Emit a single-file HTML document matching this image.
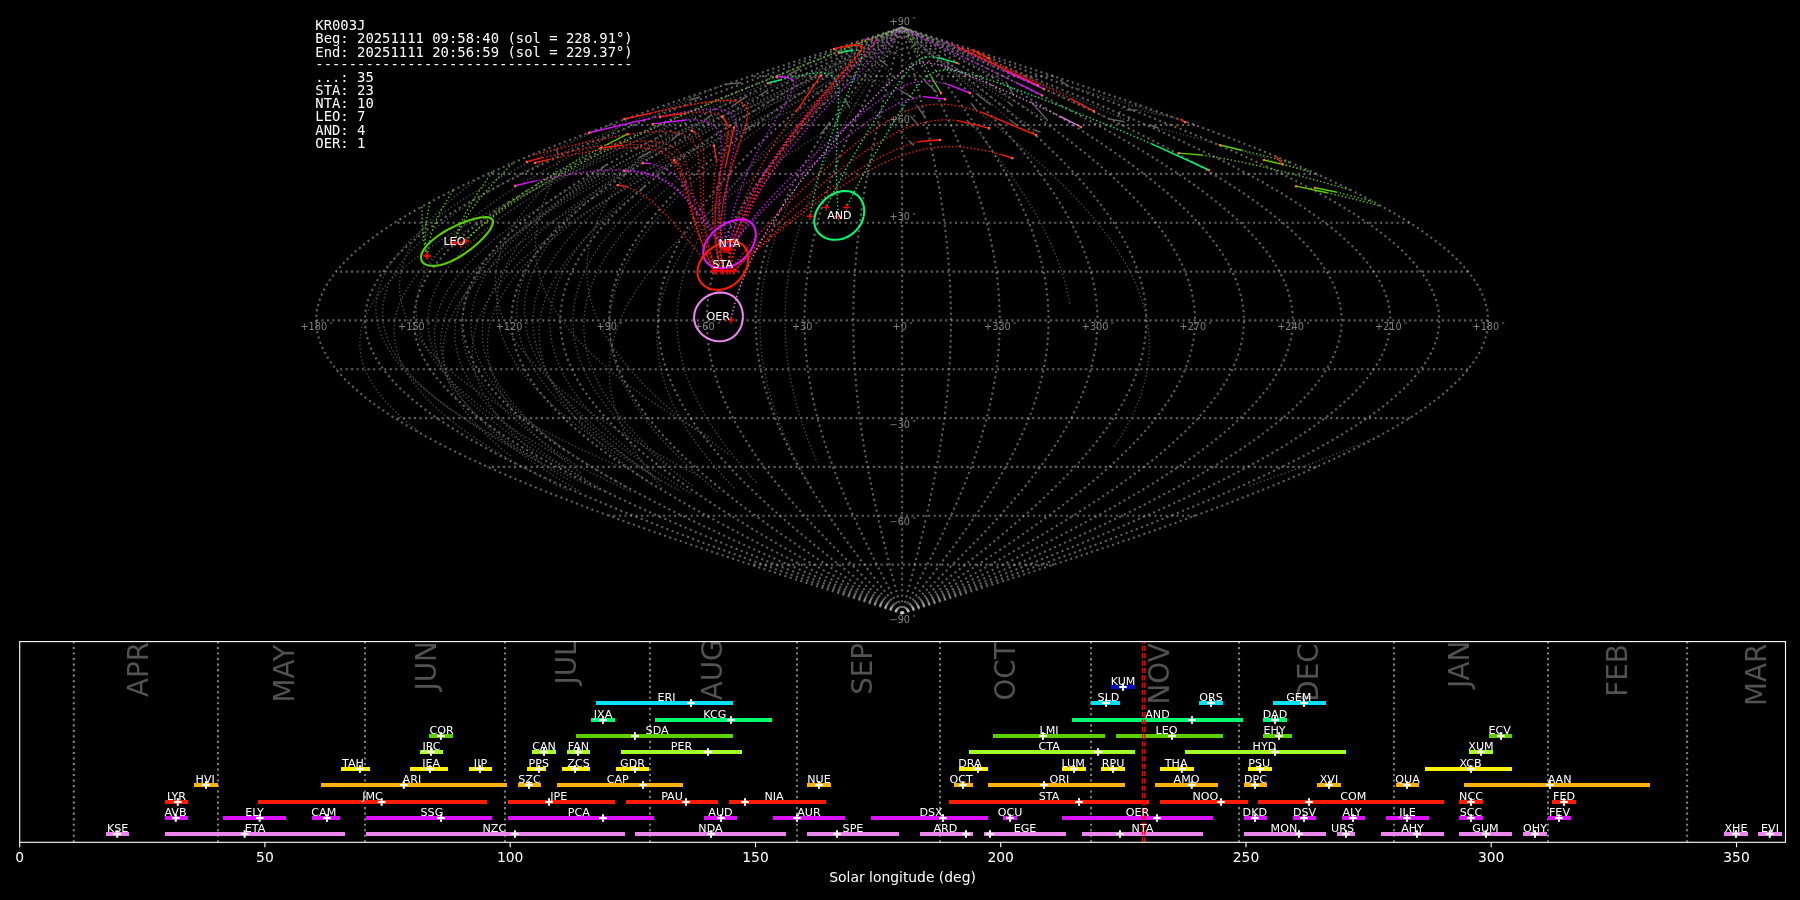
<!DOCTYPE html>
<html lang="en"><head><meta charset="utf-8"><title>KR003J shower association</title>
<style>html,body{margin:0;padding:0;background:#000;width:1800px;height:900px;overflow:hidden}svg{will-change:transform}</style>
</head><body>
<svg width="1800" height="900" viewBox="0 0 1800 900" style="display:block">
<g fill="none" stroke="#c0c0c0" stroke-opacity="0.5" stroke-width="2.083" stroke-dasharray="2.083 3.437">
<path d="M902.1 613.4 L902.1 603.7 L902.1 593.9 L902.1 584.1 L902.1 574.4 L902.1 564.6 L902.1 554.8 L902.1 545.1 L902.1 535.3 L902.1 525.5 L902.1 515.8 L902.1 506 L902.1 496.2 L902.1 486.5 L902.1 476.7 L902.1 466.9 L902.1 457.2 L902.1 447.4 L902.1 437.6 L902.1 427.8 L902.1 418.1 L902.1 408.3 L902.1 398.5 L902.1 388.8 L902.1 379 L902.1 369.2 L902.1 359.5 L902.1 349.7 L902.1 339.9 L902.1 330.2 L902.1 320.4 L902.1 310.6 L902.1 300.9 L902.1 291.1 L902.1 281.3 L902.1 271.6 L902.1 261.8 L902.1 252 L902.1 242.3 L902.1 232.5 L902.1 222.7 L902.1 213 L902.1 203.2 L902.1 193.4 L902.1 183.6 L902.1 173.9 L902.1 164.1 L902.1 154.3 L902.1 144.6 L902.1 134.8 L902.1 125 L902.1 115.3 L902.1 105.5 L902.1 95.7 L902.1 86 L902.1 76.2 L902.1 66.4 L902.1 56.7 L902.1 46.9 L902.1 37.1 L902.1 27.4"/>
<path d="M902.1 613.4 L899.5 603.7 L897 593.9 L894.5 584.1 L891.9 574.4 L889.5 564.6 L887 554.8 L884.6 545.1 L882.2 535.3 L879.9 525.5 L877.7 515.8 L875.5 506 L873.4 496.2 L871.4 486.5 L869.4 476.7 L867.6 466.9 L865.8 457.2 L864.1 447.4 L862.6 437.6 L861.1 427.8 L859.8 418.1 L858.6 408.3 L857.5 398.5 L856.5 388.8 L855.7 379 L854.9 369.2 L854.3 359.5 L853.9 349.7 L853.5 339.9 L853.3 330.2 L853.3 320.4 L853.3 310.6 L853.5 300.9 L853.9 291.1 L854.3 281.3 L854.9 271.6 L855.7 261.8 L856.5 252 L857.5 242.3 L858.6 232.5 L859.8 222.7 L861.1 213 L862.6 203.2 L864.1 193.4 L865.8 183.6 L867.6 173.9 L869.4 164.1 L871.4 154.3 L873.4 144.6 L875.5 134.8 L877.7 125 L879.9 115.3 L882.2 105.5 L884.6 95.7 L887 86 L889.5 76.2 L891.9 66.4 L894.5 56.7 L897 46.9 L899.5 37.1 L902.1 27.4"/>
<path d="M902.1 613.4 L897 603.7 L891.9 593.9 L886.8 584.1 L881.8 574.4 L876.8 564.6 L871.9 554.8 L867.1 545.1 L862.4 535.3 L857.8 525.5 L853.3 515.8 L848.9 506 L844.7 496.2 L840.6 486.5 L836.7 476.7 L833 466.9 L829.5 457.2 L826.2 447.4 L823.1 437.6 L820.2 427.8 L817.5 418.1 L815.1 408.3 L812.9 398.5 L810.9 388.8 L809.2 379 L807.7 369.2 L806.6 359.5 L805.6 349.7 L805 339.9 L804.6 330.2 L804.4 320.4 L804.6 310.6 L805 300.9 L805.6 291.1 L806.6 281.3 L807.7 271.6 L809.2 261.8 L810.9 252 L812.9 242.3 L815.1 232.5 L817.5 222.7 L820.2 213 L823.1 203.2 L826.2 193.4 L829.5 183.6 L833 173.9 L836.7 164.1 L840.6 154.3 L844.7 144.6 L848.9 134.8 L853.3 125 L857.8 115.3 L862.4 105.5 L867.1 95.7 L871.9 86 L876.8 76.2 L881.8 66.4 L886.8 56.7 L891.9 46.9 L897 37.1 L902.1 27.4"/>
<path d="M902.1 613.4 L894.4 603.7 L886.8 593.9 L879.2 584.1 L871.6 574.4 L864.2 564.6 L856.8 554.8 L849.6 545.1 L842.5 535.3 L835.6 525.5 L828.8 515.8 L822.3 506 L816 496.2 L809.9 486.5 L804.1 476.7 L798.5 466.9 L793.2 457.2 L788.2 447.4 L783.6 437.6 L779.2 427.8 L775.2 418.1 L771.5 408.3 L768.2 398.5 L765.3 388.8 L762.8 379 L760.6 369.2 L758.8 359.5 L757.4 349.7 L756.4 339.9 L755.8 330.2 L755.6 320.4 L755.8 310.6 L756.4 300.9 L757.4 291.1 L758.8 281.3 L760.6 271.6 L762.8 261.8 L765.3 252 L768.2 242.3 L771.5 232.5 L775.2 222.7 L779.2 213 L783.6 203.2 L788.2 193.4 L793.2 183.6 L798.5 173.9 L804.1 164.1 L809.9 154.3 L816 144.6 L822.3 134.8 L828.8 125 L835.6 115.3 L842.5 105.5 L849.6 95.7 L856.8 86 L864.2 76.2 L871.6 66.4 L879.2 56.7 L886.8 46.9 L894.4 37.1 L902.1 27.4"/>
<path d="M902.1 613.4 L891.9 603.7 L881.7 593.9 L871.5 584.1 L861.5 574.4 L851.5 564.6 L841.7 554.8 L832.1 545.1 L822.6 535.3 L813.4 525.5 L804.4 515.8 L795.7 506 L787.3 496.2 L779.2 486.5 L771.4 476.7 L764 466.9 L756.9 457.2 L750.3 447.4 L744.1 437.6 L738.3 427.8 L732.9 418.1 L728 408.3 L723.6 398.5 L719.7 388.8 L716.3 379 L713.4 369.2 L711 359.5 L709.1 349.7 L707.8 339.9 L707 330.2 L706.7 320.4 L707 310.6 L707.8 300.9 L709.1 291.1 L711 281.3 L713.4 271.6 L716.3 261.8 L719.7 252 L723.6 242.3 L728 232.5 L732.9 222.7 L738.3 213 L744.1 203.2 L750.3 193.4 L756.9 183.6 L764 173.9 L771.4 164.1 L779.2 154.3 L787.3 144.6 L795.7 134.8 L804.4 125 L813.4 115.3 L822.6 105.5 L832.1 95.7 L841.7 86 L851.5 76.2 L861.5 66.4 L871.5 56.7 L881.7 46.9 L891.9 37.1 L902.1 27.4"/>
<path d="M902.1 613.4 L889.3 603.7 L876.6 593.9 L863.9 584.1 L851.3 574.4 L838.9 564.6 L826.6 554.8 L814.6 545.1 L802.8 535.3 L791.2 525.5 L780 515.8 L769.1 506 L758.6 496.2 L748.4 486.5 L738.7 476.7 L729.4 466.9 L720.6 457.2 L712.3 447.4 L704.5 437.6 L697.3 427.8 L690.6 418.1 L684.5 408.3 L679 398.5 L674.1 388.8 L669.9 379 L666.2 369.2 L663.2 359.5 L660.9 349.7 L659.2 339.9 L658.2 330.2 L657.9 320.4 L658.2 310.6 L659.2 300.9 L660.9 291.1 L663.2 281.3 L666.2 271.6 L669.9 261.8 L674.1 252 L679 242.3 L684.5 232.5 L690.6 222.7 L697.3 213 L704.5 203.2 L712.3 193.4 L720.6 183.6 L729.4 173.9 L738.7 164.1 L748.4 154.3 L758.6 144.6 L769.1 134.8 L780 125 L791.2 115.3 L802.8 105.5 L814.6 95.7 L826.6 86 L838.9 76.2 L851.3 66.4 L863.9 56.7 L876.6 46.9 L889.3 37.1 L902.1 27.4"/>
<path d="M902.1 613.4 L886.8 603.7 L871.5 593.9 L856.3 584.1 L841.2 574.4 L826.3 564.6 L811.5 554.8 L797.1 545.1 L782.9 535.3 L769.1 525.5 L755.6 515.8 L742.5 506 L729.9 496.2 L717.7 486.5 L706 476.7 L694.9 466.9 L684.3 457.2 L674.4 447.4 L665 437.6 L656.3 427.8 L648.3 418.1 L641 408.3 L634.4 398.5 L628.5 388.8 L623.4 379 L619 369.2 L615.5 359.5 L612.7 349.7 L610.7 339.9 L609.5 330.2 L609.1 320.4 L609.5 310.6 L610.7 300.9 L612.7 291.1 L615.5 281.3 L619 271.6 L623.4 261.8 L628.5 252 L634.4 242.3 L641 232.5 L648.3 222.7 L656.3 213 L665 203.2 L674.4 193.4 L684.3 183.6 L694.9 173.9 L706 164.1 L717.7 154.3 L729.9 144.6 L742.5 134.8 L755.6 125 L769.1 115.3 L782.9 105.5 L797.1 95.7 L811.5 86 L826.3 76.2 L841.2 66.4 L856.3 56.7 L871.5 46.9 L886.8 37.1 L902.1 27.4"/>
<path d="M902.1 613.4 L884.2 603.7 L866.4 593.9 L848.6 584.1 L831 574.4 L813.6 564.6 L796.5 554.8 L779.6 545.1 L763 535.3 L746.9 525.5 L731.2 515.8 L715.9 506 L701.1 496.2 L686.9 486.5 L673.3 476.7 L660.4 466.9 L648 457.2 L636.4 447.4 L625.5 437.6 L615.4 427.8 L606 418.1 L597.5 408.3 L589.8 398.5 L582.9 388.8 L577 379 L571.9 369.2 L567.7 359.5 L564.4 349.7 L562.1 339.9 L560.7 330.2 L560.2 320.4 L560.7 310.6 L562.1 300.9 L564.4 291.1 L567.7 281.3 L571.9 271.6 L577 261.8 L582.9 252 L589.8 242.3 L597.5 232.5 L606 222.7 L615.4 213 L625.5 203.2 L636.4 193.4 L648 183.6 L660.4 173.9 L673.3 164.1 L686.9 154.3 L701.1 144.6 L715.9 134.8 L731.2 125 L746.9 115.3 L763 105.5 L779.6 95.7 L796.5 86 L813.6 76.2 L831 66.4 L848.6 56.7 L866.4 46.9 L884.2 37.1 L902.1 27.4"/>
<path d="M902.1 613.4 L881.7 603.7 L861.3 593.9 L841 584.1 L820.9 574.4 L801 564.6 L781.4 554.8 L762.1 545.1 L743.2 535.3 L724.7 525.5 L706.7 515.8 L689.3 506 L672.4 496.2 L656.2 486.5 L640.7 476.7 L625.8 466.9 L611.7 457.2 L598.5 447.4 L586 437.6 L574.4 427.8 L563.7 418.1 L554 408.3 L545.2 398.5 L537.3 388.8 L530.5 379 L524.7 369.2 L519.9 359.5 L516.2 349.7 L513.5 339.9 L511.9 330.2 L511.4 320.4 L511.9 310.6 L513.5 300.9 L516.2 291.1 L519.9 281.3 L524.7 271.6 L530.5 261.8 L537.3 252 L545.2 242.3 L554 232.5 L563.7 222.7 L574.4 213 L586 203.2 L598.5 193.4 L611.7 183.6 L625.8 173.9 L640.7 164.1 L656.2 154.3 L672.4 144.6 L689.3 134.8 L706.7 125 L724.7 115.3 L743.2 105.5 L762.1 95.7 L781.4 86 L801 76.2 L820.9 66.4 L841 56.7 L861.3 46.9 L881.7 37.1 L902.1 27.4"/>
<path d="M902.1 613.4 L879.1 603.7 L856.2 593.9 L833.3 584.1 L810.7 574.4 L788.3 564.6 L766.3 554.8 L744.6 545.1 L723.3 535.3 L702.5 525.5 L682.3 515.8 L662.7 506 L643.7 496.2 L625.5 486.5 L608 476.7 L591.3 466.9 L575.4 457.2 L560.5 447.4 L546.5 437.6 L533.5 427.8 L521.4 418.1 L510.4 408.3 L500.5 398.5 L491.7 388.8 L484.1 379 L477.5 369.2 L472.1 359.5 L468 349.7 L464.9 339.9 L463.1 330.2 L462.5 320.4 L463.1 310.6 L464.9 300.9 L468 291.1 L472.1 281.3 L477.5 271.6 L484.1 261.8 L491.7 252 L500.5 242.3 L510.4 232.5 L521.4 222.7 L533.5 213 L546.5 203.2 L560.5 193.4 L575.4 183.6 L591.3 173.9 L608 164.1 L625.5 154.3 L643.7 144.6 L662.7 134.8 L682.3 125 L702.5 115.3 L723.3 105.5 L744.6 95.7 L766.3 86 L788.3 76.2 L810.7 66.4 L833.3 56.7 L856.2 46.9 L879.1 37.1 L902.1 27.4"/>
<path d="M902.1 613.4 L876.5 603.7 L851 593.9 L825.7 584.1 L800.6 574.4 L775.7 564.6 L751.2 554.8 L727.1 545.1 L703.4 535.3 L680.4 525.5 L657.9 515.8 L636.1 506 L615 496.2 L594.7 486.5 L575.3 476.7 L556.7 466.9 L539.1 457.2 L522.5 447.4 L507 437.6 L492.5 427.8 L479.1 418.1 L466.9 408.3 L455.9 398.5 L446.1 388.8 L437.6 379 L430.3 369.2 L424.4 359.5 L419.7 349.7 L416.4 339.9 L414.4 330.2 L413.7 320.4 L414.4 310.6 L416.4 300.9 L419.7 291.1 L424.4 281.3 L430.3 271.6 L437.6 261.8 L446.1 252 L455.9 242.3 L466.9 232.5 L479.1 222.7 L492.5 213 L507 203.2 L522.5 193.4 L539.1 183.6 L556.7 173.9 L575.3 164.1 L594.7 154.3 L615 144.6 L636.1 134.8 L657.9 125 L680.4 115.3 L703.4 105.5 L727.1 95.7 L751.2 86 L775.7 76.2 L800.6 66.4 L825.7 56.7 L851 46.9 L876.5 37.1 L902.1 27.4"/>
<path d="M902.1 613.4 L874 603.7 L845.9 593.9 L818.1 584.1 L790.4 574.4 L763.1 564.6 L736.1 554.8 L709.6 545.1 L683.6 535.3 L658.2 525.5 L633.5 515.8 L609.5 506 L586.3 496.2 L564 486.5 L542.6 476.7 L522.2 466.9 L502.9 457.2 L484.6 447.4 L467.5 437.6 L451.5 427.8 L436.8 418.1 L423.4 408.3 L411.3 398.5 L400.5 388.8 L391.2 379 L383.2 369.2 L376.6 359.5 L371.5 349.7 L367.8 339.9 L365.6 330.2 L364.9 320.4 L365.6 310.6 L367.8 300.9 L371.5 291.1 L376.6 281.3 L383.2 271.6 L391.2 261.8 L400.5 252 L411.3 242.3 L423.4 232.5 L436.8 222.7 L451.5 213 L467.5 203.2 L484.6 193.4 L502.9 183.6 L522.2 173.9 L542.6 164.1 L564 154.3 L586.3 144.6 L609.5 134.8 L633.5 125 L658.2 115.3 L683.6 105.5 L709.6 95.7 L736.1 86 L763.1 76.2 L790.4 66.4 L818.1 56.7 L845.9 46.9 L874 37.1 L902.1 27.4"/>
<path d="M902.1 613.4 L871.4 603.7 L840.8 593.9 L810.4 584.1 L780.2 574.4 L750.4 564.6 L721 554.8 L692.1 545.1 L663.7 535.3 L636 525.5 L609.1 515.8 L582.9 506 L557.6 496.2 L533.3 486.5 L509.9 476.7 L487.7 466.9 L466.6 457.2 L446.6 447.4 L428 437.6 L410.6 427.8 L394.5 418.1 L379.9 408.3 L366.7 398.5 L354.9 388.8 L344.7 379 L336 369.2 L328.8 359.5 L323.2 349.7 L319.2 339.9 L316.8 330.2 L316 320.4 L316.8 310.6 L319.2 300.9 L323.2 291.1 L328.8 281.3 L336 271.6 L344.7 261.8 L354.9 252 L366.7 242.3 L379.9 232.5 L394.5 222.7 L410.6 213 L428 203.2 L446.6 193.4 L466.6 183.6 L487.7 173.9 L509.9 164.1 L533.3 154.3 L557.6 144.6 L582.9 134.8 L609.1 125 L636 115.3 L663.7 105.5 L692.1 95.7 L721 86 L750.4 76.2 L780.2 66.4 L810.4 56.7 L840.8 46.9 L871.4 37.1 L902.1 27.4"/>
<path d="M902.1 613.4 L932.8 603.7 L963.4 593.9 L993.8 584.1 L1024 574.4 L1053.8 564.6 L1083.2 554.8 L1112.1 545.1 L1140.5 535.3 L1168.2 525.5 L1195.1 515.8 L1221.3 506 L1246.6 496.2 L1270.9 486.5 L1294.3 476.7 L1316.5 466.9 L1337.6 457.2 L1357.6 447.4 L1376.2 437.6 L1393.6 427.8 L1409.7 418.1 L1424.3 408.3 L1437.5 398.5 L1449.3 388.8 L1459.5 379 L1468.2 369.2 L1475.4 359.5 L1481 349.7 L1485 339.9 L1487.4 330.2 L1488.2 320.4 L1487.4 310.6 L1485 300.9 L1481 291.1 L1475.4 281.3 L1468.2 271.6 L1459.5 261.8 L1449.3 252 L1437.5 242.3 L1424.3 232.5 L1409.7 222.7 L1393.6 213 L1376.2 203.2 L1357.6 193.4 L1337.6 183.6 L1316.5 173.9 L1294.3 164.1 L1270.9 154.3 L1246.6 144.6 L1221.3 134.8 L1195.1 125 L1168.2 115.3 L1140.5 105.5 L1112.1 95.7 L1083.2 86 L1053.8 76.2 L1024 66.4 L993.8 56.7 L963.4 46.9 L932.8 37.1 L902.1 27.4"/>
<path d="M902.1 613.4 L930.2 603.7 L958.3 593.9 L986.1 584.1 L1013.8 574.4 L1041.1 564.6 L1068.1 554.8 L1094.6 545.1 L1120.6 535.3 L1146 525.5 L1170.7 515.8 L1194.7 506 L1217.9 496.2 L1240.2 486.5 L1261.6 476.7 L1282 466.9 L1301.3 457.2 L1319.6 447.4 L1336.7 437.6 L1352.7 427.8 L1367.4 418.1 L1380.8 408.3 L1392.9 398.5 L1403.7 388.8 L1413 379 L1421 369.2 L1427.6 359.5 L1432.7 349.7 L1436.4 339.9 L1438.6 330.2 L1439.3 320.4 L1438.6 310.6 L1436.4 300.9 L1432.7 291.1 L1427.6 281.3 L1421 271.6 L1413 261.8 L1403.7 252 L1392.9 242.3 L1380.8 232.5 L1367.4 222.7 L1352.7 213 L1336.7 203.2 L1319.6 193.4 L1301.3 183.6 L1282 173.9 L1261.6 164.1 L1240.2 154.3 L1217.9 144.6 L1194.7 134.8 L1170.7 125 L1146 115.3 L1120.6 105.5 L1094.6 95.7 L1068.1 86 L1041.1 76.2 L1013.8 66.4 L986.1 56.7 L958.3 46.9 L930.2 37.1 L902.1 27.4"/>
<path d="M902.1 613.4 L927.7 603.7 L953.2 593.9 L978.5 584.1 L1003.6 574.4 L1028.5 564.6 L1053 554.8 L1077.1 545.1 L1100.8 535.3 L1123.8 525.5 L1146.3 515.8 L1168.1 506 L1189.2 496.2 L1209.5 486.5 L1228.9 476.7 L1247.5 466.9 L1265.1 457.2 L1281.7 447.4 L1297.2 437.6 L1311.7 427.8 L1325.1 418.1 L1337.3 408.3 L1348.3 398.5 L1358.1 388.8 L1366.6 379 L1373.9 369.2 L1379.8 359.5 L1384.5 349.7 L1387.8 339.9 L1389.8 330.2 L1390.5 320.4 L1389.8 310.6 L1387.8 300.9 L1384.5 291.1 L1379.8 281.3 L1373.9 271.6 L1366.6 261.8 L1358.1 252 L1348.3 242.3 L1337.3 232.5 L1325.1 222.7 L1311.7 213 L1297.2 203.2 L1281.7 193.4 L1265.1 183.6 L1247.5 173.9 L1228.9 164.1 L1209.5 154.3 L1189.2 144.6 L1168.1 134.8 L1146.3 125 L1123.8 115.3 L1100.8 105.5 L1077.1 95.7 L1053 86 L1028.5 76.2 L1003.6 66.4 L978.5 56.7 L953.2 46.9 L927.7 37.1 L902.1 27.4"/>
<path d="M902.1 613.4 L925.1 603.7 L948 593.9 L970.9 584.1 L993.5 574.4 L1015.9 564.6 L1037.9 554.8 L1059.6 545.1 L1080.9 535.3 L1101.7 525.5 L1121.9 515.8 L1141.5 506 L1160.5 496.2 L1178.7 486.5 L1196.2 476.7 L1212.9 466.9 L1228.8 457.2 L1243.7 447.4 L1257.7 437.6 L1270.7 427.8 L1282.8 418.1 L1293.8 408.3 L1303.7 398.5 L1312.5 388.8 L1320.1 379 L1326.7 369.2 L1332.1 359.5 L1336.2 349.7 L1339.3 339.9 L1341.1 330.2 L1341.7 320.4 L1341.1 310.6 L1339.3 300.9 L1336.2 291.1 L1332.1 281.3 L1326.7 271.6 L1320.1 261.8 L1312.5 252 L1303.7 242.3 L1293.8 232.5 L1282.8 222.7 L1270.7 213 L1257.7 203.2 L1243.7 193.4 L1228.8 183.6 L1212.9 173.9 L1196.2 164.1 L1178.7 154.3 L1160.5 144.6 L1141.5 134.8 L1121.9 125 L1101.7 115.3 L1080.9 105.5 L1059.6 95.7 L1037.9 86 L1015.9 76.2 L993.5 66.4 L970.9 56.7 L948 46.9 L925.1 37.1 L902.1 27.4"/>
<path d="M902.1 613.4 L922.5 603.7 L942.9 593.9 L963.2 584.1 L983.3 574.4 L1003.2 564.6 L1022.8 554.8 L1042.1 545.1 L1061 535.3 L1079.5 525.5 L1097.5 515.8 L1114.9 506 L1131.8 496.2 L1148 486.5 L1163.5 476.7 L1178.4 466.9 L1192.5 457.2 L1205.7 447.4 L1218.2 437.6 L1229.8 427.8 L1240.5 418.1 L1250.2 408.3 L1259 398.5 L1266.9 388.8 L1273.7 379 L1279.5 369.2 L1284.3 359.5 L1288 349.7 L1290.7 339.9 L1292.3 330.2 L1292.8 320.4 L1292.3 310.6 L1290.7 300.9 L1288 291.1 L1284.3 281.3 L1279.5 271.6 L1273.7 261.8 L1266.9 252 L1259 242.3 L1250.2 232.5 L1240.5 222.7 L1229.8 213 L1218.2 203.2 L1205.7 193.4 L1192.5 183.6 L1178.4 173.9 L1163.5 164.1 L1148 154.3 L1131.8 144.6 L1114.9 134.8 L1097.5 125 L1079.5 115.3 L1061 105.5 L1042.1 95.7 L1022.8 86 L1003.2 76.2 L983.3 66.4 L963.2 56.7 L942.9 46.9 L922.5 37.1 L902.1 27.4"/>
<path d="M902.1 613.4 L920 603.7 L937.8 593.9 L955.6 584.1 L973.2 574.4 L990.6 564.6 L1007.7 554.8 L1024.6 545.1 L1041.2 535.3 L1057.3 525.5 L1073 515.8 L1088.3 506 L1103.1 496.2 L1117.3 486.5 L1130.9 476.7 L1143.8 466.9 L1156.2 457.2 L1167.8 447.4 L1178.7 437.6 L1188.8 427.8 L1198.2 418.1 L1206.7 408.3 L1214.4 398.5 L1221.3 388.8 L1227.2 379 L1232.3 369.2 L1236.5 359.5 L1239.8 349.7 L1242.1 339.9 L1243.5 330.2 L1244 320.4 L1243.5 310.6 L1242.1 300.9 L1239.8 291.1 L1236.5 281.3 L1232.3 271.6 L1227.2 261.8 L1221.3 252 L1214.4 242.3 L1206.7 232.5 L1198.2 222.7 L1188.8 213 L1178.7 203.2 L1167.8 193.4 L1156.2 183.6 L1143.8 173.9 L1130.9 164.1 L1117.3 154.3 L1103.1 144.6 L1088.3 134.8 L1073 125 L1057.3 115.3 L1041.2 105.5 L1024.6 95.7 L1007.7 86 L990.6 76.2 L973.2 66.4 L955.6 56.7 L937.8 46.9 L920 37.1 L902.1 27.4"/>
<path d="M902.1 613.4 L917.4 603.7 L932.7 593.9 L947.9 584.1 L963 574.4 L977.9 564.6 L992.7 554.8 L1007.1 545.1 L1021.3 535.3 L1035.1 525.5 L1048.6 515.8 L1061.7 506 L1074.3 496.2 L1086.5 486.5 L1098.2 476.7 L1109.3 466.9 L1119.9 457.2 L1129.8 447.4 L1139.2 437.6 L1147.9 427.8 L1155.9 418.1 L1163.2 408.3 L1169.8 398.5 L1175.7 388.8 L1180.8 379 L1185.2 369.2 L1188.7 359.5 L1191.5 349.7 L1193.5 339.9 L1194.7 330.2 L1195.1 320.4 L1194.7 310.6 L1193.5 300.9 L1191.5 291.1 L1188.7 281.3 L1185.2 271.6 L1180.8 261.8 L1175.7 252 L1169.8 242.3 L1163.2 232.5 L1155.9 222.7 L1147.9 213 L1139.2 203.2 L1129.8 193.4 L1119.9 183.6 L1109.3 173.9 L1098.2 164.1 L1086.5 154.3 L1074.3 144.6 L1061.7 134.8 L1048.6 125 L1035.1 115.3 L1021.3 105.5 L1007.1 95.7 L992.7 86 L977.9 76.2 L963 66.4 L947.9 56.7 L932.7 46.9 L917.4 37.1 L902.1 27.4"/>
<path d="M902.1 613.4 L914.9 603.7 L927.6 593.9 L940.3 584.1 L952.9 574.4 L965.3 564.6 L977.6 554.8 L989.6 545.1 L1001.4 535.3 L1013 525.5 L1024.2 515.8 L1035.1 506 L1045.6 496.2 L1055.8 486.5 L1065.5 476.7 L1074.8 466.9 L1083.6 457.2 L1091.9 447.4 L1099.7 437.6 L1106.9 427.8 L1113.6 418.1 L1119.7 408.3 L1125.2 398.5 L1130.1 388.8 L1134.3 379 L1138 369.2 L1141 359.5 L1143.3 349.7 L1145 339.9 L1146 330.2 L1146.3 320.4 L1146 310.6 L1145 300.9 L1143.3 291.1 L1141 281.3 L1138 271.6 L1134.3 261.8 L1130.1 252 L1125.2 242.3 L1119.7 232.5 L1113.6 222.7 L1106.9 213 L1099.7 203.2 L1091.9 193.4 L1083.6 183.6 L1074.8 173.9 L1065.5 164.1 L1055.8 154.3 L1045.6 144.6 L1035.1 134.8 L1024.2 125 L1013 115.3 L1001.4 105.5 L989.6 95.7 L977.6 86 L965.3 76.2 L952.9 66.4 L940.3 56.7 L927.6 46.9 L914.9 37.1 L902.1 27.4"/>
<path d="M902.1 613.4 L912.3 603.7 L922.5 593.9 L932.7 584.1 L942.7 574.4 L952.7 564.6 L962.5 554.8 L972.1 545.1 L981.6 535.3 L990.8 525.5 L999.8 515.8 L1008.5 506 L1016.9 496.2 L1025 486.5 L1032.8 476.7 L1040.2 466.9 L1047.3 457.2 L1053.9 447.4 L1060.1 437.6 L1065.9 427.8 L1071.3 418.1 L1076.2 408.3 L1080.6 398.5 L1084.5 388.8 L1087.9 379 L1090.8 369.2 L1093.2 359.5 L1095.1 349.7 L1096.4 339.9 L1097.2 330.2 L1097.5 320.4 L1097.2 310.6 L1096.4 300.9 L1095.1 291.1 L1093.2 281.3 L1090.8 271.6 L1087.9 261.8 L1084.5 252 L1080.6 242.3 L1076.2 232.5 L1071.3 222.7 L1065.9 213 L1060.1 203.2 L1053.9 193.4 L1047.3 183.6 L1040.2 173.9 L1032.8 164.1 L1025 154.3 L1016.9 144.6 L1008.5 134.8 L999.8 125 L990.8 115.3 L981.6 105.5 L972.1 95.7 L962.5 86 L952.7 76.2 L942.7 66.4 L932.7 56.7 L922.5 46.9 L912.3 37.1 L902.1 27.4"/>
<path d="M902.1 613.4 L909.8 603.7 L917.4 593.9 L925 584.1 L932.6 574.4 L940 564.6 L947.4 554.8 L954.6 545.1 L961.7 535.3 L968.6 525.5 L975.4 515.8 L981.9 506 L988.2 496.2 L994.3 486.5 L1000.1 476.7 L1005.7 466.9 L1011 457.2 L1016 447.4 L1020.6 437.6 L1025 427.8 L1029 418.1 L1032.7 408.3 L1036 398.5 L1038.9 388.8 L1041.4 379 L1043.6 369.2 L1045.4 359.5 L1046.8 349.7 L1047.8 339.9 L1048.4 330.2 L1048.6 320.4 L1048.4 310.6 L1047.8 300.9 L1046.8 291.1 L1045.4 281.3 L1043.6 271.6 L1041.4 261.8 L1038.9 252 L1036 242.3 L1032.7 232.5 L1029 222.7 L1025 213 L1020.6 203.2 L1016 193.4 L1011 183.6 L1005.7 173.9 L1000.1 164.1 L994.3 154.3 L988.2 144.6 L981.9 134.8 L975.4 125 L968.6 115.3 L961.7 105.5 L954.6 95.7 L947.4 86 L940 76.2 L932.6 66.4 L925 56.7 L917.4 46.9 L909.8 37.1 L902.1 27.4"/>
<path d="M902.1 613.4 L907.2 603.7 L912.3 593.9 L917.4 584.1 L922.4 574.4 L927.4 564.6 L932.3 554.8 L937.1 545.1 L941.8 535.3 L946.4 525.5 L950.9 515.8 L955.3 506 L959.5 496.2 L963.6 486.5 L967.5 476.7 L971.2 466.9 L974.7 457.2 L978 447.4 L981.1 437.6 L984 427.8 L986.7 418.1 L989.1 408.3 L991.3 398.5 L993.3 388.8 L995 379 L996.5 369.2 L997.6 359.5 L998.6 349.7 L999.2 339.9 L999.6 330.2 L999.8 320.4 L999.6 310.6 L999.2 300.9 L998.6 291.1 L997.6 281.3 L996.5 271.6 L995 261.8 L993.3 252 L991.3 242.3 L989.1 232.5 L986.7 222.7 L984 213 L981.1 203.2 L978 193.4 L974.7 183.6 L971.2 173.9 L967.5 164.1 L963.6 154.3 L959.5 144.6 L955.3 134.8 L950.9 125 L946.4 115.3 L941.8 105.5 L937.1 95.7 L932.3 86 L927.4 76.2 L922.4 66.4 L917.4 56.7 L912.3 46.9 L907.2 37.1 L902.1 27.4"/>
<path d="M902.1 613.4 L904.7 603.7 L907.2 593.9 L909.7 584.1 L912.3 574.4 L914.7 564.6 L917.2 554.8 L919.6 545.1 L922 535.3 L924.3 525.5 L926.5 515.8 L928.7 506 L930.8 496.2 L932.8 486.5 L934.8 476.7 L936.6 466.9 L938.4 457.2 L940.1 447.4 L941.6 437.6 L943.1 427.8 L944.4 418.1 L945.6 408.3 L946.7 398.5 L947.7 388.8 L948.5 379 L949.3 369.2 L949.9 359.5 L950.3 349.7 L950.7 339.9 L950.9 330.2 L950.9 320.4 L950.9 310.6 L950.7 300.9 L950.3 291.1 L949.9 281.3 L949.3 271.6 L948.5 261.8 L947.7 252 L946.7 242.3 L945.6 232.5 L944.4 222.7 L943.1 213 L941.6 203.2 L940.1 193.4 L938.4 183.6 L936.6 173.9 L934.8 164.1 L932.8 154.3 L930.8 144.6 L928.7 134.8 L926.5 125 L924.3 115.3 L922 105.5 L919.6 95.7 L917.2 86 L914.7 76.2 L912.3 66.4 L909.7 56.7 L907.2 46.9 L904.7 37.1 L902.1 27.4"/>
<path d="M1053.8 564.6 L750.4 564.6"/>
<path d="M1195.1 515.8 L609.1 515.8"/>
<path d="M1316.5 466.9 L487.7 466.9"/>
<path d="M1409.7 418.1 L394.5 418.1"/>
<path d="M1468.2 369.2 L336 369.2"/>
<path d="M1488.2 320.4 L316 320.4"/>
<path d="M1468.2 271.6 L336 271.6"/>
<path d="M1409.7 222.7 L394.5 222.7"/>
<path d="M1316.5 173.9 L487.7 173.9"/>
<path d="M1195.1 125 L609.1 125"/>
<path d="M1053.8 76.2 L750.4 76.2"/>
</g>
<g font-family="'DejaVu Sans','Liberation Sans',sans-serif" font-size="9.72" fill="#808080">
<text x="889.5" y="622.9">−90</text><text x="912.4" y="620" font-size="6.8">°</text>
<text x="889.5" y="525.3">−60</text><text x="912.4" y="522.4" font-size="6.8">°</text>
<text x="889.5" y="427.6">−30</text><text x="912.4" y="424.7" font-size="6.8">°</text>
<text x="892.6" y="329.9">+0</text><text x="909.3" y="327" font-size="6.8">°</text>
<text x="889.5" y="220.4">+30</text><text x="912.4" y="217.5" font-size="6.8">°</text>
<text x="889.5" y="122.7">+60</text><text x="912.4" y="119.8" font-size="6.8">°</text>
<text x="889.5" y="25.1">+90</text><text x="912.4" y="22.2" font-size="6.8">°</text>
<text x="1472.5" y="329.9">+180</text><text x="1501.5" y="327" font-size="6.8">°</text>
<text x="1374.9" y="329.9">+210</text><text x="1403.8" y="327" font-size="6.8">°</text>
<text x="1277.2" y="329.9">+240</text><text x="1306.2" y="327" font-size="6.8">°</text>
<text x="1179.5" y="329.9">+270</text><text x="1208.5" y="327" font-size="6.8">°</text>
<text x="1081.8" y="329.9">+300</text><text x="1110.8" y="327" font-size="6.8">°</text>
<text x="984.1" y="329.9">+330</text><text x="1013.1" y="327" font-size="6.8">°</text>
<text x="791.9" y="329.9">+30</text><text x="814.7" y="327" font-size="6.8">°</text>
<text x="694.2" y="329.9">+60</text><text x="717" y="327" font-size="6.8">°</text>
<text x="596.5" y="329.9">+90</text><text x="619.3" y="327" font-size="6.8">°</text>
<text x="495.7" y="329.9">+120</text><text x="524.7" y="327" font-size="6.8">°</text>
<text x="398.1" y="329.9">+150</text><text x="427" y="327" font-size="6.8">°</text>
<text x="300.4" y="329.9">+180</text><text x="329.4" y="327" font-size="6.8">°</text>
</g>
<g fill="none" stroke="#666666" stroke-opacity="0.7" stroke-width="1.389" stroke-dasharray="1.389 2.292">
<path d="M638.9 157.8 L636.5 159.1 L634 160.3 L631.6 161.6 L629.2 162.8 L626.8 164.1 L624.5 165.4 L622.1 166.6 L619.7 167.9 L617.4 169.1 L615.1 170.4 L612.8 171.7 L610.4 172.9 L608.2 174.2 L605.9 175.4 L603.6 176.7 L601.4 178 L599.1 179.2 L596.9 180.5 L594.7 181.8 L592.5 183 L590.3 184.3 L588.1 185.6 L586 186.8 L583.8 188.1 L581.7 189.4 L579.6 190.7 L577.5 191.9 L575.4 193.2 L573.3 194.5 L571.2 195.7 L569.2 197 L567.2 198.3 L565.2 199.5 L563.2 200.8 L561.2 202.1 L559.2 203.4 L557.3 204.6 L555.3 205.9 L553.4 207.2 L551.5 208.5 L549.6 209.7 L547.7 211 L545.9 212.3 L544 213.5 L542.2 214.8 L540.4 216.1 L538.6 217.4 L536.9 218.6 L535.1 219.9 L533.4 221.2 L531.6 222.5 L529.9 223.8 L528.2 225 L526.6 226.3 L524.9 227.6 L523.3 228.9 L521.7 230.1 L520.1 231.4 L518.5 232.7 L516.9 234 L515.4 235.2 L513.8 236.5 L512.3 237.8 L510.8 239.1 L509.4 240.4 L507.9 241.6 L506.5 242.9 L505.1 244.2 L503.7 245.5 L502.3 246.7 L500.9 248 L499.6 249.3 L498.2 250.6 L496.9 251.9 L495.6 253.1 L494.4 254.4 L493.1 255.7 L491.9 257 L490.7 258.3 L489.5 259.5 L488.3 260.8 L487.2 262.1 L486 263.4 L484.9 264.7 L483.8 265.9 L482.7 267.2 L481.7 268.5 L480.6 269.8 L479.6 271.1 L478.6 272.3 L477.7 273.6 L476.7 274.9 L475.8 276.2 L474.8 277.5 L474 278.7 L473.1 280 L472.2 281.3 L471.4 282.6 L470.6 283.9 L469.8 285.1 L469 286.4 L468.2 287.7 L467.5 289 L466.8 290.3 L466.1 291.6 L465.4 292.8 L464.8 294.1 L464.1 295.4 L463.5 296.7 L462.9 298 L462.4 299.2 L461.8 300.5 L461.3 301.8 L460.8 303.1 L460.3 304.4 L459.8 305.6 L459.4 306.9 L459 308.2 L458.6 309.5 L458.2 310.8 L457.8 312.1 L457.5 313.3 L457.2 314.6 L456.9 315.9 L456.6 317.2 L456.3 318.5 L456.1 319.7 L455.9 321 L455.7 322.3 L455.5 323.6 L455.4 324.9 L455.3 326.2 L455.1 327.4 L455.1 328.7 L455 330 L454.9 331.3 L454.9 332.6 L454.9 333.8 L454.9 335.1 L455 336.4 L455 337.7 L455.1 339 L455.2 340.3 L455.4 341.5 L455.5 342.8 L455.7 344.1 L455.8 345.4 L456.1 346.7 L456.3 347.9 L456.5 349.2 L456.8 350.5 L457.1 351.8 L457.4 353.1 L457.7 354.3 L458.1 355.6 L458.5 356.9 L458.9 358.2 L459.3 359.5 L459.7 360.8 L460.2 362 L460.7 363.3 L461.2 364.6 L461.7 365.9 L462.2 367.2 L462.8 368.4 L463.4 369.7 L464 371 L464.6 372.3 L465.3 373.6 L465.9 374.8 L466.6 376.1 L467.3 377.4 L468 378.7 L468.8 380 L469.6 381.2 L470.4 382.5 L471.2 383.8 L472 385.1 L472.8 386.4 L473.7 387.6 L474.6 388.9 L475.5 390.2 L476.4 391.5 L477.4 392.8 L478.4 394 L479.3 395.3 L480.3 396.6 L481.4 397.9 L482.4 399.1 L483.5 400.4 L484.6 401.7 L485.7 403 L486.8 404.3 L488 405.5 L489.1 406.8 L490.3 408.1 L491.5 409.4 L492.7 410.6 L494 411.9 L495.2 413.2 L496.5 414.5 L497.8 415.7 L499.1 417 L500.5 418.3 L501.8 419.6 L503.2 420.8 L504.6 422.1 L506 423.4 L507.4 424.7 L508.8 425.9 L510.3 427.2 L511.8 428.5 L513.3 429.8 L514.8 431 L516.3 432.3 L517.9 433.6 L519.5 434.9 L521 436.1 L522.6 437.4 L524.3 438.7 L525.9 440 L527.6 441.2 L529.2 442.5 L530.9 443.8 L532.6 445 L534.4 446.3 L536.1 447.6 L537.8 448.8 L539.6 450.1 L541.4 451.4 L543.2 452.7 L545 453.9 L546.9 455.2 L548.7 456.5 L550.6 457.7 L552.5 459 L554.4 460.3 L556.3 461.5 L558.2 462.8 L560.2 464.1 L562.1 465.3 L564.1 466.6 L566.1 467.9 L568.1 469.1 L570.1 470.4 L572.1 471.6 L574.2 472.9 L576.2 474.2 L578.3 475.4 L580.4 476.7 L582.5 477.9 L584.6 479.2 L586.7 480.5 L588.9 481.7 L591 483 L593.2 484.2 L595.4 485.5 L597.6 486.7 L599.8 488 L602 489.2 L604.2 490.5 L606.4 491.7 L608.7 493 L611 494.2"/>
<path d="M640 191.1 L638.3 192.4 L636.6 193.7 L634.9 194.9 L633.2 196.2 L631.5 197.5 L629.9 198.8 L628.2 200.1 L626.6 201.3 L625 202.6 L623.4 203.9 L621.8 205.2 L620.2 206.5 L618.7 207.7 L617.1 209 L615.6 210.3 L614 211.6 L612.5 212.9 L611 214.2 L609.5 215.4 L608.1 216.7 L606.6 218 L605.2 219.3 L603.7 220.6 L602.3 221.8 L600.9 223.1 L599.5 224.4 L598.2 225.7 L596.8 227 L595.5 228.3 L594.1 229.5 L592.8 230.8 L591.5 232.1 L590.2 233.4 L589 234.7 L587.7 236 L586.5 237.3 L585.2 238.5 L584 239.8 L582.8 241.1 L581.6 242.4 L580.5 243.7 L579.3 245 L578.2 246.2 L577.1 247.5 L576 248.8 L574.9 250.1 L573.8 251.4 L572.7 252.7 L571.7 254 L570.7 255.2 L569.6 256.5 L568.7 257.8 L567.7 259.1 L566.7 260.4 L565.8 261.7 L564.8 263 L563.9 264.2 L563 265.5 L562.1 266.8 L561.2 268.1 L560.4 269.4 L559.6 270.7 L558.7 272 L557.9 273.2 L557.1 274.5 L556.4 275.8 L555.6 277.1 L554.9 278.4 L554.2 279.7 L553.5 281 L552.8 282.3 L552.1 283.5 L551.4 284.8 L550.8 286.1 L550.2 287.4 L549.6 288.7 L549 290 L548.4 291.3 L547.9 292.5 L547.3 293.8 L546.8 295.1 L546.3 296.4 L545.8 297.7 L545.3 299 L544.9 300.3 L544.4 301.6 L544 302.8 L543.6 304.1 L543.2 305.4 L542.9 306.7 L542.5 308 L542.2 309.3 L541.9 310.6 L541.6 311.9 L541.3 313.1 L541 314.4 L540.8 315.7 L540.5 317 L540.3 318.3 L540.1 319.6 L539.9 320.9 L539.8 322.1 L539.6 323.4 L539.5 324.7 L539.4 326 L539.3 327.3 L539.2 328.6 L539.2 329.9 L539.1 331.2 L539.1 332.4 L539.1 333.7 L539.1 335 L539.1 336.3 L539.2 337.6 L539.2 338.9 L539.3 340.2 L539.4 341.5 L539.5 342.7 L539.7 344 L539.8 345.3 L540 346.6 L540.2 347.9 L540.4 349.2 L540.6 350.5 L540.8 351.8 L541.1 353 L541.3 354.3 L541.6 355.6 L541.9 356.9 L542.2 358.2 L542.6 359.5 L542.9 360.8 L543.3 362 L543.7 363.3 L544.1 364.6 L544.5 365.9 L545 367.2 L545.4 368.5 L545.9 369.8 L546.4 371 L546.9 372.3 L547.4 373.6 L547.9 374.9 L548.5 376.2 L549.1 377.5 L549.7 378.8 L550.3 380.1 L550.9 381.3 L551.5 382.6 L552.2 383.9 L552.9 385.2 L553.6 386.5 L554.3 387.8 L555 389.1 L555.7 390.3 L556.5 391.6 L557.3 392.9 L558.1 394.2 L558.9 395.5 L559.7 396.8 L560.5 398 L561.4 399.3 L562.2 400.6 L563.1 401.9 L564 403.2 L564.9 404.5 L565.9 405.8 L566.8 407 L567.8 408.3 L568.8 409.6 L569.8 410.9 L570.8 412.2 L571.8 413.5 L572.9 414.7 L573.9 416 L575 417.3 L576.1 418.6 L577.2 419.9 L578.3 421.2 L579.4 422.4 L580.6 423.7 L581.8 425 L582.9 426.3 L584.1 427.6 L585.4 428.9 L586.6 430.1 L587.8 431.4 L589.1 432.7 L590.3 434 L591.6 435.3 L592.9 436.5 L594.2 437.8 L595.6 439.1 L596.9 440.4 L598.3 441.7 L599.6 442.9 L601 444.2 L602.4 445.5 L603.8 446.8 L605.2 448.1 L606.7 449.3 L608.1 450.6 L609.6 451.9 L611.1 453.2 L612.6 454.5 L614.1 455.7 L615.6 457 L617.1 458.3 L618.7 459.6 L620.2 460.8 L621.8 462.1 L623.4 463.4 L625 464.7 L626.6 465.9 L628.2 467.2 L629.8 468.5 L631.5 469.8 L633.1 471 L634.8 472.3 L636.5 473.6 L638.2 474.9 L639.9 476.1 L641.6 477.4 L643.3 478.7 L645.1 479.9 L646.8 481.2 L648.6 482.5 L650.3 483.8"/>
<path d="M557.8 153.3 L558 153.8 L558.1 154.2 L558.3 154.7 L558.4 155.2 L558.5 155.7 L558.5 156.2 L558.6 156.7 L558.6 157.2 L558.7 157.7 L558.7 158.3 L558.7 158.8 L558.6 159.4 L558.6 159.9 L558.5 160.5 L558.5 161.1 L558.4 161.7 L558.3 162.3 L558.2 162.9 L558 163.5 L557.9 164.1 L557.8 164.8 L557.6 165.4 L557.4 166 L557.2 166.7 L557.1 167.3 L556.8 168 L556.6 168.7 L556.4 169.4 L556.2 170.1 L555.9 170.7 L555.7 171.4 L555.4 172.2 L555.2 172.9 L554.9 173.6 L554.6 174.3 L554.4 175 L554.1 175.8 L553.8 176.5 L553.5 177.3 L553.2 178 L552.9 178.8 L552.6 179.6 L552.3 180.3 L551.9 181.1 L551.6 181.9 L551.3 182.7 L551 183.5 L550.6 184.3 L550.3 185.1 L550 185.9 L549.6 186.7 L549.3 187.5 L549 188.4 L548.6 189.2 L548.3 190 L548 190.9 L547.6 191.7 L547.3 192.5 L547 193.4 L546.6 194.3 L546.3 195.1 L546 196 L545.6 196.8 L545.3 197.7 L545 198.6 L544.7 199.5 L544.3 200.3 L544 201.2 L543.7 202.1 L543.4 203 L543.1 203.9 L542.8 204.8 L542.5 205.7 L542.2 206.6 L541.9 207.5 L541.6 208.4 L541.3 209.4 L541.1 210.3 L540.8 211.2 L540.5 212.1 L540.3 213 L540 214 L539.7 214.9 L539.5 215.8 L539.3 216.8 L539 217.7 L538.8 218.7 L538.6 219.6 L538.4 220.6 L538.1 221.5 L537.9 222.5 L537.7 223.4 L537.6 224.4 L537.4 225.4 L537.2 226.3 L537 227.3 L536.9 228.2 L536.7 229.2 L536.6 230.2 L536.4 231.2 L536.3 232.1 L536.2 233.1 L536.1 234.1 L536 235.1 L535.9 236.1 L535.8 237.1 L535.7 238 L535.6 239 L535.6 240 L535.5 241 L535.5 242 L535.4 243 L535.4 244 L535.4 245 L535.4 246 L535.4 247 L535.4 248 L535.4 249 L535.4 250 L535.5 251 L535.5 252 L535.6 253.1 L535.7 254.1 L535.7 255.1 L535.8 256.1 L535.9 257.1 L536 258.1 L536.2 259.2 L536.3 260.2 L536.4 261.2 L536.6 262.2 L536.7 263.2 L536.9 264.3 L537.1 265.3 L537.3 266.3 L537.5 267.4 L537.7 268.4 L537.9 269.4 L538.1 270.4 L538.4 271.5 L538.6 272.5 L538.9 273.5 L539.2 274.6 L539.5 275.6 L539.8 276.6 L540.1 277.7 L540.4 278.7 L540.7 279.8 L541.1 280.8 L541.4 281.8 L541.8 282.9 L542.1 283.9 L542.5 285 L542.9 286 L543.3 287 L543.7 288.1 L544.2 289.1 L544.6 290.2 L545.1 291.2 L545.5 292.3 L546 293.3 L546.5 294.4 L547 295.4 L547.5 296.5 L548 297.5 L548.5 298.6 L549.1 299.6 L549.6 300.7 L550.2 301.7 L550.8 302.8 L551.3 303.8 L551.9 304.9 L552.5 305.9 L553.2 307 L553.8 308 L554.4 309.1 L555.1 310.1 L555.7 311.2 L556.4 312.2 L557.1 313.3 L557.8 314.3 L558.5 315.4 L559.2 316.4 L559.9 317.5 L560.7 318.5 L561.4 319.6 L562.2 320.6 L562.9 321.7 L563.7 322.7 L564.5 323.8 L565.3 324.8 L566.1 325.9 L566.9 326.9 L567.8 328 L568.6 329 L569.5 330.1 L570.3 331.2 L571.2 332.2 L572.1 333.3 L573 334.3 L573.9 335.4 L574.8 336.4 L575.8 337.5 L576.7 338.5 L577.7 339.6 L578.6 340.6 L579.6 341.7 L580.6 342.7 L581.5 343.8 L582.5 344.8 L583.6 345.8 L584.6 346.9 L585.6 347.9 L586.6 349 L587.7 350 L588.8 351.1 L589.8 352.1 L590.9 353.2 L592 354.2 L593.1 355.3 L594.2 356.3 L595.3 357.3 L596.4 358.4 L597.6 359.4 L598.7 360.5 L599.9 361.5 L601 362.5 L602.2 363.6 L603.4 364.6 L604.6 365.6 L605.8 366.7 L607 367.7 L608.2 368.7 L609.4 369.8 L610.6 370.8 L611.9 371.8 L613.1 372.9 L614.4 373.9 L615.7 374.9 L616.9 376 L618.2 377 L619.5 378 L620.8 379 L622.1 380.1 L623.4 381.1 L624.7 382.1 L626.1 383.1 L627.4 384.1 L628.8 385.1 L630.1 386.2 L631.5 387.2 L632.8 388.2 L634.2 389.2 L635.6 390.2 L637 391.2 L638.4 392.2 L639.8 393.2 L641.2 394.2 L642.6 395.2 L644 396.2 L645.5 397.2 L646.9 398.2 L648.3 399.2 L649.8 400.2 L651.2 401.2 L652.7 402.2 L654.2 403.2 L655.6 404.2 L657.1 405.2 L658.6 406.1 L660.1 407.1 L661.6 408.1 L663.1 409.1 L664.6 410.1 L666.1 411 L667.6 412 L669.1 413 L670.6 413.9 L672.2 414.9 L673.7 415.9 L675.2 416.8 L676.8 417.8 L678.3 418.7 L679.9 419.7 L681.4 420.7 L683 421.6 L684.5 422.5 L686.1 423.5 L687.7 424.4 L689.3 425.4 L690.8 426.3 L692.4 427.2 L694 428.2 L695.6 429.1 L697.2 430 L698.8 430.9 L700.4 431.8 L701.9 432.8 L703.5 433.7 L705.2 434.6 L706.8 435.5 L708.4 436.4 L710 437.3 L711.6 438.2"/>
<path d="M725.8 84.4 L722.6 85.6 L719.5 86.8 L716.3 88 L713.2 89.3 L710 90.5 L706.8 91.7 L703.7 93 L700.5 94.2 L697.4 95.4 L694.2 96.7 L691.1 97.9 L687.9 99.1 L684.8 100.4 L681.7 101.6 L678.5 102.9 L675.4 104.1 L672.3 105.4 L669.2 106.6 L666.1 107.9 L663 109.1 L659.9 110.4 L656.8 111.6 L653.7 112.9 L650.6 114.2 L647.6 115.4 L644.5 116.7 L641.5 117.9 L638.4 119.2 L635.4 120.5 L632.4 121.7 L629.4 123 L626.4 124.3 L623.4 125.5 L620.5 126.8 L617.5 128.1 L614.6 129.3 L611.6 130.6 L608.7 131.9 L605.8 133.2 L602.9 134.4 L600 135.7 L597.1 137 L594.2 138.3 L591.4 139.5 L588.6 140.8 L585.7 142.1 L582.9 143.4 L580.1 144.6 L577.4 145.9 L574.6 147.2 L571.8 148.5 L569.1 149.7 L566.4 151 L563.7 152.3 L561 153.6 L558.3 154.9 L555.6 156.1 L553 157.4 L550.4 158.7 L547.7 160 L545.1 161.3 L542.6 162.5 L540 163.8 L537.4 165.1 L534.9 166.4 L532.4 167.7 L529.9 168.9 L527.4 170.2 L524.9 171.5 L522.5 172.8 L520.1 174.1 L517.7 175.4 L515.3 176.6 L512.9 177.9 L510.5 179.2 L508.2 180.5 L505.9 181.8 L503.6 183.1 L501.3 184.4 L499 185.6 L496.8 186.9 L494.5 188.2 L492.3 189.5 L490.1 190.8 L488 192.1 L485.8 193.4 L483.7 194.6 L481.6 195.9 L479.5 197.2 L477.4 198.5 L475.3 199.8 L473.3 201.1 L471.3 202.4 L469.3 203.7 L467.3 204.9 L465.4 206.2 L463.4 207.5 L461.5 208.8 L459.6 210.1 L457.8 211.4 L455.9 212.7 L454.1 214 L452.3 215.2 L450.5 216.5 L448.7 217.8 L447 219.1 L445.3 220.4 L443.6 221.7 L441.9 223 L440.3 224.3 L438.6 225.6 L437 226.8 L435.4 228.1 L433.9 229.4 L432.3 230.7 L430.8 232 L429.3 233.3 L427.8 234.6 L426.4 235.9 L424.9 237.2 L423.5 238.4 L422.1 239.7 L420.8 241 L419.4 242.3 L418.1 243.6 L416.8 244.9 L415.6 246.2 L414.3 247.5 L413.1 248.8 L411.9 250.1 L410.7 251.3 L409.6 252.6 L408.4 253.9 L407.3 255.2 L406.2 256.5 L405.2 257.8 L404.1 259.1 L403.1 260.4 L402.1 261.7 L401.2 263 L400.2 264.3 L399.3 265.5 L398.4 266.8 L397.6 268.1 L396.7 269.4 L395.9 270.7 L395.1 272 L394.3 273.3 L393.6 274.6 L392.8 275.9 L392.1 277.2 L391.5 278.5 L390.8 279.7 L390.2 281 L389.6 282.3 L389 283.6 L388.5 284.9 L387.9 286.2 L387.4 287.5 L387 288.8 L386.5 290.1 L386.1 291.4 L385.7 292.7 L385.3 293.9 L384.9 295.2 L384.6 296.5 L384.3 297.8 L384 299.1 L383.8 300.4 L383.5 301.7 L383.3 303 L383.2 304.3 L383 305.6 L382.9 306.9 L382.8 308.2 L382.7 309.4 L382.6 310.7 L382.6 312 L382.6 313.3 L382.6 314.6 L382.7 315.9 L382.7 317.2 L382.8 318.5 L382.9 319.8 L383.1 321.1 L383.2 322.4 L383.4 323.6 L383.7 324.9 L383.9 326.2 L384.2 327.5 L384.5 328.8 L384.8 330.1 L385.1 331.4 L385.5 332.7 L385.9 334 L386.3 335.3 L386.7 336.6 L387.2 337.9 L387.7 339.1 L388.2 340.4 L388.7 341.7 L389.3 343 L389.9 344.3 L390.5 345.6 L391.1 346.9 L391.8 348.2 L392.5 349.5 L393.2 350.8 L393.9 352.1 L394.7 353.4 L395.5 354.6 L396.3 355.9 L397.1 357.2 L398 358.5 L398.9 359.8 L399.8 361.1 L400.7 362.4 L401.6 363.7 L402.6 365 L403.6 366.3 L404.6 367.6 L405.7 368.8 L406.8 370.1 L407.9 371.4 L409 372.7 L410.1 374 L411.3 375.3 L412.5 376.6 L413.7 377.9 L414.9 379.2 L416.2 380.5 L417.5 381.8 L418.8 383 L420.1 384.3 L421.5 385.6 L422.8 386.9 L424.2 388.2 L425.7 389.5 L427.1 390.8 L428.6 392.1 L430.1 393.4 L431.6 394.7 L433.1 395.9 L434.7 397.2 L436.2 398.5 L437.8 399.8 L439.5 401.1 L441.1 402.4 L442.8 403.7 L444.5 405 L446.2 406.3 L447.9 407.6 L449.7 408.8 L451.4 410.1 L453.2 411.4 L455.1 412.7 L456.9 414 L458.8 415.3 L460.6 416.6 L462.5 417.9 L464.5 419.2 L466.4 420.4 L468.4 421.7 L470.4 423 L472.4 424.3 L474.4 425.6 L476.4 426.9 L478.5 428.2 L480.6 429.5 L482.7 430.8 L484.8 432 L487 433.3 L489.1 434.6 L491.3 435.9 L493.5 437.2 L495.7 438.5 L498 439.8 L500.3 441.1 L502.5 442.3 L504.8 443.6 L507.2 444.9 L509.5 446.2 L511.8 447.5 L514.2 448.8 L516.6 450.1 L519 451.3 L521.5 452.6 L523.9 453.9 L526.4 455.2 L528.8 456.5 L531.3 457.8 L533.9 459.1 L536.4 460.3 L538.9 461.6 L541.5 462.9 L544.1 464.2 L546.7 465.5 L549.3 466.8 L551.9 468 L554.6 469.3 L557.3 470.6 L559.9 471.9 L562.6 473.2 L565.3 474.5 L568.1 475.7 L570.8 477 L573.6 478.3 L576.3 479.6 L579.1 480.9 L581.9 482.1 L584.8 483.4 L587.6 484.7 L590.4 486 L593.3 487.3 L596.2 488.5 L599 489.8"/>
<path d="M732.2 106.1 L729.5 107.4 L726.7 108.7 L724 110 L721.3 111.3 L718.6 112.6 L715.9 113.9 L713.2 115.2 L710.5 116.5 L707.8 117.7 L705.1 119 L702.5 120.3 L699.8 121.6 L697.2 122.9 L694.6 124.2 L691.9 125.5 L689.3 126.8 L686.7 128.1 L684.1 129.4 L681.6 130.7 L679 132 L676.4 133.3 L673.9 134.6 L671.4 135.9 L668.8 137.2 L666.3 138.5 L663.8 139.8 L661.3 141.1 L658.8 142.4 L656.4 143.7 L653.9 145 L651.5 146.3 L649 147.5 L646.6 148.8 L644.2 150.1 L641.8 151.4 L639.4 152.7 L637.1 154 L634.7 155.3 L632.4 156.6 L630 157.9 L627.7 159.2 L625.4 160.5 L623.1 161.8 L620.8 163.1 L618.6 164.4 L616.3 165.7 L614.1 167 L611.9 168.3 L609.7 169.6 L607.5 170.9 L605.3 172.2 L603.1 173.5 L601 174.8 L598.8 176.1 L596.7 177.4 L594.6 178.7 L592.5 180 L590.4 181.3 L588.3 182.6 L586.3 183.9 L584.3 185.2 L582.2 186.5 L580.2 187.8 L578.2 189.1 L576.3 190.4 L574.3 191.7 L572.4 193 L570.5 194.2 L568.5 195.5 L566.7 196.8 L564.8 198.1 L562.9 199.4 L561.1 200.7 L559.2 202 L557.4 203.3 L555.6 204.6 L553.9 205.9 L552.1 207.2 L550.4 208.5 L548.6 209.8 L546.9 211.1 L545.2 212.4 L543.6 213.7 L541.9 215 L540.3 216.3 L538.6 217.6 L537 218.9 L535.4 220.2 L533.9 221.5 L532.3 222.8 L530.8 224.1 L529.3 225.4 L527.8 226.7 L526.3 228 L524.8 229.3 L523.4 230.6 L522 231.9 L520.6 233.2 L519.2 234.5 L517.8 235.8 L516.5 237.1 L515.1 238.4 L513.8 239.7 L512.5 241 L511.2 242.3 L510 243.6 L508.7 244.9 L507.5 246.2 L506.3 247.5 L505.1 248.8 L504 250.1 L502.8 251.4 L501.7 252.7 L500.6 254 L499.5 255.3 L498.5 256.6 L497.4 257.9 L496.4 259.1 L495.4 260.4 L494.4 261.7 L493.4 263 L492.5 264.3 L491.6 265.6 L490.7 266.9 L489.8 268.2 L488.9 269.5 L488.1 270.8 L487.2 272.1 L486.4 273.4 L485.6 274.7 L484.9 276 L484.1 277.3 L483.4 278.6 L482.7 279.9 L482 281.2 L481.3 282.5 L480.7 283.8 L480.1 285.1 L479.5 286.4 L478.9 287.7 L478.3 289 L477.8 290.3 L477.3 291.6 L476.8 292.9 L476.3 294.2 L475.8 295.5 L475.4 296.8 L475 298.1 L474.6 299.4 L474.2 300.7 L473.8 302 L473.5 303.3 L473.2 304.6 L472.9 305.9 L472.6 307.2 L472.3 308.5 L472.1 309.8 L471.9 311.1 L471.7 312.4 L471.5 313.7 L471.4 315 L471.3 316.3 L471.2 317.6 L471.1 318.9 L471 320.2 L471 321.5 L470.9 322.8 L470.9 324.1 L471 325.4 L471 326.7 L471.1 328 L471.1 329.3 L471.2 330.6 L471.4 331.9 L471.5 333.2 L471.7 334.5 L471.9 335.8 L472.1 337 L472.3 338.3 L472.5 339.6 L472.8 340.9 L473.1 342.2 L473.4 343.5 L473.7 344.8 L474.1 346.1 L474.5 347.4 L474.9 348.7 L475.3 350 L475.7 351.3 L476.2 352.6 L476.6 353.9 L477.1 355.2 L477.6 356.5 L478.2 357.8 L478.7 359.1 L479.3 360.4 L479.9 361.7 L480.5 363 L481.2 364.3 L481.8 365.6 L482.5 366.9 L483.2 368.2 L483.9 369.5 L484.7 370.8 L485.4 372.1 L486.2 373.4 L487 374.7 L487.8 376 L488.7 377.3 L489.6 378.6 L490.4 379.9 L491.3 381.2 L492.3 382.5 L493.2 383.8 L494.2 385.1 L495.1 386.4 L496.1 387.7 L497.2 389 L498.2 390.3 L499.3 391.6 L500.3 392.9 L501.4 394.2 L502.6 395.5 L503.7 396.8 L504.9 398.1 L506 399.4 L507.2 400.7 L508.4 402 L509.7 403.3 L510.9 404.6 L512.2 405.9 L513.5 407.2 L514.8 408.5 L516.1 409.7 L517.5 411 L518.8 412.3 L520.2 413.6 L521.6 414.9 L523 416.2 L524.5 417.5 L525.9 418.8 L527.4 420.1 L528.9 421.4 L530.4 422.7 L531.9 424 L533.5 425.3 L535.1 426.6 L536.6 427.9 L538.2 429.2 L539.9 430.5 L541.5 431.8 L543.2 433.1 L544.8 434.4 L546.5 435.7 L548.2 437 L549.9 438.3 L551.7 439.6 L553.4 440.9 L555.2 442.2 L557 443.5 L558.8 444.8 L560.6 446.1 L562.5 447.4 L564.3 448.7 L566.2 450 L568.1 451.3 L570 452.6 L571.9 453.9 L573.8 455.2 L575.8 456.5 L577.8 457.8 L579.7 459.1 L581.7 460.4 L583.8 461.7 L585.8 463 L587.8 464.3 L589.9 465.6 L592 466.9 L594.1 468.1 L596.2 469.4 L598.3 470.7 L600.4 472 L602.6 473.3 L604.7 474.6 L606.9 475.9 L609.1 477.2 L611.3 478.5 L613.5 479.8 L615.8 481.1 L618 482.4 L620.3 483.7 L622.5 485 L624.8 486.3 L627.1 487.6"/>
<path d="M788.9 74.4 L785.7 75.7 L782.5 77 L779.4 78.3 L776.2 79.6 L773 80.9 L769.9 82.2 L766.7 83.4 L763.6 84.7 L760.4 86 L757.3 87.3 L754.2 88.6 L751 89.9 L747.9 91.2 L744.8 92.5 L741.7 93.8 L738.6 95.1 L735.5 96.4 L732.4 97.7 L729.4 99 L726.3 100.3 L723.3 101.6 L720.2 102.9 L717.2 104.2 L714.1 105.5 L711.1 106.8 L708.1 108.1 L705.1 109.4 L702.1 110.6 L699.1 111.9 L696.2 113.2 L693.2 114.5 L690.2 115.8 L687.3 117.1 L684.4 118.4 L681.4 119.7 L678.5 121 L675.6 122.3 L672.7 123.6 L669.9 124.9 L667 126.2 L664.1 127.5 L661.3 128.8 L658.5 130.1 L655.6 131.4 L652.8 132.7 L650 134 L647.2 135.3 L644.5 136.6 L641.7 137.9 L638.9 139.2 L636.2 140.5 L633.5 141.8 L630.8 143.1 L628.1 144.4 L625.4 145.7 L622.7 147 L620.1 148.3 L617.4 149.6 L614.8 150.9 L612.2 152.2 L609.6 153.5 L607 154.8 L604.4 156.1 L601.8 157.4 L599.3 158.7 L596.8 160 L594.2 161.3 L591.7 162.6 L589.3 163.9 L586.8 165.1 L584.3 166.4 L581.9 167.7 L579.5 169 L577.1 170.3 L574.7 171.6 L572.3 172.9 L569.9 174.2 L567.6 175.5 L565.2 176.8 L562.9 178.1 L560.6 179.4 L558.3 180.7 L556.1 182 L553.8 183.3 L551.6 184.6 L549.4 185.9 L547.2 187.2 L545 188.5 L542.9 189.8 L540.7 191.1 L538.6 192.4 L536.5 193.7 L534.4 195 L532.3 196.3 L530.2 197.6 L528.2 198.9 L526.2 200.2 L524.2 201.5 L522.2 202.8 L520.2 204.1 L518.3 205.4 L516.4 206.7 L514.5 208 L512.6 209.3 L510.7 210.6 L508.8 211.9 L507 213.2 L505.2 214.5 L503.4 215.8 L501.6 217.1 L499.9 218.4 L498.1 219.7 L496.4 221 L494.7 222.3 L493 223.6 L491.4 224.9 L489.7 226.2 L488.1 227.5 L486.5 228.8 L484.9 230.1 L483.4 231.4 L481.8 232.7 L480.3 234 L478.8 235.3 L477.3 236.6 L475.9 237.9 L474.5 239.2 L473 240.5 L471.6 241.8 L470.3 243.1 L468.9 244.4 L467.6 245.7 L466.3 247 L465 248.3 L463.7 249.6 L462.5 250.9 L461.2 252.2 L460 253.5 L458.9 254.7 L457.7 256 L456.6 257.3 L455.4 258.6 L454.3 259.9 L453.3 261.2 L452.2 262.5 L451.2 263.8 L450.2 265.1 L449.2 266.4 L448.2 267.7 L447.3 269 L446.4 270.3 L445.5 271.6 L444.6 272.9 L443.7 274.2 L442.9 275.5 L442.1 276.8 L441.3 278.1 L440.5 279.4 L439.8 280.7 L439.1 282 L438.4 283.3 L437.7 284.6 L437 285.9 L436.4 287.2 L435.8 288.5 L435.2 289.8 L434.6 291.1 L434.1 292.4 L433.6 293.7 L433.1 295 L432.6 296.3 L432.2 297.6 L431.7 298.9 L431.3 300.2 L431 301.5 L430.6 302.8 L430.3 304.1 L430 305.4 L429.7 306.7 L429.4 308 L429.2 309.3 L428.9 310.6 L428.7 311.9 L428.6 313.2 L428.4 314.5 L428.3 315.8 L428.2 317.1 L428.1 318.4 L428 319.7 L428 321 L428 322.3 L428 323.6 L428 324.9 L428.1 326.2 L428.1 327.5 L428.2 328.8 L428.4 330.1 L428.5 331.4 L428.7 332.7 L428.9 334 L429.1 335.3 L429.3 336.6 L429.6 337.9 L429.9 339.2 L430.2 340.5 L430.5 341.8 L430.9 343.1 L431.2 344.4 L431.6 345.7 L432.1 347 L432.5 348.3 L433 349.6 L433.5 350.9 L434 352.2 L434.5 353.5 L435.1 354.8 L435.6 356.1 L436.2 357.4 L436.9 358.7 L437.5 360 L438.2 361.3 L438.9 362.6 L439.6 363.8 L440.3 365.1 L441.1 366.4 L441.9 367.7 L442.7 369 L443.5 370.3 L444.4 371.6 L445.2 372.9 L446.1 374.2 L447 375.5 L448 376.8 L448.9 378.1 L449.9 379.4 L450.9 380.7 L451.9 382 L453 383.3 L454.1 384.6 L455.1 385.9 L456.3 387.2 L457.4 388.5 L458.5 389.8 L459.7 391.1 L460.9 392.4 L462.1 393.7 L463.4 395 L464.6 396.3 L465.9 397.6 L467.2 398.9 L468.6 400.2 L469.9 401.5 L471.3 402.8 L472.7 404.1 L474.1 405.4 L475.5 406.7 L477 408 L478.4 409.3 L479.9 410.6 L481.4 411.9 L483 413.2 L484.5 414.5 L486.1 415.8 L487.7 417.1 L489.3 418.4 L490.9 419.7 L492.6 421 L494.3 422.3 L495.9 423.6 L497.7 424.9 L499.4 426.2 L501.1 427.5 L502.9 428.8 L504.7 430.1 L506.5 431.4 L508.3 432.7 L510.2 434 L512.1 435.3 L513.9 436.6 L515.8 437.9 L517.8 439.2 L519.7 440.5 L521.7 441.8 L523.7 443.1 L525.7 444.4 L527.7 445.7 L529.7 447 L531.8 448.3 L533.8 449.6 L535.9 450.9 L538 452.2 L540.1 453.5 L542.3 454.8 L544.4 456.1 L546.6 457.4 L548.8 458.7 L551 460 L553.2 461.2 L555.5 462.5 L557.7 463.8 L560 465.1 L562.3 466.4 L564.6 467.7 L566.9 469 L569.3 470.3 L571.6 471.6 L574 472.9 L576.4 474.2 L578.8 475.5 L581.2 476.8 L583.7 478.1 L586.1 479.4"/>
<path d="M925 81.1 L923.9 80 L922.8 78.8 L921.8 77.7 L920.7 76.5 L919.6 75.4 L918.6 74.3 L917.5 73.2 L916.5 72.1 L915.4 71.1 L914.3 70 L913.3 68.9 L912.2 67.9 L911.2 66.9 L910.2 65.9 L909.1 64.9 L908.1 63.9 L907.1 63 L906 62 L905 61.1 L904 60.3 L903 59.4 L902 58.6 L900.9 57.8 L899.9 57.1 L898.9 56.3 L897.9 55.7 L896.8 55.1 L895.8 54.5 L894.7 54 L893.7 53.5 L892.6 53.1 L891.5 52.7 L890.3 52.4 L889.2 52.2 L888 52 L886.7 51.9 L885.4 51.9 L884.1 51.9 L882.7 52.1 L881.3 52.2 L879.8 52.5 L878.3 52.8 L876.7 53.1 L875 53.6 L873.3 54.1 L871.5 54.6 L869.7 55.2 L867.8 55.8 L865.9 56.5 L863.9 57.2 L861.9 58 L859.8 58.7 L857.7 59.6 L855.6 60.4 L853.4 61.3 L851.1 62.2 L848.9 63.1 L846.6 64.1 L844.2 65.1 L841.9 66.1 L839.5 67.1 L837.1 68.1 L834.7 69.1 L832.3 70.2 L829.8 71.3 L827.3 72.3 L824.8 73.4 L822.3 74.5 L819.8 75.7 L817.3 76.8 L814.7 77.9 L812.2 79 L809.6 80.2 L807.1 81.3 L804.5 82.5 L801.9 83.6 L799.3 84.8 L796.7 86 L794.1 87.2 L791.5 88.4 L788.9 89.5 L786.3 90.7 L783.7 91.9 L781.1 93.1 L778.5 94.3 L775.9 95.5 L773.2 96.8 L770.6 98 L768 99.2 L765.4 100.4 L762.8 101.6 L760.2 102.8 L757.6 104.1 L755 105.3 L752.4 106.5 L749.8 107.8 L747.2 109 L744.6 110.2 L742 111.5 L739.4 112.7 L736.8 114 L734.2 115.2 L731.7 116.4 L729.1 117.7 L726.5 118.9 L724 120.2 L721.4 121.4 L718.9 122.7 L716.3 123.9 L713.8 125.2 L711.3 126.4 L708.8 127.7 L706.3 129 L703.8 130.2 L701.3 131.5 L698.8 132.7 L696.3 134 L693.8 135.3 L691.4 136.5 L688.9 137.8 L686.4 139 L684 140.3 L681.6 141.6 L679.2 142.8 L676.7 144.1 L674.3 145.4 L671.9 146.6 L669.6 147.9 L667.2 149.2 L664.8 150.4 L662.5 151.7 L660.1 153 L657.8 154.3 L655.5 155.5 L653.2 156.8 L650.9 158.1 L648.6 159.3 L646.3 160.6 L644 161.9 L641.8 163.2 L639.5 164.4 L637.3 165.7 L635.1 167 L632.9 168.3 L630.7 169.5 L628.5 170.8 L626.3 172.1 L624.1 173.4 L622 174.6 L619.9 175.9 L617.7 177.2 L615.6 178.5 L613.5 179.7 L611.4 181 L609.4 182.3 L607.3 183.6 L605.3 184.9 L603.2 186.1 L601.2 187.4 L599.2 188.7 L597.2 190 L595.3 191.3 L593.3 192.5 L591.4 193.8 L589.4 195.1 L587.5 196.4 L585.6 197.7 L583.7 198.9 L581.8 200.2 L580 201.5 L578.1 202.8 L576.3 204.1 L574.5 205.4 L572.7 206.6 L570.9 207.9 L569.1 209.2 L567.4 210.5 L565.7 211.8 L563.9 213.1 L562.2 214.3 L560.5 215.6 L558.9 216.9 L557.2 218.2 L555.6 219.5 L554 220.8 L552.3 222 L550.8 223.3 L549.2 224.6 L547.6 225.9 L546.1 227.2 L544.6 228.5 L543.1 229.7 L541.6 231 L540.1 232.3 L538.6 233.6 L537.2 234.9 L535.8 236.2 L534.4 237.5 L533 238.7 L531.6 240 L530.3 241.3 L528.9 242.6 L527.6 243.9 L526.3 245.2 L525 246.5 L523.8 247.7 L522.5 249 L521.3 250.3 L520.1 251.6 L518.9 252.9 L517.7 254.2 L516.6 255.5 L515.4 256.8 L514.3 258 L513.2 259.3 L512.1 260.6 L511.1 261.9 L510 263.2 L509 264.5 L508 265.8 L507 267 L506 268.3 L505.1 269.6 L504.1 270.9 L503.2 272.2 L502.3 273.5 L501.5 274.8 L500.6 276.1 L499.8 277.3 L498.9 278.6 L498.1 279.9 L497.4 281.2 L496.6 282.5 L495.9 283.8 L495.1 285.1 L494.4 286.4 L493.8 287.6 L493.1 288.9 L492.4 290.2 L491.8 291.5 L491.2 292.8 L490.6 294.1 L490.1 295.4 L489.5 296.7 L489 297.9 L488.5 299.2 L488 300.5 L487.5 301.8 L487.1 303.1 L486.7 304.4 L486.3 305.7 L485.9 307 L485.5 308.3 L485.1 309.5 L484.8 310.8 L484.5 312.1 L484.2 313.4 L484 314.7 L483.7 316 L483.5 317.3 L483.3 318.6 L483.1 319.8 L482.9 321.1 L482.8 322.4 L482.6 323.7 L482.5 325 L482.4 326.3 L482.4 327.6 L482.3 328.9 L482.3 330.2 L482.3 331.4 L482.3 332.7 L482.3 334 L482.4 335.3 L482.4 336.6 L482.5 337.9 L482.6 339.2 L482.8 340.5 L482.9 341.7 L483.1 343 L483.3 344.3 L483.5 345.6 L483.7 346.9 L484 348.2 L484.2 349.5 L484.5 350.8 L484.8 352 L485.2 353.3 L485.5 354.6 L485.9 355.9 L486.3 357.2 L486.7 358.5 L487.1 359.8 L487.6 361.1 L488 362.3 L488.5 363.6 L489 364.9 L489.6 366.2 L490.1 367.5 L490.7 368.8 L491.3 370.1 L491.9 371.4 L492.5 372.6 L493.1 373.9 L493.8 375.2 L494.5 376.5 L495.2 377.8 L495.9 379.1 L496.7 380.4 L497.4 381.7 L498.2 382.9 L499 384.2 L499.8 385.5 L500.7 386.8 L501.5 388.1 L502.4 389.4 L503.3 390.7 L504.2 391.9 L505.1 393.2 L506.1 394.5 L507.1 395.8 L508 397.1 L509.1 398.4 L510.1 399.7 L511.1 401 L512.2 402.2 L513.3 403.5 L514.4 404.8 L515.5 406.1 L516.6 407.4 L517.8 408.7 L519 409.9 L520.1 411.2 L521.4 412.5 L522.6 413.8 L523.8 415.1 L525.1 416.4 L526.4 417.7 L527.7 418.9 L529 420.2 L530.3 421.5 L531.7 422.8 L533 424.1 L534.4 425.4 L535.8 426.6 L537.2 427.9 L538.7 429.2 L540.1 430.5 L541.6 431.8 L543.1 433.1 L544.6 434.3 L546.1 435.6 L547.6 436.9 L549.2 438.2 L550.8 439.5 L552.4 440.8 L554 442 L555.6 443.3 L557.2 444.6 L558.9 445.9 L560.5 447.2 L562.2 448.4 L563.9 449.7 L565.6 451"/>
<path d="M976.7 93.9 L975.3 92.6 L973.9 91.3 L972.4 90 L971 88.7 L969.6 87.4 L968.1 86.1 L966.7 84.8 L965.2 83.5 L963.8 82.2 L962.3 80.9 L960.9 79.6 L959.4 78.3 L958 77 L956.5 75.7 L955.1 74.4 L953.6 73.1 L952.1 71.8 L950.6 70.5 L949.2 69.2 L947.7 67.9 L946.2 66.6 L944.7 65.3 L943.3 64 L941.8 62.7 L940.3 61.4 L938.8 60.1 L937.3 58.8 L935.8 57.5 L934.3 56.2 L932.8 54.9 L931.3 53.6 L929.8 52.3 L928.3 51 L926.8 49.7 L925.3 48.4 L923.8 47.2 L922.3 45.9 L920.8 44.6 L919.3 43.3 L917.8 42 L916.3 40.7 L914.8 39.4 L913.3 38.1 L911.8 36.8 L910.3 35.5 L908.8 34.2 L907.4 33 L905.9 31.7 L904.5 30.5 L903.1 29.4 L901.8 28.6 L900.3 29 L898.2 30 L895.8 31.2 L893.3 32.4 L890.8 33.7 L888.2 35 L885.7 36.3 L883.2 37.6 L880.6 38.9 L878.1 40.2 L875.5 41.4 L872.9 42.7 L870.4 44 L867.8 45.3 L865.3 46.6 L862.7 47.9 L860.2 49.2 L857.6 50.5 L855.1 51.8 L852.5 53.1 L850 54.4 L847.5 55.7 L844.9 57 L842.4 58.3 L839.8 59.6 L837.3 60.9 L834.8 62.2 L832.3 63.5 L829.7 64.8 L827.2 66.1 L824.7 67.4 L822.2 68.7 L819.7 70 L817.2 71.3 L814.7 72.6 L812.2 73.9 L809.7 75.2 L807.2 76.5 L804.7 77.8 L802.3 79.1 L799.8 80.4 L797.3 81.7 L794.9 83 L792.4 84.3 L790 85.6 L787.5 86.9 L785.1 88.2 L782.6 89.5 L780.2 90.8 L777.8 92.1 L775.4 93.4 L772.9 94.7 L770.5 96 L768.1 97.3 L765.8 98.6 L763.4 99.9 L761 101.2 L758.6 102.5 L756.3 103.8 L753.9 105.1 L751.5 106.4 L749.2 107.7 L746.9 109 L744.5 110.3 L742.2 111.6 L739.9 112.9 L737.6 114.2 L735.3 115.5 L733 116.8 L730.7 118.1 L728.5 119.4 L726.2 120.7 L723.9 122 L721.7 123.3 L719.5 124.6 L717.2 125.9 L715 127.2 L712.8 128.5 L710.6 129.8 L708.4 131.1 L706.2 132.4 L704 133.7 L701.9 134.9 L699.7 136.2 L697.6 137.5 L695.4 138.8 L693.3 140.1 L691.2 141.4 L689.1 142.7 L687 144 L684.9 145.3 L682.8 146.6 L680.8 147.9 L678.7 149.2 L676.7 150.5 L674.7 151.8 L672.6 153.1 L670.6 154.4 L668.6 155.7 L666.7 157 L664.7 158.3 L662.7 159.6 L660.8 160.9 L658.8 162.2 L656.9 163.5 L655 164.8 L653.1 166.1 L651.2 167.4 L649.3 168.7 L647.4 170 L645.6 171.3 L643.7 172.6 L641.9 173.9 L640.1 175.2 L638.3 176.5 L636.5 177.8 L634.7 179.1 L633 180.4 L631.2 181.7 L629.5 183 L627.7 184.3 L626 185.6 L624.3 186.9 L622.6 188.2 L621 189.5 L619.3 190.8 L617.7 192.1 L616 193.4 L614.4 194.7 L612.8 196 L611.2 197.3 L609.6 198.6 L608.1 199.9 L606.5 201.2 L605 202.5 L603.5 203.8 L602 205.1 L600.5 206.4 L599 207.7 L597.6 209 L596.1 210.3 L594.7 211.6 L593.3 212.9 L591.9 214.2 L590.5 215.5 L589.1 216.8 L587.8 218.1 L586.4 219.4 L585.1 220.7 L583.8 222 L582.5 223.3 L581.2 224.6 L580 225.9 L578.7 227.2 L577.5 228.5 L576.3 229.8 L575.1 231.1 L573.9 232.4 L572.7 233.7 L571.6 235 L570.4 236.3 L569.3 237.6 L568.2 238.9 L567.1 240.2 L566 241.5 L565 242.8 L563.9 244.1 L562.9 245.4 L561.9 246.7 L560.9 248 L560 249.3 L559 250.6 L558.1 251.9 L557.1 253.2 L556.2 254.5 L555.3 255.8 L554.5 257.1 L553.6 258.4 L552.8 259.7 L552 261 L551.1 262.3 L550.4 263.6 L549.6 264.9 L548.8 266.2 L548.1 267.5 L547.4 268.8 L546.7 270.1 L546 271.4 L545.3 272.7 L544.7 274 L544 275.3 L543.4 276.6 L542.8 277.9 L542.2 279.2 L541.7 280.5 L541.1 281.8 L540.6 283.1 L540.1 284.4 L539.6 285.7 L539.1 287 L538.7 288.3 L538.2 289.6 L537.8 290.9 L537.4 292.2 L537 293.5 L536.6 294.8 L536.3 296.1 L536 297.4 L535.6 298.7 L535.3 300 L535.1 301.3 L534.8 302.6 L534.6 303.9 L534.3 305.2 L534.1 306.5 L533.9 307.8 L533.8 309.1 L533.6 310.4 L533.5 311.7 L533.3 313 L533.2 314.3 L533.2 315.6 L533.1 316.9 L533 318.2 L533 319.4 L533 320.7 L533 322 L533 323.3 L533.1 324.6 L533.1 325.9 L533.2 327.2 L533.3 328.5 L533.4 329.8 L533.5 331.1 L533.7 332.4 L533.9 333.7 L534 335 L534.2 336.3 L534.5 337.6 L534.7 338.9 L535 340.2 L535.2 341.5 L535.5 342.8 L535.8 344.1 L536.2 345.4 L536.5 346.7 L536.9 348 L537.2 349.3 L537.6 350.6 L538.1 351.9 L538.5 353.2 L538.9 354.5 L539.4 355.8 L539.9 357.1 L540.4 358.4 L540.9 359.7 L541.5 361 L542 362.3 L542.6 363.6 L543.2 364.9 L543.8 366.2 L544.4 367.5 L545 368.8 L545.7 370.1 L546.4 371.4 L547.1 372.7 L547.8 374 L548.5 375.3 L549.3 376.6 L550 377.9 L550.8 379.2 L551.6 380.5 L552.4 381.8 L553.3 383.1 L554.1 384.4 L555 385.7 L555.8 387 L556.7 388.3 L557.7 389.6 L558.6 390.9 L559.5 392.2 L560.5 393.5 L561.5 394.8 L562.5 396.1 L563.5 397.4 L564.5 398.7 L565.6 400 L566.6 401.3 L567.7 402.6 L568.8 403.9 L569.9 405.2 L571.1 406.5 L572.2 407.8 L573.4 409.1 L574.6 410.4 L575.7 411.7 L577 413 L578.2 414.3 L579.4 415.6 L580.7 416.9 L581.9 418.2 L583.2 419.5 L584.5 420.8 L585.9 422.1 L587.2 423.4 L588.5 424.7 L589.9 426 L591.3 427.3 L592.7 428.6 L594.1 429.9 L595.5 431.2 L596.9 432.5 L598.4 433.8 L599.9 435.1 L601.3 436.4 L602.8 437.7 L604.4 439 L605.9 440.3 L607.4 441.6 L609 442.9 L610.5 444.2 L612.1 445.5 L613.7 446.8 L615.3 448.1 L617 449.4 L618.6 450.7 L620.3 452 L621.9 453.3 L623.6 454.6 L625.3 455.9 L627 457.2 L628.7 458.5 L630.5 459.8 L632.2 461.1 L634 462.4 L635.7 463.7 L637.5 465 L639.3 466.3 L641.1 467.6 L643 468.9 L644.8 470.2 L646.6 471.5 L648.5 472.8 L650.4 474.1 L652.3 475.4 L654.2 476.7 L656.1 478 L658 479.3 L659.9 480.6 L661.9 481.9"/>
<path d="M1006.1 82.2 L1003.7 80.9 L1001.3 79.6 L998.9 78.3 L996.4 77 L994 75.7 L991.6 74.4 L989.1 73.1 L986.7 71.8 L984.2 70.5 L981.8 69.2 L979.3 67.9 L976.9 66.6 L974.4 65.3 L972 64 L969.5 62.7 L967 61.4 L964.5 60.1 L962.1 58.8 L959.6 57.5 L957.1 56.2 L954.6 54.9 L952.1 53.6 L949.6 52.3 L947.1 51 L944.7 49.7 L942.2 48.4 L939.7 47.1 L937.2 45.8 L934.7 44.5 L932.2 43.2 L929.6 41.9 L927.1 40.6 L924.6 39.3 L922.1 38 L919.6 36.7 L917.1 35.4 L914.6 34.1 L912.1 32.9 L909.6 31.6 L907.1 30.3 L904.7 29 L902.6 28 L901.3 28.6 L899.8 29.8 L898.3 31 L896.7 32.3 L895.2 33.6 L893.6 34.9 L892 36.2 L890.5 37.5 L888.9 38.8 L887.4 40.1 L885.8 41.4 L884.2 42.7 L882.7 44 L881.1 45.3 L879.5 46.6 L878 47.9 L876.4 49.2 L874.9 50.5 L873.3 51.8 L871.8 53.1 L870.2 54.4 L868.7 55.7 L867.1 57 L865.6 58.3 L864 59.6 L862.5 60.9 L860.9 62.2 L859.4 63.5 L857.9 64.8 L856.3 66.1 L854.8 67.4 L853.3 68.7 L851.7 70 L850.2 71.3 L848.7 72.6 L847.2 73.9 L845.6 75.2 L844.1 76.5 L842.6 77.8 L841.1 79.1 L839.6 80.4 L838.1 81.7 L836.6 83 L835.1 84.3 L833.6 85.6 L832.1 86.9 L830.6 88.2 L829.1 89.5 L827.6 90.8 L826.2 92.1 L824.7 93.4 L823.2 94.7 L821.8 96 L820.3 97.3 L818.8 98.6 L817.4 99.9 L815.9 101.2 L814.5 102.5 L813 103.8 L811.6 105.1 L810.2 106.4 L808.7 107.7 L807.3 109 L805.9 110.3 L804.5 111.6 L803.1 112.9 L801.7 114.2 L800.3 115.5 L798.9 116.8 L797.5 118.1 L796.1 119.4 L794.7 120.7 L793.3 121.9 L792 123.2 L790.6 124.5 L789.2 125.8 L787.9 127.1 L786.5 128.4 L785.2 129.7 L783.9 131 L782.5 132.3 L781.2 133.6 L779.9 134.9 L778.6 136.2 L777.3 137.5 L776 138.8 L774.7 140.1 L773.4 141.4 L772.1 142.7 L770.8 144 L769.5 145.3 L768.3 146.6 L767 147.9 L765.8 149.2 L764.5 150.5 L763.3 151.8 L762.1 153.1 L760.8 154.4 L759.6 155.7 L758.4 157 L757.2 158.3 L756 159.6 L754.8 160.9 L753.6 162.2 L752.5 163.5 L751.3 164.8 L750.1 166.1 L749 167.4 L747.8 168.7 L746.7 170 L745.6 171.3 L744.4 172.6 L743.3 173.9 L742.2 175.2 L741.1 176.5 L740 177.8 L738.9 179.1 L737.9 180.4 L736.8 181.7 L735.7 183 L734.7 184.3 L733.6 185.6 L732.6 186.9 L731.6 188.2 L730.6 189.5 L729.6 190.8 L728.6 192.1 L727.6 193.4 L726.6 194.7 L725.6 196 L724.6 197.3 L723.7 198.6 L722.7 199.9 L721.8 201.2 L720.8 202.5 L719.9 203.8 L719 205.1 L718.1 206.4 L717.2 207.7 L716.3 209 L715.4 210.3 L714.5 211.6 L713.7 212.9 L712.8 214.2 L712 215.5 L711.2 216.8 L710.3 218.1 L709.5 219.4 L708.7 220.7 L707.9 222 L707.1 223.3 L706.3 224.6 L705.6 225.9 L704.8 227.2 L704.1 228.5 L703.3 229.8 L702.6 231.1 L701.9 232.4 L701.2 233.7 L700.5 235 L699.8 236.3 L699.1 237.6 L698.4 238.9 L697.7 240.2 L697.1 241.5 L696.5 242.8 L695.8 244.1 L695.2 245.4 L694.6 246.7 L694 248 L693.4 249.3 L692.8 250.6 L692.2 251.9 L691.7 253.2 L691.1 254.5 L690.6 255.8 L690 257.1 L689.5 258.4 L689 259.7 L688.5 261 L688 262.3 L687.5 263.6 L687.1 264.9 L686.6 266.2 L686.2 267.5 L685.7 268.8 L685.3 270.1 L684.9 271.4 L684.5 272.7 L684.1 274 L683.7 275.3 L683.3 276.6 L683 277.9 L682.6 279.2 L682.3 280.5 L681.9 281.8 L681.6 283.1 L681.3 284.4 L681 285.7 L680.7 287 L680.4 288.3 L680.2 289.6 L679.9 290.9 L679.7 292.2 L679.4 293.5 L679.2 294.8 L679 296.1 L678.8 297.4 L678.6 298.7 L678.4 300 L678.2 301.3 L678.1 302.6 L677.9 303.9 L677.8 305.2 L677.7 306.5 L677.6 307.8 L677.5 309.1 L677.4 310.4 L677.3 311.7 L677.2 313 L677.1 314.3 L677.1 315.5 L677.1 316.8 L677 318.1 L677 319.4 L677 320.7 L677 322 L677 323.3 L677 324.6 L677.1 325.9 L677.1 327.2 L677.2 328.5 L677.3 329.8 L677.3 331.1 L677.4 332.4 L677.5 333.7 L677.6 335 L677.8 336.3 L677.9 337.6 L678 338.9 L678.2 340.2 L678.4 341.5 L678.6 342.8 L678.7 344.1 L678.9 345.4 L679.2 346.7 L679.4 348 L679.6 349.3 L679.8 350.6 L680.1 351.9 L680.4 353.2 L680.6 354.5 L680.9 355.8 L681.2 357.1 L681.5 358.4 L681.9 359.7 L682.2 361 L682.5 362.3 L682.9 363.6 L683.2 364.9 L683.6 366.2 L684 367.5 L684.4 368.8 L684.8 370.1 L685.2 371.4 L685.6 372.7 L686.1 374 L686.5 375.3 L687 376.6 L687.4 377.9 L687.9 379.2 L688.4 380.5 L688.9 381.8 L689.4 383.1 L689.9 384.4 L690.4 385.7 L691 387 L691.5 388.3 L692.1 389.6 L692.7 390.9 L693.2 392.2 L693.8 393.5 L694.4 394.8 L695 396.1 L695.7 397.4 L696.3 398.7 L696.9 400 L697.6 401.3 L698.2 402.6 L698.9 403.9 L699.6 405.2 L700.3 406.5 L701 407.8 L701.7 409.1 L702.4 410.4 L703.1 411.7 L703.9 413 L704.6 414.3 L705.4 415.6 L706.1 416.9 L706.9 418.2 L707.7 419.5 L708.5 420.8 L709.3 422.1 L710.1 423.4 L710.9 424.7 L711.8 426 L712.6 427.3 L713.5 428.6 L714.3 429.9 L715.2 431.2 L716.1 432.5 L717 433.8 L717.9 435.1 L718.8 436.4 L719.7 437.7 L720.6 439 L721.5 440.3 L722.5 441.6 L723.4 442.9 L724.4 444.2 L725.3 445.5 L726.3 446.8 L727.3 448.1 L728.3 449.4 L729.3 450.7 L730.3 452 L731.3 453.3 L732.3 454.6 L733.4 455.9 L734.4 457.2 L735.5 458.5 L736.5 459.8 L737.6 461.1 L738.7 462.4 L739.8 463.7 L740.8 465 L741.9 466.3 L743 467.6 L744.2 468.9 L745.3 470.2 L746.4 471.5 L747.5 472.8 L748.7 474.1 L749.8 475.4 L751 476.7 L752.2 478 L753.3 479.3 L754.5 480.6 L755.7 481.9 L756.9 483.2 L758.1 484.5"/>
<path d="M1047.8 120.6 L1045.7 119.3 L1043.6 118.1 L1041.5 116.8 L1039.3 115.5 L1037.2 114.3 L1035.1 113 L1032.9 111.8 L1030.8 110.5 L1028.6 109.3 L1026.5 108 L1024.3 106.7 L1022.2 105.5 L1020 104.2 L1017.9 103 L1015.7 101.7 L1013.5 100.5 L1011.3 99.3 L1009.2 98 L1007 96.8 L1004.8 95.5 L1002.6 94.3 L1000.5 93.1 L998.3 91.8 L996.1 90.6 L993.9 89.4 L991.7 88.2 L989.6 86.9 L987.4 85.7 L985.2 84.5 L983 83.3 L980.8 82.1 L978.7 80.9 L976.5 79.7 L974.3 78.5 L972.2 77.3 L970 76.2 L967.9 75 L965.7 73.8 L963.6 72.7 L961.5 71.5 L959.4 70.4 L957.2 69.2 L955.2 68.1 L953.1 67 L951 65.9 L948.9 64.8 L946.9 63.7 L944.8 62.6 L942.8 61.6 L940.8 60.6 L938.9 59.6 L936.9 58.6 L935 57.6 L933.1 56.7 L931.2 55.8 L929.4 54.9 L927.6 54 L925.8 53.2 L924.1 52.4 L922.4 51.7 L920.7 51 L919.1 50.4 L917.6 49.9 L916 49.4 L914.5 48.9 L913.1 48.6 L911.7 48.3 L910.3 48.1 L909 47.9 L907.7 47.9 L906.4 47.9 L905.1 48 L903.8 48.2 L902.6 48.5 L901.3 48.8 L900.1 49.2 L898.8 49.7 L897.5 50.3 L896.2 50.9 L894.9 51.5 L893.6 52.2 L892.3 53 L890.9 53.8 L889.6 54.6 L888.2 55.5 L886.8 56.4 L885.4 57.3 L884 58.3 L882.6 59.3 L881.1 60.3 L879.7 61.3 L878.2 62.3 L876.7 63.4 L875.2 64.5 L873.7 65.6 L872.2 66.7 L870.7 67.8 L869.2 68.9 L867.7 70 L866.1 71.2 L864.6 72.3 L863 73.5 L861.5 74.6 L859.9 75.8 L858.4 77 L856.8 78.2 L855.3 79.4 L853.7 80.6 L852.1 81.8 L850.6 83 L849 84.2 L847.4 85.4 L845.8 86.6 L844.3 87.8 L842.7 89 L841.1 90.3 L839.5 91.5 L838 92.7 L836.4 93.9 L834.8 95.2 L833.3 96.4 L831.7 97.7 L830.1 98.9 L828.5 100.1 L827 101.4 L825.4 102.6 L823.8 103.9 L822.3 105.1 L820.7 106.4 L819.2 107.6 L817.6 108.9 L816.1 110.1 L814.5 111.4 L813 112.7 L811.4 113.9 L809.9 115.2 L808.3 116.4 L806.8 117.7 L805.3 119 L803.8 120.2 L802.2 121.5 L800.7 122.8 L799.2 124 L797.7 125.3 L796.2 126.6 L794.7 127.8 L793.2 129.1 L791.7 130.4 L790.2 131.6 L788.7 132.9 L787.2 134.2 L785.7 135.5 L784.3 136.7 L782.8 138 L781.4 139.3 L779.9 140.6 L778.4 141.8 L777 143.1 L775.6 144.4 L774.1 145.7 L772.7 146.9 L771.3 148.2 L769.9 149.5 L768.4 150.8 L767 152 L765.6 153.3 L764.2 154.6 L762.9 155.9 L761.5 157.2 L760.1 158.4 L758.7 159.7 L757.4 161 L756 162.3 L754.7 163.6 L753.3 164.9 L752 166.1 L750.7 167.4 L749.3 168.7 L748 170 L746.7 171.3 L745.4 172.5 L744.1 173.8 L742.8 175.1 L741.6 176.4 L740.3 177.7 L739 179 L737.8 180.3 L736.5 181.5 L735.3 182.8 L734.1 184.1 L732.8 185.4 L731.6 186.7 L730.4 188 L729.2 189.2 L728 190.5 L726.8 191.8 L725.7 193.1 L724.5 194.4 L723.3 195.7 L722.2 197 L721 198.3 L719.9 199.5 L718.8 200.8 L717.7 202.1 L716.5 203.4 L715.4 204.7 L714.4 206 L713.3 207.3 L712.2 208.6 L711.1 209.8 L710.1 211.1 L709 212.4 L708 213.7 L707 215 L706 216.3 L704.9 217.6 L703.9 218.9 L703 220.1 L702 221.4 L701 222.7 L700 224 L699.1 225.3 L698.1 226.6 L697.2 227.9 L696.3 229.2 L695.4 230.5 L694.5 231.7 L693.6 233 L692.7 234.3 L691.8 235.6 L691 236.9 L690.1 238.2 L689.3 239.5 L688.4 240.8 L687.6 242.1 L686.8 243.4 L686 244.6 L685.2 245.9 L684.4 247.2 L683.6 248.5 L682.9 249.8 L682.1 251.1 L681.4 252.4 L680.7 253.7 L679.9 255 L679.2 256.3 L678.5 257.5 L677.8 258.8 L677.2 260.1 L676.5 261.4 L675.8 262.7 L675.2 264 L674.6 265.3 L673.9 266.6 L673.3 267.9 L672.7 269.2 L672.1 270.5 L671.6 271.7 L671 273 L670.4 274.3 L669.9 275.6 L669.4 276.9 L668.8 278.2 L668.3 279.5 L667.8 280.8 L667.3 282.1 L666.9 283.4 L666.4 284.7 L665.9 286 L665.5 287.2 L665.1 288.5 L664.6 289.8 L664.2 291.1 L663.8 292.4 L663.4 293.7 L663.1 295 L662.7 296.3 L662.3 297.6 L662 298.9 L661.7 300.2 L661.3 301.4 L661 302.7 L660.7 304 L660.5 305.3 L660.2 306.6 L659.9 307.9 L659.7 309.2 L659.4 310.5 L659.2 311.8 L659 313.1 L658.8 314.4 L658.6 315.7 L658.4 316.9 L658.3 318.2 L658.1 319.5 L658 320.8 L657.8 322.1 L657.7 323.4 L657.6 324.7 L657.5 326 L657.4 327.3 L657.3 328.6 L657.3 329.9 L657.2 331.2 L657.2 332.4 L657.2 333.7 L657.1 335 L657.1 336.3 L657.1 337.6 L657.2 338.9 L657.2 340.2 L657.2 341.5 L657.3 342.8 L657.4 344.1 L657.4 345.4 L657.5 346.6 L657.6 347.9 L657.7 349.2 L657.9 350.5 L658 351.8 L658.2 353.1 L658.3 354.4 L658.5 355.7 L658.7 357 L658.9 358.3 L659.1 359.6 L659.3 360.9 L659.5 362.1 L659.8 363.4 L660 364.7 L660.3 366 L660.6 367.3 L660.8 368.6 L661.1 369.9 L661.5 371.2 L661.8 372.5 L662.1 373.8 L662.5 375.1 L662.8 376.3 L663.2 377.6 L663.6 378.9 L664 380.2 L664.4 381.5 L664.8 382.8 L665.2 384.1 L665.6 385.4 L666.1 386.7 L666.5 388 L667 389.2 L667.5 390.5 L668 391.8 L668.5 393.1 L669 394.4 L669.5 395.7 L670.1 397 L670.6 398.3 L671.2 399.6 L671.7 400.9 L672.3 402.1 L672.9 403.4 L673.5 404.7 L674.1 406 L674.8 407.3 L675.4 408.6 L676 409.9 L676.7 411.2 L677.4 412.5 L678 413.8 L678.7 415 L679.4 416.3 L680.1 417.6 L680.9 418.9 L681.6 420.2 L682.3 421.5 L683.1 422.8 L683.9 424.1 L684.6 425.4 L685.4 426.6 L686.2 427.9 L687 429.2 L687.8 430.5 L688.7 431.8 L689.5 433.1 L690.3 434.4 L691.2 435.7 L692.1 436.9 L692.9 438.2 L693.8 439.5 L694.7 440.8 L695.6 442.1 L696.5 443.4 L697.4 444.7 L698.4 446 L699.3 447.2 L700.3 448.5 L701.2 449.8 L702.2 451.1 L703.2 452.4 L704.2 453.7 L705.2 455 L706.2 456.2 L707.2 457.5 L708.2 458.8 L709.3 460.1 L710.3 461.4 L711.4 462.7 L712.4 463.9 L713.5 465.2 L714.6 466.5 L715.7 467.8 L716.8 469.1 L717.9 470.4 L719 471.6 L720.1 472.9 L721.2 474.2 L722.4 475.5 L723.5 476.8 L724.7 478.1 L725.8 479.3 L727 480.6 L728.2 481.9 L729.4 483.2 L730.6 484.5 L731.8 485.7 L733 487 L734.2 488.3"/>
<path d="M916.7 105.6 L915.9 104.5 L915.1 103.3 L914.3 102.2 L913.5 101 L912.7 99.9 L911.8 98.8 L911 97.7 L910.2 96.6 L909.4 95.5 L908.6 94.4 L907.8 93.3 L907 92.2 L906.2 91.1 L905.4 90.1 L904.6 89 L903.8 88 L903 86.9 L902.2 85.9 L901.4 84.9 L900.6 83.9 L899.8 82.9 L899 81.9 L898.2 80.9 L897.3 80 L896.5 79.1 L895.7 78.1 L894.9 77.2 L894.1 76.3 L893.3 75.5 L892.5 74.6 L891.6 73.8 L890.8 73 L890 72.2 L889.1 71.4 L888.3 70.7 L887.4 70 L886.6 69.3 L885.7 68.6 L884.8 68 L883.9 67.4 L883 66.8 L882.1 66.3 L881.1 65.8 L880.2 65.4 L879.2 65 L878.2 64.6 L877.1 64.2 L876.1 64 L875 63.7 L873.8 63.5 L872.7 63.4 L871.5 63.2 L870.2 63.2 L868.9 63.2 L867.6 63.2 L866.2 63.3 L864.8 63.4 L863.4 63.6 L861.8 63.8 L860.3 64 L858.7 64.3 L857 64.7 L855.3 65.1 L853.6 65.5 L851.8 65.9 L849.9 66.4 L848 67 L846.1 67.5 L844.1 68.1 L842.1 68.8 L840 69.4 L837.9 70.1 L835.7 70.9 L833.5 71.6 L831.3 72.4 L829 73.2 L826.8 74 L824.4 74.8 L822.1 75.7 L819.7 76.6 L817.3 77.4 L814.8 78.4 L812.4 79.3 L809.9 80.2 L807.4 81.2 L804.8 82.2 L802.3 83.1 L799.7 84.1 L797.1 85.1 L794.5 86.2 L791.9 87.2 L789.3 88.2 L786.6 89.3 L784 90.3 L781.3 91.4 L778.6 92.5 L775.9 93.6 L773.2 94.7 L770.5 95.7 L767.8 96.9 L765.1 98 L762.4 99.1 L759.6 100.2 L756.9 101.3 L754.1 102.5 L751.4 103.6 L748.6 104.7 L745.9 105.9 L743.1 107 L740.4 108.2 L737.6 109.4 L734.8 110.5 L732.1 111.7 L729.3 112.9 L726.6 114 L723.8 115.2 L721 116.4 L718.3 117.6 L715.5 118.8 L712.8 119.9 L710 121.1 L707.3 122.3 L704.5 123.5 L701.8 124.7 L699 125.9 L696.3 127.1 L693.6 128.3 L690.9 129.5 L688.2 130.8 L685.4 132 L682.7 133.2 L680 134.4 L677.3 135.6 L674.6 136.8 L672 138.1 L669.3 139.3 L666.6 140.5 L664 141.7 L661.3 143 L658.7 144.2 L656 145.4 L653.4 146.6 L650.8 147.9 L648.2 149.1 L645.6 150.3 L643 151.6 L640.4 152.8 L637.8 154 L635.3 155.3 L632.7 156.5 L630.2 157.8 L627.7 159 L625.1 160.2 L622.6 161.5 L620.1 162.7 L617.6 164 L615.2 165.2 L612.7 166.5 L610.2 167.7 L607.8 169 L605.4 170.2 L602.9 171.5 L600.5 172.7 L598.1 174 L595.8 175.2 L593.4 176.5 L591 177.7 L588.7 179 L586.4 180.2 L584.1 181.5 L581.8 182.7 L579.5 184 L577.2 185.3 L574.9 186.5 L572.7 187.8 L570.5 189 L568.2 190.3 L566 191.5 L563.8 192.8 L561.7 194.1 L559.5 195.3 L557.4 196.6 L555.2 197.8 L553.1 199.1 L551 200.4 L548.9 201.6 L546.9 202.9 L544.8 204.2 L542.8 205.4 L540.8 206.7 L538.8 207.9 L536.8 209.2 L534.8 210.5 L532.9 211.7 L530.9 213 L529 214.3 L527.1 215.5 L525.2 216.8 L523.3 218.1 L521.5 219.3 L519.6 220.6 L517.8 221.9 L516 223.1 L514.2 224.4 L512.5 225.7 L510.7 226.9 L509 228.2 L507.3 229.5 L505.6 230.7 L503.9 232 L502.3 233.3 L500.6 234.6 L499 235.8 L497.4 237.1 L495.8 238.4 L494.2 239.6 L492.7 240.9 L491.2 242.2 L489.7 243.4 L488.2 244.7 L486.7 246 L485.2 247.3 L483.8 248.5 L482.4 249.8 L481 251.1 L479.6 252.3 L478.3 253.6 L476.9 254.9 L475.6 256.2 L474.3 257.4 L473 258.7 L471.8 260 L470.5 261.2 L469.3 262.5 L468.1 263.8 L467 265.1 L465.8 266.3 L464.7 267.6 L463.5 268.9 L462.4 270.2 L461.4 271.4 L460.3 272.7 L459.3 274 L458.3 275.3 L457.3 276.5 L456.3 277.8 L455.4 279.1 L454.4 280.4 L453.5 281.6 L452.6 282.9 L451.8 284.2 L450.9 285.5 L450.1 286.7 L449.3 288 L448.5 289.3 L447.7 290.6 L447 291.8 L446.3 293.1 L445.6 294.4 L444.9 295.7 L444.2 296.9 L443.6 298.2 L443 299.5 L442.4 300.8 L441.8 302 L441.3 303.3 L440.7 304.6 L440.2 305.9 L439.8 307.1 L439.3 308.4 L438.9 309.7 L438.4 311 L438 312.2 L437.7 313.5 L437.3 314.8 L437 316.1 L436.7 317.3 L436.4 318.6 L436.1 319.9 L435.9 321.2 L435.6 322.4 L435.4 323.7 L435.3 325 L435.1 326.3 L435 327.5 L434.8 328.8 L434.7 330.1 L434.7 331.4 L434.6 332.6 L434.6 333.9 L434.6 335.2 L434.6 336.5 L434.6 337.7 L434.7 339 L434.8 340.3 L434.9 341.6 L435 342.8 L435.2 344.1 L435.3 345.4 L435.5 346.7 L435.7 347.9 L436 349.2 L436.2 350.5 L436.5 351.8 L436.8 353 L437.1 354.3 L437.5 355.6 L437.8 356.9 L438.2 358.1 L438.6 359.4 L439.1 360.7 L439.5 362 L440 363.2 L440.5 364.5 L441 365.8 L441.5 367.1 L442.1 368.3 L442.7 369.6 L443.3 370.9 L443.9 372.2 L444.5 373.4 L445.2 374.7 L445.9 376 L446.6 377.2 L447.3 378.5 L448.1 379.8 L448.8 381.1 L449.6 382.3 L450.4 383.6 L451.3 384.9 L452.1 386.2 L453 387.4 L453.9 388.7 L454.8 390 L455.8 391.2 L456.7 392.5 L457.7 393.8 L458.7 395.1 L459.7 396.3 L460.7 397.6 L461.8 398.9 L462.9 400.1 L464 401.4 L465.1 402.7 L466.2 403.9 L467.4 405.2 L468.6 406.5 L469.8 407.8 L471 409 L472.2 410.3 L473.5 411.6 L474.8 412.8 L476.1 414.1 L477.4 415.4 L478.7 416.6 L480.1 417.9 L481.5 419.2 L482.9 420.4 L484.3 421.7 L485.7 423 L487.2 424.2 L488.6 425.5 L490.1 426.8 L491.6 428 L493.2 429.3 L494.7 430.6 L496.3 431.8 L497.8 433.1 L499.4 434.4 L501.1 435.6 L502.7 436.9 L504.3 438.1 L506 439.4 L507.7 440.7 L509.4 441.9 L511.1 443.2 L512.9 444.5 L514.6 445.7 L516.4 447 L518.2 448.2 L520 449.5 L521.8 450.8 L523.6 452 L525.5 453.3 L527.4 454.5 L529.3 455.8 L531.2 457 L533.1 458.3 L535 459.6 L537 460.8 L538.9 462.1 L540.9 463.3 L542.9 464.6 L544.9 465.8 L547 467.1 L549 468.3 L551.1 469.6 L553.1 470.8 L555.2 472.1 L557.3 473.3 L559.4 474.6 L561.6 475.8 L563.7 477.1 L565.9 478.3 L568 479.5 L570.2 480.8"/>
<path d="M900 90 L898.9 89.3 L897.9 88.6 L896.8 88 L895.7 87.3 L894.6 86.7 L893.6 86.1 L892.5 85.6 L891.4 85 L890.3 84.5 L889.2 84 L888.1 83.5 L887 83.1 L885.9 82.6 L884.8 82.2 L883.6 81.9 L882.5 81.5 L881.4 81.2 L880.2 80.9 L879 80.7 L877.9 80.4 L876.7 80.3 L875.4 80.1 L874.2 80 L873 79.8 L871.7 79.8 L870.5 79.7 L869.2 79.7 L867.8 79.7 L866.5 79.8 L865.2 79.9 L863.8 80 L862.4 80.1 L861 80.3 L859.5 80.5 L858.1 80.8 L856.6 81 L855.1 81.3 L853.5 81.7 L852 82 L850.4 82.4 L848.8 82.8 L847.1 83.2 L845.5 83.7 L843.8 84.2 L842.1 84.7 L840.4 85.2 L838.6 85.8 L836.8 86.3 L835 86.9 L833.2 87.6 L831.4 88.2 L829.5 88.9 L827.6 89.6 L825.7 90.3 L823.8 91 L821.8 91.7 L819.9 92.5 L817.9 93.2 L815.9 94 L813.8 94.8 L811.8 95.6 L809.8 96.5 L807.7 97.3 L805.6 98.2 L803.5 99 L801.4 99.9 L799.3 100.8 L797.1 101.7 L795 102.6 L792.8 103.6 L790.7 104.5 L788.5 105.4 L786.3 106.4 L784.1 107.4 L781.9 108.3 L779.6 109.3 L777.4 110.3 L775.2 111.3 L772.9 112.3 L770.7 113.3 L768.4 114.3 L766.2 115.4 L763.9 116.4 L761.6 117.4 L759.4 118.5 L757.1 119.5 L754.8 120.6 L752.5 121.7 L750.2 122.7 L747.9 123.8 L745.7 124.9 L743.4 126 L741.1 127.1 L738.8 128.1 L736.5 129.2 L734.2 130.3 L731.9 131.5 L729.6 132.6 L727.3 133.7 L725 134.8 L722.7 135.9 L720.4 137 L718.1 138.2 L715.8 139.3 L713.5 140.4 L711.2 141.6 L708.9 142.7 L706.7 143.8 L704.4 145 L702.1 146.1 L699.8 147.3 L697.6 148.4 L695.3 149.6 L693 150.8 L690.8 151.9 L688.5 153.1 L686.3 154.2 L684.1 155.4 L681.8 156.6 L679.6 157.8 L677.4 158.9 L675.2 160.1 L673 161.3 L670.8 162.5 L668.6 163.6 L666.4 164.8 L664.2 166 L662 167.2 L659.9 168.4 L657.7 169.6 L655.6 170.8 L653.4 172 L651.3 173.2 L649.2 174.3 L647 175.5 L644.9 176.7 L642.8 177.9 L640.7 179.1 L638.7 180.3 L636.6 181.5 L634.5 182.8 L632.5 184 L630.4 185.2 L628.4 186.4 L626.4 187.6 L624.4 188.8 L622.4 190 L620.4 191.2 L618.4 192.4 L616.4 193.6 L614.5 194.9 L612.5 196.1 L610.6 197.3 L608.6 198.5 L606.7 199.7 L604.8 200.9 L602.9 202.2 L601.1 203.4 L599.2 204.6 L597.3 205.8 L595.5 207 L593.7 208.3 L591.8 209.5 L590 210.7 L588.2 211.9 L586.5 213.2 L584.7 214.4 L583 215.6 L581.2 216.9 L579.5 218.1 L577.8 219.3 L576.1 220.5 L574.4 221.8 L572.7 223 L571.1 224.2 L569.4 225.5 L567.8 226.7 L566.2 227.9 L564.6 229.2 L563 230.4 L561.4 231.6 L559.8 232.9 L558.3 234.1 L556.8 235.3 L555.2 236.6 L553.7 237.8 L552.3 239 L550.8 240.3 L549.3 241.5 L547.9 242.8 L546.5 244 L545.1 245.2 L543.7 246.5 L542.3 247.7 L540.9 249 L539.6 250.2 L538.2 251.4 L536.9 252.7 L535.6 253.9 L534.3 255.2 L533.1 256.4 L531.8 257.6 L530.6 258.9 L529.4 260.1 L528.2 261.4 L527 262.6 L525.8 263.9 L524.7 265.1 L523.5 266.3 L522.4 267.6 L521.3 268.8 L520.2 270.1 L519.1 271.3 L518.1 272.6 L517.1 273.8 L516 275.1 L515 276.3 L514 277.6 L513.1 278.8 L512.1 280 L511.2 281.3 L510.3 282.5 L509.4 283.8 L508.5 285 L507.6 286.3 L506.8 287.5 L506 288.8 L505.2 290 L504.4 291.3 L503.6 292.5 L502.8 293.8 L502.1 295 L501.4 296.3 L500.7 297.5 L500 298.7 L499.3 300 L498.7 301.2 L498 302.5 L497.4 303.7 L496.8 305 L496.3 306.2 L495.7 307.5 L495.2 308.7 L494.6 310 L494.1 311.2 L493.7 312.5 L493.2 313.7 L492.7 315 L492.3 316.2 L491.9 317.5 L491.5 318.7 L491.1 320 L490.8 321.2 L490.4 322.5 L490.1 323.7 L489.8 325 L489.5 326.2 L489.3 327.5 L489 328.7 L488.8 330 L488.6 331.2 L488.4 332.5 L488.2 333.7 L488.1 334.9 L487.9 336.2 L487.8 337.4 L487.7 338.7 L487.6 339.9 L487.6 341.2 L487.5 342.4 L487.5 343.7 L487.5 344.9 L487.5 346.2 L487.5 347.4 L487.6 348.7 L487.7 349.9 L487.7 351.2 L487.9 352.4 L488 353.7 L488.1 354.9 L488.3 356.2 L488.5 357.4 L488.7 358.6 L488.9 359.9 L489.1 361.1 L489.4 362.4 L489.6 363.6 L489.9 364.9 L490.2 366.1 L490.6 367.4 L490.9 368.6 L491.3 369.9 L491.6 371.1 L492 372.3 L492.5 373.6 L492.9 374.8 L493.3 376.1 L493.8 377.3 L494.3 378.6 L494.8 379.8 L495.3 381.1 L495.9 382.3 L496.4 383.5 L497 384.8 L497.6 386 L498.2 387.3 L498.9 388.5 L499.5 389.7 L500.2 391 L500.8 392.2 L501.5 393.5 L502.3 394.7 L503 395.9 L503.8 397.2 L504.5 398.4 L505.3 399.7 L506.1 400.9 L506.9 402.1 L507.8 403.4 L508.6 404.6 L509.5 405.8 L510.4 407.1 L511.3 408.3 L512.2 409.5 L513.2 410.8 L514.1 412 L515.1 413.2 L516.1 414.5 L517.1 415.7 L518.1 416.9 L519.1 418.2 L520.2 419.4 L521.3 420.6 L522.3 421.9 L523.4 423.1 L524.6 424.3 L525.7 425.6 L526.8 426.8 L528 428 L529.2 429.2 L530.4 430.5 L531.6 431.7 L532.8 432.9 L534.1 434.1 L535.3 435.4 L536.6 436.6 L537.9 437.8 L539.2 439 L540.5 440.2 L541.8 441.5 L543.1 442.7 L544.5 443.9 L545.9 445.1 L547.2 446.3 L548.6 447.5 L550 448.7 L551.5 450 L552.9 451.2 L554.3 452.4 L555.8 453.6 L557.3 454.8 L558.8 456 L560.3 457.2 L561.8 458.4 L563.3 459.6 L564.8 460.8 L566.4 462 L567.9 463.2 L569.5 464.4 L571.1 465.6 L572.7 466.8 L574.3 468 L575.9 469.2 L577.5 470.4 L579.2 471.6 L580.8 472.8"/>
<path d="M947.8 62.2 L946 60.9 L944.3 59.6 L942.5 58.3 L940.8 57 L939 55.7 L937.2 54.4 L935.4 53.1 L933.7 51.8 L931.9 50.5 L930.1 49.2 L928.4 47.9 L926.6 46.7 L924.8 45.4 L923 44.1 L921.3 42.8 L919.5 41.5 L917.7 40.2 L916 38.9 L914.2 37.7 L912.5 36.4 L910.7 35.1 L909 33.9 L907.3 32.7 L905.7 31.5 L904.1 30.4 L902.7 29.6 L901.4 29.4 L899.9 30 L898 30.9 L896 32 L893.8 33.2 L891.7 34.5 L889.4 35.7 L887.2 37 L885 38.3 L882.7 39.5 L880.4 40.8 L878.2 42.1 L875.9 43.4 L873.6 44.7 L871.4 46 L869.1 47.3 L866.8 48.6 L864.6 49.8 L862.3 51.1 L860 52.4 L857.8 53.7 L855.5 55 L853.2 56.3 L851 57.6 L848.7 58.9 L846.5 60.2 L844.2 61.5 L842 62.8 L839.7 64.1 L837.5 65.4 L835.2 66.7 L833 68 L830.8 69.3 L828.5 70.6 L826.3 71.9 L824.1 73.2 L821.8 74.5 L819.6 75.8 L817.4 77.1 L815.2 78.4 L813 79.7 L810.8 81 L808.6 82.3 L806.4 83.6 L804.2 84.9 L802 86.2 L799.8 87.5 L797.7 88.8 L795.5 90.1 L793.3 91.4 L791.2 92.7 L789 94 L786.9 95.3 L784.7 96.6 L782.6 97.9 L780.5 99.2 L778.3 100.5 L776.2 101.8 L774.1 103 L772 104.3 L769.9 105.6 L767.8 106.9 L765.7 108.2 L763.6 109.5 L761.5 110.8 L759.5 112.1 L757.4 113.4 L755.4 114.7 L753.3 116 L751.3 117.3 L749.2 118.6 L747.2 119.9 L745.2 121.2 L743.2 122.5 L741.2 123.8 L739.2 125.1 L737.2 126.4 L735.2 127.7 L733.2 129 L731.3 130.3 L729.3 131.6 L727.4 132.9 L725.4 134.2 L723.5 135.5 L721.6 136.8 L719.7 138.1 L717.8 139.4 L715.9 140.7 L714 142 L712.1 143.3 L710.3 144.6 L708.4 145.9 L706.6 147.2 L704.7 148.5 L702.9 149.8 L701.1 151.1 L699.3 152.4 L697.5 153.7 L695.7 155 L693.9 156.3 L692.1 157.6 L690.4 158.9 L688.6 160.2 L686.9 161.5 L685.1 162.8 L683.4 164.1 L681.7 165.4 L680 166.7 L678.3 168 L676.7 169.3 L675 170.6 L673.3 171.9 L671.7 173.2 L670.1 174.5 L668.4 175.8 L666.8 177.1 L665.2 178.4 L663.7 179.7 L662.1 181 L660.5 182.3 L659 183.6 L657.4 184.9 L655.9 186.2 L654.4 187.5 L652.9 188.8 L651.4 190.1 L649.9 191.4 L648.4 192.7 L647 194 L645.6 195.3 L644.1 196.6 L642.7 197.9 L641.3 199.2 L639.9 200.5 L638.5 201.8 L637.2 203.1 L635.8 204.4 L634.5 205.7 L633.1 207 L631.8 208.3 L630.5 209.6 L629.2 210.9 L628 212.2 L626.7 213.5 L625.5 214.8 L624.2 216.1 L623 217.4 L621.8 218.7 L620.6 220 L619.4 221.3 L618.2 222.6 L617.1 223.9 L616 225.2 L614.8 226.5 L613.7 227.8 L612.6 229.1 L611.5 230.4 L610.5 231.7 L609.4 233 L608.4 234.3 L607.3 235.6 L606.3 236.9 L605.3 238.2 L604.4 239.5 L603.4 240.8 L602.4 242.1 L601.5 243.4 L600.6 244.7 L599.7 246 L598.8 247.3 L597.9 248.6 L597 249.9 L596.2 251.2 L595.3 252.5 L594.5 253.8 L593.7 255.1 L592.9 256.4 L592.1 257.6 L591.4 258.9 L590.6 260.2 L589.9 261.5 L589.2 262.8 L588.5 264.1 L587.8 265.4 L587.1 266.7 L586.4 268 L585.8 269.3 L585.2 270.6 L584.6 271.9 L584 273.2 L583.4 274.5 L582.8 275.8 L582.3 277.1 L581.7 278.4 L581.2 279.7 L580.7 281 L580.2 282.3 L579.8 283.6 L579.3 284.9 L578.9 286.2 L578.5 287.5 L578 288.8 L577.7 290.1 L577.3 291.4 L576.9 292.7 L576.6 294 L576.2 295.3 L575.9 296.6 L575.6 297.9 L575.3 299.2 L575.1 300.5 L574.8 301.8 L574.6 303.1 L574.4 304.4 L574.2 305.7 L574 307 L573.8 308.3 L573.7 309.6 L573.5 310.9 L573.4 312.2 L573.3 313.5 L573.2 314.8 L573.1 316.1 L573.1 317.4 L573 318.7 L573 320 L573 321.3 L573 322.6 L573 323.9 L573.1 325.2 L573.1 326.5 L573.2 327.8 L573.3 329.1 L573.4 330.4 L573.5 331.7 L573.6 333 L573.8 334.3 L573.9 335.6 L574.1 336.9 L574.3 338.2 L574.5 339.5 L574.7 340.8 L575 342.1 L575.2 343.4 L575.5 344.7 L575.8 346 L576.1 347.3 L576.4 348.6 L576.8 349.9 L577.1 351.2 L577.5 352.5 L577.9 353.8 L578.3 355.1 L578.7 356.4 L579.1 357.7 L579.6 359 L580.1 360.3 L580.5 361.6 L581 362.9 L581.5 364.2 L582.1 365.5 L582.6 366.8 L583.2 368.1 L583.7 369.4 L584.3 370.7 L584.9 372 L585.6 373.3 L586.2 374.6 L586.8 375.9 L587.5 377.2 L588.2 378.5 L588.9 379.8 L589.6 381.1 L590.3 382.4 L591.1 383.7 L591.8 385 L592.6 386.3 L593.4 387.6 L594.2 388.9 L595 390.2 L595.8 391.5 L596.7 392.8 L597.5 394.1 L598.4 395.4 L599.3 396.7 L600.2 398 L601.1 399.3 L602.1 400.6 L603 401.9 L604 403.2 L605 404.5 L606 405.8 L607 407.1 L608 408.4 L609 409.7 L610.1 411 L611.1 412.3 L612.2 413.6 L613.3 414.9 L614.4 416.2 L615.5 417.5 L616.7 418.8 L617.8 420.1 L619 421.4 L620.1 422.7 L621.3 424 L622.5 425.3 L623.8 426.6 L625 427.9 L626.2 429.2 L627.5 430.5 L628.8 431.7 L630 433 L631.3 434.3 L632.6 435.6 L634 436.9 L635.3 438.2 L636.6 439.5 L638 440.8 L639.4 442.1 L640.8 443.4 L642.2 444.7 L643.6 446 L645 447.3 L646.4 448.6 L647.9 449.9 L649.4 451.2 L650.8 452.5 L652.3 453.8 L653.8 455.1 L655.3 456.4 L656.8 457.7 L658.4 459 L659.9 460.3 L661.5 461.6 L663.1 462.9 L664.6 464.2 L666.2 465.5 L667.8 466.8 L669.4 468.1 L671.1 469.4 L672.7 470.7 L674.4 472 L676 473.3 L677.7 474.6 L679.4 475.9 L681.1 477.2 L682.8 478.5 L684.5 479.8 L686.2 481.1 L687.9 482.4 L689.7 483.7 L691.4 485 L693.2 486.3"/>
<path d="M1008.3 102.2 L1006.4 100.9 L1004.5 99.6 L1002.6 98.3 L1000.7 97 L998.8 95.8 L996.8 94.5 L994.9 93.2 L993 91.9 L991.1 90.6 L989.1 89.3 L987.2 88.1 L985.3 86.8 L983.3 85.5 L981.4 84.2 L979.4 82.9 L977.5 81.6 L975.5 80.4 L973.6 79.1 L971.6 77.8 L969.6 76.5 L967.7 75.3 L965.7 74 L963.8 72.7 L961.8 71.4 L959.8 70.2 L957.9 68.9 L955.9 67.6 L953.9 66.4 L952 65.1 L950 63.9 L948.1 62.6 L946.1 61.4 L944.1 60.1 L942.2 58.9 L940.2 57.6 L938.3 56.4 L936.4 55.2 L934.4 53.9 L932.5 52.7 L930.6 51.5 L928.7 50.3 L926.8 49.2 L924.9 48 L923.1 46.8 L921.2 45.7 L919.4 44.6 L917.7 43.5 L915.9 42.5 L914.2 41.5 L912.5 40.5 L910.9 39.6 L909.3 38.8 L907.8 38.1 L906.4 37.5 L905 37.1 L903.7 36.8 L902.4 36.7 L901.1 36.7 L899.8 37 L898.4 37.4 L897 37.9 L895.5 38.6 L894 39.4 L892.4 40.2 L890.7 41.1 L889.1 42.1 L887.3 43.2 L885.6 44.2 L883.8 45.3 L882 46.4 L880.1 47.6 L878.3 48.7 L876.4 49.9 L874.5 51.1 L872.6 52.3 L870.7 53.5 L868.8 54.7 L866.9 56 L864.9 57.2 L863 58.4 L861.1 59.7 L859.1 60.9 L857.2 62.2 L855.2 63.4 L853.3 64.7 L851.3 65.9 L849.4 67.2 L847.4 68.5 L845.5 69.7 L843.5 71 L841.6 72.3 L839.6 73.5 L837.7 74.8 L835.7 76.1 L833.8 77.4 L831.8 78.6 L829.9 79.9 L827.9 81.2 L826 82.5 L824.1 83.8 L822.1 85 L820.2 86.3 L818.3 87.6 L816.4 88.9 L814.4 90.2 L812.5 91.5 L810.6 92.7 L808.7 94 L806.8 95.3 L804.9 96.6 L803 97.9 L801.1 99.2 L799.2 100.5 L797.3 101.7 L795.4 103 L793.5 104.3 L791.7 105.6 L789.8 106.9 L787.9 108.2 L786.1 109.5 L784.2 110.8 L782.4 112.1 L780.5 113.4 L778.7 114.6 L776.9 115.9 L775 117.2 L773.2 118.5 L771.4 119.8 L769.6 121.1 L767.8 122.4 L766 123.7 L764.2 125 L762.4 126.3 L760.6 127.6 L758.9 128.9 L757.1 130.2 L755.4 131.5 L753.6 132.7 L751.9 134 L750.1 135.3 L748.4 136.6 L746.7 137.9 L745 139.2 L743.3 140.5 L741.6 141.8 L739.9 143.1 L738.2 144.4 L736.5 145.7 L734.8 147 L733.2 148.3 L731.5 149.6 L729.9 150.9 L728.3 152.2 L726.6 153.5 L725 154.8 L723.4 156 L721.8 157.3 L720.2 158.6 L718.6 159.9 L717 161.2 L715.5 162.5 L713.9 163.8 L712.4 165.1 L710.8 166.4 L709.3 167.7 L707.8 169 L706.3 170.3 L704.8 171.6 L703.3 172.9 L701.8 174.2 L700.3 175.5 L698.9 176.8 L697.4 178.1 L696 179.4 L694.5 180.7 L693.1 182 L691.7 183.3 L690.3 184.6 L688.9 185.9 L687.5 187.2 L686.1 188.5 L684.8 189.7 L683.4 191 L682.1 192.3 L680.7 193.6 L679.4 194.9 L678.1 196.2 L676.8 197.5 L675.5 198.8 L674.2 200.1 L673 201.4 L671.7 202.7 L670.5 204 L669.2 205.3 L668 206.6 L666.8 207.9 L665.6 209.2 L664.4 210.5 L663.2 211.8 L662.1 213.1 L660.9 214.4 L659.8 215.7 L658.7 217 L657.5 218.3 L656.4 219.6 L655.3 220.9 L654.2 222.2 L653.2 223.5 L652.1 224.8 L651.1 226.1 L650 227.4 L649 228.7 L648 230 L647 231.2 L646 232.5 L645 233.8 L644.1 235.1 L643.1 236.4 L642.2 237.7 L641.3 239 L640.4 240.3 L639.5 241.6 L638.6 242.9 L637.7 244.2 L636.9 245.5 L636 246.8 L635.2 248.1 L634.4 249.4 L633.5 250.7 L632.7 252 L632 253.3 L631.2 254.6 L630.4 255.9 L629.7 257.2 L629 258.5 L628.3 259.8 L627.6 261.1 L626.9 262.4 L626.2 263.7 L625.5 265 L624.9 266.3 L624.2 267.6 L623.6 268.9 L623 270.2 L622.4 271.5 L621.8 272.8 L621.3 274.1 L620.7 275.4 L620.2 276.7 L619.6 278 L619.1 279.3 L618.6 280.6 L618.1 281.9 L617.7 283.2 L617.2 284.4 L616.7 285.7 L616.3 287 L615.9 288.3 L615.5 289.6 L615.1 290.9 L614.7 292.2 L614.4 293.5 L614 294.8 L613.7 296.1 L613.4 297.4 L613.1 298.7 L612.8 300 L612.5 301.3 L612.2 302.6 L612 303.9 L611.7 305.2 L611.5 306.5 L611.3 307.8 L611.1 309.1 L610.9 310.4 L610.8 311.7 L610.6 313 L610.5 314.3 L610.3 315.6 L610.2 316.9 L610.1 318.2 L610 319.5 L610 320.8 L609.9 322.1 L609.9 323.4 L609.9 324.7 L609.9 326 L609.9 327.3 L609.9 328.6 L609.9 329.9 L609.9 331.2 L610 332.5 L610.1 333.8 L610.2 335.1 L610.3 336.4 L610.4 337.7 L610.5 339 L610.7 340.2 L610.8 341.5 L611 342.8 L611.2 344.1 L611.4 345.4 L611.6 346.7 L611.8 348 L612.1 349.3 L612.3 350.6 L612.6 351.9 L612.9 353.2 L613.2 354.5 L613.5 355.8 L613.8 357.1 L614.2 358.4 L614.5 359.7 L614.9 361 L615.3 362.3 L615.7 363.6 L616.1 364.9 L616.5 366.2 L616.9 367.5 L617.4 368.8 L617.8 370.1 L618.3 371.4 L618.8 372.7 L619.3 374 L619.8 375.3 L620.4 376.6 L620.9 377.9 L621.5 379.2 L622.1 380.5 L622.7 381.8 L623.3 383.1 L623.9 384.4 L624.5 385.7 L625.1 387 L625.8 388.3 L626.5 389.6 L627.1 390.9 L627.8 392.2 L628.6 393.5 L629.3 394.7 L630 396 L630.8 397.3 L631.5 398.6 L632.3 399.9 L633.1 401.2 L633.9 402.5 L634.7 403.8 L635.5 405.1 L636.4 406.4 L637.2 407.7 L638.1 409 L639 410.3 L639.8 411.6 L640.8 412.9 L641.7 414.2 L642.6 415.5 L643.5 416.8 L644.5 418.1 L645.5 419.4 L646.4 420.7 L647.4 422 L648.4 423.3 L649.4 424.6 L650.5 425.9 L651.5 427.2 L652.6 428.5 L653.6 429.8 L654.7 431.1 L655.8 432.4 L656.9 433.7 L658 435 L659.1 436.3 L660.3 437.6 L661.4 438.9 L662.6 440.1 L663.7 441.4 L664.9 442.7 L666.1 444 L667.3 445.3 L668.5 446.6 L669.7 447.9 L671 449.2 L672.2 450.5 L673.5 451.8 L674.8 453.1 L676 454.4 L677.3 455.7 L678.6 457 L680 458.3 L681.3 459.6 L682.6 460.9 L684 462.2 L685.3 463.5 L686.7 464.8 L688.1 466.1 L689.5 467.4 L690.9 468.7 L692.3 470 L693.7 471.3 L695.1 472.6 L696.5 473.9 L698 475.2 L699.4 476.4 L700.9 477.7 L702.4 479 L703.9 480.3 L705.4 481.6 L706.9 482.9 L708.4 484.2 L709.9 485.5 L711.5 486.8 L713 488.1 L714.5 489.4 L716.1 490.7 L717.7 492 L719.3 493.3"/>
<path d="M1108.9 118.9 L1106.2 117.6 L1103.4 116.3 L1100.7 115 L1097.9 113.7 L1095.1 112.4 L1092.3 111.1 L1089.5 109.8 L1086.7 108.5 L1083.9 107.2 L1081.1 105.9 L1078.2 104.6 L1075.4 103.3 L1072.5 102 L1069.7 100.7 L1066.8 99.4 L1064 98.1 L1061.1 96.8 L1058.2 95.5 L1055.3 94.2 L1052.4 92.9 L1049.5 91.6 L1046.6 90.3 L1043.6 89 L1040.7 87.7 L1037.8 86.4 L1034.8 85.1 L1031.9 83.8 L1028.9 82.5 L1025.9 81.2 L1023 80 L1020 78.7 L1017 77.4 L1014 76.1 L1011 74.8 L1008.1 73.5 L1005.1 72.2 L1002 70.9 L999 69.6 L996 68.3 L993 67 L990 65.7 L987 64.4 L983.9 63.1 L980.9 61.8 L977.9 60.5 L974.8 59.2 L971.8 57.9 L968.7 56.6 L965.7 55.3 L962.7 54 L959.6 52.7 L956.6 51.5 L953.5 50.2 L950.5 48.9 L947.4 47.6 L944.4 46.3 L941.3 45 L938.3 43.7 L935.2 42.5 L932.2 41.2 L929.2 39.9 L926.2 38.6 L923.2 37.4 L920.2 36.1 L917.3 34.9 L914.4 33.7 L911.6 32.6 L909 31.5 L906.7 30.7 L904.9 30.2 L903.6 30.2 L902.7 30.8 L901.8 31.7 L900.9 32.8 L899.9 33.9 L899 35.1 L898 36.3 L897.1 37.6 L896.1 38.8 L895.2 40.1 L894.2 41.4 L893.2 42.7 L892.2 43.9 L891.3 45.2 L890.3 46.5 L889.3 47.8 L888.3 49.1 L887.3 50.4 L886.4 51.7 L885.4 52.9 L884.4 54.2 L883.4 55.5 L882.5 56.8 L881.5 58.1 L880.5 59.4 L879.5 60.7 L878.6 62 L877.6 63.3 L876.6 64.6 L875.6 65.9 L874.7 67.2 L873.7 68.5 L872.7 69.8 L871.8 71.1 L870.8 72.4 L869.8 73.7 L868.9 75 L867.9 76.3 L867 77.6 L866 78.9 L865.1 80.2 L864.1 81.5 L863.1 82.7 L862.2 84 L861.3 85.3 L860.3 86.6 L859.4 87.9 L858.4 89.2 L857.5 90.5 L856.5 91.8 L855.6 93.1 L854.7 94.4 L853.7 95.7 L852.8 97 L851.9 98.3 L851 99.6 L850 100.9 L849.1 102.2 L848.2 103.5 L847.3 104.8 L846.4 106.1 L845.5 107.4 L844.6 108.7 L843.7 110 L842.8 111.3 L841.9 112.6 L841 113.9 L840.1 115.2 L839.2 116.5 L838.3 117.8 L837.4 119.1 L836.5 120.4 L835.7 121.7 L834.8 123 L833.9 124.3 L833.1 125.6 L832.2 126.9 L831.3 128.2 L830.5 129.5 L829.6 130.8 L828.8 132.1 L827.9 133.4 L827.1 134.7 L826.2 136 L825.4 137.3 L824.6 138.6 L823.8 139.9 L822.9 141.2 L822.1 142.5 L821.3 143.8 L820.5 145.1 L819.7 146.4 L818.9 147.7 L818.1 149 L817.3 150.3 L816.5 151.6 L815.7 152.9 L814.9 154.2 L814.1 155.5 L813.4 156.8 L812.6 158.1 L811.8 159.4 L811.1 160.7 L810.3 162 L809.5 163.3 L808.8 164.6 L808 165.9 L807.3 167.2 L806.6 168.5 L805.8 169.8 L805.1 171.1 L804.4 172.4 L803.7 173.7 L803 175 L802.3 176.3 L801.6 177.6 L800.9 178.9 L800.2 180.2 L799.5 181.5 L798.8 182.8 L798.1 184.1 L797.5 185.3 L796.8 186.6 L796.1 187.9 L795.5 189.2 L794.8 190.5 L794.2 191.8 L793.5 193.1 L792.9 194.4 L792.3 195.7 L791.6 197 L791 198.3 L790.4 199.6 L789.8 200.9 L789.2 202.2 L788.6 203.5 L788 204.8 L787.4 206.1 L786.8 207.4 L786.2 208.7 L785.7 210 L785.1 211.3 L784.6 212.6 L784 213.9 L783.5 215.2 L782.9 216.5 L782.4 217.8 L781.8 219.1 L781.3 220.4 L780.8 221.7 L780.3 223 L779.8 224.3 L779.3 225.6 L778.8 226.9 L778.3 228.2 L777.8 229.5 L777.3 230.8 L776.9 232.1 L776.4 233.4 L775.9 234.7 L775.5 236 L775 237.3 L774.6 238.6 L774.2 239.9 L773.7 241.2 L773.3 242.5 L772.9 243.8 L772.5 245.1 L772.1 246.4 L771.7 247.7 L771.3 249 L770.9 250.3 L770.5 251.6 L770.2 252.9 L769.8 254.2 L769.4 255.5 L769.1 256.8 L768.7 258.1 L768.4 259.4 L768.1 260.7 L767.8 262 L767.4 263.3 L767.1 264.6 L766.8 265.9 L766.5 267.2 L766.2 268.5 L765.9 269.8 L765.7 271.1 L765.4 272.4 L765.1 273.7 L764.8 275 L764.6 276.3 L764.3 277.6 L764.1 278.9 L763.9 280.2 L763.6 281.5 L763.4 282.8 L763.2 284.1 L763 285.4 L762.8 286.7 L762.6 288 L762.4 289.3 L762.2 290.6 L762.1 291.9 L761.9 293.2 L761.7 294.5 L761.6 295.8 L761.5 297.1 L761.3 298.4 L761.2 299.7 L761.1 301 L760.9 302.3 L760.8 303.6 L760.7 304.9 L760.6 306.2 L760.5 307.5 L760.4 308.8 L760.4 310.1 L760.3 311.4 L760.2 312.7 L760.2 314 L760.1 315.3 L760.1 316.6 L760.1 317.9 L760 319.2 L760 320.5 L760 321.8 L760 323.1 L760 324.4 L760 325.7 L760 327 L760 328.3 L760 329.6 L760.1 330.9 L760.1 332.2 L760.2 333.5 L760.2 334.8 L760.3 336.1 L760.3 337.4 L760.4 338.7 L760.5 340 L760.6 341.3 L760.7 342.5 L760.8 343.8 L760.9 345.1 L761 346.4 L761.1 347.7 L761.3 349 L761.4 350.3 L761.5 351.6 L761.7 352.9 L761.8 354.2 L762 355.5 L762.2 356.8 L762.3 358.1 L762.5 359.4 L762.7 360.7 L762.9 362 L763.1 363.3 L763.3 364.6 L763.5 365.9 L763.8 367.2 L764 368.5 L764.2 369.8 L764.5 371.1 L764.7 372.4 L765 373.7 L765.3 375 L765.5 376.3 L765.8 377.6 L766.1 378.9 L766.4 380.2 L766.7 381.5 L767 382.8 L767.3 384.1 L767.6 385.4 L767.9 386.7 L768.3 388 L768.6 389.3 L768.9 390.6 L769.3 391.9 L769.6 393.2 L770 394.5 L770.4 395.8 L770.8 397.1 L771.1 398.4 L771.5 399.7 L771.9 401 L772.3 402.3 L772.7 403.6 L773.1 404.9 L773.6 406.2 L774 407.5 L774.4 408.8 L774.8 410.1 L775.3 411.4 L775.7 412.7 L776.2 414 L776.7 415.3 L777.1 416.6 L777.6 417.9 L778.1 419.2 L778.6 420.5 L779.1 421.8 L779.6 423.1 L780.1 424.4 L780.6 425.7 L781.1 427 L781.6 428.3 L782.1 429.6 L782.7 430.9 L783.2 432.2 L783.8 433.5 L784.3 434.8 L784.9 436.1 L785.4 437.4 L786 438.7 L786.6 440 L787.2 441.3 L787.7 442.6 L788.3 443.9 L788.9 445.2 L789.5 446.5 L790.1 447.8 L790.7 449.1 L791.4 450.4 L792 451.7 L792.6 453 L793.2 454.3 L793.9 455.6 L794.5 456.9 L795.2 458.2 L795.8 459.5 L796.5 460.8 L797.2 462.1 L797.8 463.4 L798.5 464.7 L799.2 466 L799.9 467.3 L800.6 468.6 L801.3 469.9 L802 471.2 L802.7 472.5 L803.4 473.8 L804.1 475.1 L804.8 476.4 L805.5 477.7 L806.3 479 L807 480.3 L807.7 481.6 L808.5 482.9 L809.2 484.2 L810 485.5 L810.7 486.8 L811.5 488.1 L812.2 489.4"/>
<path d="M1136.7 110 L1139 110.4 L1141.4 110.9 L1143.9 111.3 L1146.4 111.8 L1148.9 112.3 L1151.4 112.8 L1154 113.3 L1156.7 113.8 L1159.4 114.4 L1162.1 114.9 L1164.8 115.5 L1167.6 116.1 L1170.4 116.7 L1173.3 117.3 M629 118 L628.3 118.6 L627.6 119.3 L626.9 119.9 L626.2 120.6 L625.4 121.3 L624.6 122 L623.7 122.8 L622.9 123.5 L622 124.2 L621.1 125 L620.2 125.7 L619.2 126.5 L618.3 127.3 L617.3 128.1 L616.3 128.9 L615.2 129.7 L614.2 130.5 L613.1 131.3 L612 132.2 L611 133 L609.8 133.9 L608.7 134.7 L607.6 135.6 L606.5 136.5 L605.3 137.4 L604.1 138.2 L603 139.1 L601.8 140 L600.6 141 L599.4 141.9 L598.2 142.8 L597 143.7 L595.7 144.7 L594.5 145.6 L593.3 146.6 L592.1 147.5 L590.8 148.5 L589.6 149.4 L588.3 150.4 L587.1 151.4 L585.8 152.4 L584.6 153.3 L583.3 154.3 L582.1 155.3 L580.8 156.3 L579.6 157.3 L578.3 158.3 L577 159.3 L575.8 160.4 L574.5 161.4 L573.3 162.4 L572 163.4 L570.8 164.5 L569.6 165.5 L568.3 166.5 L567.1 167.6 L565.9 168.6 L564.6 169.7 L563.4 170.7 L562.2 171.8 L561 172.8 L559.8 173.9 L558.6 175 L557.4 176 L556.2 177.1 L555 178.2 L553.8 179.3 L552.7 180.3 L551.5 181.4 L550.3 182.5 L549.2 183.6 L548.1 184.7 L546.9 185.8 L545.8 186.9 L544.7 188 L543.6 189.1 L542.5 190.2 L541.4 191.3 L540.3 192.4 L539.2 193.5 L538.2 194.6 L537.1 195.7 L536.1 196.8 L535.1 197.9 L534 199 L533 200.2 L532 201.3 L531.1 202.4 L530.1 203.5 L529.1 204.6 L528.2 205.8 L527.2 206.9 L526.3 208 L525.4 209.2 L524.5 210.3 L523.6 211.4 L522.7 212.6 L521.8 213.7 L521 214.8 L520.1 216 L519.3 217.1 L518.5 218.3 L517.6 219.4 L516.8 220.5 L516.1 221.7 L515.3 222.8 L514.5 224 L513.8 225.1 L513.1 226.3 L512.4 227.4 L511.7 228.6 L511 229.7 L510.3 230.9 L509.6 232.1 L509 233.2 L508.4 234.4 L507.7 235.5 L507.1 236.7 L506.5 237.8 L506 239 L505.4 240.2 L504.9 241.3 L504.3 242.5 L503.8 243.7 L503.3 244.8 L502.8 246 L502.4 247.2 L501.9 248.3 L501.5 249.5 L501 250.7 L500.6 251.8 L500.2 253 L499.9 254.2 L499.5 255.3 L499.1 256.5 L498.8 257.7 L498.5 258.9 L498.2 260 L497.9 261.2 L497.6 262.4 L497.4 263.6 L497.1 264.7 L496.9 265.9 L496.7 267.1 L496.5 268.3 L496.3 269.4 L496.2 270.6 L496 271.8 L495.9 273 L495.8 274.2 L495.7 275.3 L495.6 276.5 L495.5 277.7 L495.5 278.9 L495.4 280.1 L495.4 281.2 L495.4 282.4 L495.4 283.6 L495.5 284.8 L495.5 286 L495.6 287.2 L495.7 288.3 L495.8 289.5 L495.9 290.7 L496 291.9 L496.1 293.1 L496.3 294.3 L496.5 295.4 L496.7 296.6 L496.9 297.8 L497.1 299 L497.4 300.2 L497.6 301.4 L497.9 302.6 L498.2 303.7 L498.5 304.9 L498.8 306.1 L499.2 307.3 L499.5 308.5 L499.9 309.7 L500.3 310.9 L500.7 312 L501.1 313.2 L501.5 314.4 L502 315.6 L502.5 316.8 L503 318 L503.5 319.2 L504 320.4 L504.5 321.5 L505.1 322.7 L505.6 323.9 L506.2 325.1 L506.8 326.3 L507.4 327.5 L508.1 328.7 L508.7 329.9 L509.4 331 L510.1 332.2 L510.8 333.4 L511.5 334.6 L512.2 335.8 L512.9 337 L513.7 338.2 L514.5 339.3 L515.3 340.5 L516.1 341.7 L516.9 342.9 L517.7 344.1 L518.6 345.3 L519.4 346.5 L520.3 347.6 L521.2 348.8 L522.1 350 L523.1 351.2 L524 352.4 L525 353.6 L525.9 354.7 L526.9 355.9 L527.9 357.1 L528.9 358.3 L530 359.5 L531 360.7 L532.1 361.8 L533.2 363 L534.3 364.2 L535.4 365.4 L536.5 366.6 L537.6 367.7 L538.8 368.9 L539.9 370.1 L541.1 371.3 L542.3 372.5 L543.5 373.6 L544.7 374.8 L546 376 L547.2 377.2 L548.5 378.3 L549.8 379.5 L551.1 380.7 L552.4 381.9 L553.7 383 L555 384.2 L556.3 385.4 L557.7 386.5 L559.1 387.7 L560.5 388.9 L561.9 390.1 L563.3 391.2 L564.7 392.4 L566.1 393.6 L567.6 394.7 L569 395.9 L570.5 397.1 L572 398.2 L573.5 399.4 L575 400.6 L576.5 401.7 L578 402.9 L579.6 404 L581.1 405.2 L582.7 406.4 L584.3 407.5 L585.9 408.7 L587.5 409.8 L589.1 411 L590.7 412.1 L592.4 413.3 L594 414.4 L595.7 415.6 L597.3 416.7 L599 417.9 L600.7 419 L602.4 420.2 L604.1 421.3 L605.8 422.5 L607.5 423.6 L609.3 424.7 L611 425.9 L612.8 427 L614.6 428.2 L616.3 429.3 L618.1 430.4 L619.9 431.6 L621.7 432.7 L623.5 433.8 L625.4 435 L627.2 436.1 L629 437.2 L630.9 438.3 L632.7 439.4 L634.6 440.6 L636.4 441.7 L638.3 442.8 L640.2 443.9 L642.1 445 L644 446.1 L645.9 447.2 L647.8 448.4 L649.7 449.5 L651.7 450.6 L653.6 451.7 L655.5 452.8 L657.5 453.9 L659.4 455 L661.4 456 L663.3 457.1 L665.3 458.2 L667.3 459.3 L669.3 460.4 L671.2 461.5 L673.2 462.5 L675.2 463.6 L677.2 464.7 L679.2 465.8 L681.2 466.8 L683.2 467.9 L685.2 468.9 L687.2 470 L689.3 471 L691.3 472.1 L693.3 473.1 L695.3 474.2 L697.3 475.2 L699.4 476.3"/>
<path d="M1127.8 121.1 L1124.9 119.8 L1122.1 118.5 L1119.2 117.2 L1116.3 115.9 L1113.3 114.6 L1110.4 113.3 L1107.5 112 L1104.6 110.7 L1101.6 109.4 L1098.6 108.1 L1095.7 106.8 L1092.7 105.5 L1089.7 104.2 L1086.7 102.9 L1083.7 101.6 L1080.7 100.3 L1077.7 99 L1074.6 97.7 L1071.6 96.4 L1068.5 95.1 L1065.5 93.8 L1062.4 92.5 L1059.3 91.2 L1056.3 89.9 L1053.2 88.6 L1050.1 87.3 L1047 86 L1043.9 84.7 L1040.7 83.4 L1037.6 82.1 L1034.5 80.8 L1031.3 79.5 L1028.2 78.2 L1025.1 76.9 L1021.9 75.6 L1018.7 74.3 L1015.6 73 L1012.4 71.7 L1009.2 70.4 L1006 69.1 L1002.9 67.8 L999.7 66.5 L996.5 65.2 L993.3 63.9 L990.1 62.6 L986.8 61.3 L983.6 60 L980.4 58.7 L977.2 57.4 L974 56.1 L970.7 54.8 L967.5 53.5 L964.3 52.2 L961 50.9 L957.8 49.6 L954.5 48.3 L951.3 47 L948 45.7 L944.8 44.4 L941.5 43.1 L938.3 41.8 L935 40.5 L931.8 39.2 L928.5 37.9 L925.2 36.6 L922 35.3 L918.7 34 L915.5 32.7 L912.2 31.4 L908.9 30.2 L905.7 28.9 L902.6 27.6 L901.6 28.5 L900.8 29.8 L900 31.1 L899.1 32.4 L898.3 33.7 L897.5 35 L896.7 36.3 L895.9 37.6 L895.1 38.9 L894.2 40.2 L893.4 41.5 L892.6 42.8 L891.8 44.1 L891 45.4 L890.2 46.7 L889.4 48 L888.6 49.3 L887.8 50.6 L886.9 51.9 L886.1 53.2 L885.3 54.5 L884.5 55.8 L883.7 57.1 L882.9 58.4 L882.1 59.7 L881.3 61 L880.5 62.3 L879.7 63.6 L878.9 64.9 L878.1 66.2 L877.3 67.5 L876.5 68.8 L875.7 70.1 L874.9 71.4 L874.1 72.7 L873.3 73.9 L872.5 75.2 L871.8 76.5 L871 77.8 L870.2 79.1 L869.4 80.4 L868.6 81.7 L867.8 83 L867.1 84.3 L866.3 85.6 L865.5 86.9 L864.7 88.2 L864 89.5 L863.2 90.8 L862.4 92.1 L861.7 93.4 L860.9 94.7 L860.1 96 L859.4 97.3 L858.6 98.6 L857.9 99.9 L857.1 101.2 L856.3 102.5 L855.6 103.8 L854.9 105.1 L854.1 106.4 L853.4 107.7 L852.6 109 L851.9 110.3 L851.1 111.6 L850.4 112.9 L849.7 114.2 L849 115.5 L848.2 116.8 L847.5 118.1 L846.8 119.4 L846.1 120.7 L845.4 122 L844.6 123.3 L843.9 124.6 L843.2 125.9 L842.5 127.2 L841.8 128.5 L841.1 129.8 L840.4 131.1 L839.7 132.4 L839.1 133.7 L838.4 135 L837.7 136.3 L837 137.6 L836.3 138.9 L835.7 140.2 L835 141.5 L834.3 142.8 L833.7 144.1 L833 145.4 L832.3 146.7 L831.7 148 L831 149.3 L830.4 150.6 L829.7 151.9 L829.1 153.2 L828.5 154.5 L827.8 155.8 L827.2 157.1 L826.6 158.4 L826 159.7 L825.3 161 L824.7 162.3 L824.1 163.6 L823.5 164.9 L822.9 166.2 L822.3 167.5 L821.7 168.8 L821.1 170.1 L820.5 171.4 L820 172.7 L819.4 174 L818.8 175.3 L818.2 176.6 L817.7 177.9 L817.1 179.2 L816.5 180.5 L816 181.8 L815.4 183.1 L814.9 184.4 L814.3 185.7 L813.8 187 L813.3 188.3 L812.7 189.6 L812.2 190.9 L811.7 192.2 L811.2 193.5 L810.7 194.8 L810.2 196.1 L809.7 197.4 L809.2 198.7 L808.7 200 L808.2 201.3 L807.7 202.6 L807.2 203.9 L806.7 205.2 L806.3 206.5 L805.8 207.8 L805.3 209.1 L804.9 210.4 L804.4 211.7 L804 213 L803.5 214.3 L803.1 215.6 L802.7 216.9 L802.2 218.2 L801.8 219.5 L801.4 220.8 L801 222.1 L800.6 223.4 L800.2 224.7 L799.8 226 L799.4 227.3 L799 228.6 L798.6 229.9 L798.2 231.2 L797.9 232.5 L797.5 233.8 L797.1 235.1 L796.8 236.4 L796.4 237.7 L796.1 239 L795.7 240.3 L795.4 241.6 L795 242.9 L794.7 244.2 L794.4 245.5 L794.1 246.8 L793.8 248.1 L793.5 249.4 L793.2 250.7 L792.9 252 L792.6 253.3 L792.3 254.6 L792 255.9 L791.7 257.2 L791.5 258.5 L791.2 259.8 L790.9 261.1 L790.7 262.4 L790.4 263.7 L790.2 265 L790 266.3 L789.7 267.6 L789.5 268.9 L789.3 270.1 L789.1 271.4 L788.8 272.7 L788.6 274 L788.4 275.3 L788.2 276.6 L788.1 277.9 L787.9 279.2 L787.7 280.5 L787.5 281.8 L787.4 283.1 L787.2 284.4 L787 285.7 L786.9 287 L786.8 288.3 L786.6 289.6 L786.5 290.9 L786.4 292.2 L786.2 293.5 L786.1 294.8 L786 296.1 L785.9 297.4 L785.8 298.7 L785.7 300 L785.6 301.3 L785.5 302.6 L785.5 303.9 L785.4 305.2 L785.3 306.5 L785.3 307.8 L785.2 309.1 L785.2 310.4 L785.1 311.7 L785.1 313 L785.1 314.3 L785 315.6 L785 316.9 L785 318.2 L785 319.5 L785 320.8 L785 322.1 L785 323.4 L785 324.7 L785 326 L785.1 327.3 L785.1 328.6 L785.1 329.9 L785.2 331.2 L785.2 332.5 L785.3 333.8 L785.3 335.1 L785.4 336.4 L785.5 337.7 L785.6 339 L785.6 340.3 L785.7 341.6 L785.8 342.9 L785.9 344.2 L786 345.5 L786.1 346.8 L786.3 348.1 L786.4 349.4 L786.5 350.7 L786.6 352 L786.8 353.3 L786.9 354.6 L787.1 355.9 L787.2 357.2 L787.4 358.5 L787.6 359.8 L787.7 361.1 L787.9 362.4 L788.1 363.7 L788.3 365 L788.5 366.3 L788.7 367.6 L788.9 368.9 L789.1 370.2 L789.3 371.5 L789.5 372.8 L789.8 374.1 L790 375.4 L790.2 376.7 L790.5 378 L790.7 379.3 L791 380.6 L791.2 381.9 L791.5 383.2 L791.8 384.5 L792.1 385.8 L792.3 387.1 L792.6 388.4 L792.9 389.7 L793.2 391 L793.5 392.3 L793.8 393.6 L794.1 394.9 L794.5 396.2 L794.8 397.5 L795.1 398.8 L795.4 400.1 L795.8 401.4 L796.1 402.7 L796.5 404 L796.8 405.3 L797.2 406.6 L797.6 407.9 L797.9 409.2 L798.3 410.5 L798.7 411.8 L799.1 413.1 L799.5 414.4 L799.9 415.7 L800.3 417 L800.7 418.3 L801.1 419.6 L801.5 420.9 L801.9 422.2 L802.3 423.5 L802.8 424.8 L803.2 426.1 L803.6 427.4 L804.1 428.7 L804.5 430 L805 431.3 L805.4 432.6 L805.9 433.9 L806.4 435.2 L806.8 436.5 L807.3 437.8 L807.8 439.1 L808.3 440.4 L808.8 441.7 L809.3 443 L809.8 444.3 L810.3 445.6 L810.8 446.9 L811.3 448.2 L811.8 449.5 L812.3 450.8 L812.9 452.1 L813.4 453.4 L813.9 454.7 L814.5 456 L815 457.3 L815.5 458.6 L816.1 459.9 L816.7 461.2 L817.2 462.5"/>
<path d="M1120 112.2 L1120.1 111.7 L1120.2 111.3 L1120.3 110.8 L1120.5 110.4 L1120.7 110 L1120.9 109.6 L1121.2 109.2 L1121.6 108.8 L1122 108.5 L1122.4 108.2 L1122.9 107.9 L1123.4 107.6 L1124 107.3 L1124.6 107.1 L1125.3 106.8 L1126 106.6 L1126.8 106.4 L1127.6 106.2 L1128.5 106.1 L1129.4 106 L1130.4 105.9 L1131.4 105.8 L1132.5 105.7 L1133.7 105.6 L1134.9 105.6 L1136.2 105.6 L1137.5 105.6 L1138.9 105.6 L1140.3 105.7 M663.6 105.8 L664.7 105.8 L665.7 106 L666.6 106.1 L667.4 106.2 L668.3 106.4 L669 106.6 L669.7 106.8 L670.4 107 L671 107.3 L671.5 107.5 L672 107.8 L672.5 108.1 L672.9 108.5 L673.2 108.8 L673.5 109.2 L673.8 109.5 L674 109.9 L674.2 110.3 L674.3 110.8 L674.4 111.2 L674.5 111.7 L674.5 112.2 L674.5 112.7 L674.4 113.2 L674.3 113.7 L674.2 114.2 L674 114.8 L673.8 115.3 L673.5 115.9 L673.3 116.5 L673 117.1 L672.7 117.8 L672.3 118.4 L671.9 119.1 L671.5 119.7 L671.1 120.4 L670.6 121.1 L670.2 121.8 L669.7 122.5 L669.1 123.2 L668.6 123.9 L668 124.7 L667.4 125.4 L666.8 126.2 L666.2 127 L665.6 127.8 L664.9 128.6 L664.3 129.4 L663.6 130.2 L662.9 131 L662.2 131.8 L661.5 132.7 L660.7 133.5 L660 134.4 L659.2 135.2 L658.5 136.1 L657.7 137 L656.9 137.9 L656.1 138.8 L655.3 139.7 L654.5 140.6 L653.7 141.5 L652.9 142.4 L652 143.3 L651.2 144.3 L650.4 145.2 L649.5 146.1 L648.7 147.1 L647.8 148 L647 149 L646.1 150 L645.3 150.9 L644.4 151.9 L643.5 152.9 L642.7 153.9 L641.8 154.9 L641 155.9 L640.1 156.9 L639.2 157.9 L638.4 158.9 L637.5 159.9 L636.6 160.9 L635.8 161.9 L634.9 163 L634.1 164 L633.2 165 L632.4 166.1 L631.5 167.1 L630.7 168.1 L629.8 169.2 L629 170.2 L628.1 171.3 L627.3 172.3 L626.5 173.4 L625.7 174.5 L624.8 175.5 L624 176.6 L623.2 177.7 L622.4 178.7 L621.6 179.8 L620.8 180.9 L620 182 L619.3 183.1 L618.5 184.2 L617.7 185.2 L617 186.3 L616.2 187.4 L615.5 188.5 L614.7 189.6 L614 190.7 L613.3 191.8 L612.5 192.9 L611.8 194 L611.1 195.2 L610.4 196.3 L609.7 197.4 L609.1 198.5 L608.4 199.6 L607.7 200.7 L607.1 201.8 L606.4 203 L605.8 204.1 L605.2 205.2 L604.5 206.3 L603.9 207.5 L603.3 208.6 L602.7 209.7 L602.2 210.9 L601.6 212 L601 213.1 L600.5 214.3 L599.9 215.4 L599.4 216.5 L598.9 217.7 L598.4 218.8 L597.8 220 L597.4 221.1 L596.9 222.3 L596.4 223.4 L595.9 224.6 L595.5 225.7 L595 226.9 L594.6 228 L594.2 229.2 L593.8 230.3 L593.4 231.5 L593 232.6 L592.6 233.8 L592.3 234.9 L591.9 236.1 L591.6 237.3 L591.2 238.4 L590.9 239.6 L590.6 240.7 L590.3 241.9 L590 243.1 L589.8 244.2 L589.5 245.4 L589.3 246.6 L589 247.7 L588.8 248.9 L588.6 250.1 L588.4 251.2 L588.2 252.4 L588 253.6 L587.8 254.7 L587.7 255.9 L587.5 257.1 L587.4 258.2 L587.3 259.4 L587.2 260.6 L587.1 261.8 L587 262.9 L586.9 264.1 L586.9 265.3 L586.8 266.5 L586.8 267.6 L586.8 268.8 L586.8 270 L586.8 271.2 L586.8 272.4 L586.8 273.5 L586.9 274.7 L586.9 275.9 L587 277.1 L587.1 278.3 L587.2 279.4 L587.3 280.6 L587.4 281.8 L587.5 283 L587.6 284.2 L587.8 285.3 L588 286.5 L588.1 287.7 L588.3 288.9 L588.5 290.1 L588.8 291.3 L589 292.4 L589.2 293.6 L589.5 294.8 L589.7 296 L590 297.2 L590.3 298.4 L590.6 299.6 L590.9 300.7 L591.3 301.9 L591.6 303.1 L592 304.3 L592.3 305.5 L592.7 306.7 L593.1 307.9 L593.5 309 L593.9 310.2 L594.3 311.4 L594.8 312.6 L595.2 313.8 L595.7 315 L596.2 316.2 L596.7 317.3 L597.2 318.5 L597.7 319.7 L598.2 320.9 L598.8 322.1 L599.3 323.3 L599.9 324.5 L600.5 325.7 L601.1 326.8 L601.7 328 L602.3 329.2 L602.9 330.4 L603.5 331.6 L604.2 332.8 L604.8 334 L605.5 335.1 L606.2 336.3 L606.9 337.5 L607.6 338.7 L608.3 339.9 L609.1 341.1 L609.8 342.3 L610.6 343.4 L611.3 344.6 L612.1 345.8 L612.9 347 L613.7 348.2 L614.5 349.4 L615.4 350.5 L616.2 351.7 L617 352.9 L617.9 354.1 L618.8 355.3 L619.7 356.5 L620.6 357.6 L621.5 358.8 L622.4 360 L623.3 361.2 L624.2 362.4 L625.2 363.5 L626.2 364.7 L627.1 365.9 L628.1 367.1 L629.1 368.3 L630.1 369.4 L631.1 370.6 L632.2 371.8 L633.2 373 L634.2 374.2 L635.3 375.3 L636.4 376.5 L637.4 377.7 L638.5 378.9 L639.6 380 L640.7 381.2 L641.9 382.4 L643 383.5 L644.1 384.7 L645.3 385.9 L646.4 387.1 L647.6 388.2 L648.8 389.4 L650 390.6 L651.2 391.7 L652.4 392.9 L653.6 394.1 L654.8 395.2 L656 396.4 L657.3 397.6 L658.5 398.7 L659.8 399.9 L661.1 401.1 L662.4 402.2 L663.6 403.4 L664.9 404.5 L666.2 405.7 L667.6 406.9 L668.9 408 L670.2 409.2 L671.6 410.3 L672.9 411.5 L674.3 412.6 L675.6 413.8 L677 414.9 L678.4 416.1 L679.8 417.2 L681.2 418.4 L682.6 419.5 L684 420.7 L685.4 421.8 L686.8 422.9 L688.2 424.1 L689.7 425.2 L691.1 426.4 L692.6 427.5 L694 428.6 L695.5 429.8 L697 430.9 L698.4 432 L699.9 433.2 L701.4 434.3 L702.9 435.4 L704.4 436.5 L705.9 437.7 L707.4 438.8 L709 439.9 L710.5 441 L712 442.1 L713.6 443.3 L715.1 444.4 L716.7 445.5 L718.2 446.6 L719.8 447.7 L721.3 448.8 L722.9 449.9 L724.5 451 L726 452.1 L727.6 453.2 L729.2 454.3"/>
<path d="M911 116.7 L910.1 115.7 L909.3 114.6 L908.4 113.6 L907.5 112.6 L906.7 111.6 L905.8 110.6 L904.9 109.6 L904 108.6 L903.2 107.6 L902.3 106.6 L901.4 105.7 L900.6 104.7 L899.7 103.8 L898.8 102.8 L898 101.9 L897.1 101 L896.2 100.1 L895.4 99.2 L894.5 98.3 L893.6 97.4 L892.7 96.6 L891.9 95.7 L891 94.9 L890.1 94.1 L889.2 93.3 L888.3 92.5 L887.5 91.7 L886.6 91 L885.7 90.3 L884.8 89.5 L883.9 88.8 L883 88.2 L882 87.5 L881.1 86.9 L880.2 86.3 L879.3 85.7 L878.3 85.1 L877.4 84.5 L876.4 84 L875.4 83.5 L874.4 83 L873.4 82.6 L872.4 82.2 L871.4 81.8 L870.4 81.4 L869.3 81 L868.3 80.7 L867.2 80.5 L866.1 80.2 L864.9 80 L863.8 79.8 L862.6 79.6 L861.4 79.5 L860.2 79.4 L859 79.3 L857.7 79.3 L856.4 79.3 L855.1 79.3 L853.7 79.3 L852.3 79.4 L850.9 79.6 L849.5 79.7 L848 79.9 L846.5 80.1 L845 80.3 L843.5 80.6 L841.9 80.9 L840.2 81.2 L838.6 81.6 L836.9 82 L835.2 82.4 L833.4 82.8 L831.7 83.3 L829.9 83.8 L828 84.3 L826.2 84.9 L824.3 85.4 L822.3 86 L820.4 86.6 L818.4 87.2 L816.4 87.9 L814.4 88.6 L812.3 89.2 L810.2 90 L808.1 90.7 L806 91.4 L803.8 92.2 L801.6 93 L799.4 93.8 L797.2 94.6 L795 95.4 L792.7 96.2 L790.5 97.1 L788.2 97.9 L785.9 98.8 L783.5 99.7 L781.2 100.6 L778.8 101.5 L776.5 102.4 L774.1 103.4 L771.7 104.3 L769.3 105.2 L766.9 106.2 L764.4 107.2 L762 108.2 L759.5 109.1 L757.1 110.1 L754.6 111.1 L752.1 112.1 L749.6 113.2 L747.2 114.2 L744.7 115.2 L742.2 116.3 L739.6 117.3 L737.1 118.3 L734.6 119.4 L732.1 120.5 L729.6 121.5 L727 122.6 L724.5 123.7 L722 124.8 L719.4 125.9 L716.9 126.9 L714.3 128 L711.8 129.1 L709.3 130.2 L706.7 131.4 L704.2 132.5 L701.6 133.6 L699.1 134.7 L696.6 135.8 L694 137 L691.5 138.1 L689 139.2 L686.4 140.4 L683.9 141.5 L681.4 142.6 L678.9 143.8 L676.4 144.9 L673.9 146.1 L671.4 147.2 L668.8 148.4 L666.4 149.5 L663.9 150.7 L661.4 151.9 L658.9 153 L656.4 154.2 L654 155.4 L651.5 156.5 L649 157.7 L646.6 158.9 L644.1 160.1 L641.7 161.3 L639.3 162.4 L636.9 163.6 L634.5 164.8 L632.1 166 L629.7 167.2 L627.3 168.4 L624.9 169.6 L622.5 170.8 L620.2 171.9 L617.8 173.1 L615.5 174.3 L613.2 175.5 L610.8 176.7 L608.5 177.9 L606.2 179.1 L603.9 180.3 L601.7 181.6 L599.4 182.8 L597.1 184 L594.9 185.2 L592.7 186.4 L590.4 187.6 L588.2 188.8 L586 190 L583.8 191.2 L581.7 192.4 L579.5 193.7 L577.3 194.9 L575.2 196.1 L573.1 197.3 L571 198.5 L568.9 199.7 L566.8 201 L564.7 202.2 L562.7 203.4 L560.6 204.6 L558.6 205.9 L556.6 207.1 L554.6 208.3 L552.6 209.5 L550.6 210.8 L548.6 212 L546.7 213.2 L544.7 214.4 L542.8 215.7 L540.9 216.9 L539 218.1 L537.2 219.4 L535.3 220.6 L533.5 221.8 L531.6 223.1 L529.8 224.3 L528 225.5 L526.3 226.8 L524.5 228 L522.7 229.2 L521 230.5 L519.3 231.7 L517.6 232.9 L515.9 234.2 L514.3 235.4 L512.6 236.6 L511 237.9 L509.4 239.1 L507.8 240.4 L506.2 241.6 L504.6 242.8 L503.1 244.1 L501.5 245.3 L500 246.6 L498.5 247.8 L497 249 L495.6 250.3 L494.1 251.5 L492.7 252.8 L491.3 254 L489.9 255.2 L488.6 256.5 L487.2 257.7 L485.9 259 L484.6 260.2 L483.3 261.5 L482 262.7 L480.7 263.9 L479.5 265.2 L478.2 266.4 L477 267.7 L475.9 268.9 L474.7 270.2 L473.5 271.4 L472.4 272.7 L471.3 273.9 L470.2 275.2 L469.1 276.4 L468.1 277.6 L467.1 278.9 L466 280.1 L465 281.4 L464.1 282.6 L463.1 283.9 L462.2 285.1 L461.3 286.4 L460.4 287.6 L459.5 288.9 L458.6 290.1 L457.8 291.4 L457 292.6 L456.2 293.9 L455.4 295.1 L454.6 296.4 L453.9 297.6 L453.2 298.9 L452.5 300.1 L451.8 301.4 L451.2 302.6 L450.5 303.9 L449.9 305.1 L449.3 306.4 L448.7 307.6 L448.2 308.9 L447.6 310.1 L447.1 311.4 L446.6 312.6 L446.2 313.9 L445.7 315.1 L445.3 316.3 L444.9 317.6 L444.5 318.8 L444.1 320.1 L443.7 321.3 L443.4 322.6 L443.1 323.8 L442.8 325.1 L442.5 326.3 L442.3 327.6 L442.1 328.8 L441.9 330.1 L441.7 331.3 L441.5 332.6 L441.4 333.8 L441.2 335.1 L441.1 336.3 L441 337.6 L441 338.8 L440.9 340.1 L440.9 341.3 L440.9 342.6 L440.9 343.8 L441 345.1 L441 346.3 L441.1 347.6 L441.2 348.8 L441.3 350.1 L441.5 351.3 L441.6 352.6 L441.8 353.8 L442 355.1 L442.3 356.3 L442.5 357.6 L442.8 358.8 L443.1 360.1 L443.4 361.3 L443.7 362.5 L444 363.8 L444.4 365 L444.8 366.3 L445.2 367.5 L445.6 368.8 L446.1 370 L446.6 371.3 L447 372.5 L447.6 373.8 L448.1 375 L448.6 376.2 L449.2 377.5 L449.8 378.7 L450.4 380 L451 381.2 L451.7 382.5 L452.4 383.7 L453 385 L453.8 386.2 L454.5 387.4 L455.2 388.7 L456 389.9 L456.8 391.2 L457.6 392.4 L458.4 393.6 L459.3 394.9 L460.1 396.1 L461 397.4 L461.9 398.6 L462.8 399.8 L463.8 401.1 L464.7 402.3 L465.7 403.6 L466.7 404.8 L467.7 406 L468.8 407.3 L469.8 408.5 L470.9 409.7 L472 411 L473.1 412.2 L474.2 413.4 L475.4 414.7 L476.5 415.9 L477.7 417.1 L478.9 418.4 L480.1 419.6 L481.4 420.8 L482.6 422.1 L483.9 423.3 L485.2 424.5 L486.5 425.8 L487.8 427 L489.1 428.2 L490.5 429.4 L491.8 430.7 L493.2 431.9 L494.6 433.1 L496.1 434.3 L497.5 435.6 L499 436.8 L500.4 438 L501.9 439.2 L503.4 440.5 L504.9 441.7 L506.5 442.9 L508 444.1 L509.6 445.3 L511.2 446.6 L512.8 447.8 L514.4 449 L516 450.2 L517.6 451.4 L519.3 452.6 L521 453.8 L522.6 455 L524.3 456.2 L526 457.5 L527.8 458.7 L529.5 459.9 L531.3 461.1 L533 462.3 L534.8 463.5 L536.6 464.7 L538.4 465.9 L540.2 467.1 L542 468.3 L543.9 469.5 L545.7 470.7 L547.6 471.9 L549.5 473 L551.3 474.2 L553.2 475.4 L555.1 476.6 L557.1 477.8 L559 479 L560.9 480.2 L562.9 481.3 L564.8 482.5 L566.8 483.7 L568.8 484.9 L570.8 486 L572.8 487.2 L574.8 488.4 L576.8 489.5 L578.8 490.7 L580.8 491.8"/>
<path d="M1033.9 130 L1032.3 128.7 L1030.7 127.4 L1029 126.1 L1027.4 124.8 L1025.7 123.5 L1024.1 122.2 L1022.4 121 L1020.8 119.7 L1019.1 118.4 L1017.4 117.1 L1015.7 115.8 L1014.1 114.5 L1012.4 113.2 L1010.7 111.9 L1009 110.6 L1007.3 109.3 L1005.6 108 L1003.9 106.8 L1002.1 105.5 L1000.4 104.2 L998.7 102.9 L997 101.6 L995.2 100.3 L993.5 99 L991.7 97.7 L990 96.5 L988.2 95.2 L986.5 93.9 L984.7 92.6 L983 91.3 L981.2 90 L979.5 88.8 L977.7 87.5 L975.9 86.2 L974.1 84.9 L972.4 83.6 L970.6 82.4 L968.8 81.1 L967 79.8 L965.2 78.5 L963.5 77.2 L961.7 76 L959.9 74.7 L958.1 73.4 L956.3 72.2 L954.5 70.9 L952.7 69.6 L950.9 68.4 L949.2 67.1 L947.4 65.9 L945.6 64.6 L943.8 63.3 L942 62.1 L940.2 60.9 L938.5 59.6 L936.7 58.4 L934.9 57.1 L933.1 55.9 L931.4 54.7 L929.6 53.5 L927.9 52.3 L926.2 51.1 L924.4 49.9 L922.7 48.8 L921 47.6 L919.4 46.5 L917.7 45.4 L916.1 44.3 L914.5 43.3 L912.9 42.2 L911.3 41.3 L909.8 40.4 L908.4 39.6 L907 38.8 L905.6 38.2 L904.3 37.7 L903 37.3 L901.7 37.1 L900.4 37.1 L899 37.2 L897.7 37.5 L896.2 38 L894.7 38.6 L893.1 39.3 L891.5 40.1 L889.7 41 L888 41.9 L886.1 42.9 L884.3 43.9 L882.3 45 L880.4 46.1 L878.4 47.2 L876.4 48.4 L874.4 49.5 L872.4 50.7 L870.3 51.9 L868.3 53.1 L866.2 54.3 L864.1 55.5 L862.1 56.7 L860 57.9 L857.9 59.2 L855.8 60.4 L853.6 61.7 L851.5 62.9 L849.4 64.2 L847.3 65.4 L845.2 66.7 L843.1 67.9 L840.9 69.2 L838.8 70.5 L836.7 71.7 L834.6 73 L832.5 74.3 L830.4 75.5 L828.2 76.8 L826.1 78.1 L824 79.4 L821.9 80.6 L819.8 81.9 L817.7 83.2 L815.6 84.5 L813.5 85.7 L811.4 87 L809.3 88.3 L807.2 89.6 L805.1 90.9 L803 92.2 L800.9 93.4 L798.9 94.7 L796.8 96 L794.7 97.3 L792.6 98.6 L790.6 99.9 L788.5 101.2 L786.5 102.4 L784.4 103.7 L782.4 105 L780.4 106.3 L778.3 107.6 L776.3 108.9 L774.3 110.2 L772.3 111.5 L770.3 112.8 L768.3 114 L766.3 115.3 L764.3 116.6 L762.3 117.9 L760.3 119.2 L758.4 120.5 L756.4 121.8 L754.4 123.1 L752.5 124.4 L750.5 125.7 L748.6 127 L746.7 128.3 L744.8 129.5 L742.8 130.8 L740.9 132.1 L739 133.4 L737.2 134.7 L735.3 136 L733.4 137.3 L731.5 138.6 L729.7 139.9 L727.8 141.2 L726 142.5 L724.1 143.8 L722.3 145.1 L720.5 146.4 L718.7 147.7 L716.9 149 L715.1 150.2 L713.3 151.5 L711.5 152.8 L709.8 154.1 L708 155.4 L706.3 156.7 L704.5 158 L702.8 159.3 L701.1 160.6 L699.4 161.9 L697.7 163.2 L696 164.5 L694.3 165.8 L692.6 167.1 L691 168.4 L689.3 169.7 L687.7 171 L686.1 172.3 L684.5 173.6 L682.8 174.9 L681.2 176.2 L679.7 177.5 L678.1 178.7 L676.5 180 L675 181.3 L673.4 182.6 L671.9 183.9 L670.4 185.2 L668.9 186.5 L667.4 187.8 L665.9 189.1 L664.4 190.4 L662.9 191.7 L661.5 193 L660 194.3 L658.6 195.6 L657.2 196.9 L655.8 198.2 L654.4 199.5 L653 200.8 L651.6 202.1 L650.3 203.4 L648.9 204.7 L647.6 206 L646.3 207.3 L645 208.6 L643.7 209.9 L642.4 211.2 L641.1 212.5 L639.8 213.8 L638.6 215 L637.4 216.3 L636.1 217.6 L634.9 218.9 L633.7 220.2 L632.6 221.5 L631.4 222.8 L630.2 224.1 L629.1 225.4 L628 226.7 L626.8 228 L625.7 229.3 L624.6 230.6 L623.6 231.9 L622.5 233.2 L621.5 234.5 L620.4 235.8 L619.4 237.1 L618.4 238.4 L617.4 239.7 L616.4 241 L615.4 242.3 L614.5 243.6 L613.5 244.9 L612.6 246.2 L611.7 247.5 L610.8 248.8 L609.9 250.1 L609.1 251.4 L608.2 252.7 L607.4 254 L606.5 255.3 L605.7 256.6 L604.9 257.9 L604.1 259.2 L603.4 260.4 L602.6 261.7 L601.9 263 L601.1 264.3 L600.4 265.6 L599.7 266.9 L599 268.2 L598.4 269.5 L597.7 270.8 L597.1 272.1 L596.5 273.4 L595.8 274.7 L595.3 276 L594.7 277.3 L594.1 278.6 L593.6 279.9 L593 281.2 L592.5 282.5 L592 283.8 L591.5 285.1 L591 286.4 L590.6 287.7 L590.1 289 L589.7 290.3 L589.3 291.6 L588.9 292.9 L588.5 294.2 L588.1 295.5 L587.8 296.8 L587.4 298.1 L587.1 299.4 L586.8 300.7 L586.5 302 L586.2 303.3 L586 304.6 L585.7 305.9 L585.5 307.2 L585.3 308.5 L585.1 309.8 L584.9 311.1 L584.7 312.4 L584.6 313.6 L584.4 314.9 L584.3 316.2 L584.2 317.5 L584.1 318.8 L584 320.1 L584 321.4 L583.9 322.7 L583.9 324 L583.9 325.3 L583.9 326.6 L583.9 327.9 L583.9 329.2 L583.9 330.5 L584 331.8 L584.1 333.1 L584.2 334.4 L584.3 335.7 L584.4 337 L584.5 338.3 L584.7 339.6 L584.9 340.9 L585 342.2 L585.2 343.5 L585.4 344.8 L585.7 346.1 L585.9 347.4 L586.2 348.7 L586.5 350 L586.7 351.3 L587 352.6 L587.4 353.9 L587.7 355.2 L588.1 356.5 L588.4 357.8 L588.8 359.1 L589.2 360.4 L589.6 361.7 L590 363 L590.5 364.3 L590.9 365.5 L591.4 366.8 L591.9 368.1 L592.4 369.4 L592.9 370.7 L593.4 372 L594 373.3 L594.6 374.6 L595.1 375.9 L595.7 377.2 L596.3 378.5 L597 379.8 L597.6 381.1 L598.2 382.4 L598.9 383.7 L599.6 385 L600.3 386.3 L601 387.6 L601.7 388.9 L602.4 390.2 L603.2 391.5 L604 392.8 L604.7 394.1 L605.5 395.4 L606.4 396.7 L607.2 398 L608 399.3 L608.9 400.6 L609.7 401.9 L610.6 403.2 L611.5 404.5 L612.4 405.8 L613.3 407.1 L614.3 408.4 L615.2 409.7 L616.2 411 L617.2 412.3 L618.2 413.5 L619.2 414.8 L620.2 416.1 L621.2 417.4 L622.3 418.7 L623.3 420 L624.4 421.3 L625.5 422.6 L626.6 423.9 L627.7 425.2 L628.8 426.5 L630 427.8 L631.1 429.1 L632.3 430.4 L633.5 431.7 L634.7 433 L635.9 434.3 L637.1 435.6 L638.3 436.9 L639.6 438.2 L640.8 439.5 L642.1 440.8 L643.4 442.1 L644.7 443.4 L646 444.7 L647.3 446 L648.6 447.3 L650 448.6 L651.3 449.9 L652.7 451.2 L654.1 452.5 L655.5 453.7 L656.9 455 L658.3 456.3 L659.7 457.6 L661.2 458.9 L662.6 460.2 L664.1 461.5 L665.5 462.8 L667 464.1 L668.5 465.4 L670 466.7 L671.5 468"/>
<path d="M909.4 141.1 L908.5 140.2 L907.5 139.2 L906.6 138.3 L905.7 137.3 L904.7 136.4 L903.8 135.5 L902.8 134.6 L901.9 133.7 L901 132.8 L900 131.9 L899.1 131 L898.2 130.1 L897.2 129.3 L896.3 128.4 L895.4 127.6 L894.4 126.7 L893.5 125.9 L892.5 125.1 L891.6 124.3 L890.7 123.5 L889.7 122.7 L888.8 121.9 L887.8 121.1 L886.9 120.4 L885.9 119.6 L885 118.9 L884.1 118.2 L883.1 117.4 L882.1 116.7 L881.2 116.1 L880.2 115.4 L879.3 114.7 L878.3 114.1 L877.3 113.4 L876.4 112.8 L875.4 112.2 L874.4 111.6 L873.4 111 L872.5 110.5 L871.5 109.9 L870.5 109.4 L869.5 108.9 L868.5 108.4 L867.4 107.9 L866.4 107.4 L865.4 107 L864.4 106.5 L863.3 106.1 L862.3 105.7 L861.2 105.3 L860.1 105 L859.1 104.6 L858 104.3 L856.9 104 L855.8 103.7 L854.6 103.5 L853.5 103.2 L852.4 103 L851.2 102.8 L850 102.6 L848.8 102.5 L847.6 102.3 L846.4 102.2 L845.2 102.1 L844 102 L842.7 102 L841.4 102 L840.1 102 L838.8 102 L837.5 102 L836.2 102.1 L834.8 102.1 L833.4 102.2 L832 102.3 L830.6 102.5 L829.2 102.6 L827.7 102.8 L826.2 103 L824.8 103.2 L823.2 103.5 L821.7 103.7 L820.2 104 L818.6 104.3 L817 104.7 L815.4 105 L813.8 105.4 L812.1 105.7 L810.4 106.1 L808.8 106.5 L807 107 L805.3 107.4 L803.6 107.9 L801.8 108.4 L800 108.9 L798.2 109.4 L796.4 109.9 L794.6 110.5 L792.7 111.1 L790.8 111.6 L789 112.2 L787 112.8 L785.1 113.5 L783.2 114.1 L781.2 114.8 L779.3 115.4 L777.3 116.1 L775.3 116.8 L773.3 117.5 L771.2 118.2 L769.2 118.9 L767.1 119.7 L765.1 120.4 L763 121.2 L760.9 122 L758.8 122.7 L756.7 123.5 L754.5 124.3 L752.4 125.1 L750.2 126 L748.1 126.8 L745.9 127.6 L743.7 128.5 L741.5 129.3 L739.4 130.2 L737.1 131.1 L734.9 132 L732.7 132.8 L730.5 133.7 L728.3 134.6 L726 135.6 L723.8 136.5 L721.5 137.4 L719.3 138.3 L717 139.3 L714.8 140.2 L712.5 141.2 L710.2 142.1 L707.9 143.1 L705.7 144 L703.4 145 L701.1 146 L698.8 147 L696.5 148 L694.2 149 L692 150 L689.7 151 L687.4 152 L685.1 153 L682.8 154 L680.5 155 L678.2 156.1 L675.9 157.1 L673.6 158.1 L671.3 159.2 L669.1 160.2 L666.8 161.2 L664.5 162.3 L662.2 163.3 L659.9 164.4 L657.7 165.5 L655.4 166.5 L653.1 167.6 L650.9 168.7 L648.6 169.7 L646.4 170.8 L644.1 171.9 L641.9 173 L639.6 174.1 L637.4 175.1 L635.2 176.2 L632.9 177.3 L630.7 178.4 L628.5 179.5 L626.3 180.6 L624.1 181.7 L621.9 182.8 L619.7 183.9 L617.5 185 L615.3 186.1 L613.2 187.3 L611 188.4 L608.9 189.5 L606.7 190.6 L604.6 191.7 L602.5 192.8 L600.3 194 L598.2 195.1 L596.1 196.2 L594 197.4 L592 198.5 L589.9 199.6 L587.8 200.8 L585.8 201.9 L583.7 203 L581.7 204.2 L579.7 205.3 L577.6 206.5 L575.6 207.6 L573.6 208.7 L571.7 209.9 L569.7 211 L567.7 212.2 L565.8 213.3 L563.8 214.5 L561.9 215.6 L560 216.8 L558.1 218 L556.2 219.1 L554.3 220.3 L552.5 221.4 L550.6 222.6 L548.8 223.7 L546.9 224.9 L545.1 226.1 L543.3 227.2 L541.5 228.4 L539.7 229.6 L538 230.7 L536.2 231.9 L534.5 233.1 L532.8 234.2 L531 235.4 L529.3 236.6 L527.7 237.8 L526 238.9 L524.3 240.1 L522.7 241.3 L521.1 242.5 L519.5 243.6 L517.9 244.8 L516.3 246 L514.7 247.2 L513.2 248.3 L511.6 249.5 L510.1 250.7 L508.6 251.9 L507.1 253.1 L505.6 254.2 L504.2 255.4 L502.7 256.6 L501.3 257.8 L499.9 259 L498.5 260.2 L497.1 261.3 L495.7 262.5 L494.4 263.7 L493 264.9 L491.7 266.1 L490.4 267.3 L489.1 268.5 L487.9 269.7 L486.6 270.8 L485.4 272 L484.1 273.2 L482.9 274.4 L481.8 275.6 L480.6 276.8 L479.4 278 L478.3 279.2 L477.2 280.4 L476.1 281.6 L475 282.8 L473.9 283.9 L472.9 285.1 L471.9 286.3 L470.8 287.5 L469.8 288.7 L468.9 289.9 L467.9 291.1 L467 292.3 L466 293.5 L465.1 294.7 L464.2 295.9 L463.4 297.1 L462.5 298.3 L461.7 299.5 L460.9 300.7 L460.1 301.9 L459.3 303.1 L458.5 304.3 L457.8 305.4 L457 306.6 L456.3 307.8 L455.6 309 L455 310.2 L454.3 311.4 L453.7 312.6 L453.1 313.8 L452.5 315 L451.9 316.2 L451.3 317.4 L450.8 318.6 L450.3 319.8 L449.7 321 L449.3 322.2 L448.8 323.4 L448.3 324.6 L447.9 325.8 L447.5 327 L447.1 328.2 L446.7 329.4 L446.4 330.6 L446 331.8 L445.7 333 L445.4 334.2 L445.1 335.4 L444.9 336.6 L444.6 337.8 L444.4 339 L444.2 340.1 L444 341.3 L443.8 342.5 L443.7 343.7 L443.6 344.9 L443.4 346.1 L443.4 347.3 L443.3 348.5 L443.2 349.7 L443.2 350.9 L443.2 352.1 L443.2 353.3 L443.2 354.5 L443.2 355.7 L443.3 356.9 L443.4 358.1 L443.4 359.3 L443.6 360.4 L443.7 361.6 L443.8 362.8 L444 364 L444.2 365.2 L444.4 366.4 L444.6 367.6 L444.9 368.8 L445.1 370 L445.4 371.2 L445.7 372.3 L446 373.5 L446.3 374.7 L446.7 375.9 L447.1 377.1 L447.4 378.3 L447.8 379.5 L448.3 380.6 L448.7 381.8 L449.2 383 L449.6 384.2 L450.1 385.4 L450.6 386.6 L451.2 387.7 L451.7 388.9 L452.3 390.1 L452.9 391.3 L453.5 392.5 L454.1 393.6 L454.7 394.8 L455.4 396 L456 397.2 L456.7 398.4 L457.4 399.5 L458.1 400.7 L458.9 401.9 L459.6 403.1 L460.4 404.2 L461.2 405.4 L462 406.6 L462.8 407.7 L463.6 408.9 L464.5 410.1 L465.3 411.2 L466.2 412.4 L467.1 413.6 L468 414.7 L469 415.9 L469.9 417.1 L470.9 418.2 L471.8 419.4 L472.8 420.5 L473.8 421.7 L474.9 422.9 L475.9 424 L476.9 425.2 L478 426.3 L479.1 427.5 L480.2 428.6 L481.3 429.8 L482.4 430.9 L483.5 432.1 L484.7 433.2 L485.8 434.4 L487 435.5 L488.2 436.6 L489.4 437.8 L490.6 438.9 L491.9 440.1 L493.1 441.2 L494.3 442.3 L495.6 443.5 L496.9 444.6 L498.2 445.7 L499.5 446.8 L500.8 448 L502.1 449.1 L503.4 450.2 L504.8 451.3 L506.1 452.4 L507.5 453.6 L508.9 454.7 L510.3 455.8 L511.7 456.9"/>
<path d="M744.4 130 L742.2 131 L740 131.9 L737.8 132.9 L735.6 133.9 L733.3 134.9 L731.1 135.9 L728.9 136.9 L726.7 137.9 L724.4 138.9 L722.2 139.9 L720 141 L717.7 142 L715.5 143 L713.3 144.1 L711 145.1 L708.8 146.2 L706.6 147.2 L704.3 148.3 L702.1 149.3 L699.9 150.4 L697.6 151.5 L695.4 152.5 L693.2 153.6 L690.9 154.7 L688.7 155.8 L686.5 156.8 L684.3 157.9 L682.1 159 L679.8 160.1 L677.6 161.2 L675.4 162.3 L673.2 163.4 L671 164.5 L668.8 165.6 L666.6 166.7 L664.5 167.9 L662.3 169 L660.1 170.1 L657.9 171.2 L655.8 172.3 L653.6 173.5 L651.5 174.6 L649.3 175.7 L647.2 176.9 L645 178 L642.9 179.1 L640.8 180.3 L638.7 181.4 L636.6 182.6 L634.5 183.7 L632.4 184.9 L630.3 186 L628.3 187.2 L626.2 188.3 L624.1 189.5 L622.1 190.6 L620.1 191.8 L618 192.9 L616 194.1 L614 195.2 L612 196.4 L610 197.6 L608 198.7 L606 199.9 L604.1 201.1 L602.1 202.2 L600.2 203.4 L598.3 204.6 L596.3 205.8 L594.4 206.9 L592.5 208.1 L590.6 209.3 L588.8 210.5 L586.9 211.6 L585.1 212.8 L583.2 214 L581.4 215.2 L579.6 216.4 L577.8 217.5 L576 218.7 L574.2 219.9 L572.4 221.1 L570.6 222.3 L568.9 223.5 L567.2 224.7 L565.4 225.9 L563.7 227.1 L562 228.2 L560.4 229.4 L558.7 230.6 L557 231.8 L555.4 233 L553.8 234.2 L552.2 235.4 L550.6 236.6 L549 237.8 L547.4 239 L545.8 240.2 L544.3 241.4 L542.8 242.6 L541.3 243.8 L539.8 245 L538.3 246.2 L536.8 247.4 L535.3 248.6 L533.9 249.8 L532.5 251 L531.1 252.2 L529.7 253.4 L528.3 254.6 L526.9 255.8 L525.6 257 L524.2 258.2 L522.9 259.4 L521.6 260.7 L520.3 261.9 L519 263.1 L517.8 264.3 L516.5 265.5 L515.3 266.7 L514.1 267.9 L512.9 269.1 L511.7 270.3 L510.6 271.5 L509.4 272.7 L508.3 274 L507.2 275.2 L506.1 276.4 L505 277.6 L504 278.8 L502.9 280 L501.9 281.2 L500.9 282.4 L499.9 283.7 L498.9 284.9 L497.9 286.1 L497 287.3 L496.1 288.5 L495.2 289.7 L494.3 290.9 L493.4 292.2 L492.5 293.4 L491.7 294.6 L490.9 295.8 L490.1 297 L489.3 298.2 L488.5 299.5 L487.7 300.7 L487 301.9 L486.3 303.1 L485.6 304.3 L484.9 305.5 L484.2 306.7 L483.6 308 L483 309.2 L482.4 310.4 L481.8 311.6 L481.2 312.8 L480.6 314 L480.1 315.3 L479.6 316.5 L479.1 317.7 L478.6 318.9 L478.1 320.1 L477.7 321.3 L477.2 322.6 L476.8 323.8 L476.4 325 L476 326.2 L475.7 327.4 L475.3 328.6 L475 329.9 L474.7 331.1 L474.4 332.3 L474.1 333.5 L473.9 334.7 L473.7 335.9 L473.4 337.2 L473.2 338.4 L473.1 339.6 L472.9 340.8 L472.8 342 L472.6 343.2 L472.5 344.5 L472.4 345.7 L472.4 346.9 L472.3 348.1 L472.3 349.3 L472.3 350.5 L472.3 351.7 L472.3 353 L472.3 354.2 L472.4 355.4 L472.5 356.6 L472.6 357.8 L472.7 359 L472.8 360.2 L473 361.5 L473.1 362.7 L473.3 363.9 L473.5 365.1 L473.7 366.3 L474 367.5 L474.2 368.7 L474.5 369.9 L474.8 371.1 L475.1 372.4 L475.4 373.6 L475.8 374.8 L476.1 376 L476.5 377.2 L476.9 378.4 L477.3 379.6 L477.8 380.8 L478.2 382 L478.7 383.2 L479.2 384.4 L479.7 385.6 L480.2 386.8 L480.7 388.1 L481.3 389.3 L481.8 390.5 L482.4 391.7 L483 392.9 L483.7 394.1 L484.3 395.3 L485 396.5 L485.6 397.7 L486.3 398.9 L487 400.1 L487.7 401.3 L488.5 402.5 L489.2 403.7 L490 404.9 L490.8 406.1 L491.6 407.3 L492.4 408.5 L493.3 409.6 L494.1 410.8 L495 412 L495.9 413.2 L496.8 414.4 L497.7 415.6 L498.6 416.8 L499.5 418 L500.5 419.2 L501.5 420.4 L502.5 421.5 L503.5 422.7 L504.5 423.9 L505.5 425.1 L506.6 426.3 L507.6 427.5 L508.7 428.6 L509.8 429.8 L510.9 431 L512 432.2 L513.2 433.3 L514.3 434.5 L515.5 435.7 L516.7 436.9 L517.9 438 L519.1 439.2 L520.3 440.4 L521.5 441.5 L522.7 442.7 L524 443.9 L525.3 445 L526.5 446.2 L527.8 447.4 L529.1 448.5 L530.4 449.7 L531.8 450.8 L533.1 452 L534.5 453.1 L535.8 454.3"/>
<path d="M821 134 L819.5 134.9 L817.9 135.8 L816.4 136.8 L814.8 137.7 L813.3 138.6 L811.7 139.6 L810.1 140.5 L808.6 141.5 L807 142.5 L805.5 143.4 L803.9 144.4 L802.3 145.4 L800.8 146.4 L799.2 147.4 L797.6 148.4 L796.1 149.4 L794.5 150.4 L792.9 151.4 L791.3 152.4 L789.8 153.4 L788.2 154.4 L786.6 155.5 L785.1 156.5 L783.5 157.5 L781.9 158.6 L780.4 159.6 L778.8 160.7 L777.2 161.7 L775.7 162.8 L774.1 163.8 L772.5 164.9 L771 166 L769.4 167 L767.9 168.1 L766.3 169.2 L764.8 170.3 L763.2 171.3 L761.7 172.4 L760.1 173.5 L758.6 174.6 L757.1 175.7 L755.5 176.8 L754 177.9 L752.5 179 L750.9 180.1 L749.4 181.2 L747.9 182.3 L746.4 183.4 L744.9 184.5 L743.4 185.6 L741.9 186.7 L740.4 187.9 L738.9 189 L737.4 190.1 L735.9 191.2 L734.4 192.3 L732.9 193.5 L731.5 194.6 L730 195.7 L728.5 196.9 L727.1 198 L725.6 199.1 L724.2 200.3 L722.8 201.4 L721.3 202.5 L719.9 203.7 L718.5 204.8 L717.1 206 L715.6 207.1 L714.2 208.3 L712.8 209.4 L711.4 210.6 L710.1 211.7 L708.7 212.9 L707.3 214 L705.9 215.2 L704.6 216.3 L703.2 217.5 L701.9 218.7 L700.6 219.8 L699.2 221 L697.9 222.1 L696.6 223.3 L695.3 224.5 L694 225.6 L692.7 226.8 L691.4 228 L690.1 229.1 L688.8 230.3 L687.6 231.5 L686.3 232.6 L685.1 233.8 L683.8 235 L682.6 236.2 L681.4 237.3 L680.2 238.5 L679 239.7 L677.8 240.9 L676.6 242 L675.4 243.2 L674.2 244.4 L673 245.6 L671.9 246.7 L670.7 247.9 L669.6 249.1 L668.5 250.3 L667.4 251.5 L666.3 252.7 L665.2 253.8 L664.1 255 L663 256.2 L661.9 257.4 L660.8 258.6 L659.8 259.8 L658.7 261 L657.7 262.1 L656.7 263.3 L655.7 264.5 L654.7 265.7 L653.7 266.9 L652.7 268.1 L651.7 269.3 L650.7 270.5 L649.8 271.7 L648.8 272.8 L647.9 274 L647 275.2 L646.1 276.4 L645.2 277.6 L644.3 278.8 L643.4 280 L642.5 281.2 L641.7 282.4 L640.8 283.6 L640 284.8 L639.1 286 L638.3 287.2 L637.5 288.4 L636.7 289.6 L635.9 290.8 L635.1 291.9 L634.4 293.1 L633.6 294.3 L632.9 295.5 L632.2 296.7 L631.4 297.9 L630.7 299.1 L630 300.3 L629.3 301.5 L628.7 302.7 L628 303.9 L627.3 305.1 L626.7 306.3 L626.1 307.5 L625.4 308.7 L624.8 309.9 L624.2 311.1 L623.7 312.3 L623.1 313.5 L622.5 314.7 L622 315.9 L621.4 317.1 L620.9 318.3 L620.4 319.5 L619.9 320.7 L619.4 321.9 L618.9 323.1 L618.4 324.3 L618 325.5 L617.5 326.7 L617.1 327.9 L616.7 329.1 L616.3 330.3 L615.9 331.5 L615.5 332.7 L615.1 333.9 L614.7 335.1 L614.4 336.3 L614 337.5 L613.7 338.7 L613.4 339.9 L613.1 341.1 L612.8 342.3 L612.5 343.5 L612.3 344.7 L612 345.9 L611.7 347 L611.5 348.2 L611.3 349.4 L611.1 350.6 L610.9 351.8 L610.7 353 L610.5 354.2 L610.4 355.4 L610.2 356.6 L610.1 357.8 L610 359 L609.8 360.2 L609.7 361.4 L609.6 362.6 L609.6 363.8 L609.5 365 L609.4 366.2 L609.4 367.3 L609.4 368.5 L609.4 369.7 L609.3 370.9 L609.3 372.1 L609.4 373.3 L609.4 374.5 L609.4 375.7 L609.5 376.9 L609.5 378.1 L609.6 379.2 L609.7 380.4 L609.8 381.6 L609.9 382.8 L610 384 L610.2 385.2 L610.3 386.4 L610.5 387.5 L610.6 388.7 L610.8 389.9 L611 391.1 L611.2 392.3 L611.4 393.5 L611.6 394.6 L611.9 395.8 L612.1 397 L612.4 398.2 L612.6 399.3 L612.9 400.5 L613.2 401.7 L613.5 402.9 L613.8 404.1 L614.1 405.2 L614.5 406.4 L614.8 407.6 L615.1 408.7 L615.5 409.9 L615.9 411.1 L616.3 412.2 L616.7 413.4 L617.1 414.6 L617.5 415.7 L617.9 416.9 L618.4 418.1 L618.8 419.2 L619.3 420.4 L619.7 421.6 L620.2 422.7 L620.7 423.9 L621.2 425 L621.7 426.2 L622.2 427.3 L622.7 428.5 L623.3 429.6 L623.8 430.8 L624.4 431.9 L624.9 433.1 L625.5 434.2 L626.1 435.4 L626.7 436.5 L627.3 437.7 L627.9 438.8 L628.5 440 L629.1 441.1 L629.7 442.2 L630.4 443.4 L631 444.5 L631.7 445.6 L632.4 446.8 L633 447.9 L633.7 449 L634.4 450.1 L635.1 451.3 L635.8 452.4 L636.5 453.5 L637.2 454.6 L637.9 455.7 L638.7 456.8 L639.4 457.9 L640.2 459.1 L640.9 460.2 L641.7 461.3 L642.4 462.4 L643.2 463.5 L644 464.6 L644.7 465.7 L645.5 466.7 L646.3 467.8 L647.1 468.9 L647.9 470 L648.7 471.1 L649.5 472.2 L650.3 473.2 L651.1 474.3 L652 475.4 L652.8 476.4 L653.6 477.5 L654.4 478.5 L655.3 479.6 L656.1 480.6 L656.9 481.7 L657.8 482.7 L658.6 483.8 L659.4 484.8 L660.3 485.8 L661.1 486.9 L662 487.9"/>
<path d="M760 95 L757.2 96.3 L754.3 97.5 L751.5 98.8 L748.7 100.1 L745.9 101.3 L743.1 102.6 L740.3 103.9 L737.5 105.2 L734.7 106.4 L731.9 107.7 L729.1 109 L726.4 110.3 L723.6 111.5 L720.8 112.8 L718.1 114.1 L715.4 115.4 L712.6 116.7 L709.9 117.9 L707.2 119.2 L704.5 120.5 L701.8 121.8 L699.1 123.1 L696.4 124.3 L693.7 125.6 L691.1 126.9 L688.4 128.2 L685.8 129.5 L683.1 130.8 L680.5 132 L677.9 133.3 L675.3 134.6 L672.7 135.9 L670.1 137.2 L667.5 138.5 L665 139.8 L662.4 141.1 L659.9 142.3 L657.3 143.6 L654.8 144.9 L652.3 146.2 L649.8 147.5 L647.3 148.8 L644.8 150.1 L642.4 151.4 L639.9 152.6 L637.5 153.9 L635.1 155.2 L632.6 156.5 L630.2 157.8 L627.9 159.1 L625.5 160.4 L623.1 161.7 L620.8 163 L618.4 164.2 L616.1 165.5 L613.8 166.8 L611.5 168.1 L609.2 169.4 L606.9 170.7 L604.7 172 L602.5 173.3 L600.2 174.6 L598 175.9 L595.8 177.2 L593.6 178.4 L591.5 179.7 L589.3 181 L587.2 182.3 L585 183.6 L582.9 184.9 L580.8 186.2 L578.8 187.5 L576.7 188.8 L574.7 190.1 L572.6 191.4 L570.6 192.7 L568.6 194 L566.6 195.2 L564.7 196.5 L562.7 197.8 L560.8 199.1 L558.8 200.4 L556.9 201.7 L555.1 203 L553.2 204.3 L551.3 205.6 L549.5 206.9 L547.7 208.2 L545.9 209.5 L544.1 210.8 L542.3 212.1 L540.6 213.3 L538.8 214.6 L537.1 215.9 L535.4 217.2 L533.7 218.5 L532.1 219.8 L530.4 221.1 L528.8 222.4 L527.2 223.7 L525.6 225 L524 226.3 L522.5 227.6 L520.9 228.9 L519.4 230.2 L517.9 231.5 L516.4 232.8 L514.9 234 L513.5 235.3 L512.1 236.6 L510.7 237.9 L509.3 239.2 L507.9 240.5 L506.5 241.8 L505.2 243.1 L503.9 244.4 L502.6 245.7 L501.3 247 L500.1 248.3 L498.8 249.6 L497.6 250.9 L496.4 252.2 L495.2 253.5 L494.1 254.8 L492.9 256.1 L491.8 257.4 L490.7 258.6 L489.6 259.9 L488.6 261.2 L487.5 262.5 L486.5 263.8 L485.5 265.1 L484.5 266.4 L483.6 267.7 L482.6 269 L481.7 270.3 L480.8 271.6 L479.9 272.9 L479.1 274.2 L478.2 275.5 L477.4 276.8 L476.6 278.1 L475.8 279.4 L475.1 280.7 L474.4 282 L473.6 283.2 L472.9 284.5 L472.3 285.8 L471.6 287.1 L471 288.4 L470.4 289.7 L469.8 291 L469.2 292.3 L468.7 293.6 L468.1 294.9 L467.6 296.2 L467.1 297.5 L466.7 298.8 L466.2 300.1 L465.8 301.4 L465.4 302.7 L465 304 L464.7 305.3 L464.3 306.6 L464 307.9 L463.7 309.2 L463.4 310.4 L463.2 311.7 L462.9 313 L462.7 314.3 L462.5 315.6 L462.4 316.9 L462.2 318.2 L462.1 319.5 L462 320.8 L461.9 322.1 L461.8 323.4 L461.8 324.7 L461.8 326 L461.8 327.3 L461.8 328.6 L461.8 329.9 L461.9 331.2 L462 332.5 L462.1 333.8 L462.2 335.1 L462.3 336.4 L462.5 337.6 L462.7 338.9 L462.9 340.2 L463.1 341.5 L463.4 342.8 L463.7 344.1 L464 345.4 L464.3 346.7 L464.6 348 L465 349.3 L465.4 350.6 L465.8 351.9 L466.2 353.2 L466.6 354.5 L467.1 355.8 L467.6 357.1 L468.1 358.4 L468.6 359.7 L469.2 361 L469.7 362.3 L470.3 363.5 L470.9 364.8 L471.6 366.1 L472.2 367.4 L472.9 368.7 L473.6 370 L474.3 371.3 L475 372.6 L475.8 373.9 L476.6 375.2 L477.3 376.5 L478.2 377.8 L479 379.1 L479.9 380.4 L480.7 381.7 L481.6 383 L482.6 384.3 L483.5 385.6 L484.4 386.9 L485.4 388.2 L486.4 389.4 L487.4 390.7 L488.5 392 L489.5 393.3 L490.6 394.6 L491.7 395.9 L492.8 397.2 L494 398.5 L495.1 399.8 L496.3 401.1 L497.5 402.4 L498.7 403.7 L500 405 L501.2 406.3 L502.5 407.6 L503.8 408.9 L505.1 410.2 L506.4 411.5 L507.8 412.7 L509.1 414 L510.5 415.3 L511.9 416.6 L513.4 417.9 L514.8 419.2 L516.3 420.5 L517.7 421.8 L519.2 423.1 L520.8 424.4 L522.3 425.7 L523.8 427 L525.4 428.3 L527 429.6 L528.6 430.9 L530.2 432.2 L531.9 433.4 L533.6 434.7 L535.2 436 L536.9 437.3 L538.6 438.6 L540.4 439.9 L542.1 441.2 L543.9 442.5 L545.7 443.8 L547.5 445.1 L549.3 446.4 L551.1 447.7 L553 449 L554.8 450.3 L556.7 451.5 L558.6 452.8 L560.5 454.1 L562.5 455.4 L564.4 456.7 L566.4 458 L568.4 459.3 L570.4 460.6 L572.4 461.9"/>
<path d="M705 120 L702.7 121.3 L700.5 122.6 L698.2 123.8 L696 125.1 L693.8 126.4 L691.5 127.7 L689.3 129 L687.1 130.3 L684.9 131.5 L682.7 132.8 L680.6 134.1 L678.4 135.4 L676.2 136.7 L674.1 138 L672 139.2 L669.8 140.5 L667.7 141.8 L665.6 143.1 L663.5 144.4 L661.5 145.7 L659.4 147 L657.3 148.2 L655.3 149.5 L653.2 150.8 L651.2 152.1 L649.2 153.4 L647.2 154.7 L645.2 156 L643.2 157.3 L641.3 158.6 L639.3 159.8 L637.4 161.1 L635.4 162.4 L633.5 163.7 L631.6 165 L629.7 166.3 L627.9 167.6 L626 168.9 L624.1 170.2 L622.3 171.4 L620.5 172.7 L618.7 174 L616.9 175.3 L615.1 176.6 L613.3 177.9 L611.5 179.2 L609.8 180.5 L608.1 181.8 L606.3 183.1 L604.6 184.4 L603 185.6 L601.3 186.9 L599.6 188.2 L598 189.5 L596.3 190.8 L594.7 192.1 L593.1 193.4 L591.5 194.7 L590 196 L588.4 197.3 L586.9 198.6 L585.3 199.9 L583.8 201.1 L582.3 202.4 L580.8 203.7 L579.4 205 L577.9 206.3 L576.5 207.6 L575.1 208.9 L573.7 210.2 L572.3 211.5 L570.9 212.8 L569.5 214.1 L568.2 215.4 L566.9 216.7 L565.6 218 L564.3 219.2 L563 220.5 L561.7 221.8 L560.5 223.1 L559.2 224.4 L558 225.7 L556.8 227 L555.7 228.3 L554.5 229.6 L553.4 230.9 L552.2 232.2 L551.1 233.5 L550 234.8 L548.9 236.1 L547.9 237.4 L546.8 238.7 L545.8 239.9 L544.8 241.2 L543.8 242.5 L542.8 243.8 L541.9 245.1 L540.9 246.4 L540 247.7 L539.1 249 L538.2 250.3 L537.3 251.6 L536.5 252.9 L535.6 254.2 L534.8 255.5 L534 256.8 L533.2 258.1 L532.5 259.4 L531.7 260.7 L531 262 L530.3 263.2 L529.6 264.5 L528.9 265.8 L528.2 267.1 L527.6 268.4 L527 269.7 L526.4 271 L525.8 272.3 L525.2 273.6 L524.7 274.9 L524.1 276.2 L523.6 277.5 L523.1 278.8 L522.6 280.1 L522.2 281.4 L521.7 282.7 L521.3 284 L520.9 285.3 L520.5 286.5 L520.2 287.8 L519.8 289.1 L519.5 290.4 L519.2 291.7 L518.9 293 L518.6 294.3 L518.3 295.6 L518.1 296.9 L517.9 298.2 L517.7 299.5 L517.5 300.8 L517.3 302.1 L517.2 303.4 L517.1 304.7 L517 306 L516.9 307.3 L516.8 308.6 L516.7 309.9 L516.7 311.2 L516.7 312.4 L516.7 313.7 L516.7 315 L516.8 316.3 L516.8 317.6 L516.9 318.9 L517 320.2 L517.1 321.5 L517.2 322.8 L517.4 324.1 L517.6 325.4 L517.7 326.7 L517.9 328 L518.2 329.3 L518.4 330.6 L518.7 331.9 L519 333.2 L519.3 334.5 L519.6 335.8 L519.9 337 L520.3 338.3 L520.6 339.6 L521 340.9 L521.4 342.2 L521.9 343.5 L522.3 344.8 L522.8 346.1 L523.3 347.4 L523.8 348.7 L524.3 350 L524.8 351.3 L525.4 352.6 L525.9 353.9 L526.5 355.2 L527.1 356.5 L527.8 357.8 L528.4 359.1 L529.1 360.4 L529.8 361.6 L530.5 362.9 L531.2 364.2 L531.9 365.5 L532.7 366.8 L533.4 368.1 L534.2 369.4 L535 370.7 L535.9 372 L536.7 373.3 L537.6 374.6 L538.4 375.9 L539.3 377.2 L540.2 378.5 L541.2 379.8 L542.1 381.1 L543.1 382.4 L544.1 383.7 L545.1 385 L546.1 386.2 L547.1 387.5 L548.2 388.8 L549.2 390.1 L550.3 391.4 L551.4 392.7 L552.5 394 L553.7 395.3 L554.8 396.6 L556 397.9 L557.2 399.2 L558.4 400.5 L559.6 401.8 L560.8 403.1 L562.1 404.4 L563.3 405.7 L564.6 407 L565.9 408.2 L567.2 409.5 L568.6 410.8 L569.9 412.1 L571.3 413.4 L572.7 414.7 L574 416 L575.5 417.3 L576.9 418.6 L578.3 419.9 L579.8 421.2 L581.3 422.5 L582.7 423.8 L584.2 425.1 L585.8 426.4 L587.3 427.6 L588.8 428.9 L590.4 430.2 L592 431.5 L593.6 432.8 L595.2 434.1 L596.8 435.4 L598.5 436.7 L600.1 438 L601.8 439.3 L603.5 440.6 L605.1 441.9 L606.9 443.2 L608.6 444.5 L610.3 445.7 L612.1 447 L613.8 448.3 L615.6 449.6 L617.4 450.9 L619.2 452.2 L621 453.5 L622.9 454.8 L624.7 456.1 L626.6 457.4 L628.4 458.7 L630.3 460 L632.2 461.2 L634.1 462.5 L636.1 463.8 L638 465.1 L639.9 466.4 L641.9 467.7 L643.9 469 L645.9 470.3 L647.9 471.6 L649.9 472.9 L651.9 474.1"/>
<path d="M672 140 L670 141.3 L667.9 142.6 L665.9 143.8 L663.9 145.1 L661.9 146.4 L659.9 147.7 L657.9 149 L655.9 150.2 L654 151.5 L652 152.8 L650.1 154.1 L648.2 155.4 L646.3 156.6 L644.4 157.9 L642.5 159.2 L640.6 160.5 L638.7 161.8 L636.9 163.1 L635 164.3 L633.2 165.6 L631.4 166.9 L629.6 168.2 L627.8 169.5 L626 170.8 L624.2 172 L622.5 173.3 L620.7 174.6 L619 175.9 L617.3 177.2 L615.6 178.5 L613.9 179.8 L612.2 181 L610.6 182.3 L608.9 183.6 L607.3 184.9 L605.7 186.2 L604.1 187.5 L602.5 188.8 L600.9 190.1 L599.3 191.3 L597.8 192.6 L596.2 193.9 L594.7 195.2 L593.2 196.5 L591.7 197.8 L590.2 199.1 L588.8 200.4 L587.3 201.6 L585.9 202.9 L584.5 204.2 L583.1 205.5 L581.7 206.8 L580.3 208.1 L579 209.4 L577.6 210.7 L576.3 212 L575 213.3 L573.7 214.5 L572.4 215.8 L571.1 217.1 L569.9 218.4 L568.7 219.7 L567.4 221 L566.2 222.3 L565.1 223.6 L563.9 224.9 L562.7 226.1 L561.6 227.4 L560.5 228.7 L559.4 230 L558.3 231.3 L557.2 232.6 L556.2 233.9 L555.1 235.2 L554.1 236.5 L553.1 237.8 L552.1 239.1 L551.1 240.3 L550.2 241.6 L549.2 242.9 L548.3 244.2 L547.4 245.5 L546.5 246.8 L545.7 248.1 L544.8 249.4 L544 250.7 L543.1 252 L542.3 253.3 L541.6 254.6 L540.8 255.8 L540 257.1 L539.3 258.4 L538.6 259.7 L537.9 261 L537.2 262.3 L536.5 263.6 L535.9 264.9 L535.3 266.2 L534.7 267.5 L534.1 268.8 L533.5 270.1 L532.9 271.3 L532.4 272.6 L531.9 273.9 L531.4 275.2 L530.9 276.5 L530.4 277.8 L530 279.1 L529.5 280.4 L529.1 281.7 L528.7 283 L528.3 284.3 L528 285.6 L527.6 286.8 L527.3 288.1 L527 289.4 L526.7 290.7 L526.4 292 L526.2 293.3 L525.9 294.6 L525.7 295.9 L525.5 297.2 L525.3 298.5 L525.2 299.8 L525 301.1 L524.9 302.4 L524.8 303.6 L524.7 304.9 L524.6 306.2 L524.6 307.5 L524.5 308.8 L524.5 310.1 L524.5 311.4 L524.5 312.7 L524.6 314 L524.6 315.3 L524.7 316.6 L524.8 317.9 L524.9 319.2 L525 320.4 L525.1 321.7 L525.3 323 L525.5 324.3 L525.7 325.6 L525.9 326.9 L526.1 328.2 L526.4 329.5 L526.7 330.8 L526.9 332.1 L527.3 333.4 L527.6 334.7 L527.9 336 L528.3 337.2 L528.7 338.5 L529.1 339.8 L529.5 341.1 L529.9 342.4 L530.4 343.7 L530.8 345 L531.3 346.3 L531.8 347.6 L532.3 348.9 L532.9 350.2 L533.4 351.5 L534 352.8 L534.6 354 L535.2 355.3 L535.8 356.6 L536.5 357.9 L537.1 359.2 L537.8 360.5 L538.5 361.8 L539.2 363.1 L540 364.4 L540.7 365.7 L541.5 367 L542.3 368.3 L543.1 369.6 L543.9 370.8 L544.7 372.1 L545.6 373.4 L546.4 374.7 L547.3 376 L548.2 377.3 L549.1 378.6 L550.1 379.9 L551 381.2 L552 382.5 L553 383.8 L554 385.1 L555 386.3 L556.1 387.6 L557.1 388.9 L558.2 390.2 L559.3 391.5 L560.4 392.8 L561.5 394.1 L562.6 395.4 L563.8 396.7 L564.9 398 L566.1 399.3 L567.3 400.5 L568.6 401.8 L569.8 403.1 L571 404.4 L572.3 405.7 L573.6 407 L574.9 408.3 L576.2 409.6 L577.5 410.9 L578.9 412.2 L580.2 413.5 L581.6 414.7 L583 416 L584.4 417.3 L585.8 418.6 L587.2 419.9 L588.7 421.2 L590.1 422.5 L591.6 423.8 L593.1 425.1 L594.6 426.4 L596.1 427.6 L597.7 428.9 L599.2 430.2 L600.8 431.5 L602.4 432.8 L604 434.1 L605.6 435.4 L607.2 436.7 L608.8 438 L610.5 439.2 L612.2 440.5 L613.8 441.8 L615.5 443.1 L617.2 444.4 L618.9 445.7 L620.7 447 L622.4 448.3 L624.2 449.5 L626 450.8 L627.7 452.1 L629.5 453.4 L631.3 454.7 L633.2 456 L635 457.3 L636.9 458.6 L638.7 459.8 L640.6 461.1 L642.5 462.4 L644.4 463.7 L646.3 465 L648.2 466.3 L650.1 467.6 L652.1 468.8 L654 470.1 L656 471.4 L658 472.7 L660 474 L662 475.3 L664 476.6 L666 477.8 L668 479.1 L670.1 480.4 L672.1 481.7 L674.2 483 L676.3 484.3 L678.4 485.5 L680.5 486.8 L682.6 488.1 L684.7 489.4 L686.8 490.7 L688.9 491.9 L691.1 493.2"/>
<path d="M880 60 L879.2 59.4 L878.4 58.9 L877.5 58.5 L876.6 58 L875.7 57.7 L874.7 57.3 L873.7 57.1 L872.6 56.9 L871.5 56.7 L870.3 56.6 L869.1 56.6 L867.7 56.6 L866.4 56.7 L864.9 56.8 L863.4 57 L861.8 57.2 L860.1 57.5 L858.4 57.8 L856.6 58.2 L854.7 58.7 L852.8 59.2 L850.8 59.7 L848.7 60.3 L846.5 60.9 L844.3 61.6 L842.1 62.2 L839.7 63 L837.4 63.7 L834.9 64.5 L832.5 65.3 L829.9 66.2 L827.4 67 L824.8 67.9 L822.1 68.8 L819.5 69.7 L816.7 70.7 L814 71.7 L811.2 72.6 L808.4 73.6 L805.6 74.6 L802.7 75.7 L799.9 76.7 L797 77.8 L794.1 78.8 L791.1 79.9 L788.2 81 L785.2 82.1 L782.2 83.2 L779.2 84.3 L776.2 85.4 L773.2 86.5 L770.2 87.6 L767.2 88.8 L764.1 89.9 L761.1 91 L758 92.2 L755 93.4 L751.9 94.5 L748.8 95.7 L745.8 96.9 L742.7 98 L739.6 99.2 L736.5 100.4 L733.4 101.6 L730.4 102.8 L727.3 104 L724.2 105.2 L721.1 106.4 L718 107.6 L715 108.8 L711.9 110 L708.8 111.2 L705.7 112.4 L702.7 113.6 L699.6 114.9 L696.5 116.1 L693.5 117.3 L690.4 118.5 L687.4 119.7 L684.4 121 L681.3 122.2 L678.3 123.4 L675.3 124.7 L672.3 125.9 L669.3 127.1 L666.3 128.4 L663.3 129.6 L660.3 130.9 L657.3 132.1 L654.3 133.3 L651.4 134.6 L648.4 135.8 L645.5 137.1 L642.6 138.3 L639.6 139.6 L636.7 140.8 L633.8 142.1 L630.9 143.3 L628 144.6 L625.2 145.8 L622.3 147.1 L619.5 148.3 L616.6 149.6 L613.8 150.9 L611 152.1 L608.2 153.4 L605.4 154.6 L602.6 155.9 L599.8 157.1 L597.1 158.4 L594.3 159.7 L591.6 160.9 L588.9 162.2 L586.2 163.5 L583.5 164.7 L580.8 166 L578.1 167.2 L575.5 168.5 L572.9 169.8 L570.2 171 L567.6 172.3 L565 173.6 L562.5 174.8 L559.9 176.1 L557.4 177.4 L554.8 178.7 L552.3 179.9 L549.8 181.2 L547.3 182.5 L544.9 183.7 L542.4 185 L540 186.3 L537.6 187.5 L535.1 188.8 L532.8 190.1 L530.4 191.4 L528 192.6 L525.7 193.9 L523.4 195.2 L521.1 196.5 L518.8 197.7 L516.5 199 L514.3 200.3 L512 201.5 L509.8 202.8 L507.6 204.1 L505.4 205.4 L503.3 206.6 L501.1 207.9 L499 209.2 L496.9 210.5 L494.8 211.8 L492.8 213 L490.7 214.3 L488.7 215.6 L486.7 216.9 L484.7 218.1 L482.7 219.4 L480.7 220.7 L478.8 222 L476.9 223.3 L475 224.5 L473.1 225.8 L471.3 227.1 L469.4 228.4 L467.6 229.6 L465.8 230.9 L464 232.2 L462.3 233.5 L460.6 234.8 L458.8 236 L457.2 237.3 L455.5 238.6 L453.8 239.9 L452.2 241.2 L450.6 242.4 L449 243.7 L447.4 245 L445.9 246.3 L444.4 247.6 L442.9 248.8 L441.4 250.1 L439.9 251.4 L438.5 252.7 L437.1 254 L435.7 255.2 L434.3 256.5 L433 257.8 L431.6 259.1 L430.3 260.4 L429.1 261.7 L427.8 262.9 L426.6 264.2 L425.3 265.5 L424.2 266.8 L423 268.1 L421.8 269.3 L420.7 270.6 L419.6 271.9 L418.5 273.2 L417.5 274.5 L416.4 275.8 L415.4 277 L414.4 278.3 L413.5 279.6 L412.5 280.9 L411.6 282.2 L410.7 283.5 L409.8 284.7 L409 286 L408.2 287.3 L407.4 288.6 L406.6 289.9 L405.8 291.2 L405.1 292.4 L404.4 293.7 L403.7 295 L403 296.3 L402.4 297.6 L401.8 298.9 L401.2 300.1 L400.6 301.4 L400.1 302.7 L399.5 304 L399.1 305.3 L398.6 306.6 L398.1 307.8 L397.7 309.1 L397.3 310.4 L396.9 311.7 L396.6 313 L396.2 314.3 L395.9 315.5 L395.7 316.8 L395.4 318.1 L395.2 319.4 L395 320.7 L394.8 322 L394.6 323.2 L394.5 324.5 L394.4 325.8 L394.3 327.1 L394.2 328.4 L394.2 329.7 L394.1 330.9 L394.2 332.2 L394.2 333.5 L394.2 334.8 L394.3 336.1 L394.4 337.4 L394.5 338.6 L394.7 339.9 L394.9 341.2 L395.1 342.5 L395.3 343.8 L395.5 345.1 L395.8 346.3 L396.1 347.6 L396.4 348.9 L396.8 350.2 L397.1 351.5 L397.5 352.8 L397.9 354 L398.4 355.3 L398.8 356.6 L399.3 357.9 L399.8 359.2 L400.4 360.4 L400.9 361.7 L401.5 363 L402.1 364.3 L402.7 365.6 L403.4 366.9 L404.1 368.1 L404.8 369.4 L405.5 370.7 L406.2 372 L407 373.3 L407.8 374.6 L408.6 375.8 L409.4 377.1 L410.3 378.4 L411.2 379.7 L412.1 381 L413 382.2 L414 383.5 L415 384.8 L416 386.1 L417 387.4 L418 388.7 L419.1 389.9 L420.2 391.2 L421.3 392.5 L422.4 393.8 L423.6 395.1 L424.8 396.3 L426 397.6 L427.2 398.9 L428.4 400.2 L429.7 401.5 L431 402.7 L432.3 404 L433.7 405.3 L435 406.6 L436.4 407.9 L437.8 409.1 L439.2 410.4 L440.7 411.7 L442.1 413 L443.6 414.3 L445.1 415.5 L446.7 416.8 L448.2 418.1 L449.8 419.4 L451.4 420.6 L453 421.9 L454.6 423.2 L456.3 424.5 L457.9 425.8 L459.6 427 L461.4 428.3 L463.1 429.6 L464.9 430.9 L466.6 432.1 L468.4 433.4 L470.2 434.7 L472.1 436 L473.9 437.2 L475.8 438.5 L477.7 439.8 L479.6 441.1 L481.6 442.3 L483.5 443.6 L485.5 444.9 L487.5 446.2 L489.5 447.4 L491.5 448.7 L493.6 450 L495.6 451.2 L497.7 452.5 L499.8 453.8 L501.9 455.1 L504.1 456.3 L506.2 457.6 L508.4 458.9 L510.6 460.1 L512.8 461.4 L515 462.7 L517.3 463.9 L519.6 465.2 L521.8 466.5 L524.1 467.8 L526.4 469 L528.8 470.3 L531.1 471.6 L533.5 472.8 L535.8 474.1 L538.2 475.3 L540.6 476.6 L543.1 477.9 L545.5 479.1 L547.9 480.4 L550.4 481.7 L552.9 482.9 L555.4 484.2 L557.9 485.4 L560.4 486.7 L563 488 L565.5 489.2 L568.1 490.5"/>
<path d="M1068 86 L1071.7 87.1 L1075.3 88.1 L1079 89.2 L1082.8 90.3 L1086.5 91.4 L1090.2 92.5 L1094 93.6 L1097.7 94.7 L1101.5 95.9 L1105.3 97 L1109.1 98.1 L1112.9 99.3 L1116.7 100.4 L1120.5 101.6 L1124.3 102.7 L1128.1 103.9 L1131.9 105.1 L1135.8 106.2 L1139.6 107.4 L1143.4 108.6 L1147.2 109.7 L1151.1 110.9 L1154.9 112.1 L1158.7 113.3 L1162.5 114.5 L1166.3 115.7 L1170.2 116.9 L1174 118.1 L1177.8 119.3 L1181.6 120.5 L1185.4 121.7 L1189.1 122.9 M611.9 124.1 L609 125.3 L606.2 126.5 L603.4 127.8 L600.6 129 L597.8 130.2 L595 131.4 L592.2 132.6 L589.4 133.9 L586.7 135.1 L583.9 136.3 L581.2 137.6 L578.4 138.8 L575.7 140 L573 141.3 L570.3 142.5 L567.6 143.7 L564.9 145 L562.3 146.2 L559.6 147.4 L557 148.7 L554.3 149.9 L551.7 151.2 L549.1 152.4 L546.5 153.7 L543.9 154.9 L541.4 156.2 L538.8 157.4 L536.3 158.6 L533.8 159.9 L531.3 161.1 L528.8 162.4 L526.3 163.7 L523.9 164.9 L521.4 166.2 L519 167.4 L516.6 168.7 L514.2 169.9 L511.8 171.2 L509.4 172.4 L507.1 173.7 L504.8 174.9 L502.4 176.2 L500.1 177.5 L497.9 178.7 L495.6 180 L493.4 181.2 L491.1 182.5 L488.9 183.8 L486.7 185 L484.6 186.3 L482.4 187.5 L480.3 188.8 L478.1 190.1 L476 191.3 L474 192.6 L471.9 193.9 L469.9 195.1 L467.8 196.4 L465.8 197.7 L463.8 198.9 L461.9 200.2 L459.9 201.5 L458 202.7 L456.1 204 L454.2 205.3 L452.4 206.5 L450.5 207.8 L448.7 209.1 L446.9 210.3 L445.1 211.6 L443.3 212.9 L441.6 214.1 L439.9 215.4 L438.2 216.7 L436.5 218 L434.8 219.2 L433.2 220.5 L431.6 221.8 L430 223 L428.4 224.3 L426.9 225.6 L425.3 226.9 L423.8 228.1 L422.3 229.4 L420.9 230.7 L419.4 231.9 L418 233.2 L416.6 234.5 L415.3 235.8 L413.9 237 L412.6 238.3 L411.3 239.6 L410 240.9 L408.7 242.1 L407.5 243.4 L406.3 244.7 L405.1 246 L403.9 247.2 L402.8 248.5 L401.6 249.8 L400.6 251.1 L399.5 252.3 L398.4 253.6 L397.4 254.9 L396.4 256.2 L395.4 257.4 L394.4 258.7 L393.5 260 L392.6 261.3 L391.7 262.5 L390.9 263.8 L390 265.1 L389.2 266.4 L388.4 267.6 L387.6 268.9 L386.9 270.2 L386.2 271.5 L385.5 272.8 L384.8 274 L384.2 275.3 L383.5 276.6 L382.9 277.9 L382.4 279.1 L381.8 280.4 L381.3 281.7 L380.8 283 L380.3 284.3 L379.9 285.5 L379.4 286.8 L379 288.1 L378.6 289.4 L378.3 290.6 L378 291.9 L377.7 293.2 L377.4 294.5 L377.1 295.8 L376.9 297 L376.7 298.3 L376.5 299.6 L376.3 300.9 L376.2 302.1 L376.1 303.4 L376 304.7 L376 306 L375.9 307.3 L375.9 308.5 L375.9 309.8 L376 311.1 L376 312.4 L376.1 313.6 L376.2 314.9 L376.4 316.2 L376.5 317.5 L376.7 318.8 L376.9 320 L377.2 321.3 L377.4 322.6 L377.7 323.9 L378 325.2 L378.4 326.4 L378.7 327.7 L379.1 329 L379.5 330.3 L380 331.5 L380.4 332.8 L380.9 334.1 L381.4 335.4 L381.9 336.7 L382.5 337.9 L383.1 339.2 L383.7 340.5 L384.3 341.8 L385 343.1 L385.6 344.3 L386.3 345.6 L387.1 346.9 L387.8 348.2 L388.6 349.4 L389.4 350.7 L390.2 352 L391.1 353.3 L391.9 354.6 L392.8 355.8 L393.8 357.1 L394.7 358.4 L395.7 359.7 L396.7 360.9 L397.7 362.2 L398.7 363.5 L399.8 364.8 L400.8 366 L402 367.3 L403.1 368.6 L404.2 369.9 L405.4 371.2 L406.6 372.4 L407.8 373.7 L409.1 375 L410.4 376.3 L411.7 377.5 L413 378.8 L414.3 380.1 L415.7 381.4 L417.1 382.6 L418.5 383.9 L419.9 385.2 L421.3 386.5 L422.8 387.7 L424.3 389 L425.8 390.3 L427.4 391.6 L428.9 392.8 L430.5 394.1 L432.1 395.4 L433.8 396.7 L435.4 397.9 L437.1 399.2 L438.8 400.5 L440.5 401.8 L442.2 403 L444 404.3 L445.8 405.6 L447.6 406.9 L449.4 408.1 L451.2 409.4 L453.1 410.7 L455 412 L456.9 413.2 L458.8 414.5 L460.7 415.8 L462.7 417 L464.7 418.3 L466.7 419.6 L468.7 420.9 L470.7 422.1 L472.8 423.4 L474.9 424.7 L477 425.9 L479.1 427.2 L481.3 428.5 L483.4 429.7 L485.6 431 L487.8 432.3 L490 433.6 L492.3 434.8 L494.5 436.1 L496.8 437.4 L499.1 438.6 L501.4 439.9 L503.7 441.2 L506 442.4 L508.4 443.7 L510.8 445 L513.2 446.2 L515.6 447.5 L518 448.7 L520.5 450 L522.9 451.3 L525.4 452.5 L527.9 453.8 L530.4 455.1 L533 456.3 L535.5 457.6 L538.1 458.8"/>
<path d="M1158 128 L1160.7 128.7 L1163.3 129.4 L1166 130 L1168.7 130.7 L1171.5 131.5 L1174.2 132.2 L1177 132.9 L1179.8 133.7 L1182.6 134.4 L1185.4 135.2 L1188.2 135.9 L1191.1 136.7 L1194 137.5 L1196.9 138.3 L1199.8 139.1 L1202.7 139.9 L1205.6 140.7 L1208.5 141.6 L1211.5 142.4 L1214.5 143.2 L1217.4 144.1 L1220.4 145 L1223.4 145.8 L1226.4 146.7 L1229.4 147.6 L1232.4 148.5 L1235.4 149.3 L1238.5 150.2 L1241.5 151.1 L1244.6 152.1 L1247.6 153 L1250.7 153.9 L1253.7 154.8 L1256.8 155.7 L1259.8 156.7 L1262.9 157.6 L1266 158.6 L1269.1 159.5 L1272.1 160.5 L1275.2 161.4 L1278.3 162.4 L1281.4 163.4 L1284.4 164.4 L1287.5 165.3 L1290.6 166.3 L1293.6 167.3 L1296.7 168.3 L1299.8 169.3 L1302.9 170.3 L1305.9 171.3 L1309 172.3 L1312 173.3 L1315.1 174.3 L1318.1 175.4 L1321.2 176.4 L1324.2 177.4 M478.4 178.4 L477 179.5 L475.6 180.5 L474.2 181.5 L472.7 182.6 L471.3 183.6 L469.9 184.7 L468.6 185.7 L467.2 186.8 L465.8 187.8 L464.4 188.9 L463.1 189.9 L461.7 191 L460.4 192.1 L459.1 193.1 L457.7 194.2 L456.4 195.3 L455.1 196.3 L453.9 197.4 L452.6 198.5 L451.3 199.6 L450.1 200.7 L448.8 201.8 L447.6 202.8 L446.4 203.9 L445.2 205 L444 206.1 L442.8 207.2 L441.6 208.3 L440.5 209.4 L439.3 210.5 L438.2 211.6 L437.1 212.7 L436 213.8 L434.9 214.9 L433.8 216 L432.8 217.1 L431.7 218.3 L430.7 219.4 L429.7 220.5 L428.7 221.6 L427.7 222.7 L426.7 223.8 L425.7 225 L424.8 226.1 L423.9 227.2 L423 228.3 L422.1 229.4 L421.2 230.6 L420.3 231.7 L419.5 232.8 L418.7 234 L417.8 235.1 L417 236.2 L416.3 237.4 L415.5 238.5 L414.8 239.6 L414 240.8 L413.3 241.9 L412.6 243 L411.9 244.2 L411.3 245.3 L410.6 246.4 L410 247.6 L409.4 248.7 L408.8 249.9 L408.2 251 L407.7 252.2 L407.1 253.3 L406.6 254.5 L406.1 255.6 L405.6 256.8 L405.1 257.9 L404.7 259 L404.3 260.2 L403.9 261.3 L403.5 262.5 L403.1 263.7 L402.7 264.8 L402.4 266 L402.1 267.1 L401.8 268.3 L401.5 269.4 L401.2 270.6 L401 271.7 L400.8 272.9 L400.5 274 L400.4 275.2 L400.2 276.4 L400 277.5 L399.9 278.7 L399.8 279.8 L399.7 281 L399.6 282.1 L399.6 283.3 L399.5 284.5 L399.5 285.6 L399.5 286.8 L399.6 288 L399.6 289.1 L399.7 290.3 L399.7 291.4 L399.8 292.6 L400 293.8 L400.1 294.9 L400.3 296.1 L400.4 297.3 L400.6 298.4 L400.8 299.6 L401.1 300.7 L401.3 301.9 L401.6 303.1 L401.9 304.2 L402.2 305.4 L402.6 306.6 L402.9 307.7 L403.3 308.9 L403.7 310.1 L404.1 311.2 L404.5 312.4 L405 313.6 L405.4 314.7 L405.9 315.9 L406.4 317.1 L407 318.2 L407.5 319.4 L408.1 320.6 L408.7 321.7 L409.3 322.9 L409.9 324.1 L410.5 325.2 L411.2 326.4 L411.9 327.6 L412.6 328.7 L413.3 329.9 L414 331.1 L414.8 332.2 L415.6 333.4 L416.4 334.5 L417.2 335.7 L418 336.9 L418.9 338 L419.7 339.2 L420.6 340.4 L421.5 341.5 L422.5 342.7 L423.4 343.9 L424.4 345 L425.4 346.2 L426.4 347.4 L427.4 348.5 L428.4 349.7 L429.5 350.8 L430.6 352 L431.7 353.2 L432.8 354.3 L433.9 355.5 L435 356.6 L436.2 357.8 L437.4 359 L438.6 360.1 L439.8 361.3 L441 362.4 L442.3 363.6 L443.6 364.8 L444.9 365.9 L446.2 367.1 L447.5 368.2 L448.8 369.4 L450.2 370.5 L451.6 371.7 L452.9 372.9 L454.4 374 L455.8 375.2 L457.2 376.3 L458.7 377.5 L460.2 378.6 L461.6 379.8 L463.2 380.9 L464.7 382.1 L466.2 383.2 L467.8 384.4 L469.3 385.5 L470.9 386.7 L472.5 387.8 L474.1 388.9 L475.8 390.1 L477.4 391.2 L479.1 392.4 L480.8 393.5 L482.5 394.7 L484.2 395.8 L485.9 396.9 L487.6 398.1 L489.4 399.2 L491.2 400.4 L492.9 401.5 L494.7 402.6 L496.5 403.8 L498.4 404.9 L500.2 406 L502 407.2 L503.9 408.3 L505.8 409.4 L507.7 410.5 L509.6 411.7 L511.5 412.8 L513.4 413.9 L515.4 415 L517.3 416.2 L519.3 417.3 L521.3 418.4 L523.3 419.5 L525.3 420.6 L527.3 421.7 L529.3 422.8 L531.3 424 L533.4 425.1 L535.5 426.2 L537.5 427.3 L539.6 428.4 L541.7 429.5 L543.8 430.6 L545.9 431.7 L548 432.8 L550.2 433.9 L552.3 435 L554.5 436.1 L556.6 437.2 L558.8 438.3 L561 439.3 L563.2 440.4 L565.4 441.5 L567.6 442.6 L569.8 443.7 L572 444.7 L574.2 445.8 L576.5 446.9 L578.7 448 L581 449 L583.2 450.1 L585.5 451.2 L587.8 452.2 L590 453.3 L592.3 454.3 L594.6 455.4 L596.9 456.4 L599.2 457.5 L601.5 458.5 L603.8 459.6 L606.2 460.6 L608.5 461.6 L610.8 462.7 L613.1 463.7 L615.5 464.7 L617.8 465.7 L620.2 466.7 L622.5 467.8"/>
<path d="M845 100 L844.3 99.4 L843.5 98.8 L842.8 98.3 L842 97.8 L841.3 97.3 L840.5 96.8 L839.7 96.3 L838.8 95.8 L838 95.4 L837.1 95 L836.3 94.6 L835.4 94.2 L834.4 93.9 L833.5 93.6 L832.5 93.3 L831.5 93 L830.5 92.8 L829.5 92.5 L828.4 92.3 L827.3 92.2 L826.2 92 L825.1 91.9 L823.9 91.8 L822.7 91.7 L821.4 91.6 L820.2 91.6 L818.9 91.6 L817.6 91.6 L816.2 91.7 L814.8 91.7 L813.4 91.8 L811.9 92 L810.4 92.1 L808.9 92.3 L807.4 92.5 L805.8 92.7 L804.2 92.9 L802.5 93.2 L800.8 93.5 L799.1 93.8 L797.3 94.2 L795.5 94.5 L793.7 94.9 L791.8 95.3 L790 95.7 L788 96.2 L786.1 96.6 L784.1 97.1 L782.1 97.6 L780 98.2 L778 98.7 L775.8 99.3 L773.7 99.8 L771.6 100.4 L769.4 101.1 L767.1 101.7 L764.9 102.3 L762.6 103 L760.3 103.7 L758 104.4 L755.7 105.1 L753.3 105.8 L750.9 106.5 L748.5 107.3 L746.1 108.1 L743.6 108.8 L741.2 109.6 L738.7 110.4 L736.2 111.2 L733.6 112.1 L731.1 112.9 L728.5 113.7 L725.9 114.6 L723.4 115.5 L720.8 116.3 L718.1 117.2 L715.5 118.1 L712.9 119 L710.2 119.9 L707.5 120.9 L704.9 121.8 L702.2 122.7 L699.5 123.7 L696.8 124.6 L694 125.6 L691.3 126.5 L688.6 127.5 L685.9 128.5 L683.1 129.5 L680.4 130.5 L677.6 131.5 L674.8 132.5 L672.1 133.5 L669.3 134.5 L666.5 135.5 L663.8 136.5 L661 137.6 L658.2 138.6 L655.4 139.7 L652.6 140.7 L649.9 141.8 L647.1 142.8 L644.3 143.9 L641.5 144.9 L638.7 146 L635.9 147.1 L633.2 148.1 L630.4 149.2 L627.6 150.3 L624.8 151.4 L622.1 152.5 L619.3 153.6 L616.5 154.7 L613.8 155.8 L611 156.9 L608.2 158 L605.5 159.1 L602.8 160.2 L600 161.3 L597.3 162.4 L594.6 163.5 L591.8 164.7 L589.1 165.8 L586.4 166.9 L583.7 168 L581 169.2 L578.4 170.3 L575.7 171.4 L573 172.6 L570.4 173.7 L567.7 174.9 L565.1 176 L562.4 177.2 L559.8 178.3 L557.2 179.5 L554.6 180.6 L552 181.8 L549.4 182.9 L546.9 184.1 L544.3 185.2 L541.7 186.4 L539.2 187.6 L536.7 188.7 L534.2 189.9 L531.7 191.1 L529.2 192.2 L526.7 193.4 L524.2 194.6 L521.8 195.7 L519.3 196.9 L516.9 198.1 L514.5 199.3 L512.1 200.4 L509.7 201.6 L507.3 202.8 L505 204 L502.6 205.2 L500.3 206.3 L498 207.5 L495.7 208.7 L493.4 209.9 L491.1 211.1 L488.9 212.3 L486.6 213.5 L484.4 214.7 L482.2 215.8 L480 217 L477.8 218.2 L475.7 219.4 L473.5 220.6 L471.4 221.8 L469.3 223 L467.2 224.2 L465.1 225.4 L463 226.6 L461 227.8 L459 229 L457 230.2 L455 231.4 L453 232.6 L451 233.8 L449.1 235 L447.2 236.2 L445.3 237.4 L443.4 238.6 L441.5 239.8 L439.7 241 L437.9 242.2 L436.1 243.5 L434.3 244.7 L432.5 245.9 L430.7 247.1 L429 248.3 L427.3 249.5 L425.6 250.7 L423.9 251.9 L422.3 253.1 L420.6 254.3 L419 255.6 L417.4 256.8 L415.9 258 L414.3 259.2 L412.8 260.4 L411.3 261.6 L409.8 262.8 L408.3 264.1 L406.8 265.3 L405.4 266.5 L404 267.7 L402.6 268.9 L401.3 270.1 L399.9 271.4 L398.6 272.6 L397.3 273.8 L396 275 L394.7 276.2 L393.5 277.4 L392.3 278.7 L391.1 279.9 L389.9 281.1 L388.7 282.3 L387.6 283.5 L386.5 284.8 L385.4 286 L384.3 287.2 L383.3 288.4 L382.3 289.6 L381.3 290.9 L380.3 292.1 L379.4 293.3 L378.4 294.5 L377.5 295.8 L376.6 297 L375.8 298.2 L374.9 299.4 L374.1 300.6 L373.3 301.9 L372.5 303.1 L371.8 304.3 L371 305.5 L370.3 306.8 L369.6 308 L369 309.2 L368.3 310.4 L367.7 311.6 L367.1 312.9 L366.6 314.1 L366 315.3 L365.5 316.5 L365 317.8 L364.5 319 L364.1 320.2 L363.6 321.4 L363.2 322.6 L362.8 323.9 L362.5 325.1 L362.1 326.3 L361.8 327.5 L361.5 328.8 L361.3 330 L361 331.2 L360.8 332.4 L360.6 333.7 L360.4 334.9 L360.3 336.1 L360.2 337.3 L360 338.5 L360 339.8 L359.9 341 L359.9 342.2 L359.9 343.4 L359.9 344.7 L359.9 345.9 L360 347.1 L360 348.3 L360.1 349.5 L360.3 350.8 L360.4 352 L360.6 353.2 L360.8 354.4 L361 355.6 L361.2 356.9 L361.5 358.1 L361.8 359.3 L362.1 360.5 L362.4 361.7 L362.8 363 L363.2 364.2 L363.6 365.4 L364 366.6 L364.4 367.8 L364.9 369.1 L365.4 370.3 L365.9 371.5 L366.5 372.7 L367 373.9 L367.6 375.1 L368.2 376.4 L368.8 377.6 L369.5 378.8 L370.2 380 L370.9 381.2 L371.6 382.4 L372.3 383.6 L373.1 384.9 L373.9 386.1 L374.7 387.3 L375.5 388.5 L376.3 389.7 L377.2 390.9 L378.1 392.1 L379 393.3 L379.9 394.5 L380.9 395.7 L381.9 397 L382.9 398.2 L383.9 399.4 L384.9 400.6 L386 401.8 L387.1 403 L388.2 404.2 L389.3 405.4 L390.4 406.6 L391.6 407.8 L392.8 409 L394 410.2 L395.2 411.4 L396.5 412.6 L397.7 413.8 L399 415 L400.3 416.2 L401.6 417.4 L403 418.6 L404.3 419.8 L405.7 421 L407.1 422.2 L408.5 423.4 L410 424.6 L411.4 425.8 L412.9 427 L414.4 428.1 L415.9 429.3 L417.4 430.5 L419 431.7 L420.6 432.9 L422.1 434.1 L423.7 435.3 M1378 436.4 L1375.3 437.6 L1372.5 438.8 L1369.8 440 L1367 441.2 L1364.3 442.3 L1361.5 443.5 L1358.7 444.7 L1355.8 445.9 L1353 447 L1350.1 448.2 L1347.3 449.4 L1344.4 450.5 L1341.5 451.7 L1338.6 452.9 L1335.7 454 L1332.7 455.2 L1329.8 456.4 L1326.8 457.5 L1323.8 458.7 L1320.8 459.8 L1317.8 461 L1314.8 462.1 L1311.8 463.3 L1308.7 464.4 L1305.7 465.6 L1302.6 466.7 L1299.6 467.8 L1296.5 469 L1293.4 470.1 L1290.3 471.3 L1287.2 472.4 L1284.1 473.5 L1280.9 474.6 L1277.8 475.8 L1274.6 476.9 L1271.5 478 L1268.3 479.1 L1265.2 480.2 L1262 481.4 L1258.8 482.5 L1255.6 483.6 L1252.4 484.7 L1249.2 485.8"/>
<path d="M600 170 L598.2 171.3 L596.4 172.5 L594.6 173.8 L592.8 175.1 L591 176.3 L589.3 177.6 L587.5 178.9 L585.8 180.1 L584.1 181.4 L582.4 182.7 L580.7 183.9 L579.1 185.2 L577.4 186.5 L575.8 187.7 L574.1 189 L572.5 190.3 L570.9 191.5 L569.4 192.8 L567.8 194.1 L566.2 195.3 L564.7 196.6 L563.2 197.9 L561.7 199.2 L560.2 200.4 L558.7 201.7 L557.2 203 L555.8 204.2 L554.4 205.5 L553 206.8 L551.6 208.1 L550.2 209.3 L548.8 210.6 L547.5 211.9 L546.1 213.2 L544.8 214.4 L543.5 215.7 L542.3 217 L541 218.3 L539.7 219.5 L538.5 220.8 L537.3 222.1 L536.1 223.4 L534.9 224.6 L533.7 225.9 L532.6 227.2 L531.5 228.5 L530.4 229.8 L529.3 231 L528.2 232.3 L527.1 233.6 L526.1 234.9 L525.1 236.1 L524 237.4 L523.1 238.7 L522.1 240 L521.1 241.2 L520.2 242.5 L519.3 243.8 L518.4 245.1 L517.5 246.4 L516.6 247.6 L515.8 248.9 L514.9 250.2 L514.1 251.5 L513.3 252.8 L512.6 254 L511.8 255.3 L511.1 256.6 L510.3 257.9 L509.6 259.2 L508.9 260.4 L508.3 261.7 L507.6 263 L507 264.3 L506.4 265.6 L505.8 266.8 L505.2 268.1 L504.7 269.4 L504.1 270.7 L503.6 272 L503.1 273.2 L502.6 274.5 L502.2 275.8 L501.7 277.1 L501.3 278.4 L500.9 279.6 L500.5 280.9 L500.2 282.2 L499.8 283.5 L499.5 284.8 L499.2 286.1 L498.9 287.3 L498.6 288.6 L498.4 289.9 L498.1 291.2 L497.9 292.5 L497.7 293.7 L497.6 295 L497.4 296.3 L497.3 297.6 L497.1 298.9 L497 300.2 L497 301.4 L496.9 302.7 L496.9 304 L496.8 305.3 L496.8 306.6 L496.8 307.8 L496.9 309.1 L496.9 310.4 L497 311.7 L497.1 313 L497.2 314.3 L497.3 315.5 L497.5 316.8 L497.7 318.1 L497.8 319.4 L498 320.7 L498.3 321.9 L498.5 323.2 L498.8 324.5 L499.1 325.8 L499.4 327.1 L499.7 328.4 L500 329.6 L500.4 330.9 L500.8 332.2 L501.2 333.5 L501.6 334.8 L502 336 L502.5 337.3 L502.9 338.6 L503.4 339.9 L503.9 341.2 L504.5 342.5 L505 343.7 L505.6 345 L506.2 346.3 L506.8 347.6 L507.4 348.9 L508 350.1 L508.7 351.4 L509.4 352.7 L510.1 354 L510.8 355.3 L511.5 356.5 L512.3 357.8 L513 359.1 L513.8 360.4 L514.6 361.7 L515.4 363 L516.3 364.2 L517.1 365.5 L518 366.8 L518.9 368.1 L519.8 369.4 L520.8 370.6 L521.7 371.9 L522.7 373.2 L523.7 374.5 L524.7 375.8 L525.7 377 L526.7 378.3 L527.8 379.6 L528.9 380.9 L530 382.2 L531.1 383.4 L532.2 384.7 L533.4 386 L534.5 387.3 L535.7 388.6 L536.9 389.8 L538.1 391.1 L539.3 392.4 L540.6 393.7 L541.9 395 L543.1 396.2 L544.4 397.5 L545.7 398.8 L547.1 400.1 L548.4 401.3 L549.8 402.6 L551.2 403.9 L552.6 405.2 L554 406.5 L555.4 407.7 L556.9 409 L558.3 410.3 L559.8 411.6 L561.3 412.8 L562.8 414.1 L564.3 415.4 L565.9 416.7 L567.4 418 L569 419.2 L570.6 420.5 L572.2 421.8 L573.8 423.1 L575.4 424.3 L577.1 425.6 L578.7 426.9 L580.4 428.2 L582.1 429.4 L583.8 430.7 L585.5 432 L587.3 433.3 L589 434.5 L590.8 435.8 L592.6 437.1 L594.4 438.3 L596.2 439.6 L598 440.9 L599.8 442.2 L601.7 443.4 L603.5 444.7 L605.4 446 L607.3 447.2 L609.2 448.5 L611.1 449.8 L613.1 451.1 L615 452.3 L616.9 453.6 L618.9 454.9 L620.9 456.1 L622.9 457.4 L624.9 458.7 L626.9 459.9 L628.9 461.2 L631 462.5 L633 463.7 L635.1 465 L637.2 466.3 L639.3 467.5 L641.4 468.8 L643.5 470.1 L645.6 471.3 L647.7 472.6 L649.9 473.8 L652 475.1 L654.2 476.4 L656.4 477.6 L658.5 478.9 L660.7 480.1 L662.9 481.4 L665.2 482.7 L667.4 483.9 L669.6 485.2 L671.9 486.4 L674.1 487.7 L676.4 488.9 L678.6 490.2 L680.9 491.4"/>
<path d="M690 100 L687.2 101.2 L684.5 102.4 L681.7 103.6 L679 104.8 L676.2 106 L673.5 107.2 L670.7 108.4 L668 109.6 L665.3 110.8 L662.5 112 L659.8 113.2 L657.1 114.4 L654.3 115.7 L651.6 116.9 L648.9 118.1 L646.2 119.3 L643.5 120.6 L640.8 121.8 L638.1 123 L635.4 124.3 L632.8 125.5 L630.1 126.7 L627.4 128 L624.8 129.2 L622.2 130.4 L619.5 131.7 L616.9 132.9 L614.3 134.2 L611.7 135.4 L609.1 136.7 L606.5 137.9 L604 139.2 L601.4 140.4 L598.9 141.7 L596.3 142.9 L593.8 144.2 L591.3 145.4 L588.8 146.7 L586.3 147.9 L583.8 149.2 L581.4 150.4 L578.9 151.7 L576.5 152.9 L574.1 154.2 L571.7 155.5 L569.3 156.7 L566.9 158 L564.5 159.2 L562.2 160.5 L559.8 161.8 L557.5 163 L555.2 164.3 L552.9 165.6 L550.6 166.8 L548.3 168.1 L546.1 169.4 L543.9 170.6 L541.6 171.9 L539.4 173.2 L537.3 174.4 L535.1 175.7 L532.9 177 L530.8 178.2 L528.7 179.5 L526.6 180.8 L524.5 182 L522.4 183.3 L520.3 184.6 L518.3 185.8 L516.3 187.1 L514.3 188.4 L512.3 189.7 L510.3 190.9 L508.4 192.2 L506.4 193.5 L504.5 194.8 L502.6 196 L500.7 197.3 L498.9 198.6 L497 199.8 L495.2 201.1 L493.4 202.4 L491.6 203.7 L489.9 204.9 L488.1 206.2 L486.4 207.5 L484.7 208.8 L483 210 L481.3 211.3 L479.7 212.6 L478 213.9 L476.4 215.2 L474.8 216.4 L473.2 217.7 L471.7 219 L470.1 220.3 L468.6 221.5 L467.1 222.8 L465.7 224.1 L464.2 225.4 L462.8 226.7 L461.4 227.9 L460 229.2 L458.6 230.5 L457.2 231.8 L455.9 233.1 L454.6 234.3 L453.3 235.6 L452 236.9 L450.8 238.2 L449.6 239.4 L448.4 240.7 L447.2 242 L446 243.3 L444.9 244.6 L443.8 245.9 L442.7 247.1 L441.6 248.4 L440.5 249.7 L439.5 251 L438.5 252.3 L437.5 253.5 L436.5 254.8 L435.6 256.1 L434.7 257.4 L433.8 258.7 L432.9 259.9 L432 261.2 L431.2 262.5 L430.4 263.8 L429.6 265.1 L428.8 266.4 L428.1 267.6 L427.3 268.9 L426.6 270.2 L425.9 271.5 L425.3 272.8 L424.7 274 L424 275.3 L423.5 276.6 L422.9 277.9 L422.3 279.2 L421.8 280.5 L421.3 281.7 L420.8 283 L420.4 284.3 L420 285.6 L419.6 286.9 L419.2 288.2 L418.8 289.4 L418.5 290.7 L418.1 292 L417.9 293.3 L417.6 294.6 L417.3 295.9 L417.1 297.1 L416.9 298.4 L416.7 299.7 L416.6 301 L416.4 302.3 L416.3 303.6 L416.2 304.8 L416.2 306.1 L416.1 307.4 L416.1 308.7 L416.1 310 L416.1 311.3 L416.2 312.5 L416.3 313.8 L416.4 315.1 L416.5 316.4 L416.6 317.7 L416.8 319 L417 320.2 L417.2 321.5 L417.4 322.8 L417.7 324.1 L418 325.4 L418.3 326.7 L418.6 327.9 L418.9 329.2 L419.3 330.5 L419.7 331.8 L420.1 333.1 L420.6 334.4 L421 335.6 L421.5 336.9 L422 338.2 L422.5 339.5 L423.1 340.8 L423.7 342.1 L424.3 343.3 L424.9 344.6 L425.5 345.9 L426.2 347.2 L426.9 348.5 L427.6 349.8 L428.3 351 L429.1 352.3 L429.9 353.6 L430.7 354.9 L431.5 356.2 L432.3 357.5 L433.2 358.7 L434.1 360 L435 361.3 L435.9 362.6 L436.9 363.9 L437.9 365.1 L438.9 366.4 L439.9 367.7 L440.9 369 L442 370.3 L443.1 371.6 L444.2 372.8 L445.3 374.1 L446.5 375.4 L447.7 376.7 L448.9 378 L450.1 379.3 L451.3 380.5 L452.6 381.8 L453.9 383.1 L455.2 384.4 L456.5 385.7 L457.8 386.9 L459.2 388.2 L460.6 389.5 L462 390.8 L463.4 392.1 L464.8 393.3 L466.3 394.6 L467.8 395.9 L469.3 397.2 L470.8 398.5 L472.4 399.7 L473.9 401 L475.5 402.3 L477.1 403.6 L478.8 404.9 L480.4 406.1 L482.1 407.4 L483.8 408.7 L485.5 410 L487.2 411.3 L489 412.5 L490.7 413.8 L492.5 415.1 L494.3 416.4 L496.1 417.7 L498 418.9 L499.8 420.2 L501.7 421.5 L503.6 422.8 L505.5 424 L507.4 425.3 L509.4 426.6 L511.4 427.9 L513.4 429.2 L515.4 430.4 L517.4 431.7 L519.4 433 L521.5 434.3 L523.6 435.5 L525.7 436.8 L527.8 438.1 L529.9 439.4 L532 440.6 L534.2 441.9 L536.4 443.2 L538.6 444.5 L540.8 445.7 L543 447 L545.3 448.3 L547.5 449.5 L549.8 450.8 L552.1 452.1 L554.4 453.4 L556.7 454.6 L559.1 455.9 L561.4 457.2 L563.8 458.4 L566.2 459.7 L568.6 461 L571 462.3 L573.4 463.5 L575.9 464.8 L578.3 466.1 L580.8 467.3 L583.3 468.6 L585.8 469.9 L588.3 471.1 L590.8 472.4 L593.4 473.7 L595.9 474.9 L598.5 476.2 L601.1 477.5 L603.6 478.7 L606.3 480 L608.9 481.2 L611.5 482.5 L614.1 483.8 L616.8 485 L619.5 486.3 L622.1 487.5 L624.8 488.8 L627.5 490.1 L630.2 491.3 L633 492.6"/>
<path d="M1010 120 L1008.6 118.7 L1007.1 117.4 L1005.6 116.1 L1004.2 114.8 L1002.7 113.5 L1001.2 112.2 L999.8 110.9 L998.3 109.6 L996.8 108.3 L995.3 107 L993.8 105.7 L992.3 104.4 L990.8 103.1 L989.3 101.8 L987.8 100.5 L986.3 99.2 L984.7 97.9 L983.2 96.6 L981.7 95.3 L980.2 94.1 L978.6 92.8 L977.1 91.5 L975.5 90.2 L974 88.9 L972.5 87.6 L970.9 86.3 L969.3 85 L967.8 83.7 L966.2 82.4 L964.7 81.1 L963.1 79.8 L961.5 78.5 L959.9 77.2 L958.4 75.9 L956.8 74.6 L955.2 73.3 L953.6 72 L952 70.7 L950.5 69.4 L948.9 68.1 L947.3 66.9 L945.7 65.6 L944.1 64.3 L942.5 63 L940.9 61.7 L939.3 60.4 L937.7 59.1 L936.1 57.8 L934.5 56.5 L932.9 55.2 L931.3 54 L929.7 52.7 L928.1 51.4 L926.5 50.1 L924.9 48.8 L923.3 47.6 L921.7 46.3 L920.1 45 L918.6 43.8 L917 42.5 L915.4 41.3 L913.8 40 L912.3 38.8 L910.8 37.6 L909.3 36.4 L907.8 35.3 L906.3 34.2 L904.9 33.2 L903.6 32.4 L902.4 31.7 L901.1 31.4 L899.8 31.5 L898.2 32 L896.5 32.8 L894.5 33.7 L892.4 34.8 L890.3 35.9 L888 37 L885.7 38.2 L883.4 39.5 L881.1 40.7 L878.7 41.9 L876.4 43.2 L874 44.4 L871.6 45.7 L869.2 47 L866.8 48.2 L864.4 49.5 L862 50.8 L859.6 52.1 L857.2 53.4 L854.8 54.6 L852.4 55.9 L850 57.2 L847.6 58.5 L845.2 59.8 L842.8 61.1 L840.4 62.4 L838 63.7 L835.6 65 L833.2 66.2 L830.8 67.5 L828.4 68.8 L826.1 70.1 L823.7 71.4 L821.3 72.7 L818.9 74 L816.5 75.3 L814.2 76.6 L811.8 77.9 L809.5 79.2 L807.1 80.5 L804.7 81.8 L802.4 83.1 L800.1 84.4 L797.7 85.7 L795.4 87 L793 88.3 L790.7 89.6 L788.4 90.8 L786.1 92.1 L783.8 93.4 L781.5 94.7 L779.2 96 L776.9 97.3 L774.6 98.6 L772.3 99.9 L770.1 101.2 L767.8 102.5 L765.5 103.8 L763.3 105.1 L761 106.4 L758.8 107.7 L756.6 109 L754.3 110.3 L752.1 111.6 L749.9 112.9 L747.7 114.2 L745.5 115.5 L743.3 116.8 L741.1 118.1 L738.9 119.4 L736.8 120.7 L734.6 122 L732.5 123.3 L730.3 124.6 L728.2 125.9 L726.1 127.2 L723.9 128.5 L721.8 129.8 L719.7 131.1 L717.6 132.4 L715.6 133.7 L713.5 135 L711.4 136.3 L709.4 137.6 L707.3 138.9 L705.3 140.2 L703.3 141.5 L701.2 142.8 L699.2 144.1 L697.2 145.4 L695.2 146.7 L693.3 148 L691.3 149.3 L689.3 150.5 L687.4 151.8 L685.5 153.1 L683.5 154.4 L681.6 155.7 L679.7 157 L677.8 158.3 L675.9 159.6 L674.1 160.9 L672.2 162.2 L670.3 163.5 L668.5 164.8 L666.7 166.1 L664.9 167.4 L663 168.7 L661.3 170 L659.5 171.3 L657.7 172.6 L655.9 173.9 L654.2 175.2 L652.5 176.5 L650.7 177.8 L649 179.1 L647.3 180.4 L645.6 181.7 L644 183 L642.3 184.3 L640.7 185.6 L639 186.9 L637.4 188.2 L635.8 189.5 L634.2 190.8 L632.6 192.1 L631 193.4 L629.5 194.7 L627.9 196 L626.4 197.3 L624.9 198.6 L623.4 199.9 L621.9 201.2 L620.4 202.5 L618.9 203.8 L617.5 205.1 L616.1 206.4 L614.6 207.7 L613.2 209 L611.8 210.3 L610.4 211.6 L609.1 212.9 L607.7 214.2 L606.4 215.5 L605.1 216.8 L603.8 218.1 L602.5 219.4 L601.2 220.7 L599.9 222 L598.7 223.3 L597.4 224.6 L596.2 225.9 L595 227.2 L593.8 228.5 L592.6 229.8 L591.5 231.1 L590.3 232.4 L589.2 233.7 L588.1 235 L587 236.3 L585.9 237.6 L584.8 238.9 L583.8 240.2 L582.7 241.5 L581.7 242.8 L580.7 244.1 L579.7 245.4 L578.7 246.7 L577.8 248 L576.8 249.3 L575.9 250.6 L575 251.9 L574.1 253.2 L573.2 254.5 L572.3 255.8 L571.5 257.1 L570.6 258.4 L569.8 259.7 L569 261 L568.2 262.3 L567.4 263.5 L566.7 264.8 L565.9 266.1 L565.2 267.4 L564.5 268.7 L563.8 270 L563.2 271.3 L562.5 272.6 L561.9 273.9 L561.2 275.2 L560.6 276.5 L560 277.8 L559.5 279.1 L558.9 280.4 L558.4 281.7 L557.8 283 L557.3 284.3 L556.8 285.6 L556.4 286.9 L555.9 288.2 L555.5 289.5 L555.1 290.8 L554.6 292.1 L554.3 293.4 L553.9 294.7 L553.5 296 L553.2 297.3 L552.9 298.6 L552.6 299.9 L552.3 301.2 L552 302.5 L551.8 303.8 L551.5 305.1 L551.3 306.4 L551.1 307.7 L550.9 309 L550.7 310.3 L550.6 311.6 L550.4 312.9 L550.3 314.2 L550.2 315.5 L550.1 316.8 L550.1 318.1 L550 319.4 L550 320.7 L550 322 L550 323.3 L550 324.6 L550 325.9 L550.1 327.2 L550.2 328.5 L550.2 329.8 L550.3 331.1 L550.5 332.4 L550.6 333.7 L550.8 335 L550.9 336.3 L551.1 337.6 L551.3 338.9 L551.5 340.2 L551.8 341.5 L552 342.8 L552.3 344.1 L552.6 345.4 L552.9 346.7 L553.2 348 L553.6 349.3 L553.9 350.6 L554.3 351.9 L554.7 353.2 L555.1 354.5 L555.5 355.8 L556 357.1 L556.4 358.4 L556.9 359.7 L557.4 361 L557.9 362.3 L558.5 363.6 L559 364.9 L559.6 366.2 L560.1 367.5 L560.7 368.8 L561.3 370.1 L562 371.4 L562.6 372.7 L563.3 374 L563.9 375.3 L564.6 376.6 L565.3 377.9 L566.1 379.2 L566.8 380.5 L567.6 381.8 L568.3 383.1 L569.1 384.4 L569.9 385.7 L570.8 387 L571.6 388.3 L572.4 389.6 L573.3 390.9 L574.2 392.2 L575.1 393.5 L576 394.8 L577 396 L577.9 397.3 L578.9 398.6 L579.8 399.9 L580.8 401.2 L581.9 402.5 L582.9 403.8 L583.9 405.1 L585 406.4 L586.1 407.7 L587.1 409 L588.2 410.3 L589.4 411.6 L590.5 412.9 L591.7 414.2 L592.8 415.5 L594 416.8 L595.2 418.1 L596.4 419.4 L597.6 420.7 L598.9 422 L600.1 423.3 L601.4 424.6 L602.7 425.9 L604 427.2 L605.3 428.5 L606.6 429.8 L607.9 431.1 L609.3 432.4 L610.7 433.7 L612 435 L613.4 436.3 L614.9 437.6 L616.3 438.9 L617.7 440.2 L619.2 441.5 L620.6 442.8 L622.1 444.1 L623.6 445.4 L625.1 446.7 L626.6 448 L628.2 449.3 L629.7 450.6 L631.3 451.9 L632.9 453.2 L634.4 454.5 L636 455.8 L637.7 457.1 L639.3 458.4 L640.9 459.7 L642.6 461 L644.2 462.3"/>
<path d="M973.3 126.7 L974.4 128 L975.4 129.3 L976.5 130.5 L977.5 131.8 L978.6 133.1 L979.6 134.4 L980.7 135.7 L981.7 136.9 L982.8 138.2 L983.8 139.5 L984.8 140.8 L985.8 142.1 L986.9 143.3 L987.9 144.6 L988.9 145.9 L989.9 147.2 L990.9 148.5 L991.9 149.8 L992.9 151 L993.9 152.3 L994.9 153.6 L995.9 154.9 L996.9 156.2 L997.9 157.5 L998.8 158.8 L999.8 160 L1000.8 161.3 L1001.7 162.6 L1002.7 163.9 L1003.6 165.2 L1004.6 166.5 L1005.5 167.8 L1006.4 169.1 L1007.4 170.3 L1008.3 171.6 L1009.2 172.9 L1010.1 174.2 L1011.1 175.5 L1012 176.8 L1012.9 178.1 L1013.8 179.4 L1014.6 180.6 L1015.5 181.9 L1016.4 183.2 L1017.3 184.5 L1018.2 185.8 L1019 187.1 L1019.9 188.4 L1020.7 189.7 L1021.6 191 L1022.4 192.2 L1023.3 193.5 L1024.1 194.8 L1024.9 196.1 L1025.7 197.4 L1026.5 198.7 L1027.3 200 L1028.1 201.3 L1028.9 202.6 L1029.7 203.9 L1030.5 205.2 L1031.3 206.4 L1032.1 207.7 L1032.8 209 L1033.6 210.3 L1034.3 211.6 L1035.1 212.9 L1035.8 214.2 L1036.5 215.5 L1037.3 216.8 L1038 218.1 L1038.7 219.4 L1039.4 220.6 L1040.1 221.9 L1040.8 223.2 L1041.5 224.5 L1042.2 225.8 L1042.8 227.1 L1043.5 228.4 L1044.2 229.7 L1044.8 231 L1045.5 232.3 L1046.1 233.6 L1046.7 234.9 L1047.4 236.2 L1048 237.4 L1048.6 238.7 L1049.2 240 L1049.8 241.3 L1050.4 242.6 L1051 243.9 L1051.6 245.2 L1052.1 246.5 L1052.7 247.8 L1053.2 249.1 L1053.8 250.4 L1054.3 251.7 L1054.9 253 L1055.4 254.3 L1055.9 255.5 L1056.4 256.8 L1056.9 258.1 L1057.4 259.4 L1057.9 260.7 L1058.4 262 L1058.9 263.3 L1059.3 264.6 L1059.8 265.9 L1060.2 267.2 L1060.7 268.5 L1061.1 269.8 L1061.5 271.1 L1062 272.4 L1062.4 273.6 L1062.8 274.9 L1063.2 276.2 L1063.6 277.5 L1064 278.8 L1064.3 280.1 L1064.7 281.4 L1065.1 282.7 L1065.4 284 L1065.7 285.3 L1066.1 286.6 L1066.4 287.9 L1066.7 289.2 L1067 290.5 L1067.3 291.8 L1067.6 293.1 L1067.9 294.3 L1068.2 295.6 L1068.5 296.9 L1068.7 298.2 L1069 299.5 L1069.2 300.8 L1069.5 302.1 L1069.7 303.4 L1069.9 304.7"/>
<path d="M976.7 110.6 L978.2 111.8 L979.7 113 L981.3 114.2 L982.8 115.4 L984.3 116.6 L985.8 117.8 L987.4 119 L988.9 120.2 L990.4 121.4 L991.9 122.6 L993.4 123.8 L994.9 125 L996.4 126.2 L997.9 127.4 L999.4 128.7 L1000.9 129.9 L1002.4 131.1 L1003.9 132.3 L1005.4 133.6 L1006.9 134.8 L1008.4 136 L1009.9 137.2 L1011.3 138.5 L1012.8 139.7 L1014.3 140.9 L1015.8 142.2 L1017.2 143.4 L1018.7 144.7 L1020.1 145.9 L1021.6 147.1 L1023 148.4 L1024.5 149.6 L1025.9 150.9 L1027.3 152.1 L1028.8 153.4 L1030.2 154.6 L1031.6 155.9 L1033 157.1 L1034.4 158.3 L1035.8 159.6 L1037.2 160.8 L1038.6 162.1 L1040 163.4 L1041.4 164.6 L1042.7 165.9 L1044.1 167.1 L1045.5 168.4 L1046.8 169.6 L1048.2 170.9 L1049.5 172.1 L1050.9 173.4 L1052.2 174.7 L1053.5 175.9 L1054.8 177.2 L1056.1 178.4 L1057.5 179.7 L1058.8 180.9 L1060 182.2 L1061.3 183.5 L1062.6 184.7 L1063.9 186 L1065.1 187.3 L1066.4 188.5 L1067.7 189.8 L1068.9 191.1 L1070.1 192.3 L1071.4 193.6 L1072.6 194.8 L1073.8 196.1 L1075 197.4 L1076.2 198.6 L1077.4 199.9 L1078.6 201.2 L1079.7 202.4 L1080.9 203.7 L1082.1 205 L1083.2 206.2 L1084.4 207.5 L1085.5 208.8 L1086.6 210.1 L1087.7 211.3 L1088.8 212.6 L1089.9 213.9 L1091 215.1 L1092.1 216.4 L1093.2 217.7 L1094.2 218.9 L1095.3 220.2 L1096.4 221.5 L1097.4 222.8 L1098.4 224 L1099.4 225.3 L1100.5 226.6 L1101.5 227.9 L1102.4 229.1 L1103.4 230.4 L1104.4 231.7 L1105.4 232.9 L1106.3 234.2 L1107.3 235.5 L1108.2 236.8 L1109.1 238 L1110.1 239.3 L1111 240.6 L1111.9 241.9 L1112.8 243.1 L1113.6 244.4 L1114.5 245.7 L1115.4 247 L1116.2 248.2 L1117.1 249.5 L1117.9 250.8 L1118.7 252.1 L1119.5 253.3 L1120.3 254.6 L1121.1 255.9 L1121.9 257.2 L1122.7 258.4 L1123.4 259.7 L1124.2 261 L1124.9 262.3 L1125.6 263.5 L1126.3 264.8 L1127.1 266.1 L1127.7 267.4 L1128.4 268.7 L1129.1 269.9 L1129.8 271.2 L1130.4 272.5 L1131.1 273.8 L1131.7 275 L1132.3 276.3 L1132.9 277.6 L1133.5 278.9 L1134.1 280.2 L1134.7 281.4 L1135.3 282.7 L1135.8 284 L1136.4 285.3 L1136.9 286.5 L1137.4 287.8 L1137.9 289.1 L1138.4 290.4 L1138.9 291.7 L1139.4 292.9 L1139.9 294.2 L1140.3 295.5 L1140.8 296.8 L1141.2 298 L1141.7 299.3 L1142.1 300.6 L1142.5 301.9 L1142.9 303.2 L1143.2 304.4 L1143.6 305.7 L1144 307 L1144.3 308.3 L1144.6 309.6 L1145 310.8 L1145.3 312.1 L1145.6 313.4 L1145.9 314.7 L1146.1 315.9 L1146.4 317.2 L1146.6 318.5 L1146.9 319.8 L1147.1 321.1 L1147.3 322.3 L1147.5 323.6 L1147.7 324.9 L1147.9 326.2 L1148.1 327.5 L1148.3 328.7 L1148.4 330 L1148.5 331.3 L1148.7 332.6 L1148.8 333.9 L1148.9 335.1 L1149 336.4 L1149.1 337.7 L1149.1 339 L1149.2 340.2 L1149.2 341.5 L1149.3 342.8 L1149.3 344.1 L1149.3 345.4 L1149.3 346.6 L1149.3 347.9 L1149.3 349.2 L1149.2 350.5 L1149.2 351.7 L1149.1 353 L1149 354.3 L1149 355.6 L1148.9 356.9 L1148.8 358.1 L1148.6 359.4 L1148.5 360.7 L1148.4 362 L1148.2 363.2 L1148.1 364.5 L1147.9 365.8 L1147.7 367.1 L1147.5 368.4 L1147.3 369.6 L1147.1 370.9 L1146.8 372.2 L1146.6 373.5 L1146.3 374.7 L1146.1 376 L1145.8 377.3 L1145.5 378.6 L1145.2 379.9 L1144.9 381.1 L1144.6 382.4 L1144.2 383.7 L1143.9 385 L1143.5 386.2 L1143.2 387.5 L1142.8 388.8 L1142.4 390.1 L1142 391.3 L1141.6 392.6 L1141.2 393.9 L1140.7 395.2 L1140.3 396.4 L1139.8 397.7 L1139.3 399 L1138.9 400.3 L1138.4 401.5 L1137.9 402.8 L1137.4 404.1 L1136.8 405.4 L1136.3 406.6 L1135.8 407.9 L1135.2 409.2 L1134.6 410.5 L1134.1 411.7 L1133.5 413 L1132.9 414.3 L1132.3 415.5 L1131.7 416.8 L1131 418.1 L1130.4 419.4 L1129.7 420.6 L1129.1 421.9 L1128.4 423.2 L1127.7 424.4 L1127 425.7 L1126.3 427 L1125.6 428.3 L1124.9 429.5 L1124.2 430.8 L1123.4 432.1 L1122.7 433.3 L1121.9 434.6 L1121.1 435.9 L1120.3 437.1 L1119.5 438.4 L1118.7 439.7 L1117.9 440.9 L1117.1 442.2 L1116.3 443.5 L1115.4 444.7 L1114.6 446 L1113.7 447.3"/>
</g>
<g fill="none" stroke="#666666" stroke-width="1.389">
<path d="M638.9 157.8 L651.1 151.1"/>
<path d="M640 191.1 L645.6 185"/>
<path d="M557.8 153.3 L556.7 148.9"/>
<path d="M724.4 84.4 L741.1 82.8"/>
<path d="M732.2 106.1 L747.2 96.1"/>
<path d="M788.9 74.4 L800 68.9"/>
<path d="M925 81.1 L936.7 92.2"/>
<path d="M976.7 93.9 L991.1 105"/>
<path d="M1006.1 82.2 L1013.9 95.6"/>
<path d="M1047.8 120.6 L1031.1 101.7"/>
<path d="M916.7 105.6 L925.6 117.8"/>
<path d="M900 90 L914.4 98.9"/>
<path d="M947.8 62.2 L947.8 70"/>
<path d="M1008.3 102.2 L1012.8 106.1"/>
<path d="M1108.9 118.9 L1124.4 121.7"/>
<path d="M1136.7 110 L1126.7 110"/>
<path d="M1127.8 121.1 L1130 117.2"/>
<path d="M1120 112.2 L1118.3 116.7"/>
<path d="M911 116.7 L917.8 124.4"/>
<path d="M1033.9 130 L1040.6 132.2"/>
<path d="M909.4 141.1 L913.9 145.6"/>
<path d="M744.4 130 L753.3 125"/>
<path d="M821 134 L830 122"/>
<path d="M760 95 L768 90"/>
<path d="M705 120 L712 114"/>
<path d="M672 140 L680 133"/>
<path d="M880 60 L888 66"/>
<path d="M1068 86 L1060 80"/>
<path d="M1158 128 L1150 125"/>
<path d="M845 100 L850 108"/>
<path d="M600 170 L607 164"/>
<path d="M690 100 L700 97"/>
<path d="M1010 120 L1018 126"/>
<path d="M973.3 126.7 L966.7 120"/>
<path d="M976.7 110.6 L971 103"/>
</g>
<g fill="none" stroke="#ff1c00" stroke-width="1.389" stroke-dasharray="1.389 2.292">
<path d="M651.1 113.1 L654 112.4 L656.8 111.8 L659.7 111.2 L662.5 110.6 L665.2 110 L667.9 109.4 L670.6 108.8 L673.2 108.3 L675.8 107.8 L678.4 107.2 L680.9 106.7 L683.3 106.3 L685.8 105.8 L688.1 105.3 L690.5 104.9 L692.7 104.5 L695 104.1 L697.2 103.7 L699.3 103.4 L701.4 103.1 L703.4 102.7 L705.4 102.4 L707.4 102.2 L709.3 101.9 L711.1 101.7 L712.9 101.5 L714.7 101.3 L716.4 101.1 L718 101 L719.6 100.8 L721.2 100.7 L722.7 100.6 L724.1 100.6 L725.5 100.5 L726.8 100.5 L728.1 100.5 L729.4 100.5 L730.6 100.6 L731.7 100.6 L732.8 100.7 L733.9 100.8 L734.9 101 L735.8 101.1 L736.7 101.3 L737.6 101.5 L738.4 101.7 L739.2 102 L740 102.2 L740.7 102.5 L741.3 102.8 L741.9 103.1 L742.5 103.5 L743.1 103.8 L743.6 104.2 L744 104.6 L744.5 105 L744.9 105.4 L745.2 105.9 L745.6 106.3 L745.9 106.8 L746.1 107.3 L746.4 107.9 L746.6 108.4 L746.8 108.9 L746.9 109.5 L747.1 110.1 L747.2 110.7 L747.3 111.3 L747.3 111.9 L747.4 112.6 L747.4 113.2 L747.4 113.9 L747.4 114.6 L747.3 115.3 L747.3 116 L747.2 116.7 L747.1 117.4 L747 118.2 L746.9 118.9 L746.8 119.7 L746.6 120.5 L746.4 121.2 L746.3 122 L746.1 122.9 L745.9 123.7 L745.7 124.5 L745.4 125.3 L745.2 126.2 L745 127 L744.7 127.9 L744.4 128.8 L744.2 129.6 L743.9 130.5 L743.6 131.4 L743.3 132.3 L743 133.2 L742.7 134.1 L742.4 135.1 L742.1 136 L741.8 136.9 L741.5 137.9 L741.1 138.8 L740.8 139.8 L740.5 140.7 L740.2 141.7 L739.8 142.7 L739.5 143.7 L739.1 144.6 L738.8 145.6 L738.5 146.6 L738.1 147.6 L737.8 148.6 L737.4 149.6 L737.1 150.7 L736.7 151.7 L736.4 152.7 L736 153.7 L735.7 154.8 L735.3 155.8 L735 156.8 L734.6 157.9 L734.3 158.9 L734 160 L733.6 161 L733.3 162.1 L732.9 163.1 L732.6 164.2 L732.3 165.3 L731.9 166.3 L731.6 167.4 L731.3 168.5 L731 169.6 L730.7 170.6 L730.3 171.7 L730 172.8 L729.7 173.9 L729.4 175 L729.1 176.1 L728.8 177.2 L728.5 178.3 L728.2 179.4 L727.9 180.5 L727.7 181.6 L727.4 182.7 L727.1 183.8 L726.8 185 L726.6 186.1 L726.3 187.2 L726 188.3 L725.8 189.4 L725.6 190.6 L725.3 191.7 L725.1 192.8 L724.8 193.9 L724.6 195.1 L724.4 196.2 L724.2 197.3 L724 198.5 L723.8 199.6 L723.6 200.8 L723.4 201.9 L723.2 203 L723 204.2 L722.8 205.3 L722.7 206.5 L722.5 207.6 L722.3 208.8 L722.2 209.9 L722 211.1 L721.9 212.2 L721.8 213.4 L721.6 214.5 L721.5 215.7 L721.4 216.9 L721.3 218 L721.2 219.2 L721.1 220.3 L721 221.5 L720.9 222.7 L720.8 223.8 L720.8 225 L720.7 226.2 L720.6 227.3 L720.6 228.5 L720.5 229.7 L720.5 230.8 L720.5 232 L720.5 233.2 L720.4 234.4 L720.4 235.5 L720.4 236.7 L720.4 237.9 L720.4 239.1 L720.4 240.2 L720.5 241.4 L720.5 242.6 L720.5 243.8 L720.6 244.9 L720.6 246.1 L720.7 247.3 L720.8 248.5 L720.8 249.7 L720.9 250.9 L721 252 L721.1 253.2 L721.2 254.4 L721.3 255.6 L721.4 256.8 L721.5 258 L721.7 259.2 L721.8 260.3 L721.9 261.5 L722.1 262.7 L722.3 263.9 L722.4 265.1 L722.6 266.3 L722.8 267.5 L723 268.7 L723.1 269.9 L723.4 271"/>
<path d="M684.4 113.3 L686.2 113.1 L687.9 112.9 L689.5 112.7 L691.2 112.6 L692.8 112.5 L694.3 112.4 L695.8 112.3 L697.3 112.2 L698.7 112.1 L700.1 112.1 L701.4 112.1 L702.7 112.1 L704 112.1 L705.2 112.1 L706.4 112.2 L707.5 112.3 L708.6 112.3 L709.7 112.5 L710.7 112.6 L711.7 112.7 L712.7 112.9 L713.6 113.1 L714.4 113.3 L715.3 113.5 L716.1 113.7 L716.9 114 L717.6 114.2 L718.3 114.5 L719 114.8 L719.6 115.2 L720.2 115.5 L720.8 115.8 L721.3 116.2 L721.9 116.6 L722.3 117 L722.8 117.4 L723.2 117.8 L723.7 118.3 L724 118.8 L724.4 119.2 L724.7 119.7 L725 120.2 L725.3 120.7 L725.6 121.3 L725.8 121.8 L726 122.4 L726.2 123 L726.4 123.5 L726.6 124.1 L726.7 124.8 L726.8 125.4 L726.9 126 L727 126.7 L727.1 127.3 L727.2 128 L727.2 128.7 L727.2 129.4 L727.3 130.1 L727.3 130.8 L727.2 131.5 L727.2 132.2 L727.2 133 L727.1 133.7 L727.1 134.5 L727 135.3 L726.9 136 L726.9 136.8 L726.8 137.6 L726.7 138.4 L726.5 139.2 L726.4 140.1 L726.3 140.9 L726.2 141.7 L726 142.6 L725.9 143.4 L725.7 144.3 L725.6 145.1 L725.4 146 L725.2 146.9 L725.1 147.8 L724.9 148.7 L724.7 149.6 L724.5 150.5 L724.4 151.4 L724.2 152.3 L724 153.2 L723.8 154.1 L723.6 155.1 L723.4 156 L723.2 156.9 L723 157.9 L722.8 158.8 L722.6 159.8 L722.4 160.8 L722.2 161.7 L722 162.7 L721.8 163.7 L721.6 164.7 L721.4 165.6 L721.2 166.6 L721 167.6 L720.8 168.6 L720.6 169.6 L720.4 170.6 L720.2 171.6 L720 172.6 L719.8 173.7 L719.6 174.7 L719.4 175.7 L719.2 176.7 L719.1 177.8 L718.9 178.8 L718.7 179.8 L718.5 180.9 L718.4 181.9 L718.2 182.9 L718 184 L717.9 185 L717.7 186.1 L717.6 187.1 L717.4 188.2 L717.3 189.3 L717.1 190.3 L717 191.4 L716.8 192.5 L716.7 193.5 L716.6 194.6 L716.5 195.7 L716.3 196.8 L716.2 197.8 L716.1 198.9 L716 200 L715.9 201.1 L715.8 202.2 L715.7 203.3 L715.6 204.3 L715.6 205.4 L715.5 206.5 L715.4 207.6 L715.4 208.7 L715.3 209.8 L715.2 210.9 L715.2 212 L715.2 213.1 L715.1 214.3 L715.1 215.4 L715.1 216.5 L715 217.6 L715 218.7 L715 219.8 L715 220.9 L715 222 L715 223.2 L715 224.3 L715.1 225.4 L715.1 226.5 L715.1 227.6 L715.2 228.8 L715.2 229.9 L715.3 231 L715.3 232.2 L715.4 233.3 L715.4 234.4 L715.5 235.5 L715.6 236.7 L715.7 237.8 L715.8 238.9 L715.9 240.1 L716 241.2 L716.1 242.4 L716.2 243.5 L716.4 244.6 L716.5 245.8 L716.6 246.9 L716.8 248.1 L716.9 249.2 L717.1 250.3 L717.3 251.5 L717.4 252.6 L717.6 253.8 L717.8 254.9 L718 256.1 L718.2 257.2 L718.4 258.4 L718.6 259.5 L718.9 260.7 L719.1 261.8 L719.3 263 L719.6 264.1 L719.8 265.3 L720.1 266.4 L720.3 267.6 L720.6 268.7 L720.9 269.9 L721.2 271.1"/>
<path d="M622.2 145.3 L623.7 145.2 L625.3 145.1 L626.8 145 L628.2 144.9 L629.7 144.8 L631.1 144.7 L632.5 144.7 L633.9 144.7 L635.2 144.6 L636.6 144.6 L637.9 144.6 L639.1 144.6 L640.4 144.7 L641.6 144.7 L642.8 144.8 L644 144.8 L645.1 144.9 L646.3 145 L647.4 145.1 L648.5 145.2 L649.5 145.3 L650.6 145.5 L651.6 145.6 L652.6 145.8 L653.6 146 L654.5 146.1 L655.4 146.3 L656.4 146.5 L657.2 146.8 L658.1 147 L659 147.3 L659.8 147.5 L660.6 147.8 L661.4 148.1 L662.2 148.4 L662.9 148.7 L663.7 149 L664.4 149.3 L665.1 149.6 L665.7 150 L666.4 150.3 L667.1 150.7 L667.7 151.1 L668.3 151.5 L668.9 151.9 L669.5 152.3 L670.1 152.7 L670.6 153.2 L671.1 153.6 L671.7 154 L672.2 154.5 L672.7 155 L673.2 155.5 L673.6 156 L674.1 156.5 L674.6 157 L675 157.5 L675.4 158 L675.8 158.6 L676.2 159.1 L676.6 159.7 L677 160.2 L677.4 160.8 L677.7 161.4 L678.1 162 L678.4 162.6 L678.8 163.2 L679.1 163.8 L679.4 164.4 L679.7 165 L680 165.7 L680.3 166.3 L680.6 167 L680.9 167.6 L681.2 168.3 L681.5 169 L681.7 169.6 L682 170.3 L682.2 171 L682.5 171.7 L682.7 172.4 L683 173.1 L683.2 173.9 L683.5 174.6 L683.7 175.3 L683.9 176.1 L684.1 176.8 L684.3 177.5 L684.6 178.3 L684.8 179.1 L685 179.8 L685.2 180.6 L685.4 181.4 L685.6 182.2 L685.8 183 L686 183.8 L686.2 184.6 L686.4 185.4 L686.6 186.2 L686.8 187 L687 187.8 L687.2 188.6 L687.4 189.5 L687.6 190.3 L687.8 191.1 L688 192 L688.2 192.8 L688.3 193.7 L688.5 194.5 L688.7 195.4 L688.9 196.2 L689.1 197.1 L689.3 198 L689.5 198.8 L689.7 199.7 L689.9 200.6 L690.1 201.5 L690.4 202.4 L690.6 203.3 L690.8 204.2 L691 205.1 L691.2 206 L691.4 206.9 L691.6 207.8 L691.9 208.7 L692.1 209.6 L692.3 210.5 L692.5 211.5 L692.8 212.4 L693 213.3 L693.3 214.2 L693.5 215.2 L693.7 216.1 L694 217.1 L694.2 218 L694.5 218.9 L694.8 219.9 L695 220.8 L695.3 221.8 L695.6 222.7 L695.8 223.7 L696.1 224.7 L696.4 225.6 L696.7 226.6 L697 227.6 L697.3 228.5 L697.6 229.5 L697.9 230.5 L698.2 231.4 L698.5 232.4 L698.8 233.4 L699.1 234.4 L699.5 235.4 L699.8 236.3 L700.1 237.3 L700.5 238.3 L700.8 239.3 L701.2 240.3 L701.5 241.3 L701.9 242.3 L702.2 243.3 L702.6 244.3 L703 245.3 L703.4 246.3 L703.8 247.3 L704.1 248.3 L704.5 249.3 L704.9 250.3 L705.3 251.3 L705.8 252.3 L706.2 253.4 L706.6 254.4 L707 255.4 L707.4 256.4 L707.9 257.4 L708.3 258.4 L708.8 259.5 L709.2 260.5 L709.7 261.5 L710.1 262.5 L710.6 263.5 L711.1 264.6 L711.6 265.6 L712.1 266.6 L712.5 267.7 L713 268.7 L713.5 269.7 L714.1 270.8"/>
<path d="M542.8 157.6 L545.3 157 L547.8 156.4 L550.2 155.9 L552.7 155.3 L555.1 154.8 L557.5 154.2 L559.9 153.7 L562.3 153.2 L564.7 152.7 L567 152.2 L569.3 151.7 L571.6 151.2 L573.9 150.7 L576.1 150.3 L578.4 149.8 L580.6 149.4 L582.8 149 L584.9 148.5 L587.1 148.1 L589.2 147.7 L591.3 147.3 L593.4 147 L595.4 146.6 L597.5 146.2 L599.5 145.9 L601.4 145.6 L603.4 145.3 L605.3 144.9 L607.2 144.7 L609.1 144.4 L611 144.1 L612.8 143.8 L614.6 143.6 L616.4 143.4 L618.2 143.1 L619.9 142.9 L621.6 142.7 L623.3 142.5 L624.9 142.4 L626.6 142.2 L628.2 142.1 L629.7 141.9 L631.3 141.8 L632.8 141.7 L634.3 141.6 L635.8 141.5 L637.2 141.4 L638.6 141.4 L640 141.3 L641.4 141.3 L642.7 141.3 L644 141.3 L645.3 141.3 L646.6 141.3 L647.8 141.3 L649 141.4 L650.2 141.4 L651.4 141.5 L652.5 141.6 L653.6 141.7 L654.7 141.8 L655.8 141.9 L656.8 142 L657.9 142.2 L658.9 142.3 L659.8 142.5 L660.8 142.7 L661.7 142.9 L662.6 143.1 L663.5 143.3 L664.4 143.5 L665.2 143.8 L666 144 L666.8 144.3 L667.6 144.6 L668.4 144.9 L669.1 145.2 L669.8 145.5 L670.5 145.8 L671.2 146.2 L671.9 146.5 L672.5 146.9 L673.1 147.3 L673.8 147.6 L674.4 148 L674.9 148.4 L675.5 148.9 L676 149.3 L676.6 149.7 L677.1 150.2 L677.6 150.6 L678.1 151.1 L678.6 151.6 L679 152.1 L679.5 152.6 L679.9 153.1 L680.3 153.6 L680.7 154.1 L681.1 154.7 L681.5 155.2 L681.9 155.8 L682.3 156.3 L682.6 156.9 L683 157.5 L683.3 158.1 L683.6 158.7 L683.9 159.3 L684.2 159.9 L684.5 160.5 L684.8 161.1 L685.1 161.8 L685.4 162.4 L685.6 163.1 L685.9 163.7 L686.2 164.4 L686.4 165.1 L686.6 165.8 L686.9 166.4 L687.1 167.1 L687.3 167.9 L687.5 168.6 L687.7 169.3 L688 170 L688.2 170.7 L688.4 171.5 L688.5 172.2 L688.7 173 L688.9 173.7 L689.1 174.5 L689.3 175.3 L689.5 176 L689.6 176.8 L689.8 177.6 L690 178.4 L690.1 179.2 L690.3 180 L690.5 180.8 L690.6 181.6 L690.8 182.4 L691 183.2 L691.1 184.1 L691.3 184.9 L691.4 185.7 L691.6 186.6 L691.8 187.4 L691.9 188.3 L692.1 189.1 L692.2 190 L692.4 190.8 L692.6 191.7 L692.7 192.6 L692.9 193.4 L693 194.3 L693.2 195.2 L693.4 196.1 L693.5 197 L693.7 197.9 L693.9 198.8 L694 199.7 L694.2 200.6 L694.4 201.5 L694.6 202.4 L694.7 203.3 L694.9 204.2 L695.1 205.2 L695.3 206.1 L695.5 207 L695.7 207.9 L695.9 208.9 L696.1 209.8 L696.3 210.7 L696.5 211.7 L696.7 212.6 L696.9 213.6 L697.1 214.5 L697.3 215.5 L697.5 216.4 L697.8 217.4 L698 218.4 L698.2 219.3 L698.5 220.3 L698.7 221.3 L699 222.2 L699.2 223.2 L699.5 224.2 L699.7 225.2 L700 226.1 L700.2 227.1 L700.5 228.1 L700.8 229.1 L701.1 230.1 L701.3 231.1 L701.6 232.1 L701.9 233.1 L702.2 234.1 L702.5 235 L702.8 236 L703.1 237 L703.5 238.1 L703.8 239.1 L704.1 240.1 L704.4 241.1 L704.8 242.1 L705.1 243.1 L705.4 244.1 L705.8 245.1 L706.2 246.1 L706.5 247.2 L706.9 248.2 L707.3 249.2 L707.6 250.2 L708 251.2 L708.4 252.3 L708.8 253.3 L709.2 254.3 L709.6 255.3 L710 256.4 L710.4 257.4 L710.8 258.4 L711.3 259.5 L711.7 260.5 L712.1 261.5 L712.6 262.6 L713 263.6 L713.5 264.6 L713.9 265.7 L714.4 266.7 L714.9 267.8 L715.3 268.8 L715.8 269.9 L716.3 270.9"/>
<path d="M549.4 159.4 L551.7 158.9 L554 158.4 L556.2 157.9 L558.5 157.5 L560.7 157 L562.9 156.6 L565.1 156.1 L567.2 155.7 L569.4 155.3 L571.5 154.9 L573.6 154.5 L575.7 154.1 L577.7 153.7 L579.8 153.4 L581.8 153 L583.8 152.7 L585.8 152.3 L587.7 152 L589.6 151.7 L591.5 151.4 L593.4 151.1 L595.3 150.8 L597.1 150.5 L599 150.3 L600.7 150 L602.5 149.8 L604.3 149.6 L606 149.4 L607.7 149.2 L609.4 149 L611 148.8 L612.7 148.6 L614.3 148.5 L615.8 148.3 L617.4 148.2 L618.9 148.1 L620.4 148 L621.9 147.9 L623.4 147.8 L624.8 147.7 L626.2 147.7 L627.6 147.6 L629 147.6 L630.4 147.6 L631.7 147.6 L633 147.6 L634.2 147.6 L635.5 147.6 L636.7 147.6 L637.9 147.7 L639.1 147.7 L640.3 147.8 L641.4 147.9 L642.5 148 L643.6 148.1 L644.7 148.2 L645.8 148.4 L646.8 148.5 L647.8 148.7 L648.8 148.8 L649.8 149 L650.7 149.2 L651.6 149.4 L652.5 149.6 L653.4 149.8 L654.3 150.1 L655.2 150.3 L656 150.6 L656.8 150.9 L657.6 151.1 L658.4 151.4 L659.1 151.7 L659.9 152 L660.6 152.4 L661.3 152.7 L662 153.1 L662.7 153.4 L663.3 153.8 L664 154.2 L664.6 154.6 L665.2 155 L665.8 155.4 L666.4 155.8 L667 156.2 L667.5 156.6 L668.1 157.1 L668.6 157.6 L669.1 158 L669.6 158.5 L670.1 159 L670.6 159.5 L671.1 160 L671.5 160.5 L672 161 L672.4 161.5 L672.9 162.1 L673.3 162.6 L673.7 163.2 L674.1 163.7 L674.5 164.3 L674.9 164.9 L675.2 165.5 L675.6 166.1 L676 166.7 L676.3 167.3 L676.7 167.9 L677 168.5 L677.3 169.2 L677.6 169.8 L678 170.5 L678.3 171.1 L678.6 171.8 L678.9 172.5 L679.2 173.1 L679.5 173.8 L679.7 174.5 L680 175.2 L680.3 175.9 L680.6 176.6 L680.8 177.3 L681.1 178 L681.3 178.8 L681.6 179.5 L681.9 180.2 L682.1 181 L682.4 181.7 L682.6 182.5 L682.8 183.2 L683.1 184 L683.3 184.8 L683.6 185.6 L683.8 186.3 L684 187.1 L684.3 187.9 L684.5 188.7 L684.7 189.5 L685 190.3 L685.2 191.1 L685.4 191.9 L685.7 192.8 L685.9 193.6 L686.1 194.4 L686.3 195.2 L686.6 196.1 L686.8 196.9 L687 197.8 L687.3 198.6 L687.5 199.5 L687.7 200.3 L688 201.2 L688.2 202.1 L688.5 202.9 L688.7 203.8 L688.9 204.7 L689.2 205.5 L689.4 206.4 L689.7 207.3 L689.9 208.2 L690.2 209.1 L690.4 210 L690.7 210.9 L691 211.8 L691.2 212.7 L691.5 213.6 L691.8 214.5 L692 215.4 L692.3 216.3 L692.6 217.3 L692.9 218.2 L693.1 219.1 L693.4 220 L693.7 221 L694 221.9 L694.3 222.8 L694.6 223.8 L694.9 224.7 L695.2 225.7 L695.5 226.6 L695.9 227.6 L696.2 228.5 L696.5 229.5 L696.8 230.4 L697.2 231.4 L697.5 232.3 L697.8 233.3 L698.2 234.3 L698.5 235.2 L698.9 236.2 L699.3 237.2 L699.6 238.1 L700 239.1 L700.4 240.1 L700.7 241.1 L701.1 242 L701.5 243 L701.9 244 L702.3 245 L702.7 246 L703.1 247 L703.5 247.9 L703.9 248.9 L704.3 249.9 L704.8 250.9 L705.2 251.9 L705.6 252.9 L706.1 253.9 L706.5 254.9 L707 255.9 L707.4 256.9 L707.9 257.9 L708.4 258.9 L708.8 259.9 L709.3 260.9 L709.8 261.9 L710.3 262.9 L710.8 263.9 L711.3 265 L711.8 266 L712.3 267 L712.8 268 L713.3 269 L713.8 270 L714.4 271"/>
<path d="M626.7 186.9 L627.6 187.2 L628.4 187.5 L629.2 187.9 L630.1 188.2 L630.9 188.6 L631.7 188.9 L632.5 189.3 L633.3 189.6 L634.1 190 L634.9 190.4 L635.6 190.8 L636.4 191.2 L637.2 191.6 L637.9 192 L638.7 192.4 L639.4 192.8 L640.1 193.2 L640.9 193.7 L641.6 194.1 L642.3 194.6 L643 195 L643.7 195.5 L644.4 195.9 L645.1 196.4 L645.8 196.9 L646.5 197.4 L647.2 197.9 L647.9 198.4 L648.5 198.9 L649.2 199.4 L649.9 199.9 L650.5 200.4 L651.2 200.9 L651.9 201.5 L652.5 202 L653.2 202.5 L653.8 203.1 L654.4 203.6 L655.1 204.2 L655.7 204.8 L656.3 205.3 L657 205.9 L657.6 206.5 L658.2 207.1 L658.8 207.6 L659.5 208.2 L660.1 208.8 L660.7 209.4 L661.3 210.1 L661.9 210.7 L662.6 211.3 L663.2 211.9 L663.8 212.5 L664.4 213.2 L665 213.8 L665.6 214.4 L666.2 215.1 L666.8 215.7 L667.4 216.4 L668 217 L668.6 217.7 L669.2 218.4 L669.8 219 L670.4 219.7 L671.1 220.4 L671.7 221.1 L672.3 221.7 L672.9 222.4 L673.5 223.1 L674.1 223.8 L674.7 224.5 L675.3 225.2 L675.9 225.9 L676.5 226.6 L677.1 227.4 L677.7 228.1 L678.4 228.8 L679 229.5 L679.6 230.2 L680.2 231 L680.8 231.7 L681.4 232.4 L682.1 233.2 L682.7 233.9 L683.3 234.7 L683.9 235.4 L684.6 236.2 L685.2 236.9 L685.8 237.7 L686.5 238.5 L687.1 239.2 L687.7 240 L688.4 240.7 L689 241.5 L689.7 242.3 L690.3 243.1 L691 243.8 L691.6 244.6 L692.3 245.4 L692.9 246.2 L693.6 247 L694.3 247.8 L694.9 248.6 L695.6 249.4 L696.3 250.2 L696.9 251 L697.6 251.8 L698.3 252.6 L699 253.4 L699.7 254.2 L700.4 255 L701 255.8 L701.7 256.6 L702.4 257.4 L703.1 258.3 L703.8 259.1 L704.6 259.9 L705.3 260.7 L706 261.6 L706.7 262.4 L707.4 263.2 L708.1 264 L708.9 264.9 L709.6 265.7 L710.3 266.5 L711.1 267.4 L711.8 268.2 L712.6 269.1 L713.3 269.9 L714.1 270.8"/>
<path d="M677.8 164.4 L678.1 165 L678.5 165.6 L678.8 166.3 L679.1 166.9 L679.4 167.5 L679.7 168.2 L680 168.8 L680.3 169.5 L680.6 170.2 L680.8 170.8 L681.1 171.5 L681.4 172.2 L681.6 172.9 L681.9 173.6 L682.1 174.3 L682.4 175 L682.6 175.7 L682.8 176.5 L683.1 177.2 L683.3 177.9 L683.5 178.7 L683.8 179.4 L684 180.2 L684.2 180.9 L684.4 181.7 L684.6 182.5 L684.9 183.2 L685.1 184 L685.3 184.8 L685.5 185.6 L685.7 186.4 L685.9 187.2 L686.1 188 L686.3 188.8 L686.5 189.6 L686.7 190.5 L686.9 191.3 L687.2 192.1 L687.4 192.9 L687.6 193.8 L687.8 194.6 L688 195.5 L688.2 196.3 L688.4 197.2 L688.6 198 L688.8 198.9 L689 199.8 L689.2 200.6 L689.5 201.5 L689.7 202.4 L689.9 203.3 L690.1 204.1 L690.3 205 L690.6 205.9 L690.8 206.8 L691 207.7 L691.2 208.6 L691.5 209.5 L691.7 210.4 L692 211.3 L692.2 212.2 L692.4 213.1 L692.7 214.1 L692.9 215 L693.2 215.9 L693.4 216.8 L693.7 217.8 L694 218.7 L694.2 219.6 L694.5 220.6 L694.8 221.5 L695.1 222.5 L695.3 223.4 L695.6 224.3 L695.9 225.3 L696.2 226.2 L696.5 227.2 L696.8 228.2 L697.1 229.1 L697.4 230.1 L697.7 231 L698.1 232 L698.4 233 L698.7 233.9 L699 234.9 L699.4 235.9 L699.7 236.9 L700.1 237.8 L700.4 238.8 L700.8 239.8 L701.1 240.8 L701.5 241.8 L701.8 242.7 L702.2 243.7 L702.6 244.7 L703 245.7 L703.4 246.7 L703.8 247.7 L704.2 248.7 L704.6 249.7 L705 250.7 L705.4 251.7 L705.8 252.7 L706.2 253.7 L706.6 254.7 L707.1 255.7 L707.5 256.7 L708 257.7 L708.4 258.7 L708.9 259.7 L709.3 260.7 L709.8 261.7 L710.3 262.8 L710.7 263.8 L711.2 264.8 L711.7 265.8 L712.2 266.8 L712.7 267.8 L713.2 268.9 L713.7 269.9 L714.2 270.9"/>
<path d="M695.6 133.3 L696.1 133.7 L696.6 134.2 L697 134.6 L697.4 135.1 L697.9 135.5 L698.3 136 L698.6 136.5 L699 137 L699.3 137.6 L699.7 138.1 L700 138.6 L700.3 139.2 L700.5 139.8 L700.8 140.3 L701.1 140.9 L701.3 141.5 L701.5 142.1 L701.7 142.7 L701.9 143.4 L702.1 144 L702.3 144.6 L702.4 145.3 L702.6 146 L702.7 146.6 L702.9 147.3 L703 148 L703.1 148.7 L703.2 149.4 L703.3 150.1 L703.4 150.8 L703.4 151.6 L703.5 152.3 L703.6 153.1 L703.6 153.8 L703.7 154.6 L703.7 155.3 L703.8 156.1 L703.8 156.9 L703.8 157.7 L703.8 158.5 L703.9 159.3 L703.9 160.1 L703.9 160.9 L703.9 161.7 L703.9 162.6 L703.9 163.4 L703.9 164.2 L703.9 165.1 L703.9 165.9 L703.8 166.8 L703.8 167.7 L703.8 168.5 L703.8 169.4 L703.8 170.3 L703.8 171.2 L703.7 172 L703.7 172.9 L703.7 173.8 L703.7 174.7 L703.6 175.6 L703.6 176.6 L703.6 177.5 L703.6 178.4 L703.5 179.3 L703.5 180.2 L703.5 181.2 L703.5 182.1 L703.5 183.1 L703.4 184 L703.4 185 L703.4 185.9 L703.4 186.9 L703.4 187.8 L703.4 188.8 L703.4 189.8 L703.4 190.7 L703.4 191.7 L703.4 192.7 L703.4 193.7 L703.4 194.6 L703.4 195.6 L703.4 196.6 L703.4 197.6 L703.4 198.6 L703.5 199.6 L703.5 200.6 L703.5 201.6 L703.5 202.6 L703.6 203.6 L703.6 204.6 L703.7 205.6 L703.7 206.7 L703.8 207.7 L703.8 208.7 L703.9 209.7 L704 210.7 L704 211.8 L704.1 212.8 L704.2 213.8 L704.3 214.9 L704.3 215.9 L704.4 216.9 L704.5 218 L704.6 219 L704.7 220.1 L704.9 221.1 L705 222.2 L705.1 223.2 L705.2 224.3 L705.4 225.3 L705.5 226.4 L705.6 227.4 L705.8 228.5 L705.9 229.5 L706.1 230.6 L706.3 231.7 L706.4 232.7 L706.6 233.8 L706.8 234.9 L707 235.9 L707.2 237 L707.4 238.1 L707.6 239.1 L707.8 240.2 L708 241.3 L708.2 242.4 L708.5 243.5 L708.7 244.5 L708.9 245.6 L709.2 246.7 L709.4 247.8 L709.7 248.9 L710 250 L710.2 251 L710.5 252.1 L710.8 253.2 L711.1 254.3 L711.4 255.4 L711.7 256.5 L712 257.6 L712.3 258.7 L712.6 259.8 L712.9 260.9 L713.3 262 L713.6 263.1 L714 264.1 L714.3 265.2 L714.7 266.3 L715 267.4 L715.4 268.5 L715.8 269.6 L716.1 270.8"/>
<path d="M796.7 111.1 L795.8 112.3 L795 113.5 L794.1 114.7 L793.2 115.9 L792.3 117.1 L791.5 118.3 L790.6 119.5 L789.8 120.7 L788.9 121.9 L788 123.1 L787.2 124.4 L786.3 125.6 L785.5 126.8 L784.6 128 L783.8 129.3 L783 130.5 L782.1 131.7 L781.3 132.9 L780.5 134.2 L779.6 135.4 L778.8 136.6 L778 137.9 L777.2 139.1 L776.4 140.3 L775.6 141.6 L774.8 142.8 L774 144.1 L773.2 145.3 L772.4 146.5 L771.6 147.8 L770.9 149 L770.1 150.3 L769.3 151.5 L768.6 152.8 L767.8 154 L767.1 155.3 L766.3 156.5 L765.6 157.8 L764.8 159 L764.1 160.3 L763.4 161.5 L762.7 162.8 L762 164.1 L761.3 165.3 L760.6 166.6 L759.9 167.8 L759.2 169.1 L758.5 170.3 L757.8 171.6 L757.1 172.9 L756.5 174.1 L755.8 175.4 L755.2 176.7 L754.5 177.9 L753.9 179.2 L753.3 180.4 L752.6 181.7 L752 183 L751.4 184.2 L750.8 185.5 L750.2 186.8 L749.6 188 L749 189.3 L748.4 190.6 L747.9 191.8 L747.3 193.1 L746.7 194.4 L746.2 195.6 L745.7 196.9 L745.1 198.2 L744.6 199.4 L744.1 200.7 L743.5 202 L743 203.3 L742.5 204.5 L742 205.8 L741.6 207.1 L741.1 208.3 L740.6 209.6 L740.1 210.9 L739.7 212.2 L739.2 213.4 L738.8 214.7 L738.3 216 L737.9 217.3 L737.5 218.5 L737.1 219.8 L736.7 221.1 L736.3 222.3 L735.9 223.6 L735.5 224.9 L735.1 226.2 L734.8 227.4 L734.4 228.7 L734.1 230 L733.7 231.3 L733.4 232.6 L733 233.8 L732.7 235.1 L732.4 236.4 L732.1 237.7 L731.8 238.9 L731.5 240.2 L731.2 241.5 L731 242.8 L730.7 244 L730.4 245.3 L730.2 246.6 L730 247.9 L729.7 249.2 L729.5 250.4 L729.3 251.7 L729.1 253 L728.9 254.3 L728.7 255.5 L728.5 256.8 L728.3 258.1 L728.1 259.4 L728 260.7 L727.8 261.9 L727.7 263.2 L727.6 264.5 L727.4 265.8 L727.3 267.1 L727.2 268.3 L727.1 269.6 L727 270.9"/>
<path d="M728.9 126.7 L728.9 127.4 L728.9 128.1 L729 128.8 L728.9 129.5 L728.9 130.2 L728.9 131 L728.8 131.7 L728.8 132.5 L728.7 133.2 L728.6 134 L728.5 134.8 L728.4 135.6 L728.3 136.4 L728.2 137.2 L728.1 138 L727.9 138.9 L727.8 139.7 L727.6 140.5 L727.5 141.4 L727.3 142.2 L727.2 143.1 L727 144 L726.8 144.8 L726.6 145.7 L726.4 146.6 L726.2 147.5 L726.1 148.4 L725.9 149.3 L725.7 150.3 L725.4 151.2 L725.2 152.1 L725 153 L724.8 154 L724.6 154.9 L724.4 155.9 L724.2 156.8 L724 157.8 L723.7 158.8 L723.5 159.7 L723.3 160.7 L723.1 161.7 L722.9 162.7 L722.6 163.6 L722.4 164.6 L722.2 165.6 L722 166.6 L721.8 167.6 L721.6 168.6 L721.3 169.7 L721.1 170.7 L720.9 171.7 L720.7 172.7 L720.5 173.7 L720.3 174.8 L720.1 175.8 L719.9 176.8 L719.7 177.9 L719.5 178.9 L719.3 180 L719.1 181 L719 182.1 L718.8 183.1 L718.6 184.2 L718.4 185.2 L718.3 186.3 L718.1 187.4 L717.9 188.4 L717.8 189.5 L717.6 190.6 L717.5 191.7 L717.3 192.7 L717.2 193.8 L717 194.9 L716.9 196 L716.8 197.1 L716.6 198.2 L716.5 199.2 L716.4 200.3 L716.3 201.4 L716.2 202.5 L716.1 203.6 L716 204.7 L715.9 205.8 L715.8 206.9 L715.7 208 L715.7 209.2 L715.6 210.3 L715.5 211.4 L715.5 212.5 L715.4 213.6 L715.4 214.7 L715.3 215.8 L715.3 216.9 L715.3 218.1 L715.3 219.2 L715.2 220.3 L715.2 221.4 L715.2 222.6 L715.2 223.7 L715.2 224.8 L715.2 225.9 L715.3 227.1 L715.3 228.2 L715.3 229.3 L715.4 230.5 L715.4 231.6 L715.5 232.8 L715.5 233.9 L715.6 235 L715.6 236.2 L715.7 237.3 L715.8 238.5 L715.9 239.6 L716 240.7 L716.1 241.9 L716.2 243 L716.3 244.2 L716.4 245.3 L716.6 246.5 L716.7 247.6 L716.8 248.8 L717 249.9 L717.2 251.1 L717.3 252.2 L717.5 253.4 L717.7 254.5 L717.8 255.7 L718 256.8 L718.2 258 L718.4 259.2 L718.6 260.3 L718.9 261.5 L719.1 262.6 L719.3 263.8 L719.6 264.9 L719.8 266.1 L720.1 267.3 L720.3 268.4 L720.6 269.6 L720.8 270.8"/>
<path d="M725.6 166.7 L725.4 167.7 L725.1 168.8 L724.9 169.8 L724.7 170.8 L724.4 171.9 L724.2 172.9 L724 173.9 L723.8 175 L723.5 176 L723.3 177.1 L723.1 178.2 L722.9 179.2 L722.7 180.3 L722.5 181.3 L722.3 182.4 L722.1 183.5 L721.9 184.6 L721.7 185.6 L721.5 186.7 L721.3 187.8 L721.2 188.9 L721 190 L720.8 191 L720.7 192.1 L720.5 193.2 L720.4 194.3 L720.2 195.4 L720.1 196.5 L719.9 197.6 L719.8 198.7 L719.6 199.8 L719.5 200.9 L719.4 202.1 L719.3 203.2 L719.2 204.3 L719.1 205.4 L719 206.5 L718.9 207.6 L718.8 208.7 L718.7 209.9 L718.6 211 L718.5 212.1 L718.5 213.2 L718.4 214.4 L718.4 215.5 L718.3 216.6 L718.3 217.8 L718.2 218.9 L718.2 220 L718.2 221.2 L718.1 222.3 L718.1 223.4 L718.1 224.6 L718.1 225.7 L718.1 226.9 L718.1 228 L718.2 229.1 L718.2 230.3 L718.2 231.4 L718.2 232.6 L718.3 233.7 L718.3 234.9 L718.4 236 L718.5 237.2 L718.5 238.3 L718.6 239.5 L718.7 240.6 L718.8 241.8 L718.9 242.9 L719 244.1 L719.1 245.3 L719.2 246.4 L719.3 247.6 L719.4 248.7 L719.6 249.9 L719.7 251.1 L719.9 252.2 L720 253.4 L720.2 254.5 L720.4 255.7 L720.5 256.9 L720.7 258 L720.9 259.2 L721.1 260.4 L721.3 261.5 L721.5 262.7 L721.7 263.9 L722 265 L722.2 266.2 L722.4 267.4 L722.7 268.6 L722.9 269.7 L723.2 270.9"/>
<path d="M716.7 161.1 L716.6 162 L716.5 162.9 L716.3 163.8 L716.2 164.8 L716.1 165.7 L716 166.6 L715.8 167.6 L715.7 168.5 L715.6 169.5 L715.5 170.4 L715.4 171.4 L715.2 172.3 L715.1 173.3 L715 174.3 L714.9 175.3 L714.8 176.2 L714.6 177.2 L714.5 178.2 L714.4 179.2 L714.3 180.2 L714.2 181.2 L714.1 182.2 L714 183.2 L713.9 184.2 L713.8 185.2 L713.7 186.2 L713.6 187.2 L713.5 188.2 L713.4 189.2 L713.3 190.3 L713.2 191.3 L713.2 192.3 L713.1 193.3 L713 194.4 L713 195.4 L712.9 196.4 L712.8 197.5 L712.8 198.5 L712.7 199.6 L712.7 200.6 L712.6 201.7 L712.6 202.7 L712.6 203.8 L712.6 204.8 L712.5 205.9 L712.5 207 L712.5 208 L712.5 209.1 L712.5 210.2 L712.5 211.2 L712.5 212.3 L712.5 213.4 L712.5 214.4 L712.5 215.5 L712.6 216.6 L712.6 217.7 L712.6 218.7 L712.7 219.8 L712.7 220.9 L712.8 222 L712.8 223.1 L712.9 224.2 L713 225.3 L713 226.4 L713.1 227.4 L713.2 228.5 L713.3 229.6 L713.4 230.7 L713.5 231.8 L713.6 232.9 L713.7 234 L713.8 235.1 L714 236.2 L714.1 237.3 L714.2 238.4 L714.4 239.6 L714.5 240.7 L714.7 241.8 L714.9 242.9 L715 244 L715.2 245.1 L715.4 246.2 L715.6 247.3 L715.8 248.4 L716 249.6 L716.2 250.7 L716.4 251.8 L716.6 252.9 L716.8 254 L717.1 255.1 L717.3 256.3 L717.5 257.4 L717.8 258.5 L718.1 259.6 L718.3 260.8 L718.6 261.9 L718.9 263 L719.2 264.1 L719.4 265.3 L719.7 266.4 L720.1 267.5 L720.4 268.6 L720.7 269.8 L721 270.9"/>
<path d="M860 52.2 L859.3 53.1 L858.6 54.1 L857.8 55.1 L857 56.1 L856.2 57.2 L855.3 58.2 L854.4 59.3 L853.5 60.4 L852.6 61.5 L851.6 62.6 L850.7 63.8 L849.7 64.9 L848.7 66.1 L847.7 67.2 L846.7 68.4 L845.7 69.6 L844.7 70.8 L843.7 72 L842.6 73.1 L841.6 74.3 L840.6 75.6 L839.5 76.8 L838.5 78 L837.5 79.2 L836.4 80.4 L835.4 81.6 L834.3 82.9 L833.3 84.1 L832.2 85.3 L831.2 86.6 L830.1 87.8 L829.1 89.1 L828 90.3 L827 91.5 L825.9 92.8 L824.9 94 L823.9 95.3 L822.8 96.5 L821.8 97.8 L820.8 99 L819.7 100.3 L818.7 101.6 L817.7 102.8 L816.6 104.1 L815.6 105.3 L814.6 106.6 L813.6 107.9 L812.6 109.1 L811.6 110.4 L810.6 111.7 L809.6 112.9 L808.6 114.2 L807.6 115.5 L806.6 116.7 L805.6 118 L804.6 119.3 L803.6 120.5 L802.6 121.8 L801.7 123.1 L800.7 124.4 L799.7 125.6 L798.8 126.9 L797.8 128.2 L796.9 129.5 L795.9 130.7 L795 132 L794 133.3 L793.1 134.6 L792.2 135.8 L791.2 137.1 L790.3 138.4 L789.4 139.7 L788.5 141 L787.6 142.2 L786.7 143.5 L785.8 144.8 L784.9 146.1 L784 147.3 L783.2 148.6 L782.3 149.9 L781.4 151.2 L780.5 152.5 L779.7 153.8 L778.8 155 L778 156.3 L777.2 157.6 L776.3 158.9 L775.5 160.2 L774.7 161.4 L773.9 162.7 L773 164 L772.2 165.3 L771.4 166.6 L770.7 167.9 L769.9 169.2 L769.1 170.4 L768.3 171.7 L767.5 173 L766.8 174.3 L766 175.6 L765.3 176.9 L764.5 178.1 L763.8 179.4 L763.1 180.7 L762.4 182 L761.6 183.3 L760.9 184.6 L760.2 185.9 L759.5 187.1 L758.8 188.4 L758.2 189.7 L757.5 191 L756.8 192.3 L756.1 193.6 L755.5 194.9 L754.8 196.1 L754.2 197.4 L753.6 198.7 L752.9 200 L752.3 201.3 L751.7 202.6 L751.1 203.9 L750.5 205.2 L749.9 206.4 L749.3 207.7 L748.7 209 L748.2 210.3 L747.6 211.6 L747 212.9 L746.5 214.2 L746 215.5 L745.4 216.8 L744.9 218 L744.4 219.3 L743.9 220.6 L743.4 221.9 L742.9 223.2 L742.4 224.5 L741.9 225.8 L741.4 227.1 L741 228.3 L740.5 229.6 L740 230.9 L739.6 232.2 L739.2 233.5 L738.7 234.8 L738.3 236.1 L737.9 237.4 L737.5 238.7 L737.1 239.9 L736.7 241.2 L736.3 242.5 L736 243.8 L735.6 245.1 L735.2 246.4 L734.9 247.7 L734.6 249 L734.2 250.3 L733.9 251.6 L733.6 252.8 L733.3 254.1 L733 255.4 L732.7 256.7 L732.4 258 L732.1 259.3 L731.9 260.6 L731.6 261.9 L731.3 263.2 L731.1 264.5 L730.9 265.7 L730.6 267 L730.4 268.3 L730.2 269.6 L730 270.9"/>
<path d="M958.3 47.2 L956.2 46.2 L954.1 45.2 L952.2 44.2 L950.5 43.3 L948.9 42.5 M857.4 41.7 L860.7 41 L863.6 40.4 L866.3 39.9 L868.6 39.5 L870.6 39.3 L872.1 39.2 L873.4 39.2 L874.3 39.3 L874.8 39.7 L875.1 40.1 L875.2 40.6 L875 41.3 L874.7 42 L874.3 42.8 L873.7 43.7 L873 44.6 L872.3 45.6 L871.5 46.6 L870.6 47.6 L869.7 48.7 L868.8 49.8 L867.8 50.9 L866.9 52 L865.9 53.2 L864.8 54.3 L863.8 55.5 L862.7 56.7 L861.7 57.9 L860.6 59.1 L859.5 60.3 L858.4 61.5 L857.3 62.7 L856.2 63.9 L855.1 65.2 L854 66.4 L852.9 67.6 L851.8 68.9 L850.7 70.1 L849.6 71.4 L848.5 72.6 L847.4 73.9 L846.3 75.1 L845.1 76.4 L844 77.6 L842.9 78.9 L841.8 80.2 L840.7 81.4 L839.6 82.7 L838.5 84 L837.4 85.2 L836.3 86.5 L835.2 87.8 L834.1 89.1 L833 90.3 L831.9 91.6 L830.8 92.9 L829.7 94.2 L828.6 95.4 L827.5 96.7 L826.4 98 L825.3 99.3 L824.3 100.5 L823.2 101.8 L822.1 103.1 L821.1 104.4 L820 105.7 L818.9 107 L817.9 108.2 L816.8 109.5 L815.8 110.8 L814.7 112.1 L813.7 113.4 L812.6 114.7 L811.6 115.9 L810.6 117.2 L809.5 118.5 L808.5 119.8 L807.5 121.1 L806.5 122.4 L805.5 123.7 L804.5 124.9 L803.5 126.2 L802.5 127.5 L801.5 128.8 L800.5 130.1 L799.5 131.4 L798.5 132.7 L797.5 134 L796.6 135.3 L795.6 136.5 L794.6 137.8 L793.7 139.1 L792.7 140.4 L791.8 141.7 L790.9 143 L789.9 144.3 L789 145.6 L788.1 146.9 L787.1 148.2 L786.2 149.4 L785.3 150.7 L784.4 152 L783.5 153.3 L782.6 154.6 L781.8 155.9 L780.9 157.2 L780 158.5 L779.1 159.8 L778.3 161.1 L777.4 162.4 L776.6 163.6 L775.7 164.9 L774.9 166.2 L774 167.5 L773.2 168.8 L772.4 170.1 L771.6 171.4 L770.8 172.7 L770 174 L769.2 175.3 L768.4 176.6 L767.6 177.9 L766.8 179.2 L766.1 180.5 L765.3 181.7 L764.5 183 L763.8 184.3 L763 185.6 L762.3 186.9 L761.6 188.2 L760.9 189.5 L760.1 190.8 L759.4 192.1 L758.7 193.4 L758 194.7 L757.3 196 L756.7 197.3 L756 198.6 L755.3 199.9 L754.7 201.1 L754 202.4 L753.4 203.7 L752.7 205 L752.1 206.3 L751.5 207.6 L750.8 208.9 L750.2 210.2 L749.6 211.5 L749 212.8 L748.4 214.1 L747.8 215.4 L747.3 216.7 L746.7 218 L746.1 219.3 L745.6 220.6 L745 221.9 L744.5 223.1 L744 224.4 L743.5 225.7 L742.9 227 L742.4 228.3 L741.9 229.6 L741.4 230.9 L741 232.2 L740.5 233.5 L740 234.8 L739.6 236.1 L739.1 237.4 L738.7 238.7 L738.2 240 L737.8 241.3 L737.4 242.6 L737 243.9 L736.6 245.2 L736.2 246.4 L735.8 247.7 L735.4 249 L735 250.3 L734.7 251.6 L734.3 252.9 L733.9 254.2 L733.6 255.5 L733.3 256.8 L732.9 258.1 L732.6 259.4 L732.3 260.7 L732 262 L731.7 263.3 L731.4 264.6 L731.2 265.9 L730.9 267.2 L730.6 268.5 L730.4 269.8 L730.1 271"/>
<path d="M836.3 48.7 L839.5 48 L842.5 47.4 L845.3 46.8 L847.8 46.4 L850.2 46 L852.3 45.7 L854.2 45.4 L855.8 45.3 L857.2 45.3 L858.4 45.3 L859.3 45.5 L860 45.7 L860.6 46 L860.9 46.4 L861.1 46.9 L861.1 47.5 L861 48.1 L860.7 48.8 L860.4 49.5 L860 50.3 L859.5 51.2 L858.9 52 L858.2 52.9 L857.6 53.9 L856.8 54.9 L856 55.9 L855.2 56.9 L854.4 57.9 L853.5 59 L852.6 60.1 L851.7 61.2 L850.7 62.3 L849.8 63.4 L848.8 64.5 L847.8 65.7 L846.8 66.8 L845.8 68 L844.8 69.1 L843.7 70.3 L842.7 71.5 L841.7 72.7 L840.6 73.9 L839.6 75.1 L838.5 76.3 L837.5 77.5 L836.4 78.7 L835.4 79.9 L834.3 81.2 L833.2 82.4 L832.2 83.6 L831.1 84.8 L830.1 86.1 L829 87.3 L827.9 88.5 L826.9 89.8 L825.8 91 L824.7 92.3 L823.7 93.5 L822.6 94.8 L821.6 96 L820.5 97.3 L819.5 98.5 L818.4 99.8 L817.4 101.1 L816.3 102.3 L815.3 103.6 L814.2 104.8 L813.2 106.1 L812.1 107.4 L811.1 108.6 L810.1 109.9 L809.1 111.2 L808 112.4 L807 113.7 L806 115 L805 116.2 L804 117.5 L803 118.8 L802 120.1 L801 121.3 L800 122.6 L799 123.9 L798 125.2 L797 126.4 L796.1 127.7 L795.1 129 L794.1 130.3 L793.2 131.5 L792.2 132.8 L791.2 134.1 L790.3 135.4 L789.4 136.7 L788.4 137.9 L787.5 139.2 L786.6 140.5 L785.6 141.8 L784.7 143.1 L783.8 144.3 L782.9 145.6 L782 146.9 L781.1 148.2 L780.2 149.5 L779.3 150.8 L778.4 152 L777.6 153.3 L776.7 154.6 L775.8 155.9 L775 157.2 L774.1 158.5 L773.3 159.8 L772.4 161 L771.6 162.3 L770.8 163.6 L770 164.9 L769.1 166.2 L768.3 167.5 L767.5 168.8 L766.7 170 L765.9 171.3 L765.2 172.6 L764.4 173.9 L763.6 175.2 L762.9 176.5 L762.1 177.8 L761.3 179.1 L760.6 180.3 L759.9 181.6 L759.1 182.9 L758.4 184.2 L757.7 185.5 L757 186.8 L756.3 188.1 L755.6 189.4 L754.9 190.7 L754.2 191.9 L753.5 193.2 L752.9 194.5 L752.2 195.8 L751.5 197.1 L750.9 198.4 L750.2 199.7 L749.6 201 L749 202.3 L748.4 203.6 L747.8 204.8 L747.1 206.1 L746.6 207.4 L746 208.7 L745.4 210 L744.8 211.3 L744.2 212.6 L743.7 213.9 L743.1 215.2 L742.6 216.5 L742 217.8 L741.5 219 L741 220.3 L740.5 221.6 L740 222.9 L739.5 224.2 L739 225.5 L738.5 226.8 L738 228.1 L737.6 229.4 L737.1 230.7 L736.6 232 L736.2 233.3 L735.8 234.6 L735.3 235.8 L734.9 237.1 L734.5 238.4 L734.1 239.7 L733.7 241 L733.3 242.3 L732.9 243.6 L732.6 244.9 L732.2 246.2 L731.8 247.5 L731.5 248.8 L731.2 250.1 L730.8 251.4 L730.5 252.6 L730.2 253.9 L729.9 255.2 L729.6 256.5 L729.3 257.8 L729 259.1 L728.7 260.4 L728.5 261.7 L728.2 263 L728 264.3 L727.7 265.6 L727.5 266.9 L727.3 268.2 L727.1 269.5 L726.9 270.8"/>
<path d="M1070.6 98.7 L1068.1 97.4 L1065.6 96.2 L1063 94.9 L1060.5 93.7 L1058 92.4 L1055.4 91.2 L1052.9 89.9 L1050.3 88.7 L1047.8 87.4 L1045.2 86.2 L1042.7 84.9 L1040.1 83.7 L1037.6 82.5 L1035 81.2 L1032.5 80 L1030 78.8 L1027.4 77.5 L1024.9 76.3 L1022.3 75.1 L1019.8 73.9 L1017.3 72.7 L1014.8 71.5 L1012.3 70.3 L1009.8 69.1 L1007.3 67.9 L1004.8 66.7 L1002.4 65.6 L1000 64.4 L997.6 63.3 L995.2 62.1 L992.8 61 L990.5 59.9 L988.2 58.8 L985.9 57.7 L983.7 56.6 L981.5 55.6 L979.4 54.5 L977.4 53.5 L975.4 52.5 L973.5 51.6 L971.7 50.7 L970 49.8 L968.5 48.9 L967.1 48.2 M840.1 47.4 L843.2 46.7 L846.2 46.1 L849 45.6 L851.6 45.1 L853.9 44.7 L855.9 44.4 L857.7 44.2 L859.3 44.1 L860.6 44.1 L861.6 44.2 L862.4 44.4 L863 44.7 L863.4 45.1 L863.6 45.6 L863.7 46.1 L863.6 46.8 L863.3 47.4 L863 48.2 L862.6 49 L862 49.8 L861.4 50.7 L860.8 51.6 L860.1 52.6 L859.3 53.6 L858.5 54.6 L857.7 55.6 L856.8 56.7 L855.9 57.7 L855 58.8 L854 59.9 L853.1 61 L852.1 62.2 L851.1 63.3 L850.1 64.5 L849.1 65.6 L848.1 66.8 L847 68 L846 69.2 L844.9 70.3 L843.9 71.5 L842.8 72.7 L841.8 74 L840.7 75.2 L839.6 76.4 L838.6 77.6 L837.5 78.8 L836.4 80.1 L835.4 81.3 L834.3 82.5 L833.2 83.8 L832.1 85 L831.1 86.2 L830 87.5 L828.9 88.7 L827.8 90 L826.8 91.2 L825.7 92.5 L824.6 93.7 L823.6 95 L822.5 96.2 L821.4 97.5 L820.4 98.8 L819.3 100 L818.3 101.3 L817.2 102.5 L816.2 103.8 L815.1 105.1 L814.1 106.3 L813 107.6 L812 108.9 L811 110.1 L809.9 111.4 L808.9 112.7 L807.9 114 L806.8 115.2 L805.8 116.5 L804.8 117.8 L803.8 119.1 L802.8 120.3 L801.8 121.6 L800.8 122.9 L799.8 124.2 L798.8 125.4 L797.8 126.7 L796.9 128 L795.9 129.3 L794.9 130.5 L793.9 131.8 L793 133.1 L792 134.4 L791.1 135.7 L790.1 137 L789.2 138.2 L788.2 139.5 L787.3 140.8 L786.4 142.1 L785.5 143.4 L784.5 144.6 L783.6 145.9 L782.7 147.2 L781.8 148.5 L780.9 149.8 L780 151.1 L779.2 152.3 L778.3 153.6 L777.4 154.9 L776.5 156.2 L775.7 157.5 L774.8 158.8 L774 160.1 L773.1 161.3 L772.3 162.6 L771.5 163.9 L770.6 165.2 L769.8 166.5 L769 167.8 L768.2 169.1 L767.4 170.4 L766.6 171.6 L765.8 172.9 L765 174.2 L764.3 175.5 L763.5 176.8 L762.7 178.1 L762 179.4 L761.2 180.7 L760.5 181.9 L759.8 183.2 L759 184.5 L758.3 185.8 L757.6 187.1 L756.9 188.4 L756.2 189.7 L755.5 191 L754.8 192.3 L754.1 193.6 L753.4 194.8 L752.8 196.1 L752.1 197.4 L751.5 198.7 L750.8 200 L750.2 201.3 L749.5 202.6 L748.9 203.9 L748.3 205.2 L747.7 206.5 L747.1 207.7 L746.5 209 L745.9 210.3 L745.3 211.6 L744.8 212.9 L744.2 214.2 L743.6 215.5 L743.1 216.8 L742.5 218.1 L742 219.4 L741.5 220.7 L741 221.9 L740.5 223.2 L740 224.5 L739.5 225.8 L739 227.1 L738.5 228.4 L738 229.7 L737.6 231 L737.1 232.3 L736.6 233.6 L736.2 234.9 L735.8 236.2 L735.3 237.4 L734.9 238.7 L734.5 240 L734.1 241.3 L733.7 242.6 L733.3 243.9 L733 245.2 L732.6 246.5 L732.2 247.8 L731.9 249.1 L731.5 250.4 L731.2 251.7 L730.9 253 L730.6 254.2 L730.2 255.5 L729.9 256.8 L729.6 258.1 L729.4 259.4 L729.1 260.7 L728.8 262 L728.5 263.3 L728.3 264.6 L728 265.9 L727.8 267.2 L727.6 268.5 L727.4 269.8 L727.1 271"/>
<path d="M981.1 112.2 L979.5 111.7 L977.8 111.2 L976.2 110.7 L974.6 110.2 L973 109.7 L971.4 109.2 L969.8 108.8 L968.3 108.4 L966.8 108 L965.2 107.6 L963.7 107.3 L962.2 106.9 L960.7 106.6 L959.2 106.3 L957.8 106 L956.3 105.7 L954.9 105.5 L953.5 105.2 L952 105 L950.6 104.8 L949.3 104.7 L947.9 104.5 L946.5 104.4 L945.2 104.3 L943.8 104.2 L942.5 104.1 L941.2 104.1 L939.8 104.1 L938.5 104.1 L937.2 104.1 L936 104.1 L934.7 104.2 L933.4 104.3 L932.2 104.4 L930.9 104.5 L929.7 104.6 L928.4 104.8 L927.2 105 L926 105.2 L924.7 105.4 L923.5 105.6 L922.3 105.9 L921.1 106.2 L919.9 106.5 L918.7 106.8 L917.5 107.1 L916.3 107.5 L915.1 107.9 L914 108.3 L912.8 108.7 L911.6 109.1 L910.4 109.6 L909.2 110 L908.1 110.5 L906.9 111 L905.7 111.5 L904.5 112 L903.4 112.6 L902.2 113.1 L901 113.7 L899.8 114.3 L898.7 114.9 L897.5 115.5 L896.3 116.1 L895.2 116.8 L894 117.4 L892.8 118.1 L891.6 118.8 L890.4 119.5 L889.3 120.2 L888.1 120.9 L886.9 121.6 L885.7 122.4 L884.5 123.1 L883.3 123.9 L882.2 124.7 L881 125.4 L879.8 126.2 L878.6 127 L877.4 127.8 L876.2 128.7 L875 129.5 L873.8 130.3 L872.6 131.2 L871.4 132 L870.2 132.9 L869 133.8 L867.8 134.7 L866.6 135.5 L865.3 136.4 L864.1 137.3 L862.9 138.2 L861.7 139.2 L860.5 140.1 L859.3 141 L858.1 141.9 L856.8 142.9 L855.6 143.8 L854.4 144.8 L853.2 145.7 L852 146.7 L850.7 147.7 L849.5 148.7 L848.3 149.6 L847.1 150.6 L845.9 151.6 L844.6 152.6 L843.4 153.6 L842.2 154.6 L841 155.6 L839.7 156.6 L838.5 157.7 L837.3 158.7 L836.1 159.7 L834.8 160.7 L833.6 161.8 L832.4 162.8 L831.2 163.8 L830 164.9 L828.7 165.9 L827.5 167 L826.3 168 L825.1 169.1 L823.9 170.2 L822.7 171.2 L821.4 172.3 L820.2 173.4 L819 174.4 L817.8 175.5 L816.6 176.6 L815.4 177.7 L814.2 178.8 L813 179.9 L811.8 181 L810.6 182 L809.4 183.1 L808.2 184.2 L807 185.3 L805.8 186.4 L804.6 187.5 L803.4 188.7 L802.3 189.8 L801.1 190.9 L799.9 192 L798.7 193.1 L797.6 194.2 L796.4 195.3 L795.2 196.5 L794.1 197.6 L792.9 198.7 L791.7 199.8 L790.6 201 L789.4 202.1 L788.3 203.2 L787.2 204.4 L786 205.5 L784.9 206.6 L783.7 207.8 L782.6 208.9 L781.5 210 L780.4 211.2 L779.3 212.3 L778.1 213.5 L777 214.6 L775.9 215.8 L774.8 216.9 L773.7 218.1 L772.6 219.2 L771.6 220.4 L770.5 221.5 L769.4 222.7 L768.3 223.8 L767.2 225 L766.2 226.1 L765.1 227.3 L764.1 228.5 L763 229.6 L762 230.8 L760.9 232 L759.9 233.1 L758.9 234.3 L757.9 235.4 L756.8 236.6 L755.8 237.8 L754.8 238.9 L753.8 240.1 L752.8 241.3 L751.8 242.5 L750.8 243.6 L749.9 244.8 L748.9 246 L747.9 247.1 L747 248.3 L746 249.5 L745 250.7 L744.1 251.9 L743.2 253 L742.2 254.2 L741.3 255.4 L740.4 256.6 L739.5 257.7 L738.6 258.9 L737.7 260.1 L736.8 261.3 L735.9 262.5 L735 263.6 L734.1 264.8 L733.3 266 L732.4 267.2 L731.5 268.4 L730.7 269.6 L729.9 270.8"/>
<path d="M957.8 120.6 L956.4 120.5 L955.1 120.3 L953.7 120.2 L952.4 120.1 L951 120 L949.7 120 L948.4 119.9 L947.1 119.9 L945.8 119.9 L944.5 119.9 L943.2 119.9 L941.9 120 L940.6 120 L939.3 120.1 L938.1 120.2 L936.8 120.3 L935.6 120.4 L934.3 120.6 L933.1 120.7 L931.8 120.9 L930.6 121.1 L929.4 121.3 L928.1 121.5 L926.9 121.7 L925.7 122 L924.5 122.2 L923.3 122.5 L922.1 122.8 L920.9 123.1 L919.7 123.5 L918.5 123.8 L917.3 124.2 L916.1 124.5 L914.9 124.9 L913.7 125.3 L912.5 125.8 L911.3 126.2 L910.1 126.6 L908.9 127.1 L907.7 127.6 L906.6 128 L905.4 128.5 L904.2 129 L903 129.6 L901.8 130.1 L900.6 130.6 L899.5 131.2 L898.3 131.8 L897.1 132.4 L895.9 133 L894.7 133.6 L893.5 134.2 L892.3 134.8 L891.1 135.4 L890 136.1 L888.8 136.7 L887.6 137.4 L886.4 138.1 L885.2 138.8 L884 139.5 L882.8 140.2 L881.6 140.9 L880.4 141.6 L879.2 142.4 L878 143.1 L876.8 143.9 L875.6 144.6 L874.4 145.4 L873.2 146.2 L872 146.9 L870.8 147.7 L869.6 148.5 L868.4 149.3 L867.2 150.2 L866 151 L864.7 151.8 L863.5 152.6 L862.3 153.5 L861.1 154.3 L859.9 155.2 L858.7 156 L857.5 156.9 L856.2 157.8 L855 158.7 L853.8 159.5 L852.6 160.4 L851.4 161.3 L850.1 162.2 L848.9 163.1 L847.7 164 L846.5 165 L845.3 165.9 L844 166.8 L842.8 167.7 L841.6 168.7 L840.4 169.6 L839.1 170.6 L837.9 171.5 L836.7 172.5 L835.5 173.4 L834.2 174.4 L833 175.4 L831.8 176.3 L830.6 177.3 L829.4 178.3 L828.1 179.3 L826.9 180.2 L825.7 181.2 L824.5 182.2 L823.3 183.2 L822.1 184.2 L820.8 185.2 L819.6 186.2 L818.4 187.2 L817.2 188.2 L816 189.3 L814.8 190.3 L813.6 191.3 L812.4 192.3 L811.2 193.4 L810 194.4 L808.8 195.4 L807.6 196.4 L806.4 197.5 L805.2 198.5 L804 199.6 L802.8 200.6 L801.6 201.7 L800.4 202.7 L799.2 203.8 L798.1 204.8 L796.9 205.9 L795.7 206.9 L794.5 208 L793.4 209.1 L792.2 210.1 L791 211.2 L789.9 212.3 L788.7 213.3 L787.5 214.4 L786.4 215.5 L785.2 216.6 L784.1 217.6 L782.9 218.7 L781.8 219.8 L780.7 220.9 L779.5 222 L778.4 223 L777.3 224.1 L776.1 225.2 L775 226.3 L773.9 227.4 L772.8 228.5 L771.7 229.6 L770.6 230.7 L769.5 231.8 L768.4 232.9 L767.3 234 L766.2 235.1 L765.1 236.2 L764.1 237.3 L763 238.4 L761.9 239.5 L760.8 240.6 L759.8 241.7 L758.7 242.8 L757.7 244 L756.6 245.1 L755.6 246.2 L754.5 247.3 L753.5 248.4 L752.5 249.5 L751.5 250.6 L750.5 251.8 L749.4 252.9 L748.4 254 L747.4 255.1 L746.4 256.2 L745.4 257.4 L744.5 258.5 L743.5 259.6 L742.5 260.7 L741.5 261.9 L740.6 263 L739.6 264.1 L738.7 265.2 L737.7 266.4 L736.8 267.5 L735.8 268.6 L734.9 269.8 L734 270.9"/>
<path d="M918.3 141.7 L917.1 142 L915.9 142.4 L914.7 142.7 L913.4 143.1 L912.2 143.5 L911 143.8 L909.8 144.2 L908.6 144.7 L907.4 145.1 L906.2 145.5 L905 146 L903.8 146.4 L902.6 146.9 L901.4 147.3 L900.2 147.8 L898.9 148.3 L897.7 148.8 L896.5 149.3 L895.3 149.9 L894.1 150.4 L892.9 150.9 L891.7 151.5 L890.5 152.1 L889.3 152.6 L888.1 153.2 L886.9 153.8 L885.6 154.4 L884.4 155 L883.2 155.6 L882 156.3 L880.8 156.9 L879.6 157.5 L878.4 158.2 L877.1 158.8 L875.9 159.5 L874.7 160.2 L873.5 160.9 L872.2 161.6 L871 162.2 L869.8 163 L868.6 163.7 L867.3 164.4 L866.1 165.1 L864.9 165.8 L863.7 166.6 L862.4 167.3 L861.2 168.1 L860 168.8 L858.7 169.6 L857.5 170.4 L856.3 171.1 L855 171.9 L853.8 172.7 L852.6 173.5 L851.3 174.3 L850.1 175.1 L848.9 175.9 L847.6 176.7 L846.4 177.5 L845.1 178.4 L843.9 179.2 L842.7 180 L841.4 180.9 L840.2 181.7 L839 182.6 L837.7 183.4 L836.5 184.3 L835.2 185.1 L834 186 L832.8 186.9 L831.5 187.8 L830.3 188.6 L829 189.5 L827.8 190.4 L826.6 191.3 L825.3 192.2 L824.1 193.1 L822.8 194 L821.6 194.9 L820.4 195.8 L819.1 196.7 L817.9 197.7 L816.7 198.6 L815.4 199.5 L814.2 200.4 L813 201.4 L811.7 202.3 L810.5 203.2 L809.3 204.2 L808.1 205.1 L806.8 206.1 L805.6 207 L804.4 208 L803.2 208.9 L802 209.9 L800.7 210.9 L799.5 211.8 L798.3 212.8 L797.1 213.8 L795.9 214.7 L794.7 215.7 L793.5 216.7 L792.3 217.7 L791.1 218.7 L789.9 219.6 L788.7 220.6 L787.5 221.6 L786.3 222.6 L785.1 223.6 L783.9 224.6 L782.7 225.6 L781.5 226.6 L780.4 227.6 L779.2 228.6 L778 229.6 L776.8 230.6 L775.7 231.6 L774.5 232.6 L773.4 233.6 L772.2 234.7 L771 235.7 L769.9 236.7 L768.7 237.7 L767.6 238.7 L766.5 239.8 L765.3 240.8 L764.2 241.8 L763.1 242.8 L761.9 243.9 L760.8 244.9 L759.7 245.9 L758.6 247 L757.5 248 L756.4 249 L755.3 250.1 L754.2 251.1 L753.1 252.1 L752 253.2 L750.9 254.2 L749.8 255.3 L748.7 256.3 L747.7 257.4 L746.6 258.4 L745.5 259.5 L744.5 260.5 L743.4 261.6 L742.4 262.6 L741.3 263.7 L740.3 264.7 L739.2 265.8 L738.2 266.8 L737.2 267.9 L736.2 268.9 L735.2 270 L734.1 271"/>
<path d="M1000.6 154.4 L999.1 154 L997.6 153.6 L996.1 153.2 L994.7 152.8 L993.2 152.5 L991.7 152.1 L990.3 151.8 L988.8 151.4 L987.4 151.1 L985.9 150.8 L984.5 150.5 L983.1 150.2 L981.6 149.9 L980.2 149.7 L978.8 149.4 L977.4 149.2 L976 148.9 L974.6 148.7 L973.2 148.5 L971.8 148.3 L970.5 148.1 L969.1 147.9 L967.7 147.8 L966.4 147.6 L965 147.5 L963.7 147.3 L962.3 147.2 L961 147.1 L959.6 147 L958.3 146.9 L957 146.9 L955.7 146.8 L954.4 146.8 L953.1 146.7 L951.7 146.7 L950.4 146.7 L949.1 146.7 L947.9 146.7 L946.6 146.8 L945.3 146.8 L944 146.8 L942.7 146.9 L941.5 147 L940.2 147.1 L938.9 147.2 L937.7 147.3 L936.4 147.4 L935.1 147.5 L933.9 147.7 L932.6 147.9 L931.4 148 L930.1 148.2 L928.9 148.4 L927.6 148.6 L926.4 148.8 L925.2 149.1 L923.9 149.3 L922.7 149.6 L921.5 149.8 L920.2 150.1 L919 150.4 L917.8 150.7 L916.5 151 L915.3 151.3 L914.1 151.6 L912.9 152 L911.6 152.3 L910.4 152.7 L909.2 153.1 L908 153.4 L906.7 153.8 L905.5 154.2 L904.3 154.6 L903.1 155.1 L901.8 155.5 L900.6 155.9 L899.4 156.4 L898.2 156.9 L897 157.3 L895.7 157.8 L894.5 158.3 L893.3 158.8 L892.1 159.3 L890.8 159.8 L889.6 160.4 L888.4 160.9 L887.2 161.4 L885.9 162 L884.7 162.5 L883.5 163.1 L882.2 163.7 L881 164.3 L879.8 164.9 L878.5 165.5 L877.3 166.1 L876.1 166.7 L874.8 167.3 L873.6 167.9 L872.4 168.6 L871.1 169.2 L869.9 169.9 L868.7 170.5 L867.4 171.2 L866.2 171.9 L864.9 172.5 L863.7 173.2 L862.5 173.9 L861.2 174.6 L860 175.3 L858.7 176 L857.5 176.8 L856.2 177.5 L855 178.2 L853.7 179 L852.5 179.7 L851.2 180.4 L850 181.2 L848.7 182 L847.5 182.7 L846.2 183.5 L845 184.3 L843.7 185 L842.5 185.8 L841.2 186.6 L840 187.4 L838.7 188.2 L837.5 189 L836.2 189.8 L835 190.6 L833.7 191.5 L832.4 192.3 L831.2 193.1 L829.9 193.9 L828.7 194.8 L827.4 195.6 L826.2 196.5 L824.9 197.3 L823.7 198.2 L822.4 199 L821.2 199.9 L819.9 200.7 L818.7 201.6 L817.4 202.5 L816.2 203.3 L814.9 204.2 L813.7 205.1 L812.4 206 L811.2 206.9 L809.9 207.8 L808.7 208.7 L807.4 209.6 L806.2 210.5 L805 211.4 L803.7 212.3 L802.5 213.2 L801.2 214.1 L800 215 L798.8 215.9 L797.5 216.9 L796.3 217.8 L795.1 218.7 L793.8 219.6 L792.6 220.6 L791.4 221.5 L790.2 222.5 L788.9 223.4 L787.7 224.3 L786.5 225.3 L785.3 226.2 L784.1 227.2 L782.9 228.1 L781.7 229.1 L780.5 230 L779.3 231 L778.1 232 L776.9 232.9 L775.7 233.9 L774.5 234.9 L773.3 235.8 L772.1 236.8 L770.9 237.8 L769.7 238.7 L768.6 239.7 L767.4 240.7 L766.2 241.7 L765 242.7 L763.9 243.6 L762.7 244.6 L761.6 245.6 L760.4 246.6 L759.2 247.6 L758.1 248.6 L757 249.6 L755.8 250.6 L754.7 251.6 L753.5 252.6 L752.4 253.6 L751.3 254.6 L750.2 255.6 L749 256.6 L747.9 257.6 L746.8 258.6 L745.7 259.6 L744.6 260.6 L743.5 261.6 L742.4 262.6 L741.3 263.6 L740.3 264.7 L739.2 265.7 L738.1 266.7 L737 267.7 L736 268.7 L734.9 269.7 L733.9 270.8"/>
<path d="M628.9 118.1 L632.1 117.4 L635.2 116.7 L638.2 115.9 L641.3 115.2 L644.3 114.5 L647.3 113.8 L650.2 113.2 L653.1 112.5 L656 111.9 L658.9 111.2 L661.7 110.6 L664.4 110 L667.2 109.4 L669.9 108.8 L672.5 108.3 L675.1 107.7 L677.7 107.2 L680.2 106.7 L682.7 106.2 L685.2 105.7 L687.6 105.3 L689.9 104.9 L692.2 104.4 L694.5 104 L696.7 103.6 L698.9 103.3 L701 102.9 L703.1 102.6 L705.1 102.3 L707.1 102 L709 101.8 L710.9 101.5 L712.7 101.3 L714.4 101.1 L716.2 100.9 L717.8 100.8 L719.4 100.6 L721 100.5 L722.5 100.4 L724 100.3 L725.4 100.3 L726.8 100.3 L728.1 100.3 L729.3 100.3 L730.5 100.3 L731.7 100.4 L732.8 100.5 L733.9 100.6 L734.9 100.7 L735.9 100.8 L736.8 101 L737.7 101.2 L738.5 101.4 L739.3 101.6 L740.1 101.9 L740.8 102.2 L741.5 102.4 L742.1 102.8 L742.7 103.1 L743.3 103.4 L743.8 103.8 L744.2 104.2 L744.7 104.6 L745.1 105 L745.5 105.5 L745.8 106 L746.1 106.4 L746.4 106.9 L746.7 107.4 L746.9 108 L747.1 108.5 L747.2 109.1 L747.4 109.7 L747.5 110.3 L747.6 110.9 L747.6 111.5 L747.7 112.1 L747.7 112.8 L747.7 113.5 L747.7 114.1 L747.7 114.8 L747.6 115.5 L747.5 116.2 L747.4 117 L747.3 117.7 L747.2 118.5 L747.1 119.2 L746.9 120 L746.8 120.8 L746.6 121.6 L746.4 122.4 L746.2 123.2 L746 124 L745.7 124.9 L745.5 125.7 L745.3 126.6 L745 127.4 L744.7 128.3 L744.5 129.2 L744.2 130.1 L743.9 131 L743.6 131.9 L743.3 132.8 L743 133.7 L742.7 134.6 L742.4 135.5 L742.1 136.5 L741.7 137.4 L741.4 138.4 L741.1 139.3 L740.8 140.3 L740.4 141.3 L740.1 142.2 L739.7 143.2 L739.4 144.2 L739 145.2 L738.7 146.2 L738.3 147.2 L738 148.2 L737.6 149.2 L737.3 150.2 L736.9 151.2 L736.6 152.2 L736.2 153.3 L735.9 154.3 L735.5 155.3 L735.2 156.4 L734.8 157.4 L734.5 158.5 L734.1 159.5 L733.8 160.6 L733.4 161.6 L733.1 162.7 L732.8 163.8 L732.4 164.8 L732.1 165.9 L731.8 167 L731.4 168.1 L731.1 169.1 L730.8 170.2 L730.5 171.3 L730.1 172.4 L729.8 173.5 L729.5 174.6 L729.2 175.7 L728.9 176.8 L728.6 177.9 L728.3 179 L728 180.1 L727.7 181.2 L727.4 182.3 L727.2 183.4 L726.9 184.5 L726.6 185.7 L726.3 186.8 L726.1 187.9 L725.8 189 L725.6 190.2 L725.3 191.3 L725.1 192.4 L724.9 193.5 L724.6 194.7 L724.4 195.8 L724.2 196.9 L724 198.1 L723.8 199.2 L723.5 200.4 L723.3 201.5 L723.2 202.6 L723 203.8 L722.8 204.9 L722.6 206.1 L722.4 207.2 L722.3 208.4 L722.1 209.5 L722 210.7 L721.8 211.9 L721.7 213 L721.6 214.2 L721.4 215.3 L721.3 216.5 L721.2 217.6 L721.1 218.8 L721 220 L720.9 221.1 L720.8 222.3 L720.7 223.5 L720.6 224.6 L720.6 225.8 L720.5 227 L720.4 228.1 L720.4 229.3 L720.4 230.5 L720.3 231.7 L720.3 232.8 L720.3 234 L720.3 235.2 L720.2 236.4 L720.2 237.5 L720.2 238.7 L720.3 239.9 L720.3 241.1 L720.3 242.3 L720.3 243.4 L720.4 244.6 L720.4 245.8 L720.5 247 L720.5 248.2 L720.6 249.3 L720.7 250.5 L720.8 251.7 L720.9 252.9 L720.9 254.1 L721.1 255.3 L721.2 256.5 L721.3 257.7 L721.4 258.8 L721.5 260 L721.7 261.2 L721.8 262.4 L722 263.6 L722.1 264.8 L722.3 266 L722.5 267.2 L722.7 268.4 L722.9 269.6 L723.1 270.8"/>
<path d="M532.3 155.1 L535.1 154.4 L537.9 153.7 L540.7 153 L543.5 152.3 L546.2 151.6 L549 151 L551.7 150.3 L554.4 149.6 L557.1 149 L559.7 148.4 L562.4 147.8 L565 147.1 L567.6 146.5 L570.2 145.9 L572.8 145.4 L575.3 144.8 L577.9 144.2 L580.4 143.7 L582.9 143.1 L585.3 142.6 L587.8 142.1 L590.2 141.5 L592.6 141 L594.9 140.6 L597.3 140.1 L599.6 139.6 L601.9 139.1 L604.1 138.7 L606.4 138.3 L608.6 137.9 L610.8 137.4 L613 137 L615.1 136.7 L617.2 136.3 L619.3 135.9 L621.3 135.6 L623.3 135.2 L625.3 134.9 L627.3 134.6 L629.2 134.3 L631.1 134 L633 133.8 L634.9 133.5 L636.7 133.3 L638.5 133.1 L640.2 132.8 L641.9 132.6 L643.6 132.5 L645.3 132.3 L646.9 132.1 L648.5 132 L650.1 131.9 L651.6 131.7 L653.1 131.6 L654.6 131.6 L656.1 131.5 L657.5 131.4 L658.9 131.4 L660.2 131.4 L661.6 131.3 L662.8 131.3 L664.1 131.4 L665.4 131.4 L666.6 131.4 L667.7 131.5 L668.9 131.6 L670 131.7 L671.1 131.8 L672.2 131.9 L673.2 132 L674.2 132.2 L675.2 132.3 L676.1 132.5 L677.1 132.7 L678 132.9 L678.8 133.1 L679.7 133.3 L680.5 133.6 L681.3 133.8 L682.1 134.1 L682.8 134.4 L683.6 134.7 L684.3 135 L684.9 135.3 L685.6 135.6 L686.2 136 L686.9 136.4 L687.4 136.7 L688 137.1 L688.6 137.5 L689.1 137.9 L689.6 138.3 L690.1 138.8 L690.6 139.2 L691 139.7 L691.5 140.2 L691.9 140.6 L692.3 141.1 L692.7 141.6 L693.1 142.2 L693.4 142.7 L693.8 143.2 L694.1 143.8 L694.4 144.3 L694.7 144.9 L695 145.5 L695.3 146 L695.6 146.6 L695.8 147.2 L696 147.9 L696.3 148.5 L696.5 149.1 L696.7 149.8 L696.9 150.4 L697.1 151.1 L697.3 151.7 L697.4 152.4 L697.6 153.1 L697.7 153.8 L697.9 154.5 L698 155.2 L698.1 155.9 L698.3 156.7 L698.4 157.4 L698.5 158.1 L698.6 158.9 L698.7 159.6 L698.8 160.4 L698.8 161.2 L698.9 161.9 L699 162.7 L699.1 163.5 L699.1 164.3 L699.2 165.1 L699.3 165.9 L699.3 166.7 L699.4 167.5 L699.4 168.4 L699.5 169.2 L699.5 170 L699.6 170.9 L699.6 171.7 L699.6 172.6 L699.7 173.4 L699.7 174.3 L699.7 175.1 L699.8 176 L699.8 176.9 L699.9 177.8 L699.9 178.7 L699.9 179.6 L700 180.4 L700 181.3 L700 182.2 L700.1 183.2 L700.1 184.1 L700.1 185 L700.2 185.9 L700.2 186.8 L700.2 187.8 L700.3 188.7 L700.3 189.6 L700.4 190.6 L700.4 191.5 L700.5 192.5 L700.5 193.4 L700.6 194.4 L700.6 195.3 L700.7 196.3 L700.7 197.2 L700.8 198.2 L700.9 199.2 L700.9 200.1 L701 201.1 L701.1 202.1 L701.2 203.1 L701.2 204.1 L701.3 205.1 L701.4 206 L701.5 207 L701.6 208 L701.7 209 L701.8 210 L701.9 211 L702 212 L702.1 213 L702.3 214.1 L702.4 215.1 L702.5 216.1 L702.6 217.1 L702.8 218.1 L702.9 219.1 L703.1 220.2 L703.2 221.2 L703.4 222.2 L703.5 223.2 L703.7 224.3 L703.9 225.3 L704.1 226.3 L704.2 227.4 L704.4 228.4 L704.6 229.4 L704.8 230.5 L705 231.5 L705.2 232.6 L705.4 233.6 L705.6 234.7 L705.9 235.7 L706.1 236.8 L706.3 237.8 L706.6 238.9 L706.8 239.9 L707.1 241 L707.3 242 L707.6 243.1 L707.9 244.2 L708.1 245.2 L708.4 246.3 L708.7 247.4 L709 248.4 L709.3 249.5 L709.6 250.6 L709.9 251.6 L710.2 252.7 L710.5 253.8 L710.8 254.8 L711.2 255.9 L711.5 257 L711.9 258.1 L712.2 259.1 L712.6 260.2 L712.9 261.3 L713.3 262.4 L713.7 263.5 L714 264.5 L714.4 265.6 L714.8 266.7 L715.2 267.8 L715.6 268.9 L716 270 L716.4 271"/>
</g>
<g fill="none" stroke="#dc11ff" stroke-width="1.389" stroke-dasharray="1.389 2.292">
<path d="M647.8 118.9 L650.4 118.3 L653 117.8 L655.5 117.3 L658 116.8 L660.4 116.3 L662.8 115.8 L665.2 115.3 L667.6 114.9 L669.9 114.4 L672.1 114 L674.4 113.6 L676.5 113.2 L678.7 112.8 L680.8 112.5 L682.9 112.2 L684.9 111.8 L686.9 111.5 L688.8 111.3 L690.7 111 L692.6 110.7 L694.4 110.5 L696.2 110.3 L697.9 110.1 L699.6 109.9 L701.2 109.8 L702.8 109.7 L704.4 109.5 L705.9 109.4 L707.4 109.4 L708.8 109.3 L710.2 109.3 L711.5 109.2 L712.8 109.2 L714.1 109.3 L715.3 109.3 L716.5 109.4 L717.6 109.4 L718.7 109.5 L719.8 109.6 L720.8 109.8 L721.8 109.9 L722.7 110.1 L723.6 110.3 L724.5 110.5 L725.3 110.7 L726.1 111 L726.9 111.2 L727.6 111.5 L728.3 111.8 L728.9 112.1 L729.6 112.5 L730.2 112.8 L730.7 113.2 L731.3 113.6 L731.8 114 L732.2 114.4 L732.7 114.8 L733.1 115.3 L733.5 115.8 L733.8 116.2 L734.2 116.7 L734.5 117.2 L734.8 117.8 L735 118.3 L735.3 118.9 L735.5 119.4 L735.7 120 L735.9 120.6 L736.1 121.2 L736.2 121.8 L736.3 122.5 L736.4 123.1 L736.5 123.8 L736.6 124.5 L736.7 125.1 L736.7 125.8 L736.7 126.5 L736.7 127.2 L736.7 128 L736.7 128.7 L736.7 129.5 L736.7 130.2 L736.6 131 L736.6 131.8 L736.5 132.5 L736.4 133.3 L736.3 134.1 L736.2 134.9 L736.1 135.8 L736 136.6 L735.9 137.4 L735.8 138.3 L735.6 139.1 L735.5 140 L735.4 140.8 L735.2 141.7 L735.1 142.6 L734.9 143.5 L734.7 144.4 L734.6 145.3 L734.4 146.2 L734.2 147.1 L734 148 L733.8 149 L733.6 149.9 L733.5 150.8 L733.3 151.8 L733.1 152.7 L732.9 153.7 L732.7 154.6 L732.5 155.6 L732.3 156.6 L732.1 157.5 L731.9 158.5 L731.7 159.5 L731.5 160.5 L731.3 161.5 L731.1 162.5 L730.9 163.5 L730.7 164.5 L730.5 165.5 L730.3 166.5 L730.1 167.5 L729.9 168.5 L729.7 169.6 L729.5 170.6 L729.3 171.6 L729.1 172.6 L728.9 173.7 L728.8 174.7 L728.6 175.8 L728.4 176.8 L728.2 177.9 L728.1 178.9 L727.9 180 L727.7 181 L727.6 182.1 L727.4 183.2 L727.2 184.2 L727.1 185.3 L726.9 186.4 L726.8 187.5 L726.7 188.5 L726.5 189.6 L726.4 190.7 L726.3 191.8 L726.1 192.9 L726 194 L725.9 195 L725.8 196.1 L725.7 197.2 L725.6 198.3 L725.5 199.4 L725.4 200.5 L725.3 201.6 L725.2 202.7 L725.1 203.9 L725.1 205 L725 206.1 L724.9 207.2 L724.9 208.3 L724.8 209.4 L724.8 210.5 L724.7 211.7 L724.7 212.8 L724.6 213.9 L724.6 215 L724.6 216.1 L724.6 217.3 L724.6 218.4 L724.6 219.5 L724.6 220.7 L724.6 221.8 L724.6 222.9 L724.6 224.1 L724.6 225.2 L724.7 226.3 L724.7 227.5 L724.8 228.6 L724.8 229.8 L724.9 230.9 L724.9 232 L725 233.2 L725.1 234.3 L725.1 235.5 L725.2 236.6 L725.3 237.8 L725.4 238.9 L725.5 240.1 L725.6 241.2 L725.8 242.4 L725.9 243.5 L726 244.7 L726.2 245.8 L726.3 247 L726.4 248.1 L726.6 249.3"/>
<path d="M685.6 120 L687 119.9 L688.4 119.9 L689.7 119.9 L691 119.9 L692.3 119.9 L693.6 119.9 L694.8 120 L695.9 120 L697.1 120.1 L698.2 120.2 L699.2 120.3 L700.3 120.4 L701.3 120.6 L702.3 120.7 L703.2 120.9 L704.1 121.1 L705 121.3 L705.8 121.5 L706.7 121.8 L707.4 122 L708.2 122.3 L708.9 122.6 L709.6 122.9 L710.3 123.2 L711 123.5 L711.6 123.9 L712.2 124.2 L712.8 124.6 L713.3 125 L713.9 125.4 L714.4 125.8 L714.8 126.2 L715.3 126.7 L715.7 127.1 L716.2 127.6 L716.6 128.1 L716.9 128.6 L717.3 129.1 L717.6 129.6 L717.9 130.1 L718.2 130.7 L718.5 131.2 L718.8 131.8 L719 132.4 L719.3 133 L719.5 133.6 L719.7 134.2 L719.9 134.8 L720.1 135.5 L720.2 136.1 L720.4 136.8 L720.5 137.4 L720.6 138.1 L720.8 138.8 L720.9 139.5 L721 140.2 L721 140.9 L721.1 141.6 L721.2 142.4 L721.2 143.1 L721.3 143.9 L721.3 144.6 L721.3 145.4 L721.4 146.1 L721.4 146.9 L721.4 147.7 L721.4 148.5 L721.4 149.3 L721.4 150.1 L721.4 150.9 L721.3 151.8 L721.3 152.6 L721.3 153.4 L721.3 154.3 L721.2 155.1 L721.2 156 L721.1 156.8 L721.1 157.7 L721 158.6 L721 159.5 L720.9 160.4 L720.9 161.2 L720.8 162.1 L720.8 163 L720.7 163.9 L720.6 164.9 L720.6 165.8 L720.5 166.7 L720.4 167.6 L720.4 168.6 L720.3 169.5 L720.2 170.4 L720.2 171.4 L720.1 172.3 L720.1 173.3 L720 174.2 L719.9 175.2 L719.9 176.2 L719.8 177.1 L719.7 178.1 L719.7 179.1 L719.6 180.1 L719.6 181 L719.5 182 L719.5 183 L719.4 184 L719.4 185 L719.3 186 L719.3 187 L719.3 188 L719.2 189 L719.2 190.1 L719.2 191.1 L719.1 192.1 L719.1 193.1 L719.1 194.1 L719.1 195.2 L719.1 196.2 L719.1 197.2 L719 198.3 L719 199.3 L719 200.3 L719.1 201.4 L719.1 202.4 L719.1 203.5 L719.1 204.5 L719.1 205.6 L719.1 206.6 L719.2 207.7 L719.2 208.7 L719.3 209.8 L719.3 210.9 L719.3 211.9 L719.4 213 L719.5 214 L719.5 215.1 L719.6 216.2 L719.7 217.3 L719.7 218.3 L719.8 219.4 L719.9 220.5 L720 221.6 L720.1 222.7 L720.2 223.7 L720.3 224.8 L720.4 225.9 L720.6 227 L720.7 228.1 L720.8 229.2 L721 230.3 L721.1 231.4 L721.2 232.4 L721.4 233.5 L721.6 234.6 L721.7 235.7 L721.9 236.8 L722.1 237.9 L722.3 239 L722.4 240.1 L722.6 241.2 L722.8 242.3 L723 243.5 L723.2 244.6 L723.5 245.7 L723.7 246.8 L723.9 247.9 L724.1 249"/>
<path d="M535.6 180.9 L537.6 180.5 L539.6 180.1 L541.6 179.6 L543.5 179.2 L545.5 178.8 L547.4 178.5 L549.4 178.1 L551.3 177.7 L553.2 177.3 L555.1 177 L557 176.6 L558.8 176.3 L560.7 176 L562.5 175.6 L564.3 175.3 L566.1 175 L567.9 174.7 L569.7 174.4 L571.5 174.2 L573.2 173.9 L575 173.6 L576.7 173.4 L578.4 173.1 L580.1 172.9 L581.8 172.7 L583.4 172.4 L585.1 172.2 L586.7 172 L588.3 171.8 L589.9 171.6 L591.5 171.5 L593.1 171.3 L594.6 171.1 L596.2 171 L597.7 170.9 L599.2 170.7 L600.7 170.6 L602.2 170.5 L603.6 170.4 L605.1 170.3 L606.5 170.2 L607.9 170.2 L609.3 170.1 L610.7 170 L612.1 170 L613.5 170 L614.8 169.9 L616.1 169.9 L617.4 169.9 L618.7 169.9 L620 169.9 L621.3 170 L622.5 170 L623.8 170 L625 170.1 L626.2 170.1 L627.4 170.2 L628.6 170.3 L629.7 170.4 L630.9 170.5 L632 170.6 L633.1 170.7 L634.2 170.8 L635.3 170.9 L636.4 171.1 L637.5 171.2 L638.5 171.4 L639.6 171.6 L640.6 171.8 L641.6 171.9 L642.6 172.1 L643.6 172.3 L644.6 172.6 L645.5 172.8 L646.5 173 L647.4 173.3 L648.4 173.5 L649.3 173.8 L650.2 174 L651.1 174.3 L652 174.6 L652.9 174.9 L653.7 175.2 L654.6 175.5 L655.4 175.8 L656.3 176.2 L657.1 176.5 L657.9 176.8 L658.7 177.2 L659.5 177.6 L660.3 177.9 L661.1 178.3 L661.8 178.7 L662.6 179.1 L663.3 179.5 L664.1 179.9 L664.8 180.3 L665.5 180.7 L666.3 181.2 L667 181.6 L667.7 182 L668.4 182.5 L669.1 183 L669.8 183.4 L670.4 183.9 L671.1 184.4 L671.8 184.9 L672.4 185.4 L673.1 185.9 L673.7 186.4 L674.4 186.9 L675 187.4 L675.7 187.9 L676.3 188.5 L676.9 189 L677.5 189.6 L678.1 190.1 L678.8 190.7 L679.4 191.3 L680 191.8 L680.6 192.4 L681.2 193 L681.7 193.6 L682.3 194.2 L682.9 194.8 L683.5 195.4 L684.1 196 L684.7 196.6 L685.2 197.2 L685.8 197.9 L686.4 198.5 L686.9 199.1 L687.5 199.8 L688.1 200.4 L688.6 201.1 L689.2 201.8 L689.7 202.4 L690.3 203.1 L690.9 203.8 L691.4 204.4 L692 205.1 L692.5 205.8 L693.1 206.5 L693.6 207.2 L694.2 207.9 L694.7 208.6 L695.3 209.3 L695.8 210 L696.4 210.8 L696.9 211.5 L697.5 212.2 L698 213 L698.6 213.7 L699.1 214.4 L699.7 215.2 L700.2 215.9 L700.8 216.7 L701.3 217.4 L701.9 218.2 L702.4 219 L703 219.7 L703.6 220.5 L704.1 221.3 L704.7 222 L705.2 222.8 L705.8 223.6 L706.4 224.4 L706.9 225.2 L707.5 226 L708.1 226.8 L708.6 227.6 L709.2 228.4 L709.8 229.2 L710.4 230 L710.9 230.8 L711.5 231.6 L712.1 232.4 L712.7 233.2 L713.3 234.1 L713.9 234.9 L714.5 235.7 L715.1 236.6 L715.7 237.4 L716.3 238.2 L716.9 239.1 L717.5 239.9 L718.1 240.7 L718.7 241.6 L719.3 242.4 L719.9 243.3 L720.5 244.1 L721.1 245 L721.8 245.9 L722.4 246.7 L723 247.6 L723.7 248.4 L724.3 249.3"/>
<path d="M650 163.6 L651 163.8 L651.9 164 L652.8 164.3 L653.8 164.5 L654.7 164.8 L655.6 165 L656.5 165.3 L657.3 165.6 L658.2 165.9 L659 166.2 L659.8 166.5 L660.7 166.8 L661.5 167.1 L662.3 167.5 L663 167.8 L663.8 168.2 L664.6 168.5 L665.3 168.9 L666.1 169.3 L666.8 169.7 L667.5 170.1 L668.2 170.5 L668.9 170.9 L669.6 171.3 L670.3 171.7 L670.9 172.2 L671.6 172.6 L672.2 173.1 L672.9 173.5 L673.5 174 L674.1 174.5 L674.7 175 L675.4 175.5 L676 176 L676.6 176.5 L677.1 177 L677.7 177.5 L678.3 178.1 L678.9 178.6 L679.4 179.2 L680 179.7 L680.5 180.3 L681.1 180.8 L681.6 181.4 L682.1 182 L682.7 182.6 L683.2 183.2 L683.7 183.8 L684.2 184.4 L684.7 185 L685.2 185.6 L685.7 186.3 L686.2 186.9 L686.7 187.5 L687.2 188.2 L687.7 188.8 L688.2 189.5 L688.7 190.1 L689.2 190.8 L689.6 191.5 L690.1 192.2 L690.6 192.8 L691.1 193.5 L691.5 194.2 L692 194.9 L692.5 195.6 L692.9 196.3 L693.4 197.1 L693.8 197.8 L694.3 198.5 L694.8 199.2 L695.2 200 L695.7 200.7 L696.1 201.5 L696.6 202.2 L697 203 L697.5 203.7 L698 204.5 L698.4 205.2 L698.9 206 L699.3 206.8 L699.8 207.6 L700.2 208.3 L700.7 209.1 L701.2 209.9 L701.6 210.7 L702.1 211.5 L702.5 212.3 L703 213.1 L703.5 213.9 L703.9 214.7 L704.4 215.6 L704.9 216.4 L705.3 217.2 L705.8 218 L706.3 218.8 L706.8 219.7 L707.2 220.5 L707.7 221.4 L708.2 222.2 L708.7 223 L709.2 223.9 L709.7 224.7 L710.1 225.6 L710.6 226.5 L711.1 227.3 L711.6 228.2 L712.1 229 L712.6 229.9 L713.1 230.8 L713.6 231.7 L714.2 232.5 L714.7 233.4 L715.2 234.3 L715.7 235.2 L716.2 236.1 L716.7 236.9 L717.3 237.8 L717.8 238.7 L718.3 239.6 L718.9 240.5 L719.4 241.4 L720 242.3 L720.5 243.2 L721.1 244.1 L721.6 245 L722.2 245.9 L722.7 246.9 L723.3 247.8 L723.9 248.7 L724.5 249.6"/>
<path d="M626 171 L627.2 171.1 L628.4 171.2 L629.5 171.2 L630.7 171.3 L631.8 171.5 L632.9 171.6 L634 171.7 L635.1 171.8 L636.2 172 L637.2 172.1 L638.3 172.3 L639.3 172.5 L640.3 172.7 L641.4 172.9 L642.4 173.1 L643.3 173.3 L644.3 173.5 L645.3 173.7 L646.2 173.9 L647.2 174.2 L648.1 174.4 L649 174.7 L649.9 175 L650.8 175.3 L651.7 175.5 L652.6 175.8 L653.4 176.1 L654.3 176.5 L655.1 176.8 L656 177.1 L656.8 177.4 L657.6 177.8 L658.4 178.1 L659.2 178.5 L660 178.9 L660.8 179.2 L661.6 179.6 L662.3 180 L663.1 180.4 L663.8 180.8 L664.6 181.2 L665.3 181.7 L666 182.1 L666.7 182.5 L667.5 183 L668.2 183.4 L668.9 183.9 L669.5 184.4 L670.2 184.8 L670.9 185.3 L671.6 185.8 L672.2 186.3 L672.9 186.8 L673.6 187.3 L674.2 187.8 L674.8 188.3 L675.5 188.9 L676.1 189.4 L676.7 189.9 L677.4 190.5 L678 191 L678.6 191.6 L679.2 192.1 L679.8 192.7 L680.4 193.3 L681 193.9 L681.6 194.5 L682.2 195 L682.8 195.6 L683.4 196.3 L684 196.9 L684.6 197.5 L685.2 198.1 L685.7 198.7 L686.3 199.4 L686.9 200 L687.5 200.6 L688 201.3 L688.6 201.9 L689.2 202.6 L689.7 203.3 L690.3 203.9 L690.9 204.6 L691.4 205.3 L692 205.9 L692.6 206.6 L693.1 207.3 L693.7 208 L694.2 208.7 L694.8 209.4 L695.4 210.1 L695.9 210.8 L696.5 211.6 L697 212.3 L697.6 213 L698.1 213.7 L698.7 214.5 L699.3 215.2 L699.8 215.9 L700.4 216.7 L700.9 217.4 L701.5 218.2 L702.1 218.9 L702.6 219.7 L703.2 220.5 L703.8 221.2 L704.3 222 L704.9 222.8 L705.5 223.5 L706 224.3 L706.6 225.1 L707.2 225.9 L707.8 226.7 L708.3 227.5 L708.9 228.3 L709.5 229.1 L710.1 229.9 L710.7 230.7 L711.3 231.5 L711.9 232.3 L712.4 233.1 L713 233.9 L713.6 234.7 L714.2 235.5 L714.8 236.4 L715.4 237.2 L716 238 L716.6 238.8 L717.3 239.7 L717.9 240.5 L718.5 241.4 L719.1 242.2 L719.7 243 L720.3 243.9 L721 244.7 L721.6 245.6 L722.2 246.4 L722.9 247.3 L723.5 248.1 L724.1 249"/>
<path d="M793.3 80.6 L793.5 81.1 L793.6 81.6 L793.7 82.2 L793.8 82.8 L793.8 83.4 L793.8 84 L793.7 84.7 L793.6 85.3 L793.5 86 L793.3 86.7 L793.1 87.5 L792.8 88.2 L792.6 89 L792.3 89.7 L792 90.5 L791.6 91.4 L791.3 92.2 L790.9 93 L790.5 93.9 L790 94.8 L789.6 95.7 L789.1 96.6 L788.6 97.5 L788.1 98.4 L787.6 99.3 L787.1 100.3 L786.6 101.2 L786 102.2 L785.5 103.1 L784.9 104.1 L784.3 105.1 L783.7 106.1 L783.1 107.1 L782.5 108.1 L781.9 109.2 L781.3 110.2 L780.7 111.2 L780.1 112.3 L779.4 113.3 L778.8 114.4 L778.2 115.4 L777.5 116.5 L776.9 117.6 L776.2 118.7 L775.6 119.8 L774.9 120.8 L774.3 121.9 L773.6 123 L772.9 124.1 L772.3 125.2 L771.6 126.4 L771 127.5 L770.3 128.6 L769.6 129.7 L769 130.9 L768.3 132 L767.7 133.1 L767 134.3 L766.4 135.4 L765.7 136.5 L765.1 137.7 L764.4 138.8 L763.8 140 L763.1 141.2 L762.5 142.3 L761.8 143.5 L761.2 144.6 L760.6 145.8 L759.9 147 L759.3 148.1 L758.7 149.3 L758.1 150.5 L757.4 151.7 L756.8 152.9 L756.2 154 L755.6 155.2 L755 156.4 L754.4 157.6 L753.8 158.8 L753.2 160 L752.7 161.2 L752.1 162.4 L751.5 163.6 L750.9 164.8 L750.4 166 L749.8 167.2 L749.3 168.4 L748.7 169.6 L748.2 170.8 L747.6 172 L747.1 173.2 L746.6 174.4 L746 175.6 L745.5 176.8 L745 178 L744.5 179.2 L744 180.4 L743.5 181.7 L743 182.9 L742.6 184.1 L742.1 185.3 L741.6 186.5 L741.1 187.8 L740.7 189 L740.2 190.2 L739.8 191.4 L739.4 192.6 L738.9 193.9 L738.5 195.1 L738.1 196.3 L737.7 197.5 L737.3 198.8 L736.9 200 L736.5 201.2 L736.1 202.5 L735.7 203.7 L735.3 204.9 L735 206.2 L734.6 207.4 L734.3 208.6 L733.9 209.9 L733.6 211.1 L733.2 212.3 L732.9 213.6 L732.6 214.8 L732.3 216 L732 217.3 L731.7 218.5 L731.4 219.8 L731.1 221 L730.9 222.2 L730.6 223.5 L730.3 224.7 L730.1 225.9 L729.8 227.2 L729.6 228.4 L729.4 229.7 L729.2 230.9 L728.9 232.2 L728.7 233.4 L728.5 234.6 L728.3 235.9 L728.2 237.1 L728 238.4 L727.8 239.6 L727.7 240.9 L727.5 242.1 L727.4 243.4 L727.2 244.6 L727.1 245.9 L727 247.1 L726.9 248.4 L726.8 249.6"/>
<path d="M1005.6 71.1 L1003 69.8 L1000.4 68.6 L997.8 67.3 L995.2 66.1 L992.5 64.8 L989.9 63.6 L987.4 62.3 L984.8 61.1 L982.2 59.9 L979.6 58.6 L977.1 57.4 L974.5 56.2 L972 55 L969.5 53.8 L967 52.6 L964.5 51.4 L962.1 50.3 L959.7 49.1 L957.4 48 L955.1 46.9 L952.9 45.8 L950.7 44.8 L948.7 43.7 L946.7 42.8 L945 41.9 L943.4 41 L942 40.2 M864.6 39.5 L867.6 38.9 L870.2 38.4 L872.4 38.1 L874.2 37.9 L875.6 37.9 L876.5 38 L877.1 38.3 L877.4 38.7 L877.4 39.3 L877.2 40 L876.8 40.7 L876.2 41.6 L875.5 42.5 L874.7 43.4 L873.9 44.4 L873 45.5 L872 46.5 L871 47.6 L870 48.8 L868.9 49.9 L867.8 51.1 L866.7 52.2 L865.6 53.4 L864.5 54.6 L863.3 55.8 L862.2 57 L861 58.2 L859.8 59.5 L858.7 60.7 L857.5 61.9 L856.3 63.2 L855.1 64.4 L853.9 65.7 L852.7 66.9 L851.5 68.2 L850.3 69.4 L849.1 70.7 L847.9 72 L846.7 73.2 L845.6 74.5 L844.4 75.7 L843.2 77 L842 78.3 L840.8 79.6 L839.6 80.8 L838.4 82.1 L837.2 83.4 L836 84.7 L834.9 85.9 L833.7 87.2 L832.5 88.5 L831.3 89.8 L830.1 91.1 L829 92.3 L827.8 93.6 L826.6 94.9 L825.5 96.2 L824.3 97.5 L823.2 98.8 L822 100.1 L820.9 101.3 L819.7 102.6 L818.6 103.9 L817.4 105.2 L816.3 106.5 L815.2 107.8 L814 109.1 L812.9 110.4 L811.8 111.6 L810.7 112.9 L809.6 114.2 L808.4 115.5 L807.3 116.8 L806.2 118.1 L805.1 119.4 L804.1 120.7 L803 122 L801.9 123.3 L800.8 124.6 L799.7 125.8 L798.7 127.1 L797.6 128.4 L796.5 129.7 L795.5 131 L794.4 132.3 L793.4 133.6 L792.4 134.9 L791.3 136.2 L790.3 137.5 L789.3 138.8 L788.3 140.1 L787.3 141.4 L786.2 142.7 L785.2 144 L784.2 145.2 L783.3 146.5 L782.3 147.8 L781.3 149.1 L780.3 150.4 L779.4 151.7 L778.4 153 L777.4 154.3 L776.5 155.6 L775.5 156.9 L774.6 158.2 L773.7 159.5 L772.7 160.8 L771.8 162.1 L770.9 163.4 L770 164.7 L769.1 166 L768.2 167.3 L767.3 168.6 L766.4 169.9 L765.6 171.2 L764.7 172.5 L763.8 173.8 L763 175 L762.1 176.3 L761.3 177.6 L760.5 178.9 L759.6 180.2 L758.8 181.5 L758 182.8 L757.2 184.1 L756.4 185.4 L755.6 186.7 L754.8 188 L754 189.3 L753.3 190.6 L752.5 191.9 L751.7 193.2 L751 194.5 L750.2 195.8 L749.5 197.1 L748.8 198.4 L748.1 199.7 L747.3 201 L746.6 202.3 L745.9 203.6 L745.2 204.9 L744.6 206.2 L743.9 207.5 L743.2 208.8 L742.6 210.1 L741.9 211.4 L741.3 212.7 L740.6 214 L740 215.3 L739.4 216.6 L738.8 217.9 L738.2 219.1 L737.6 220.4 L737 221.7 L736.4 223 L735.8 224.3 L735.2 225.6 L734.7 226.9 L734.1 228.2 L733.6 229.5 L733.1 230.8 L732.5 232.1 L732 233.4 L731.5 234.7 L731 236 L730.5 237.3 L730 238.6 L729.5 239.9 L729.1 241.2 L728.6 242.5 L728.2 243.8 L727.7 245.1 L727.3 246.4 L726.9 247.7 L726.5 249"/>
<path d="M1018.9 83.9 L1016.2 82.6 L1013.6 81.3 L1010.9 80 L1008.2 78.7 L1005.6 77.4 L1002.9 76.1 L1000.2 74.8 L997.5 73.5 L994.8 72.2 L992.1 70.9 L989.4 69.6 L986.7 68.3 L984 67 L981.2 65.7 L978.5 64.4 L975.8 63.1 L973.1 61.8 L970.3 60.5 L967.6 59.2 L964.9 57.9 L962.1 56.6 L959.4 55.3 L956.7 54 L953.9 52.7 L951.2 51.4 L948.4 50.1 L945.7 48.8 L942.9 47.6 L940.2 46.3 L937.4 45 L934.7 43.7 L931.9 42.4 L929.2 41.1 L926.5 39.8 L923.7 38.5 L921 37.3 L918.3 36 L915.6 34.8 L913 33.5 L910.4 32.3 L908 31.2 L905.7 30.3 L904 29.7 L902.7 29.7 L901.6 30.4 L900.4 31.4 L899.2 32.5 L898 33.7 L896.7 35 L895.5 36.2 L894.2 37.5 L892.9 38.7 L891.6 40 L890.3 41.3 L889 42.6 L887.7 43.9 L886.5 45.2 L885.2 46.5 L883.9 47.7 L882.6 49 L881.3 50.3 L880 51.6 L878.7 52.9 L877.4 54.2 L876.1 55.5 L874.8 56.8 L873.5 58.1 L872.2 59.4 L870.9 60.7 L869.7 62 L868.4 63.3 L867.1 64.6 L865.8 65.9 L864.5 67.2 L863.2 68.5 L862 69.8 L860.7 71.1 L859.4 72.4 L858.1 73.7 L856.9 75 L855.6 76.3 L854.3 77.6 L853.1 78.9 L851.8 80.2 L850.6 81.5 L849.3 82.8 L848.1 84.1 L846.8 85.4 L845.6 86.7 L844.3 88 L843.1 89.3 L841.8 90.6 L840.6 91.9 L839.4 93.2 L838.1 94.5 L836.9 95.8 L835.7 97.1 L834.5 98.4 L833.2 99.7 L832 101 L830.8 102.3 L829.6 103.6 L828.4 104.9 L827.2 106.2 L826 107.5 L824.8 108.8 L823.6 110.1 L822.4 111.4 L821.2 112.7 L820.1 114 L818.9 115.3 L817.7 116.6 L816.6 117.9 L815.4 119.2 L814.2 120.5 L813.1 121.8 L811.9 123.1 L810.8 124.4 L809.6 125.7 L808.5 127 L807.4 128.3 L806.3 129.6 L805.1 130.9 L804 132.2 L802.9 133.5 L801.8 134.8 L800.7 136.1 L799.6 137.4 L798.5 138.7 L797.4 140 L796.3 141.3 L795.3 142.6 L794.2 143.9 L793.1 145.2 L792 146.5 L791 147.8 L789.9 149.1 L788.9 150.4 L787.9 151.7 L786.8 153 L785.8 154.3 L784.8 155.6 L783.7 156.9 L782.7 158.2 L781.7 159.5 L780.7 160.8 L779.7 162.1 L778.7 163.4 L777.8 164.7 L776.8 166 L775.8 167.3 L774.9 168.6 L773.9 169.9 L772.9 171.2 L772 172.5 L771.1 173.8 L770.1 175.1 L769.2 176.4 L768.3 177.7 L767.4 179 L766.5 180.3 L765.6 181.7 L764.7 183 L763.8 184.3 L762.9 185.6 L762 186.9 L761.2 188.2 L760.3 189.5 L759.4 190.8 L758.6 192.1 L757.8 193.4 L756.9 194.7 L756.1 196 L755.3 197.3 L754.5 198.6 L753.7 199.9 L752.9 201.2 L752.1 202.5 L751.3 203.8 L750.5 205.1 L749.8 206.4 L749 207.7 L748.2 209 L747.5 210.3 L746.8 211.6 L746 212.9 L745.3 214.2 L744.6 215.5 L743.9 216.8 L743.2 218.1 L742.5 219.4 L741.8 220.7 L741.1 222 L740.5 223.3 L739.8 224.6 L739.2 225.9 L738.5 227.2 L737.9 228.5 L737.2 229.8 L736.6 231.1 L736 232.4 L735.4 233.7 L734.8 235 L734.2 236.3 L733.6 237.6 L733.1 238.9 L732.5 240.2 L732 241.5 L731.4 242.8 L730.9 244.1 L730.3 245.4 L729.8 246.7 L729.3 248 L728.8 249.3"/>
<path d="M947.8 84.4 L946.2 84 L944.7 83.6 L943.2 83.2 L941.7 82.9 L940.2 82.5 L938.8 82.2 L937.3 82 L935.9 81.7 L934.5 81.5 L933.1 81.4 L931.8 81.2 L930.4 81.1 L929.1 81 L927.7 81 L926.4 80.9 L925.1 80.9 L923.8 81 L922.6 81.1 L921.3 81.2 L920.1 81.3 L918.8 81.4 L917.6 81.6 L916.4 81.8 L915.2 82.1 L914 82.4 L912.8 82.7 L911.6 83 L910.4 83.4 L909.2 83.7 L908 84.2 L906.8 84.6 L905.6 85.1 L904.4 85.5 L903.3 86.1 L902.1 86.6 L900.9 87.1 L899.7 87.7 L898.6 88.3 L897.4 88.9 L896.2 89.6 L895 90.2 L893.8 90.9 L892.6 91.6 L891.4 92.3 L890.3 93.1 L889.1 93.8 L887.9 94.6 L886.7 95.4 L885.5 96.2 L884.2 97 L883 97.8 L881.8 98.6 L880.6 99.5 L879.4 100.4 L878.2 101.2 L876.9 102.1 L875.7 103 L874.5 103.9 L873.2 104.8 L872 105.8 L870.8 106.7 L869.5 107.7 L868.3 108.6 L867 109.6 L865.8 110.6 L864.5 111.5 L863.3 112.5 L862 113.5 L860.8 114.5 L859.5 115.5 L858.2 116.6 L857 117.6 L855.7 118.6 L854.4 119.7 L853.2 120.7 L851.9 121.8 L850.6 122.8 L849.4 123.9 L848.1 124.9 L846.8 126 L845.5 127.1 L844.3 128.2 L843 129.3 L841.7 130.4 L840.4 131.4 L839.2 132.5 L837.9 133.7 L836.6 134.8 L835.3 135.9 L834.1 137 L832.8 138.1 L831.5 139.2 L830.2 140.3 L829 141.5 L827.7 142.6 L826.4 143.7 L825.2 144.9 L823.9 146 L822.6 147.2 L821.4 148.3 L820.1 149.5 L818.8 150.6 L817.6 151.8 L816.3 152.9 L815.1 154.1 L813.8 155.2 L812.6 156.4 L811.3 157.6 L810.1 158.7 L808.8 159.9 L807.6 161.1 L806.3 162.2 L805.1 163.4 L803.9 164.6 L802.6 165.8 L801.4 166.9 L800.2 168.1 L798.9 169.3 L797.7 170.5 L796.5 171.7 L795.3 172.9 L794.1 174 L792.9 175.2 L791.7 176.4 L790.5 177.6 L789.3 178.8 L788.1 180 L786.9 181.2 L785.7 182.4 L784.6 183.6 L783.4 184.8 L782.2 186 L781 187.2 L779.9 188.4 L778.7 189.6 L777.6 190.8 L776.4 192 L775.3 193.2 L774.1 194.5 L773 195.7 L771.9 196.9 L770.8 198.1 L769.6 199.3 L768.5 200.5 L767.4 201.7 L766.3 202.9 L765.2 204.2 L764.1 205.4 L763 206.6 L762 207.8 L760.9 209 L759.8 210.3 L758.8 211.5 L757.7 212.7 L756.6 213.9 L755.6 215.1 L754.6 216.4 L753.5 217.6 L752.5 218.8 L751.5 220 L750.5 221.3 L749.5 222.5 L748.5 223.7 L747.5 225 L746.5 226.2 L745.5 227.4 L744.5 228.6 L743.5 229.9 L742.6 231.1 L741.6 232.3 L740.7 233.6 L739.7 234.8 L738.8 236 L737.9 237.3 L736.9 238.5 L736 239.7 L735.1 241 L734.2 242.2 L733.3 243.4 L732.4 244.7 L731.5 245.9 L730.7 247.1 L729.8 248.4 L728.9 249.6"/>
<path d="M924.4 96.7 L923.1 96.8 L921.9 96.9 L920.6 97.1 L919.4 97.3 L918.2 97.5 L916.9 97.7 L915.7 98 L914.5 98.2 L913.2 98.5 L912 98.8 L910.8 99.2 L909.6 99.5 L908.4 99.9 L907.2 100.3 L906 100.7 L904.8 101.1 L903.6 101.6 L902.3 102.1 L901.1 102.5 L899.9 103 L898.7 103.6 L897.5 104.1 L896.3 104.7 L895.1 105.3 L893.9 105.8 L892.7 106.5 L891.5 107.1 L890.3 107.7 L889 108.4 L887.8 109 L886.6 109.7 L885.4 110.4 L884.1 111.1 L882.9 111.9 L881.7 112.6 L880.5 113.3 L879.2 114.1 L878 114.9 L876.7 115.7 L875.5 116.5 L874.2 117.3 L873 118.1 L871.7 118.9 L870.5 119.7 L869.2 120.6 L868 121.4 L866.7 122.3 L865.5 123.2 L864.2 124.1 L862.9 125 L861.7 125.9 L860.4 126.8 L859.1 127.7 L857.8 128.6 L856.6 129.5 L855.3 130.5 L854 131.4 L852.7 132.4 L851.4 133.3 L850.2 134.3 L848.9 135.3 L847.6 136.2 L846.3 137.2 L845 138.2 L843.7 139.2 L842.4 140.2 L841.1 141.2 L839.8 142.2 L838.5 143.2 L837.2 144.3 L836 145.3 L834.7 146.3 L833.4 147.3 L832.1 148.4 L830.8 149.4 L829.5 150.5 L828.2 151.5 L826.9 152.6 L825.6 153.6 L824.3 154.7 L823 155.8 L821.7 156.8 L820.4 157.9 L819.1 159 L817.9 160.1 L816.6 161.1 L815.3 162.2 L814 163.3 L812.7 164.4 L811.4 165.5 L810.2 166.6 L808.9 167.7 L807.6 168.8 L806.3 169.9 L805.1 171 L803.8 172.1 L802.5 173.2 L801.3 174.4 L800 175.5 L798.7 176.6 L797.5 177.7 L796.2 178.9 L795 180 L793.7 181.1 L792.5 182.2 L791.2 183.4 L790 184.5 L788.7 185.6 L787.5 186.8 L786.3 187.9 L785 189.1 L783.8 190.2 L782.6 191.4 L781.4 192.5 L780.2 193.7 L779 194.8 L777.7 196 L776.5 197.1 L775.3 198.3 L774.2 199.4 L773 200.6 L771.8 201.7 L770.6 202.9 L769.4 204.1 L768.2 205.2 L767.1 206.4 L765.9 207.6 L764.8 208.7 L763.6 209.9 L762.5 211.1 L761.3 212.2 L760.2 213.4 L759 214.6 L757.9 215.8 L756.8 216.9 L755.7 218.1 L754.5 219.3 L753.4 220.5 L752.3 221.7 L751.2 222.8 L750.2 224 L749.1 225.2 L748 226.4 L746.9 227.6 L745.8 228.7 L744.8 229.9 L743.7 231.1 L742.7 232.3 L741.6 233.5 L740.6 234.7 L739.6 235.9 L738.5 237.1 L737.5 238.3 L736.5 239.4 L735.5 240.6 L734.5 241.8 L733.5 243 L732.5 244.2 L731.5 245.4 L730.6 246.6 L729.6 247.8 L728.6 249"/>
</g>
<g fill="none" stroke="#59d100" stroke-width="1.389" stroke-dasharray="1.389 2.292">
<path d="M606.1 145 L603.6 146.3 L601.2 147.5 L598.8 148.8 L596.4 150.1 L594 151.3 L591.6 152.6 L589.2 153.9 L586.8 155.2 L584.5 156.4 L582.1 157.7 L579.8 159 L577.5 160.2 L575.2 161.5 L572.9 162.8 L570.7 164.1 L568.4 165.3 L566.2 166.6 L564 167.9 L561.8 169.2 L559.6 170.4 L557.4 171.7 L555.3 173 L553.1 174.3 L551 175.6 L548.9 176.8 L546.8 178.1 L544.7 179.4 L542.6 180.7 L540.6 181.9 L538.6 183.2 L536.5 184.5 L534.5 185.8 L532.6 187.1 L530.6 188.3 L528.7 189.6 L526.7 190.9 L524.8 192.2 L522.9 193.5 L521.1 194.8 L519.2 196 L517.4 197.3 L515.5 198.6 L513.7 199.9 L511.9 201.2 L510.2 202.4 L508.4 203.7 L506.7 205 L505 206.3 L503.3 207.6 L501.6 208.9 L499.9 210.1 L498.3 211.4 L496.7 212.7 L495.1 214 L493.5 215.3 L491.9 216.6 L490.4 217.9 L488.9 219.1 L487.4 220.4 L485.9 221.7 L484.4 223 L483 224.3 L481.5 225.6 L480.1 226.9 L478.8 228.1 L477.4 229.4 L476 230.7 L474.7 232 L473.4 233.3 L472.1 234.6 L470.9 235.9 L469.6 237.1 L468.4 238.4 L467.2 239.7 L466 241"/>
<path d="M932.2 78.3 L931.5 77 L930.8 75.7 L930.1 74.4 L929.4 73.1 L928.6 71.8 L927.9 70.5 L927.2 69.2 L926.5 67.9 L925.8 66.6 L925.1 65.3 L924.3 64 L923.6 62.7 L922.9 61.4 L922.2 60.1 L921.4 58.8 L920.7 57.5 L920 56.2 L919.3 54.9 L918.5 53.6 L917.8 52.3 L917.1 51 L916.4 49.7 L915.6 48.4 L914.9 47.1 L914.2 45.8 L913.4 44.5 L912.7 43.2 L912 42 L911.2 40.7 L910.5 39.4 L909.8 38.1 L909.1 36.8 L908.3 35.5 L907.6 34.3 L906.9 33 L906.2 31.8 L905.6 30.6 L905.1 29.6 L905.3 29 L907.4 29.3 L911.1 30.2 M890.1 31.4 L887 32.6 L883.8 33.9 L880.5 35.1 L877.2 36.4 L873.9 37.7 L870.6 39 L867.3 40.3 L864 41.5 L860.7 42.8 L857.4 44.1 L854.1 45.4 L850.8 46.7 L847.4 48 L844.1 49.3 L840.8 50.6 L837.5 51.9 L834.2 53.2 L830.9 54.5 L827.6 55.8 L824.3 57.1 L821 58.4 L817.7 59.7 L814.4 61 L811.1 62.3 L807.9 63.6 L804.6 64.9 L801.3 66.2 L798 67.5 L794.8 68.8 L791.5 70.1 L788.3 71.4 L785 72.7 L781.8 74 L778.5 75.3 L775.3 76.6 L772.1 77.9 L768.9 79.2 L765.7 80.5 L762.5 81.8 L759.3 83.1 L756.1 84.4 L752.9 85.7 L749.7 87 L746.5 88.3 L743.4 89.6 L740.2 90.9 L737.1 92.2 L733.9 93.5 L730.8 94.8 L727.7 96.1 L724.6 97.4 L721.5 98.7 L718.4 100 L715.3 101.3 L712.2 102.6 L709.1 103.9 L706.1 105.2 L703 106.5 L700 107.8 L697 109.1 L693.9 110.4 L690.9 111.7 L687.9 113 L684.9 114.3 L682 115.6 L679 116.9 L676 118.2 L673.1 119.5 L670.2 120.8 L667.2 122.1 L664.3 123.4 L661.4 124.7 L658.5 126 L655.7 127.3 L652.8 128.6 L649.9 129.9 L647.1 131.2 L644.3 132.5 L641.4 133.8 L638.6 135.1 L635.9 136.4 L633.1 137.7 L630.3 139 L627.6 140.3 L624.8 141.6 L622.1 142.9 L619.4 144.2 L616.7 145.5 L614 146.8 L611.3 148.1 L608.7 149.4 L606 150.7 L603.4 152 L600.8 153.3 L598.2 154.6 L595.6 155.9 L593 157.2 L590.5 158.5 L588 159.8 L585.4 161.1 L582.9 162.4 L580.4 163.7 L578 165 L575.5 166.3 L573 167.6 L570.6 168.9 L568.2 170.2 L565.8 171.5 L563.4 172.8 L561.1 174.1 L558.7 175.4 L556.4 176.7 L554.1 178 L551.8 179.3 L549.5 180.6 L547.2 181.9 L545 183.2 L542.8 184.5 L540.5 185.8 L538.4 187.1 L536.2 188.4 L534 189.7 L531.9 191 L529.8 192.3 L527.7 193.6 L525.6 194.9 L523.5 196.2 L521.4 197.5 L519.4 198.8 L517.4 200.1 L515.4 201.4 L513.4 202.7 L511.5 204 L509.5 205.3 L507.6 206.6 L505.7 207.9 L503.9 209.2 L502 210.5 L500.2 211.8 L498.3 213.1 L496.5 214.4 L494.7 215.7 L493 217 L491.2 218.3 L489.5 219.6 L487.8 220.9 L486.1 222.2 L484.5 223.5 L482.8 224.8 L481.2 226.1 L479.6 227.4 L478 228.7 L476.5 230 L474.9 231.3 L473.4 232.6 L471.9 233.9 L470.4 235.2 L469 236.5 L467.6 237.8 L466.1 239.1 L464.7 240.4 L463.4 241.7 L462 243 L460.7 244.3"/>
<path d="M1241.7 150.2 L1244.3 150.8 L1246.9 151.5 L1249.6 152.1 L1252.3 152.8 L1254.9 153.4 L1257.6 154.1 L1260.3 154.8 L1263.1 155.5 L1265.8 156.1 L1268.6 156.8 L1271.3 157.6 L1274.1 158.3 L1276.9 159 L1279.7 159.7 L1282.5 160.5 L1285.3 161.2 L1288.2 162 L1291 162.7 M512.4 163.5 L511.7 164.3 L510.9 165 L510.1 165.8 L509.4 166.6 L508.6 167.4 L507.8 168.2 L507 169 L506.2 169.9 L505.4 170.7 L504.6 171.5 L503.8 172.3 L502.9 173.2 L502.1 174 L501.3 174.9 L500.5 175.7 L499.6 176.6 L498.8 177.4 L498 178.3 L497.1 179.2 L496.3 180.1 L495.5 180.9 L494.6 181.8 L493.8 182.7 L493 183.6 L492.1 184.5 L491.3 185.4 L490.5 186.3 L489.6 187.2 L488.8 188.2 L488 189.1 L487.2 190 L486.4 190.9 L485.5 191.9 L484.7 192.8 L483.9 193.7 L483.1 194.7 L482.3 195.6 L481.5 196.6 L480.8 197.5 L480 198.5 L479.2 199.4 L478.4 200.4 L477.7 201.4 L476.9 202.3 L476.2 203.3 L475.4 204.3 L474.7 205.3 L473.9 206.2 L473.2 207.2 L472.5 208.2 L471.8 209.2 L471.1 210.2 L470.4 211.2 L469.7 212.2 L469.1 213.2 L468.4 214.2 L467.7 215.2 L467.1 216.2 L466.5 217.2 L465.8 218.2 L465.2 219.2 L464.6 220.2 L464 221.2 L463.4 222.3 L462.8 223.3 L462.3 224.3 L461.7 225.3 L461.2 226.4 L460.6 227.4 L460.1 228.4 L459.6 229.4 L459.1 230.5 L458.6 231.5 L458.1 232.5 L457.7 233.6 L457.2 234.6 L456.8 235.7 L456.3 236.7 L455.9 237.8 L455.5 238.8 L455.1 239.8 L454.7 240.9 L454.4 241.9 L454 243"/>
<path d="M1201.7 155 L1203.5 155.3 L1205.3 155.5 L1207.1 155.8 L1208.9 156.1 L1210.7 156.4 L1212.6 156.7 L1214.5 157 L1216.4 157.3 L1218.3 157.6 L1220.3 158 L1222.2 158.3 L1224.2 158.7 L1226.2 159.1 L1228.2 159.4 L1230.3 159.8 L1232.3 160.2 L1234.4 160.7 L1236.5 161.1 L1238.6 161.5 L1240.7 161.9 L1242.9 162.4 L1245 162.8 L1247.2 163.3 L1249.4 163.8 L1251.6 164.3 L1253.8 164.8 L1256.1 165.3 L1258.3 165.8 L1260.6 166.3 L1262.9 166.8 L1265.2 167.3 L1267.5 167.9 L1269.8 168.4 L1272.2 169 L1274.5 169.6 L1276.9 170.1 L1279.2 170.7 L1281.6 171.3 L1284 171.9 L1286.4 172.5 L1288.8 173.1 L1291.3 173.7 L1293.7 174.3 L1296.2 175 L1298.6 175.6 L1301.1 176.3 L1303.6 176.9 L1306.1 177.6 L1308.6 178.2 L1311.1 178.9 L1313.6 179.6 L1316.1 180.3 L1318.6 180.9 L1321.1 181.6 L1323.7 182.3 L1326.2 183 L1328.8 183.8 L1331.3 184.5 L1333.9 185.2 L1336.5 185.9 L1339 186.7 L1341.6 187.4 L1344.2 188.1 L1346.8 188.9 L1349.4 189.6 M453 190.4 L452.5 191.2 L452.1 191.9 L451.6 192.7 L451.1 193.5 L450.6 194.3 L450.1 195.1 L449.6 195.9 L449.1 196.7 L448.6 197.5 L448.1 198.3 L447.6 199.1 L447.1 199.9 L446.6 200.7 L446.1 201.5 L445.6 202.4 L445.2 203.2 L444.7 204 L444.2 204.9 L443.7 205.7 L443.2 206.5 L442.8 207.4 L442.3 208.2 L441.8 209.1 L441.4 210 L440.9 210.8 L440.5 211.7 L440 212.6 L439.6 213.4 L439.1 214.3 L438.7 215.2 L438.3 216.1 L437.8 217 L437.4 217.8 L437 218.7 L436.6 219.6 L436.2 220.5 L435.8 221.4 L435.4 222.3 L435.1 223.2 L434.7 224.1 L434.3 225.1 L434 226 L433.6 226.9 L433.3 227.8 L433 228.7 L432.6 229.6 L432.3 230.6 L432 231.5 L431.7 232.4 L431.4 233.4 L431.2 234.3 L430.9 235.2 L430.6 236.2 L430.4 237.1 L430.1 238 L429.9 239 L429.7 239.9 L429.5 240.9 L429.3 241.8 L429.1 242.8 L428.9 243.7 L428.7 244.7 L428.5 245.7 L428.4 246.6 L428.3 247.6 L428.1 248.5 L428 249.5 L427.9 250.5 L427.8 251.4 L427.7 252.4 L427.7 253.4 L427.6 254.4 L427.5 255.3 L427.5 256.3"/>
<path d="M1282.2 164.4 L1284.7 165 L1287.2 165.6 L1289.8 166.2 L1292.3 166.9 L1294.9 167.5 L1297.5 168.2 L1300.1 168.8 L1302.7 169.5 L1305.3 170.1 L1307.9 170.8 L1310.5 171.5 M491.9 172.2 L491.5 172.9 L491 173.6 L490.5 174.3 L490.1 175 L489.6 175.7 L489.1 176.4 L488.6 177.1 L488.1 177.9 L487.6 178.6 L487.1 179.4 L486.5 180.1 L486 180.9 L485.5 181.6 L485 182.4 L484.4 183.2 L483.9 184 L483.3 184.8 L482.8 185.5 L482.2 186.3 L481.7 187.1 L481.1 187.9 L480.6 188.8 L480 189.6 L479.5 190.4 L478.9 191.2 L478.4 192 L477.8 192.9 L477.3 193.7 L476.7 194.5 L476.1 195.4 L475.6 196.2 L475 197.1 L474.5 197.9 L474 198.8 L473.4 199.7 L472.9 200.5 L472.3 201.4 L471.8 202.3 L471.3 203.2 L470.7 204 L470.2 204.9 L469.7 205.8 L469.2 206.7 L468.7 207.6 L468.2 208.5 L467.7 209.4 L467.2 210.3 L466.7 211.2 L466.2 212.1 L465.7 213 L465.3 214 L464.8 214.9 L464.3 215.8 L463.9 216.7 L463.4 217.7 L463 218.6 L462.6 219.5 L462.1 220.5 L461.7 221.4 L461.3 222.3 L460.9 223.3 L460.5 224.2 L460.1 225.2 L459.8 226.1 L459.4 227.1 L459 228 L458.7 229 L458.4 229.9 L458 230.9 L457.7 231.9 L457.4 232.8 L457.1 233.8 L456.8 234.8 L456.5 235.7 L456.2 236.7 L456 237.7 L455.7 238.7 L455.5 239.7 L455.2 240.6 L455 241.6 L454.8 242.6"/>
<path d="M1327.2 192.8 L1329.3 193.3 L1331.4 193.7 L1333.4 194.2 L1335.5 194.7 L1337.6 195.2 L1339.8 195.7 L1341.9 196.2 L1344 196.7 L1346.1 197.2 L1348.3 197.7 L1350.4 198.3 L1352.6 198.8 L1354.8 199.3 L1356.9 199.9 L1359.1 200.4 L1361.3 201 L1363.5 201.6 L1365.7 202.1 L1367.9 202.7 L1370.1 203.3 L1372.3 203.9 L1374.5 204.4 L1376.7 205 L1378.9 205.6 L1381.2 206.2 M421.8 206.8 L421.8 207.5 L421.9 208.1 L421.9 208.7 L421.9 209.3 L422 209.9 L422 210.6 L422 211.2 L422 211.9 L422.1 212.5 L422.1 213.2 L422.1 213.8 L422.1 214.5 L422.1 215.1 L422.2 215.8 L422.2 216.5 L422.2 217.2 L422.2 217.8 L422.2 218.5 L422.2 219.2 L422.3 219.9 L422.3 220.6 L422.3 221.3 L422.3 222 L422.3 222.7 L422.4 223.4 L422.4 224.2 L422.4 224.9 L422.5 225.6 L422.5 226.3 L422.5 227.1 L422.6 227.8 L422.6 228.5 L422.6 229.3 L422.7 230 L422.7 230.7 L422.8 231.5 L422.9 232.2 L422.9 233 L423 233.8 L423.1 234.5 L423.1 235.3 L423.2 236 L423.3 236.8 L423.4 237.6 L423.5 238.4 L423.6 239.1 L423.7 239.9 L423.8 240.7 L423.9 241.5 L424 242.3 L424.1 243.1 L424.3 243.8 L424.4 244.6 L424.5 245.4 L424.7 246.2 L424.8 247 L425 247.8 L425.2 248.7 L425.4 249.5 L425.5 250.3 L425.7 251.1 L425.9 251.9 L426.1 252.7 L426.3 253.5 L426.5 254.4 L426.8 255.2 L427 256"/>
<path d="M1336.1 192 L1338.3 192.6 L1340.6 193.1 L1342.9 193.7 L1345.1 194.3 L1347.4 194.9 L1349.7 195.5 L1352 196.1 L1354.3 196.7 L1356.6 197.3 L1358.9 197.9 L1361.2 198.6 L1363.5 199.2 L1365.8 199.8 L1368.1 200.5 L1370.5 201.1 L1372.8 201.8 M429.7 202.4 L429.6 203.1 L429.4 203.7 L429.3 204.4 L429.2 205.1 L429.1 205.8 L429 206.5 L428.9 207.1 L428.7 207.8 L428.6 208.5 L428.5 209.2 L428.4 209.9 L428.2 210.6 L428.1 211.4 L428 212.1 L427.8 212.8 L427.7 213.5 L427.6 214.3 L427.5 215 L427.4 215.7 L427.2 216.5 L427.1 217.2 L427 218 L426.9 218.7 L426.8 219.5 L426.7 220.2 L426.5 221 L426.4 221.8 L426.3 222.5 L426.2 223.3 L426.1 224.1 L426 224.9 L426 225.6 L425.9 226.4 L425.8 227.2 L425.7 228 L425.6 228.8 L425.6 229.6 L425.5 230.4 L425.5 231.2 L425.4 232 L425.4 232.8 L425.3 233.6 L425.3 234.5 L425.3 235.3 L425.2 236.1 L425.2 236.9 L425.2 237.7 L425.2 238.6 L425.2 239.4 L425.2 240.2 L425.2 241.1 L425.2 241.9 L425.3 242.7 L425.3 243.6 L425.3 244.4 L425.4 245.3 L425.4 246.1 L425.5 247 L425.6 247.8 L425.7 248.7 L425.8 249.5 L425.8 250.4 L426 251.3 L426.1 252.1 L426.2 253 L426.3 253.9 L426.5 254.7 L426.6 255.6"/>
</g>
<g fill="none" stroke="#00fa72" stroke-width="1.389" stroke-dasharray="1.389 2.292">
<path d="M780.6 79.8 L783.1 79.2 L785.6 78.6 L788.1 78 L790.5 77.4 L792.8 76.9 L795.1 76.4 L797.3 76 L799.4 75.5 L801.5 75.1 L803.5 74.7 L805.4 74.4 L807.3 74.1 L809.1 73.8 L810.9 73.6 L812.6 73.4 L814.2 73.2 L815.7 73.1 L817.2 73 L818.6 72.9 L819.9 72.9 L821.2 72.9 L822.4 72.9 L823.6 73 L824.7 73.2 L825.7 73.3 L826.7 73.5 L827.6 73.7 L828.5 74 L829.3 74.3 L830.1 74.6 L830.8 75 L831.5 75.4 L832.1 75.8 L832.7 76.2 L833.2 76.7 L833.7 77.2 L834.2 77.8 L834.6 78.3 L835 78.9 L835.4 79.6 L835.7 80.2 L836.1 80.9 L836.3 81.5 L836.6 82.3 L836.8 83 L837.1 83.7 L837.3 84.5 L837.4 85.3 L837.6 86.1 L837.7 86.9 L837.9 87.8 L838 88.6 L838.1 89.5 L838.2 90.4 L838.2 91.3 L838.3 92.2 L838.4 93.1 L838.4 94 L838.4 95 L838.5 95.9 L838.5 96.9 L838.5 97.9 L838.5 98.9 L838.5 99.9 L838.5 100.9 L838.5 101.9 L838.5 102.9 L838.4 104 L838.4 105 L838.4 106 L838.3 107.1 L838.3 108.2 L838.3 109.2 L838.2 110.3 L838.2 111.4 L838.1 112.5 L838.1 113.6 L838 114.7 L838 115.8 L837.9 116.9 L837.9 118 L837.8 119.1 L837.8 120.2 L837.7 121.3 L837.7 122.5 L837.6 123.6 L837.6 124.7 L837.5 125.9 L837.5 127 L837.4 128.2 L837.4 129.3 L837.3 130.5 L837.2 131.6 L837.2 132.8 L837.1 133.9 L837.1 135.1 L837.1 136.3 L837 137.5 L837 138.6 L836.9 139.8 L836.9 141 L836.8 142.2 L836.8 143.3 L836.8 144.5 L836.7 145.7 L836.7 146.9 L836.7 148.1 L836.6 149.3 L836.6 150.5 L836.6 151.7 L836.5 152.9 L836.5 154.1 L836.5 155.3 L836.5 156.5 L836.5 157.7 L836.4 158.9 L836.4 160.1 L836.4 161.3 L836.4 162.5 L836.4 163.8 L836.4 165 L836.4 166.2 L836.4 167.4 L836.4 168.6 L836.4 169.8 L836.4 171.1 L836.4 172.3 L836.4 173.5 L836.5 174.7 L836.5 175.9 L836.5 177.2 L836.5 178.4 L836.5 179.6 L836.6 180.9 L836.6 182.1 L836.6 183.3 L836.7 184.5 L836.7 185.8 L836.7 187 L836.8 188.2 L836.8 189.5 L836.9 190.7 L836.9 191.9 L837 193.2 L837 194.4 L837.1 195.7 L837.2 196.9 L837.2 198.1 L837.3 199.4 L837.4 200.6 L837.4 201.9 L837.5 203.1 L837.6 204.3 L837.7 205.6 L837.7 206.8 L837.8 208.1 L837.9 209.3 L838 210.6 L838.1 211.8 L838.2 213.1 L838.3 214.3 L838.4 215.6 L838.5 216.8"/>
<path d="M852.2 50.2 L853.7 50.1 L855.1 50.1 L856.3 50.1 L857.4 50.2 L858.3 50.4 L859.1 50.6 L859.8 51 L860.4 51.3 L860.8 51.8 L861.2 52.3 L861.4 52.9 L861.6 53.5 L861.7 54.1 L861.8 54.9 L861.7 55.6 L861.7 56.4 L861.5 57.2 L861.4 58.1 L861.2 59 L860.9 59.9 L860.7 60.8 L860.4 61.8 L860.1 62.8 L859.7 63.8 L859.4 64.8 L859 65.8 L858.6 66.9 L858.2 67.9 L857.8 69 L857.3 70.1 L856.9 71.2 L856.4 72.3 L856 73.4 L855.5 74.6 L855 75.7 L854.6 76.9 L854.1 78 L853.6 79.2 L853.1 80.3 L852.6 81.5 L852.1 82.7 L851.6 83.9 L851.1 85.1 L850.6 86.2 L850.1 87.4 L849.6 88.6 L849.1 89.8 L848.6 91 L848.1 92.3 L847.6 93.5 L847.1 94.7 L846.6 95.9 L846.1 97.1 L845.6 98.4 L845.1 99.6 L844.6 100.8 L844.1 102 L843.6 103.3 L843.1 104.5 L842.6 105.8 L842.1 107 L841.6 108.2 L841.1 109.5 L840.6 110.7 L840.1 112 L839.6 113.2 L839.1 114.5 L838.6 115.7 L838.2 117 L837.7 118.2 L837.2 119.5 L836.7 120.7 L836.2 122 L835.8 123.2 L835.3 124.5 L834.8 125.7 L834.4 127 L833.9 128.3 L833.4 129.5 L833 130.8 L832.5 132.1 L832.1 133.3 L831.6 134.6 L831.2 135.8 L830.7 137.1 L830.3 138.4 L829.9 139.6 L829.4 140.9 L829 142.2 L828.6 143.4 L828.1 144.7 L827.7 146 L827.3 147.3 L826.9 148.5 L826.5 149.8 L826.1 151.1 L825.7 152.3 L825.3 153.6 L824.9 154.9 L824.5 156.2 L824.1 157.4 L823.7 158.7 L823.3 160 L822.9 161.3 L822.5 162.5 L822.2 163.8 L821.8 165.1 L821.4 166.4 L821.1 167.6 L820.7 168.9 L820.3 170.2 L820 171.5 L819.6 172.7 L819.3 174 L818.9 175.3 L818.6 176.6 L818.3 177.9 L817.9 179.1 L817.6 180.4 L817.3 181.7 L817 183 L816.7 184.3 L816.3 185.5 L816 186.8 L815.7 188.1 L815.4 189.4 L815.1 190.7 L814.8 191.9 L814.6 193.2 L814.3 194.5 L814 195.8 L813.7 197.1 L813.5 198.3 L813.2 199.6 L812.9 200.9 L812.7 202.2 L812.4 203.5 L812.2 204.8 L811.9 206 L811.7 207.3 L811.4 208.6 L811.2 209.9 L811 211.2 L810.7 212.4 L810.5 213.7 L810.3 215 L810.1 216.3"/>
<path d="M937.8 57.6 L936.2 57.3 L934.7 57.1 L933.3 57 L931.9 56.9 L930.6 56.9 L929.3 56.9 L928.1 57 L926.9 57.1 L925.8 57.3 L924.7 57.5 L923.7 57.8 L922.7 58.2 L921.7 58.6 L920.7 59 L919.8 59.5 L918.9 60.1 L918 60.6 L917.2 61.2 L916.3 61.9 L915.5 62.6 L914.7 63.3 L913.9 64 L913.1 64.8 L912.3 65.6 L911.5 66.5 L910.7 67.3 L910 68.2 L909.2 69.1 L908.4 70 L907.7 71 L906.9 71.9 L906.2 72.9 L905.4 73.9 L904.6 74.9 L903.9 75.9 L903.1 76.9 L902.4 78 L901.6 79 L900.9 80.1 L900.1 81.2 L899.4 82.2 L898.6 83.3 L897.8 84.4 L897.1 85.5 L896.3 86.6 L895.6 87.8 L894.8 88.9 L894 90 L893.3 91.2 L892.5 92.3 L891.8 93.5 L891 94.6 L890.2 95.8 L889.5 96.9 L888.7 98.1 L888 99.3 L887.2 100.5 L886.4 101.6 L885.7 102.8 L884.9 104 L884.2 105.2 L883.4 106.4 L882.6 107.6 L881.9 108.8 L881.1 110 L880.4 111.2 L879.6 112.4 L878.8 113.6 L878.1 114.8 L877.3 116 L876.6 117.2 L875.8 118.5 L875 119.7 L874.3 120.9 L873.5 122.1 L872.8 123.3 L872 124.6 L871.3 125.8 L870.5 127 L869.8 128.3 L869 129.5 L868.3 130.7 L867.5 132 L866.8 133.2 L866 134.4 L865.3 135.7 L864.5 136.9 L863.8 138.2 L863 139.4 L862.3 140.6 L861.6 141.9 L860.8 143.1 L860.1 144.4 L859.4 145.6 L858.6 146.9 L857.9 148.1 L857.2 149.4 L856.4 150.6 L855.7 151.9 L855 153.1 L854.3 154.4 L853.5 155.6 L852.8 156.9 L852.1 158.1 L851.4 159.4 L850.7 160.6 L850 161.9 L849.3 163.2 L848.6 164.4 L847.9 165.7 L847.2 166.9 L846.5 168.2 L845.8 169.4 L845.1 170.7 L844.4 172 L843.7 173.2 L843 174.5 L842.3 175.7 L841.7 177 L841 178.3 L840.3 179.5 L839.6 180.8 L839 182.1 L838.3 183.3 L837.6 184.6 L837 185.9 L836.3 187.1 L835.7 188.4 L835 189.7 L834.4 190.9 L833.7 192.2 L833.1 193.4 L832.4 194.7 L831.8 196 L831.2 197.3 L830.5 198.5 L829.9 199.8 L829.3 201.1 L828.7 202.3 L828 203.6 L827.4 204.9 L826.8 206.1 L826.2 207.4"/>
<path d="M1151.7 143.9 L1149 142.7 L1146.2 141.5 L1143.5 140.3 L1140.7 139.1 L1138 137.9 L1135.2 136.7 L1132.5 135.6 L1129.7 134.4 L1126.9 133.2 L1124.1 132 L1121.3 130.8 L1118.6 129.7 L1115.8 128.5 L1113 127.3 L1110.2 126.2 L1107.4 125 L1104.6 123.9 L1101.8 122.7 L1099 121.6 L1096.2 120.4 L1093.4 119.3 L1090.6 118.1 L1087.8 117 L1085 115.9 L1082.2 114.7 L1079.4 113.6 L1076.6 112.5 L1073.8 111.4 L1071 110.3 L1068.2 109.2 L1065.4 108.1 L1062.7 107 L1059.9 105.9 L1057.1 104.8 L1054.4 103.8 L1051.6 102.7 L1048.9 101.6 L1046.2 100.6 L1043.5 99.5 L1040.8 98.5 L1038.1 97.5 L1035.4 96.5 L1032.7 95.4 L1030 94.5 L1027.4 93.5 L1024.8 92.5 L1022.2 91.5 L1019.6 90.6 L1017 89.6 L1014.4 88.7 L1011.9 87.8 L1009.4 86.9 L1006.9 86 L1004.4 85.1 L1002 84.2 L999.6 83.4 L997.2 82.6 L994.8 81.8 L992.5 81 L990.2 80.2 L987.9 79.4 L985.7 78.7 L983.5 78 L981.3 77.3 L979.2 76.7 L977.1 76 L975 75.4 L973 74.9 L971 74.3 L969.1 73.8 L967.2 73.3 L965.3 72.8 L963.5 72.4 L961.8 72 L960 71.6 L958.4 71.3 L956.7 71 L955.2 70.8 L953.6 70.6 L952.1 70.4 L950.7 70.2 L949.3 70.1 L947.9 70.1 L946.6 70 L945.3 70 L944 70.1 L942.8 70.2 L941.6 70.3 L940.5 70.5 L939.4 70.7 L938.3 70.9 L937.3 71.2 L936.3 71.5 L935.3 71.9 L934.3 72.3 L933.3 72.7 L932.4 73.1 L931.5 73.6 L930.6 74.1 L929.8 74.7 L928.9 75.2 L928.1 75.8 L927.3 76.4 L926.5 77.1 L925.7 77.8 L924.9 78.5 L924.1 79.2 L923.3 79.9 L922.6 80.7 L921.8 81.5 L921.1 82.3 L920.3 83.1 L919.6 83.9 L918.9 84.8 L918.1 85.7 L917.4 86.5 L916.7 87.4 L916 88.4 L915.3 89.3 L914.5 90.2 L913.8 91.2 L913.1 92.1 L912.4 93.1 L911.7 94.1 L911 95.1 L910.3 96.1 L909.6 97.1 L908.9 98.1 L908.2 99.2 L907.5 100.2 L906.8 101.3 L906.1 102.3 L905.4 103.4 L904.7 104.4 L904 105.5 L903.3 106.6 L902.6 107.7 L901.9 108.8 L901.2 109.9 L900.5 111 L899.8 112.1 L899.1 113.2 L898.4 114.3 L897.7 115.5 L897 116.6 L896.3 117.7 L895.6 118.9 L894.9 120 L894.2 121.1 L893.5 122.3 L892.8 123.4 L892.1 124.6 L891.4 125.8 L890.7 126.9 L890 128.1 L889.3 129.3 L888.6 130.4 L887.9 131.6 L887.2 132.8 L886.5 134 L885.8 135.1 L885.1 136.3 L884.4 137.5 L883.7 138.7 L883 139.9 L882.3 141.1 L881.6 142.3 L880.9 143.5 L880.2 144.7 L879.5 145.9 L878.8 147.1 L878.2 148.3 L877.5 149.5 L876.8 150.7 L876.1 151.9 L875.4 153.1 L874.7 154.3 L874 155.5 L873.3 156.7 L872.6 158 L872 159.2 L871.3 160.4 L870.6 161.6 L869.9 162.8 L869.2 164.1 L868.5 165.3 L867.9 166.5 L867.2 167.7 L866.5 169 L865.8 170.2 L865.2 171.4 L864.5 172.7 L863.8 173.9 L863.2 175.1 L862.5 176.3 L861.8 177.6 L861.2 178.8 L860.5 180 L859.8 181.3 L859.2 182.5 L858.5 183.8 L857.9 185 L857.2 186.2 L856.6 187.5 L855.9 188.7 L855.3 190 L854.6 191.2 L854 192.4 L853.3 193.7 L852.7 194.9 L852 196.2 L851.4 197.4 L850.8 198.7 L850.1 199.9 L849.5 201.2 L848.9 202.4 L848.3 203.7 L847.6 204.9 L847 206.2 L846.4 207.4"/>
</g>
<g fill="none" stroke="#ec84ee" stroke-width="1.389" stroke-dasharray="1.389 2.292">
<path d="M1060.6 116.7 L1058.1 115.5 L1055.7 114.3 L1053.2 113.2 L1050.7 112 L1048.2 110.8 L1045.8 109.7 L1043.3 108.5 L1040.8 107.3 L1038.4 106.2 L1035.9 105 L1033.4 103.9 L1031 102.7 L1028.5 101.6 L1026 100.5 L1023.6 99.4 L1021.1 98.2 L1018.7 97.1 L1016.3 96 L1013.8 94.9 L1011.4 93.8 L1009 92.7 L1006.6 91.7 L1004.2 90.6 L1001.8 89.5 L999.4 88.5 L997 87.4 L994.7 86.4 L992.3 85.4 L990 84.3 L987.7 83.3 L985.4 82.4 L983.1 81.4 L980.8 80.4 L978.6 79.5 L976.3 78.5 L974.1 77.6 L971.9 76.7 L969.8 75.8 L967.6 74.9 L965.5 74.1 L963.4 73.3 L961.4 72.5 L959.3 71.7 L957.3 70.9 L955.3 70.2 L953.4 69.5 L951.5 68.8 L949.6 68.1 L947.8 67.5 L946 66.9 L944.2 66.4 L942.5 65.9 L940.8 65.4 L939.1 64.9 L937.5 64.5 L935.9 64.2 L934.4 63.9 L932.9 63.6 L931.4 63.4 L930 63.2 L928.6 63 L927.2 62.9 L925.9 62.9 L924.6 62.9 L923.3 62.9 L922.1 63 L920.8 63.2 L919.7 63.3 L918.5 63.6 L917.3 63.8 L916.2 64.2 L915.1 64.5 L914 64.9 L912.9 65.3 L911.8 65.8 L910.7 66.3 L909.7 66.9 L908.6 67.5 L907.5 68.1 L906.5 68.7 L905.5 69.4 L904.4 70.1 L903.4 70.8 L902.3 71.6 L901.3 72.4 L900.2 73.2 L899.2 74 L898.2 74.9 L897.1 75.7 L896.1 76.6 L895 77.5 L894 78.4 L892.9 79.4 L891.9 80.3 L890.8 81.3 L889.7 82.3 L888.7 83.2 L887.6 84.2 L886.5 85.3 L885.5 86.3 L884.4 87.3 L883.3 88.4 L882.2 89.4 L881.2 90.5 L880.1 91.6 L879 92.6 L877.9 93.7 L876.8 94.8 L875.7 95.9 L874.7 97 L873.6 98.1 L872.5 99.2 L871.4 100.4 L870.3 101.5 L869.2 102.6 L868.1 103.8 L867 104.9 L865.9 106.1 L864.8 107.2 L863.7 108.4 L862.6 109.5 L861.5 110.7 L860.4 111.9 L859.3 113 L858.2 114.2 L857.1 115.4 L856 116.6 L854.9 117.8 L853.8 119 L852.7 120.1 L851.6 121.3 L850.5 122.5 L849.4 123.7 L848.4 124.9 L847.3 126.1 L846.2 127.3 L845.1 128.5 L844 129.8 L842.9 131 L841.8 132.2 L840.7 133.4 L839.7 134.6 L838.6 135.8 L837.5 137 L836.4 138.3 L835.4 139.5 L834.3 140.7 L833.2 141.9 L832.1 143.2 L831.1 144.4 L830 145.6 L829 146.9 L827.9 148.1 L826.8 149.3 L825.8 150.6 L824.7 151.8 L823.7 153 L822.7 154.3 L821.6 155.5 L820.6 156.7 L819.5 158 L818.5 159.2 L817.5 160.5 L816.5 161.7 L815.4 162.9 L814.4 164.2 L813.4 165.4 L812.4 166.7 L811.4 167.9 L810.4 169.2 L809.4 170.4 L808.4 171.7 L807.4 172.9 L806.4 174.2 L805.4 175.4 L804.4 176.7 L803.5 177.9 L802.5 179.2 L801.5 180.4 L800.6 181.7 L799.6 182.9 L798.6 184.2 L797.7 185.5 L796.7 186.7 L795.8 188 L794.9 189.2 L793.9 190.5 L793 191.7 L792.1 193 L791.2 194.3 L790.3 195.5 L789.3 196.8 L788.4 198 L787.5 199.3 L786.7 200.6 L785.8 201.8 L784.9 203.1 L784 204.3 L783.1 205.6 L782.3 206.9 L781.4 208.1 L780.5 209.4 L779.7 210.7 L778.8 211.9 L778 213.2 L777.2 214.5 L776.3 215.7 L775.5 217 L774.7 218.3 L773.9 219.5 L773.1 220.8 L772.3 222.1 L771.5 223.3 L770.7 224.6 L769.9 225.9 L769.1 227.1 L768.4 228.4 L767.6 229.7 L766.9 230.9 L766.1 232.2 L765.4 233.5 L764.6 234.7 L763.9 236 L763.2 237.3 L762.4 238.5 L761.7 239.8 L761 241.1 L760.3 242.3 L759.6 243.6 L758.9 244.9 L758.2 246.2 L757.6 247.4 L756.9 248.7 L756.2 250 L755.6 251.2 L754.9 252.5 L754.3 253.8 L753.7 255.1 L753 256.3 L752.4 257.6 L751.8 258.9 L751.2 260.1 L750.6 261.4 L750 262.7 L749.4 264 L748.8 265.2 L748.3 266.5 L747.7 267.8 L747.1 269 L746.6 270.3 L746.1 271.6 L745.5 272.9 L745 274.1 L744.5 275.4 L744 276.7 L743.4 278 L742.9 279.2 L742.5 280.5 L742 281.8 L741.5 283 L741 284.3 L740.6 285.6 L740.1 286.9 L739.7 288.1 L739.2 289.4 L738.8 290.7 L738.4 292 L737.9 293.2 L737.5 294.5 L737.1 295.8 L736.7 297.1 L736.4 298.3 L736 299.6 L735.6 300.9 L735.3 302.2 L734.9 303.4 L734.5 304.7 L734.2 306 L733.9 307.3 L733.6 308.5 L733.2 309.8 L732.9 311.1 L732.6 312.4 L732.3 313.6 L732.1 314.9 L731.8 316.2 L731.5 317.5 L731.3 318.7 L731 320"/>
</g>
<g fill="none" stroke="#ff1c00" stroke-width="1.389">
<path d="M651.1 113.1 L624.4 118.9"/>
<path d="M684.4 113.3 L660 116.9"/>
<path d="M622.2 145.3 L600.6 148"/>
<path d="M542.8 157.6 L526.7 161.7"/>
<path d="M549.4 159.4 L535 162.8"/>
<path d="M626.7 186.9 L617.8 185"/>
<path d="M677.8 164.4 L673.9 160"/>
<path d="M695.6 133.3 L691.7 130.6"/>
<path d="M796.7 111.1 L820.6 75.6"/>
<path d="M728.9 126.7 L722.2 116.7"/>
<path d="M725.6 166.7 L733.9 127.2"/>
<path d="M716.7 161.1 L713.9 145.6"/>
<path d="M860 52.2 L861.5 49.5 L861.4 47 L859.5 45.6 L855.6 45 L848 45.8 L833.9 48.9"/>
<path d="M958.3 47.2 L1037.8 85"/>
<path d="M972.2 49.4 L988.9 58.3"/>
<path d="M1070.6 98.7 L1093.9 111.1"/>
<path d="M981.1 112.2 L1036.1 135"/>
<path d="M957.8 120.6 L988.9 128.1"/>
<path d="M918.3 141.7 L940 139.8"/>
<path d="M1000.6 154.4 L1012.2 158"/>
<path d="M1180 118.9 L1185 122"/>
<path d="M1275 155.8 L1282.8 164.2"/>
</g>
<g fill="none" stroke="#dc11ff" stroke-width="1.389">
<path d="M647.8 118.9 L588.9 132.8"/>
<path d="M685.6 120 L652.8 123.9"/>
<path d="M535.6 180.9 L515 185.8"/>
<path d="M650 163.6 L642.8 163"/>
<path d="M626 171 L624.4 170.8"/>
<path d="M793.3 80.6 L790.5 78.6 L785.6 77.2 L781 76.8 L776.7 76.9"/>
<path d="M1005.6 71.1 L1043.9 88.9"/>
<path d="M1018.9 83.9 L1042.2 95.3"/>
<path d="M947.8 84.4 L970 93"/>
<path d="M924.4 96.7 L945 99.1"/>
</g>
<g fill="none" stroke="#59d100" stroke-width="1.389">
<path d="M606.1 145 L627.8 133.9"/>
<path d="M932.2 78.3 L940.9 93"/>
<path d="M1241.7 150.2 L1220 145"/>
<path d="M1201.7 155 L1178.9 153.1"/>
<path d="M1282.2 164.4 L1263.9 160"/>
<path d="M1327.2 192.8 L1296.1 186.1"/>
<path d="M1336.1 192 L1315 187.8"/>
</g>
<g fill="none" stroke="#00fa72" stroke-width="1.389">
<path d="M780.6 79.8 L767.8 83"/>
<path d="M852.2 50.2 L838.9 52.8"/>
<path d="M937.8 57.6 L956.9 62.8"/>
<path d="M1151.7 143.9 L1208.9 170"/>
</g>
<g fill="none" stroke="#ec84ee" stroke-width="1.389">
<path d="M1060.6 116.7 L1081.1 127"/>
</g>
<path d="M719.9 271h6.94M723.4 267.6v6.94M717.7 271h6.94M721.1 267.6v6.94M710.6 270.8h6.94M714.1 267.3v6.94M712.8 270.9h6.94M716.3 267.4v6.94M710.9 271h6.94M714.4 267.6v6.94M710.6 270.8h6.94M714.1 267.3v6.94M710.7 270.9h6.94M714.2 267.4v6.94M712.7 270.8h6.94M716.1 267.3v6.94M723.5 270.9h6.94M727 267.4v6.94M717.4 270.8h6.94M720.9 267.3v6.94M719.7 270.9h6.94M723.2 267.4v6.94M717.5 270.9h6.94M721 267.4v6.94M726.5 270.9h6.94M730 267.4v6.94M726.7 271h6.94M730.1 267.6v6.94M723.4 270.8h6.94M726.9 267.3v6.94M723.7 271h6.94M727.1 267.6v6.94M726.4 270.8h6.94M729.9 267.3v6.94M730.5 270.9h6.94M734 267.4v6.94M730.7 271h6.94M734.1 267.6v6.94M730.4 270.8h6.94M733.9 267.3v6.94M719.6 270.8h6.94M723.1 267.3v6.94M713 271h6.94M716.4 267.6v6.94M723.1 249.3h6.94M726.6 245.8v6.94M720.7 249h6.94M724.1 245.5v6.94M720.8 249.3h6.94M724.3 245.8v6.94M721 249.6h6.94M724.4 246.1v6.94M720.7 249h6.94M724.1 245.5v6.94M723.3 249.6h6.94M726.8 246.1v6.94M723 249h6.94M726.5 245.5v6.94M725.3 249.3h6.94M728.8 245.8v6.94M725.5 249.6h6.94M728.9 246.1v6.94M725.2 249h6.94M728.6 245.5v6.94M462.5 241h6.94M466 237.5v6.94M457.2 244.3h6.94M460.7 240.8v6.94M450.5 243h6.94M454 239.5v6.94M424 256.3h6.94M427.5 252.8v6.94M451.3 242.6h6.94M454.8 239.1v6.94M423.5 256h6.94M427 252.5v6.94M423.1 255.6h6.94M426.6 252.1v6.94M835 216.8h6.94M838.5 213.3v6.94M806.6 216.3h6.94M810.1 212.8v6.94M822.7 207.4h6.94M826.2 203.9v6.94M842.9 207.4h6.94M846.4 203.9v6.94M727.5 320h6.94M731 316.5v6.94" stroke="#ff0000" stroke-width="1.389" fill="none"/>
<path d="M623.2 117.9h2.3v2.3h-2.3zM658.9 115.9h2.3v2.3h-2.3zM599.5 147h2.3v2.3h-2.3zM525.6 160.7h2.3v2.3h-2.3zM533.9 161.8h2.3v2.3h-2.3zM616.6 184h2.3v2.3h-2.3zM672.8 159h2.3v2.3h-2.3zM690.6 129.6h2.3v2.3h-2.3zM819.5 74.6h2.3v2.3h-2.3zM721.1 115.7h2.3v2.3h-2.3zM732.8 126.2h2.3v2.3h-2.3zM712.8 144.6h2.3v2.3h-2.3zM832.8 47.9h2.3v2.3h-2.3zM1036.6 84h2.3v2.3h-2.3zM987.8 57.3h2.3v2.3h-2.3zM1092.8 110.1h2.3v2.3h-2.3zM1034.9 134h2.3v2.3h-2.3zM987.8 127.1h2.3v2.3h-2.3zM938.9 138.8h2.3v2.3h-2.3zM1011.1 157h2.3v2.3h-2.3zM1183.8 121h2.3v2.3h-2.3zM1281.6 163.2h2.3v2.3h-2.3zM587.8 131.8h2.3v2.3h-2.3zM651.6 122.9h2.3v2.3h-2.3zM513.9 184.8h2.3v2.3h-2.3zM641.6 162h2.3v2.3h-2.3zM623.2 169.8h2.3v2.3h-2.3zM775.6 75.9h2.3v2.3h-2.3zM1042.8 87.9h2.3v2.3h-2.3zM1041 94.3h2.3v2.3h-2.3zM968.9 92h2.3v2.3h-2.3zM943.9 98.1h2.3v2.3h-2.3zM626.6 132.9h2.3v2.3h-2.3zM939.8 92h2.3v2.3h-2.3zM1218.8 144h2.3v2.3h-2.3zM1177.8 152.1h2.3v2.3h-2.3zM1262.8 159h2.3v2.3h-2.3zM1294.9 185.1h2.3v2.3h-2.3zM1313.8 186.8h2.3v2.3h-2.3zM766.6 82h2.3v2.3h-2.3zM837.8 51.8h2.3v2.3h-2.3zM955.8 61.8h2.3v2.3h-2.3zM1207.8 169h2.3v2.3h-2.3zM1079.9 126h2.3v2.3h-2.3z" fill="#ff6347" stroke="none"/>
<path d="M479 242.2 L475.5 245.3 L471.9 248.3 L468 251.2 L464.1 254 L460.1 256.5 L456.1 258.8 L452.1 260.8 L448.1 262.6 L444.3 263.9 L440.5 265 L437 265.6 L433.7 265.9 L430.6 265.8 L427.9 265.3 L425.6 264.5 L423.6 263.3 L422.2 261.7 L421.3 259.9 L421 257.7 L421.2 255.3 L422.1 252.6 L423.6 249.8 L425.7 246.8 L428.5 243.8 L431.8 240.7 L435.7 237.5 L440 234.5 L444.7 231.5 L449.6 228.7 L454.8 226.1 L460 223.8 L465.1 221.7 L470.1 220 L474.8 218.7 L479.1 217.7 L482.9 217.2 L486.1 217.1 L488.8 217.4 L490.8 218.2 L492.2 219.3 L492.9 220.8 L493 222.7 L492.4 224.9 L491.3 227.4 L489.7 230.1 L487.6 233 L485 236 L482.2 239.1 L479 242.2" fill="none" stroke="#59d100" stroke-width="2.083" stroke-linejoin="round"/>
<path d="M753.7 244.5 L752.2 247.6 L750.5 250.6 L748.5 253.5 L746.1 256.3 L743.6 258.8 L740.8 261.1 L737.9 263.1 L734.8 264.8 L731.6 266.2 L728.4 267.3 L725.1 267.9 L722 268.2 L718.9 268.1 L715.9 267.6 L713.2 266.8 L710.7 265.6 L708.4 264 L706.6 262.2 L705.1 260 L704 257.6 L703.3 254.9 L703.2 252.1 L703.5 249.1 L704.2 246 L705.5 242.9 L707.2 239.8 L709.3 236.8 L711.8 233.8 L714.6 231 L717.7 228.4 L721 226.1 L724.5 224 L728 222.3 L731.5 221 L735 220 L738.4 219.5 L741.6 219.4 L744.5 219.7 L747.2 220.5 L749.5 221.6 L751.5 223.1 L753.1 225 L754.4 227.2 L755.2 229.7 L755.7 232.4 L755.8 235.3 L755.4 238.3 L754.7 241.4 L753.7 244.5" fill="none" stroke="#dc11ff" stroke-width="2.083" stroke-linejoin="round"/>
<path d="M747.2 266 L746.1 269.1 L744.7 272.1 L743 275.1 L741 277.8 L738.7 280.4 L736.2 282.7 L733.5 284.8 L730.6 286.5 L727.5 287.9 L724.4 288.9 L721.3 289.6 L718.1 289.9 L715 289.8 L712 289.3 L709.2 288.5 L706.5 287.2 L704.1 285.7 L702.1 283.8 L700.3 281.6 L699 279.1 L698 276.5 L697.5 273.6 L697.5 270.6 L697.9 267.5 L698.8 264.4 L700.2 261.3 L702 258.3 L704.1 255.3 L706.6 252.6 L709.5 250 L712.5 247.7 L715.7 245.7 L719.1 244 L722.5 242.7 L725.8 241.7 L729.1 241.2 L732.3 241.1 L735.3 241.4 L738 242.1 L740.5 243.3 L742.7 244.8 L744.5 246.6 L746 248.8 L747.1 251.2 L747.9 253.9 L748.3 256.8 L748.3 259.8 L747.9 262.9 L747.2 266" fill="none" stroke="#ff1c00" stroke-width="2.083" stroke-linejoin="round"/>
<path d="M863.6 216.4 L862.8 219.5 L861.6 222.5 L860 225.4 L858.1 228.1 L855.9 230.6 L853.5 232.9 L850.8 234.8 L848 236.5 L845 237.9 L841.9 238.9 L838.7 239.5 L835.6 239.8 L832.5 239.7 L829.4 239.3 L826.6 238.4 L823.9 237.2 L821.5 235.7 L819.4 233.9 L817.6 231.8 L816.2 229.4 L815.1 226.8 L814.5 224 L814.2 221 L814.5 218 L815.1 214.8 L816.2 211.7 L817.7 208.7 L819.5 205.7 L821.7 202.8 L824.2 200.2 L827 197.8 L830 195.7 L833.1 194 L836.3 192.6 L839.5 191.7 L842.7 191.1 L845.9 191 L848.9 191.3 L851.8 192.1 L854.4 193.3 L856.8 194.8 L858.9 196.8 L860.7 199 L862.1 201.5 L863.2 204.2 L863.9 207.2 L864.2 210.2 L864.1 213.3 L863.6 216.4" fill="none" stroke="#00fa72" stroke-width="2.083" stroke-linejoin="round"/>
<path d="M742.9 316.9 L742.7 320 L742.1 323.1 L741.2 326.1 L739.9 328.9 L738.3 331.5 L736.5 333.9 L734.3 336 L731.9 337.8 L729.3 339.2 L726.4 340.3 L723.5 341 L720.4 341.3 L717.3 341.2 L714.1 340.7 L711 339.8 L708.1 338.5 L705.2 336.9 L702.6 335 L700.3 332.7 L698.3 330.2 L696.6 327.5 L695.3 324.6 L694.5 321.6 L694.1 318.5 L694.2 315.4 L694.7 312.3 L695.6 309.3 L697 306.4 L698.8 303.6 L700.9 301.1 L703.3 298.9 L706 296.9 L708.9 295.3 L711.9 294 L715 293.1 L718.2 292.6 L721.3 292.5 L724.4 292.8 L727.3 293.5 L730.1 294.6 L732.7 296 L735 297.8 L737.1 300 L738.9 302.3 L740.4 305 L741.5 307.8 L742.3 310.8 L742.8 313.8 L742.9 316.9" fill="none" stroke="#ec84ee" stroke-width="2.083" stroke-linejoin="round"/>
<g font-family="'DejaVu Sans','Liberation Sans',sans-serif" font-size="11.11" fill="#ffffff" text-anchor="middle">
<text x="454.4" y="244.7">LEO</text>
<text x="729.4" y="247.2">NTA</text>
<text x="722.9" y="268.4">STA</text>
<text x="839.4" y="219.4">AND</text>
<text x="718.3" y="320.4">OER</text>
</g>
<g font-family="'DejaVu Sans Mono','Liberation Mono',monospace" font-size="13.89" fill="#ffffff" xml:space="preserve">
<text x="315.3" y="30">KR003J</text>
<text x="315.3" y="42.7">Beg: 20251111 09:58:40 (sol = 228.91°)</text>
<text x="315.3" y="56.8">End: 20251111 20:56:59 (sol = 229.37°)</text>
<text x="315.3" y="68.6">--------------------------------------</text>
<text x="315.3" y="81.9">...: 35</text>
<text x="315.3" y="95.1">STA: 23</text>
<text x="315.3" y="108">NTA: 10</text>
<text x="315.3" y="121.4">LEO: 7</text>
<text x="315.3" y="134.8">AND: 4</text>
<text x="315.3" y="147.5">OER: 1</text>
</g>
<clipPath id="axc"><rect x="19.7" y="641.6" width="1765.8" height="200.69999999999993"/></clipPath>
<g clip-path="url(#axc)">
<g font-family="'DejaVu Sans','Liberation Sans',sans-serif" font-size="27.78" fill="#525252">
<text transform="translate(148.4 697) rotate(-90)">APR</text>
<text transform="translate(293.5 702.4) rotate(-90)">MAY</text>
<text transform="translate(435.5 690.4) rotate(-90)">JUN</text>
<text transform="translate(575.5 684.4) rotate(-90)">JUL</text>
<text transform="translate(722.2 700.2) rotate(-90)">AUG</text>
<text transform="translate(871.5 694.8) rotate(-90)">SEP</text>
<text transform="translate(1015.2 700.6) rotate(-90)">OCT</text>
<text transform="translate(1168.5 704.4) rotate(-90)">NOV</text>
<text transform="translate(1317.5 701.7) rotate(-90)">DEC</text>
<text transform="translate(1468.5 688.1) rotate(-90)">JAN</text>
<text transform="translate(1627.2 696.7) rotate(-90)">FEB</text>
<text transform="translate(1765.6 706) rotate(-90)">MAR</text>
</g>
<g stroke="#808080" stroke-width="2.083" stroke-dasharray="2.083 3.437" fill="none">
<path d="M73.8 842.3 V641.6"/>
<path d="M218 842.3 V641.6"/>
<path d="M365 842.3 V641.6"/>
<path d="M505 842.3 V641.6"/>
<path d="M650 842.3 V641.6"/>
<path d="M797 842.3 V641.6"/>
<path d="M940 842.3 V641.6"/>
<path d="M1091 842.3 V641.6"/>
<path d="M1239 842.3 V641.6"/>
<path d="M1394 842.3 V641.6"/>
<path d="M1548 842.3 V641.6"/>
<path d="M1687.1 842.3 V641.6"/>
</g>
<path d="M106 834H129.2M165 834H345M366 834H625M635 834H786M807 834H899M920 834H973M984 834H1066M1082 834H1203M1244 834H1326M1337 834H1355M1381 834H1444M1459 834H1512M1523 834H1547M1723.9 834H1748M1758 834H1782" stroke="#ec84ee" stroke-width="4.17" fill="none"/>
<path d="M165 818H188M223 818H286M312 818H340M366 818H492M508 818H654M704 818H737M773 818H845M871 818H988M1003 818H1017M1062 818H1213M1244 818H1267M1293 818H1316M1342 818H1365M1386 818H1429M1459 818H1483M1548 818H1571" stroke="#dc11ff" stroke-width="4.17" fill="none"/>
<path d="M165 802H188M258 802H487M508 802H615M626 802H718M729 802H826M949 802H1149M1160 802H1248M1258 802H1444M1459 802H1483M1552 802H1576" stroke="#ff1c00" stroke-width="4.17" fill="none"/>
<path d="M194 785H218M321 785H507M518 785H541M557 785H683M807 785H831M954 785H973M988 785H1125M1155 785H1218M1244 785H1267M1317 785H1341M1396 785H1419M1464 785H1650" stroke="#ffb10d" stroke-width="4.17" fill="none"/>
<path d="M341 769H370M410 769H448M469 769H492M527 769H546M562 769H590M616 769H649M959 769H988M1062 769H1086M1101 769H1125M1160 769H1194M1248 769H1272M1425 769H1512" stroke="#fff000" stroke-width="4.17" fill="none"/>
<path d="M420 752H443M532 752H556M567 752H590M621 752H742M969 752H1135M1185 752H1346M1469 752H1493" stroke="#a4ff27" stroke-width="4.17" fill="none"/>
<path d="M429 736H453M576 736H733M993 736H1105M1116 736H1223M1263 736H1292M1489 736H1512" stroke="#59d100" stroke-width="4.17" fill="none"/>
<path d="M591 720H615M655 720H772M1072 720H1243M1263 720H1287" stroke="#00fa72" stroke-width="4.17" fill="none"/>
<path d="M596 703H733M1091 703H1120M1199 703H1223M1273 703H1326" stroke="#00e0ff" stroke-width="4.17" fill="none"/>
<path d="M1111 687H1135" stroke="#000dcd" stroke-width="4.17" fill="none"/>
<path d="M1142.5 842.3 V641.6" stroke="#ff0000" stroke-width="1.389" stroke-dasharray="5.14 2.22" fill="none"/>
<path d="M1144.8 842.3 V641.6" stroke="#ff0000" stroke-width="1.389" stroke-dasharray="5.14 2.22" fill="none"/>
<path d="M113.4 834h7.6M117.2 830.2v7.6M240.9 834h7.6M244.7 830.2v7.6M511.2 834h7.6M515 830.2v7.6M707.2 834h7.6M711 830.2v7.6M833.2 834h7.6M837 830.2v7.6M962.2 834h7.6M966 830.2v7.6M986.2 834h7.6M990 830.2v7.6M1116.2 834h7.6M1120 830.2v7.6M1295.2 834h7.6M1299 830.2v7.6M1342.2 834h7.6M1346 830.2v7.6M1413.2 834h7.6M1417 830.2v7.6M1482.2 834h7.6M1486 830.2v7.6M1531.2 834h7.6M1535 830.2v7.6M1732.2 834h7.6M1736 830.2v7.6M1766 834h7.6M1769.8 830.2v7.6M172 818h7.6M175.8 814.2v7.6M255.9 818h7.6M259.7 814.2v7.6M323.2 818h7.6M327 814.2v7.6M437.2 818h7.6M441 814.2v7.6M599.2 818h7.6M603 814.2v7.6M717.2 818h7.6M721 814.2v7.6M793.2 818h7.6M797 814.2v7.6M939.2 818h7.6M943 814.2v7.6M1006.2 818h7.6M1010 814.2v7.6M1153.2 818h7.6M1157 814.2v7.6M1251.2 818h7.6M1255 814.2v7.6M1300.2 818h7.6M1304 814.2v7.6M1349.2 818h7.6M1353 814.2v7.6M1403.2 818h7.6M1407 814.2v7.6M1467.2 818h7.6M1471 814.2v7.6M1555.2 818h7.6M1559 814.2v7.6M174 802h7.6M177.8 798.2v7.6M377.9 802h7.6M381.7 798.2v7.6M545.2 802h7.6M549 798.2v7.6M682.2 802h7.6M686 798.2v7.6M741.2 802h7.6M745 798.2v7.6M1075.2 802h7.6M1079 798.2v7.6M1217.2 802h7.6M1221 798.2v7.6M1305.2 802h7.6M1309 798.2v7.6M1467.2 802h7.6M1471 798.2v7.6M1560.2 802h7.6M1564 798.2v7.6M202.2 785h7.6M206 781.2v7.6M400 785h7.6M403.8 781.2v7.6M525.2 785h7.6M529 781.2v7.6M639.2 785h7.6M643 781.2v7.6M815.2 785h7.6M819 781.2v7.6M959.2 785h7.6M963 781.2v7.6M1040.2 785h7.6M1044 781.2v7.6M1187.9 785h7.6M1191.7 781.2v7.6M1251.2 785h7.6M1255 781.2v7.6M1325.2 785h7.6M1329 781.2v7.6M1403.2 785h7.6M1407 781.2v7.6M1546.2 785h7.6M1550 781.2v7.6M356.2 769h7.6M360 765.2v7.6M426.2 769h7.6M430 765.2v7.6M476.2 769h7.6M480 765.2v7.6M535.2 769h7.6M539 765.2v7.6M571.2 769h7.6M575 765.2v7.6M631.2 769h7.6M635 765.2v7.6M974.2 769h7.6M978 765.2v7.6M1070.2 769h7.6M1074 765.2v7.6M1109.2 769h7.6M1113 765.2v7.6M1178.2 769h7.6M1182 765.2v7.6M1256.2 769h7.6M1260 765.2v7.6M1467.2 769h7.6M1471 765.2v7.6M427.2 752h7.6M431 748.2v7.6M540.2 752h7.6M544 748.2v7.6M574.2 752h7.6M578 748.2v7.6M704.2 752h7.6M708 748.2v7.6M1094.2 752h7.6M1098 748.2v7.6M1271.2 752h7.6M1275 748.2v7.6M1477.2 752h7.6M1481 748.2v7.6M437.2 736h7.6M441 732.2v7.6M631.2 736h7.6M635 732.2v7.6M1039.2 736h7.6M1043 732.2v7.6M1168.2 736h7.6M1172 732.2v7.6M1275.2 736h7.6M1279 732.2v7.6M1497.2 736h7.6M1501 732.2v7.6M599.2 720h7.6M603 716.2v7.6M727.2 720h7.6M731 716.2v7.6M1188.2 720h7.6M1192 716.2v7.6M1271.2 720h7.6M1275 716.2v7.6M687.2 703h7.6M691 699.2v7.6M1102.2 703h7.6M1106 699.2v7.6M1207.2 703h7.6M1211 699.2v7.6M1300.2 703h7.6M1304 699.2v7.6M1119.2 687h7.6M1123 683.2v7.6" stroke="#ffffff" stroke-width="2.08" fill="none"/>
<g font-family="'DejaVu Sans','Liberation Sans',sans-serif" font-size="11.11" fill="#ffffff" text-anchor="middle">
<text x="117.6" y="831.6">KSE</text>
<text x="255" y="831.6">ETA</text>
<text x="494.4" y="831.6">NZC</text>
<text x="710.5" y="831.6">NDA</text>
<text x="853" y="831.6">SPE</text>
<text x="945.4" y="831.6">ARD</text>
<text x="1025" y="831.6">EGE</text>
<text x="1142.5" y="831.6">NTA</text>
<text x="1283.9" y="831.6">MON</text>
<text x="1342.5" y="831.6">URS</text>
<text x="1412.5" y="831.6">AHY</text>
<text x="1485.5" y="831.6">GUM</text>
<text x="1535" y="831.6">OHY</text>
<text x="1736" y="831.6">XHE</text>
<text x="1770" y="831.6">EVI</text>
<text x="175.5" y="815.6">AVB</text>
<text x="254.5" y="815.6">ELY</text>
<text x="323.8" y="815.6">CAM</text>
<text x="431.9" y="815.6">SSG</text>
<text x="578.8" y="815.6">PCA</text>
<text x="720.5" y="815.6">AUD</text>
<text x="809" y="815.6">AUR</text>
<text x="931" y="815.6">DSX</text>
<text x="1010" y="815.6">OCU</text>
<text x="1137.5" y="815.6">OER</text>
<text x="1254.8" y="815.6">DKD</text>
<text x="1304.5" y="815.6">DSV</text>
<text x="1352" y="815.6">ALY</text>
<text x="1407.5" y="815.6">JLE</text>
<text x="1471" y="815.6">SCC</text>
<text x="1559.5" y="815.6">FEV</text>
<text x="176.5" y="799.6">LYR</text>
<text x="372.5" y="799.6">JMC</text>
<text x="558.8" y="799.6">JPE</text>
<text x="672" y="799.6">PAU</text>
<text x="774.1" y="799.6">NIA</text>
<text x="1049" y="799.6">STA</text>
<text x="1205.4" y="799.6">NOO</text>
<text x="1353.3" y="799.6">COM</text>
<text x="1471" y="799.6">NCC</text>
<text x="1564" y="799.6">FED</text>
<text x="205.2" y="782.6">HVI</text>
<text x="411.9" y="782.6">ARI</text>
<text x="529.5" y="782.6">SZC</text>
<text x="617.8" y="782.6">CAP</text>
<text x="819" y="782.6">NUE</text>
<text x="961.2" y="782.6">OCT</text>
<text x="1059.4" y="782.6">ORI</text>
<text x="1186.5" y="782.6">AMO</text>
<text x="1255.5" y="782.6">DPC</text>
<text x="1329" y="782.6">XVI</text>
<text x="1407.5" y="782.6">QUA</text>
<text x="1559.6" y="782.6">AAN</text>
<text x="352.9" y="766.6">TAH</text>
<text x="431.2" y="766.6">JEA</text>
<text x="480.5" y="766.6">JIP</text>
<text x="538.8" y="766.6">PPS</text>
<text x="578.5" y="766.6">ZCS</text>
<text x="632.5" y="766.6">GDR</text>
<text x="970" y="766.6">DRA</text>
<text x="1073.1" y="766.6">LUM</text>
<text x="1113" y="766.6">RPU</text>
<text x="1176.2" y="766.6">THA</text>
<text x="1259.2" y="766.6">PSU</text>
<text x="1470.6" y="766.6">XCB</text>
<text x="431.5" y="749.6">JRC</text>
<text x="544" y="749.6">CAN</text>
<text x="578.5" y="749.6">FAN</text>
<text x="681.5" y="749.6">PER</text>
<text x="1049.1" y="749.6">CTA</text>
<text x="1264.4" y="749.6">HYD</text>
<text x="1481" y="749.6">XUM</text>
<text x="441.6" y="733.6">COR</text>
<text x="657.1" y="733.6">SDA</text>
<text x="1049" y="733.6">LMI</text>
<text x="1166.5" y="733.6">LEO</text>
<text x="1274.5" y="733.6">EHY</text>
<text x="1499.8" y="733.6">ECV</text>
<text x="603" y="717.6">JXA</text>
<text x="714.8" y="717.6">KCG</text>
<text x="1157.5" y="717.6">AND</text>
<text x="1275" y="717.6">DAD</text>
<text x="666.5" y="700.6">ERI</text>
<text x="1108.5" y="700.6">SLD</text>
<text x="1211" y="700.6">ORS</text>
<text x="1298.8" y="700.6">GEM</text>
<text x="1123" y="684.6">KUM</text>
</g>
</g>
<rect x="19.7" y="641.6" width="1765.8" height="200.69999999999993" fill="none" stroke="#ffffff" stroke-width="1.11"/>
<path d="M19.7 842.3v4.86M264.9 842.3v4.86M510.2 842.3v4.86M755.5 842.3v4.86M1000.7 842.3v4.86M1246 842.3v4.86M1491.2 842.3v4.86M1736.5 842.3v4.86" stroke="#ffffff" stroke-width="1.11" fill="none"/>
<g font-family="'DejaVu Sans','Liberation Sans',sans-serif" font-size="13.89" fill="#ffffff" text-anchor="middle">
<text x="19.7" y="862.1">0</text>
<text x="264.9" y="862.1">50</text>
<text x="510.2" y="862.1">100</text>
<text x="755.5" y="862.1">150</text>
<text x="1000.7" y="862.1">200</text>
<text x="1246" y="862.1">250</text>
<text x="1491.2" y="862.1">300</text>
<text x="1736.5" y="862.1">350</text>
<text x="902.6" y="881.5">Solar longitude (deg)</text>
</g>
</svg>
</body></html>
